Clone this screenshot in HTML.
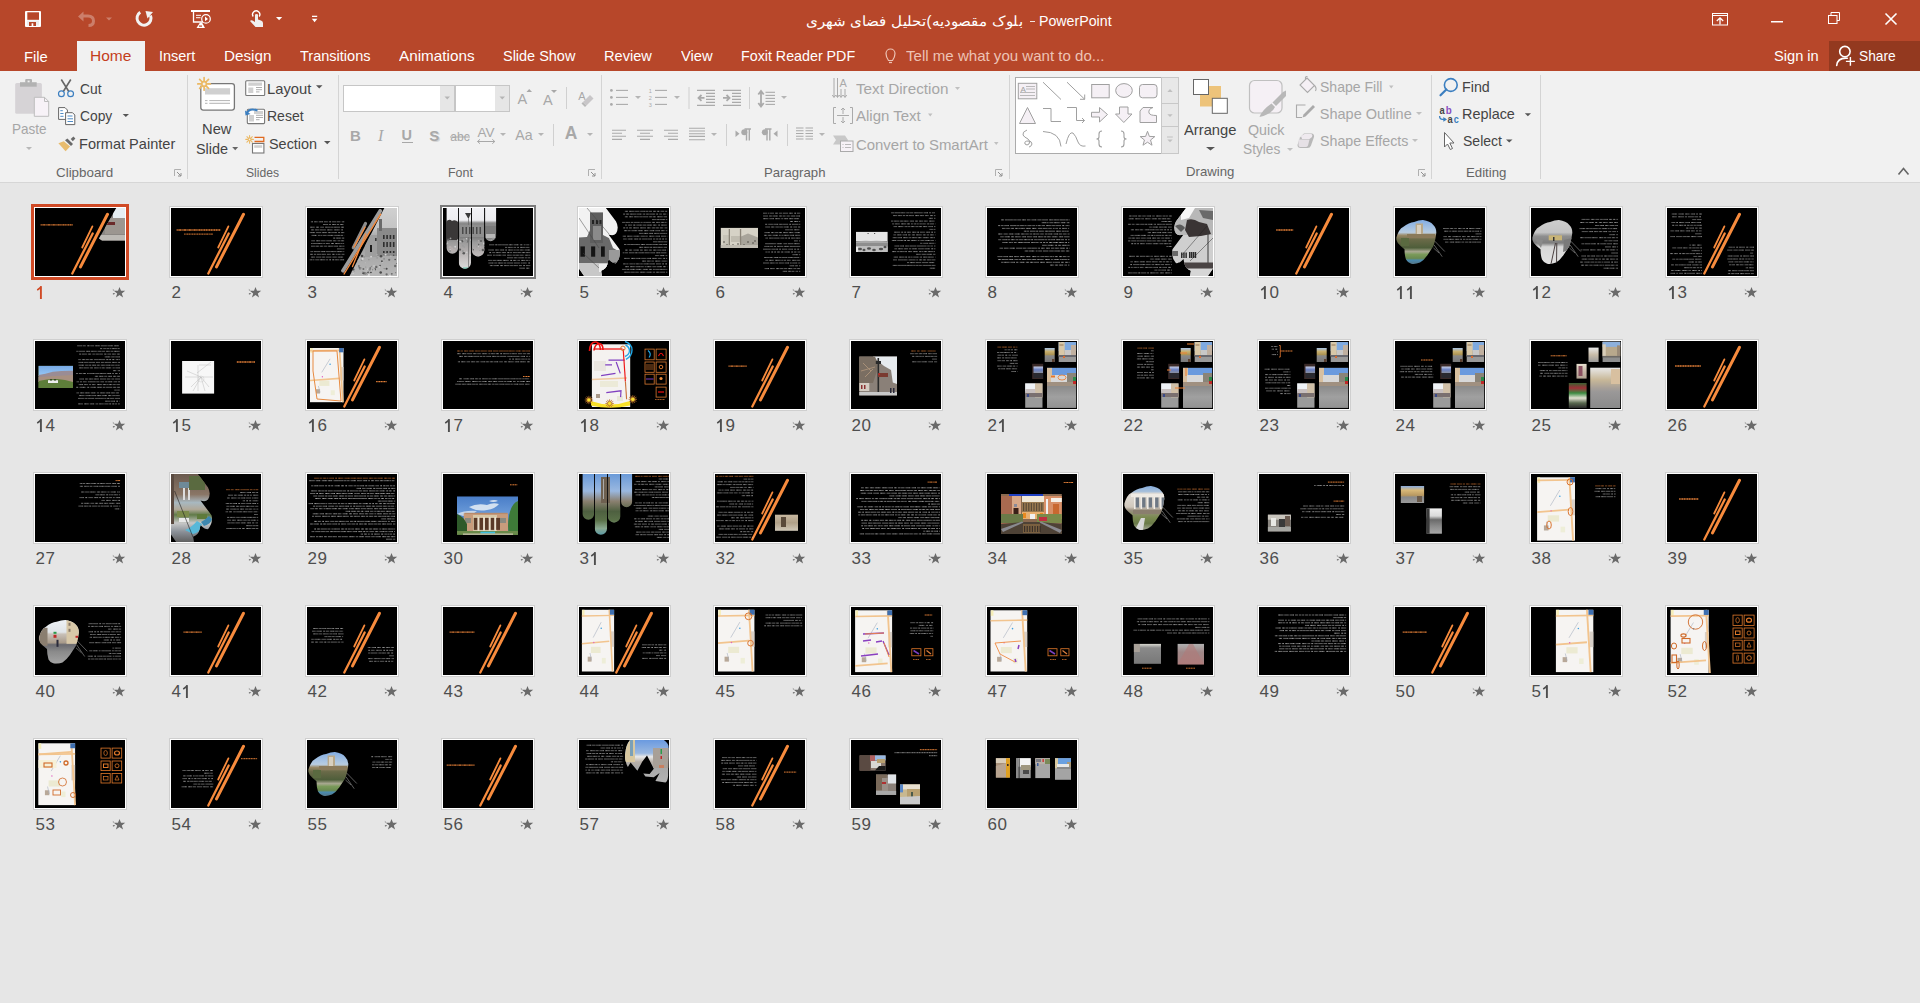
<!DOCTYPE html>
<html><head><meta charset="utf-8"><title>PowerPoint</title>
<style>
html,body{margin:0;padding:0}
body{width:1920px;height:1003px;overflow:hidden;position:relative;background:#E6E6E6;font-family:"Liberation Sans",sans-serif}
.abs{position:absolute}
.tx{position:absolute;white-space:pre;transform-origin:0 0;font-family:"Liberation Sans",sans-serif}
svg{position:absolute;overflow:visible}
</style></head><body>

<div class="abs" style="left:0;top:0;width:1920px;height:71px;background:#B7472A"></div>
<div class="abs" style="left:77px;top:41px;width:68px;height:30px;background:#F1F1F1"></div>
<div class="abs" style="left:1829px;top:41px;width:91px;height:30px;background:#93391F"></div>
<div class="abs" style="left:0;top:71px;width:1920px;height:111px;background:#F1F1F1"></div>
<div class="abs" style="left:0;top:182px;width:1920px;height:1px;background:#D6D6D6"></div>
<div class="abs" style="left:187px;top:75px;width:1px;height:104px;background:#D4D4D4"></div>
<div class="abs" style="left:338px;top:75px;width:1px;height:104px;background:#D4D4D4"></div>
<div class="abs" style="left:601px;top:75px;width:1px;height:104px;background:#D4D4D4"></div>
<div class="abs" style="left:1009px;top:75px;width:1px;height:104px;background:#D4D4D4"></div>
<div class="abs" style="left:1431px;top:75px;width:1px;height:104px;background:#D4D4D4"></div>
<div class="abs" style="left:1540px;top:75px;width:1px;height:104px;background:#D4D4D4"></div>
<div class="abs" style="left:343px;top:85px;width:110px;height:25px;border:1px solid #C6C6C6;background:#FFF"></div>
<div class="abs" style="left:440px;top:86px;width:14px;height:25px;background:#E6E6E6"></div>
<div class="abs" style="left:455px;top:85px;width:53px;height:25px;border:1px solid #C6C6C6;background:#FFF"></div>
<div class="abs" style="left:495px;top:86px;width:14px;height:25px;background:#E6E6E6"></div>

<svg style="left:0;top:0" width="1920" height="183" viewBox="0 0 1920 183"><g><rect x="25" y="11" width="16" height="16" rx="1" fill="#fff"/><rect x="27.3" y="12.3" width="11.7" height="7.5" fill="#B7472A"/><rect x="27" y="20.5" width="12" height="5" fill="#EDEDED"/><rect x="29" y="22" width="7" height="4" fill="#B7472A"/><rect x="31.6" y="23.3" width="1.7" height="2.7" fill="#fff"/><path d="M78 16.5 L83.5 11.5 L83.5 14.5 L88 14.5 Q95 14.5 95 21 Q95 27 88.5 27 L88.5 24 Q92 24 92 21 Q92 17.5 88 17.5 L83.5 17.5 L83.5 21.5 Z" fill="#fff" opacity="0.3"/><path d="M106 17.5 L112 17.5 L109.0 20.5 Z" fill="rgba(255,255,255,0.3)"/><path d="M140.2 12.3 A7 7 0 1 0 150.5 15.5" fill="none" stroke="#F2F2F2" stroke-width="3"/><path d="M145.5 11 L153 12 L147.5 18.5 Z" fill="#F2F2F2"/><rect x="191" y="10" width="19" height="2" fill="#fff"/><path d="M193.5 12 L193.5 22 L203 22" fill="none" stroke="#fff" stroke-width="1.3"/><path d="M196 15.3 H201 M196 17.7 H200.5" stroke="#fff" stroke-width="1"/><circle cx="206" cy="18.9" r="4.3" fill="none" stroke="#fff" stroke-width="1.2"/><path d="M205 16.5 L208 18.9 L205 21.3 Z" fill="#fff"/><path d="M200 22.5 L196.5 28 L205 28 L202 22.5 Z" fill="#fff"/><rect x="199" y="25.5" width="3" height="1.2" fill="#B7472A"/><path d="M253.2 16.5 A3.6 3.6 0 1 1 259.2 16.5" fill="none" stroke="#fff" stroke-width="1.4"/><path d="M255 14.5 Q256.6 13.5 258 14.5 L258 19.5 L261 20.5 Q263 21.2 263 23 L263 27 L255.5 27 L250 21 Q251 19.8 252.5 20.6 L255 22 Z" fill="#F0F0F0"/><path d="M276 17 L282.2 17 L279.1 20.2 Z" fill="#fff"/><rect x="312" y="15.7" width="5.2" height="1.3" fill="#fff"/><path d="M311.8 18.8 L317.4 18.8 L314.6 22.2 Z" fill="#fff"/><rect x="1712.5" y="13.5" width="15" height="11.5" fill="none" stroke="#fff" stroke-width="1"/><path d="M1713 15.5 H1727" stroke="#fff" stroke-width="1"/><path d="M1720 24.5 V17.8 M1716.8 21 L1720 17.8 L1723.2 21" fill="none" stroke="#fff" stroke-width="1.3"/><rect x="1771" y="21" width="12" height="1.5" fill="#fff"/><rect x="1828.5" y="15.5" width="8.5" height="8" fill="none" stroke="#fff" stroke-width="1"/><path d="M1831 15.5 V12.5 H1839.5 V20.5 H1837" fill="none" stroke="#fff" stroke-width="1"/><path d="M1885.5 13.5 L1896.5 24.5 M1896.5 13.5 L1885.5 24.5" stroke="#fff" stroke-width="1.6"/><circle cx="1844.9" cy="51.6" r="5.2" fill="none" stroke="#fff" stroke-width="1.6"/><path d="M1836.7 65.5 Q1837.5 57.5 1847.3 58.2" fill="none" stroke="#fff" stroke-width="1.6" stroke-linecap="round"/><path d="M1845.9 61.4 H1854.9 M1850.4 57.1 V65.7" stroke="#fff" stroke-width="1.4"/><path d="M888.5 60.5 Q886 57 886 53.5 A4.5 4.5 0 0 1 895 53.5 Q895 57 892.5 60.5 Z" fill="none" stroke="#EDC3B5" stroke-width="1.2"/><path d="M889 62.5 H892" stroke="#EDC3B5" stroke-width="1.3"/></g><rect x="15.2" y="83" width="26.7" height="30.7" rx="1.5" fill="#D6D3D6"/><rect x="20" y="82.2" width="16.7" height="4.5" fill="#B2B2B2"/><rect x="25.2" y="79" width="6.8" height="4" rx="1" fill="#B2B2B2"/><rect x="27.6" y="80.6" width="2" height="1.7" fill="#F1F1F1"/><path d="M34.3 97.3 H44.5 L48.7 101.5 V116.3 H34.3 Z" fill="#F7F2F7" stroke="#BDBDBD" stroke-width="1"/><path d="M44.5 97.3 V101.5 H48.7" fill="none" stroke="#BDBDBD" stroke-width="1"/><path d="M26 147 L32 147 L29.0 150 Z" fill="#B8B8B8"/><path d="M61.3 79.5 L68.8 91.5 M70.8 79.5 L63.3 91.5" stroke="#666" stroke-width="1.6"/><circle cx="61.4" cy="93.7" r="2.9" fill="none" stroke="#3C7FC0" stroke-width="1.2"/><circle cx="70.6" cy="93.7" r="2.9" fill="none" stroke="#3C7FC0" stroke-width="1.2"/><path d="M58.6 107.6 H65 L67.4 110 V119.4 H58.6 Z" fill="#fff" stroke="#666" stroke-width="1"/><path d="M60.3 110.7 H62.8 M60.3 113.5 H63.5 M60.3 116.3 H63.5" stroke="#3C7FC0" stroke-width="0.9"/><path d="M65.6 112.7 H72.5 L74.8 115 V124.6 H65.6 Z" fill="#fff" stroke="#666" stroke-width="1"/><path d="M67.5 116 H72.5 M67.5 118.8 H73 M67.5 121.5 H73" stroke="#3C7FC0" stroke-width="0.9"/><path d="M122.7 114 L129 114 L125.85 117 Z" fill="#555"/><path d="M58.4 143.3 L63.8 141.2 L70.1 146.6 L65.6 151.3 Z" fill="#E8BC6E"/><path d="M65 140.3 L67.4 138.5 L73 143.9 L71 146 Z" fill="#6A6A6A"/><path d="M70.7 139.1 L73.4 136.4 L75.4 138.5 L72.8 141.2 Z" fill="#6A6A6A"/><path d="M174.5 176.0 V169.5 H181.0" fill="none" stroke="#B0B0B0" stroke-width="1"/><path d="M177.0 172.0 L181.0 176.0 M181.0 173.0 V176.0 H178.0" fill="none" stroke="#909090" stroke-width="1"/><path d="M588.5 176.0 V169.5 H595.0" fill="none" stroke="#B0B0B0" stroke-width="1"/><path d="M591.0 172.0 L595.0 176.0 M595.0 173.0 V176.0 H592.0" fill="none" stroke="#909090" stroke-width="1"/><path d="M995.5 176.0 V169.5 H1002.0" fill="none" stroke="#B0B0B0" stroke-width="1"/><path d="M998.0 172.0 L1002.0 176.0 M1002.0 173.0 V176.0 H999.0" fill="none" stroke="#909090" stroke-width="1"/><path d="M1418.5 176.0 V169.5 H1425.0" fill="none" stroke="#B0B0B0" stroke-width="1"/><path d="M1421.0 172.0 L1425.0 176.0 M1425.0 173.0 V176.0 H1422.0" fill="none" stroke="#909090" stroke-width="1"/><rect x="200.8" y="83.6" width="33.6" height="26.5" rx="2.5" fill="#fff" stroke="#777" stroke-width="1.3"/><rect x="205" y="88.2" width="25.1" height="6.3" fill="#D0D0D0"/><path d="M205 100.6 H207.5 M209.3 100.6 H230 M205 103.3 H207.5 M209.3 103.3 H230" stroke="#A0A0A0" stroke-width="0.8"/><circle cx="204.1" cy="83.9" r="4" fill="#F1F1F1"/><path d="M206.40 83.90 L210.40 83.90 M205.73 85.53 L208.55 88.35 M204.10 86.20 L204.10 90.20 M202.47 85.53 L199.65 88.35 M201.80 83.90 L197.80 83.90 M202.47 82.27 L199.65 79.45 M204.10 81.60 L204.10 77.60 M205.73 82.27 L208.55 79.45" stroke="#EBB965" stroke-width="1.7" stroke-linecap="round"/><circle cx="204.1" cy="83.9" r="2.415" fill="none" stroke="#EBB965" stroke-width="1.36"/><path d="M232.2 147 L238.2 147 L235.2 150.2 Z" fill="#666"/><rect x="245.7" y="80.8" width="19" height="14.7" rx="1" fill="#fff" stroke="#777" stroke-width="1.1"/><rect x="248.3" y="82.5" width="13.7" height="3.3" fill="#D0D0D0"/><rect x="248.3" y="87.5" width="5" height="5.5" fill="#D0D0D0"/><path d="M256 87.5 H262 M256 89.7 H262 M256 91.9 H259.5" stroke="#999" stroke-width="0.8"/><path d="M316 85.3 L322.5 85.3 L319.25 88.5 Z" fill="#555"/><rect x="247.3" y="109.3" width="17.3" height="14.3" rx="1" fill="#fff" stroke="#777" stroke-width="1.1"/><rect x="249" y="115" width="5" height="6.5" fill="#D0D0D0"/><rect x="254" y="111" width="9" height="3" fill="#D0D0D0"/><path d="M256 115.3 H263 M256 117.5 H263 M256 119.7 H259.5" stroke="#999" stroke-width="0.8"/><path d="M246.5 114 Q249 107.5 257.5 110.5" fill="none" stroke="#3C7FC0" stroke-width="2"/><path d="M245 110.5 L245.5 115.5 L250.5 114 Z" fill="#3C7FC0"/><path d="M251.00 139.40 L253.40 139.40 M250.59 140.39 L252.29 142.09 M249.60 140.80 L249.60 143.20 M248.61 140.39 L246.91 142.09 M248.20 139.40 L245.80 139.40 M248.61 138.41 L246.91 136.71 M249.60 138.00 L249.60 135.60 M250.59 138.41 L252.29 136.71" stroke="#EBB965" stroke-width="1.1" stroke-linecap="round"/><circle cx="249.6" cy="139.4" r="1.47" fill="none" stroke="#EBB965" stroke-width="0.8800000000000001"/><path d="M254.5 137.3 H263.8 V141.5 H254.5" fill="none" stroke="#E06A20" stroke-width="1.3"/><rect x="252.5" y="143.5" width="11.4" height="9.5" fill="#fff" stroke="#777" stroke-width="1.1"/><rect x="254.2" y="145.2" width="8" height="2.6" fill="#D0D0D0"/><path d="M324 141 L330.5 141 L327.25 144.3 Z" fill="#555"/><text x="517.6" y="104" font-family="Liberation Sans" font-size="14.5" fill="#A8A8A8">A</text><path d="M526.5 92 L529.2 89 L532 92 Z" fill="#A8A8A8"/><text x="543" y="104.8" font-family="Liberation Sans" font-size="14.5" fill="#A8A8A8">A</text><path d="M551 90 L557 90 L554 93 Z" fill="#A8A8A8"/><rect x="566" y="87" width="1" height="22" fill="#D0D0D0"/><text x="578.3" y="100" font-family="Liberation Sans" font-size="11" fill="#A8A8A8">A</text><path d="M590 95 L593.5 98.5 L586.5 105.5 L583 102 Z" fill="#C8C6C8"/><path d="M583 102 L586.5 105.5 L585 107 L581.5 103.5 Z" fill="#B8B8B8"/><path d="M444.5 96.5 L450 96.5 L447.25 99.5 Z" fill="#B5B5B5"/><path d="M499.5 96.5 L505 96.5 L502.25 99.5 Z" fill="#B5B5B5"/><text x="350" y="141" font-family="Liberation Sans" font-weight="700" font-size="15" fill="#A8A8A8">B</text><text x="378" y="141" font-family="Liberation Serif" font-style="italic" font-size="16" fill="#A8A8A8">I</text><text x="401.5" y="139.6" font-family="Liberation Sans" font-weight="700" font-size="14.5" fill="#A8A8A8">U</text><rect x="402" y="142" width="11" height="1" fill="#A8A8A8"/><text x="430.5" y="141.5" font-family="Liberation Sans" font-weight="700" font-size="15" fill="#D6D6D6">S</text><text x="429.3" y="140.8" font-family="Liberation Sans" font-weight="700" font-size="15" fill="#A8A8A8">S</text><text x="450.3" y="141" font-family="Liberation Sans" font-size="13" fill="#A8A8A8" textLength="19.5" lengthAdjust="spacingAndGlyphs">abc</text><rect x="450" y="136.5" width="20" height="1" fill="#A8A8A8"/><text x="477.5" y="137" font-family="Liberation Sans" font-size="13" fill="#A8A8A8" textLength="17" lengthAdjust="spacingAndGlyphs">AV</text><path d="M477.5 141.5 H494.8 M480 139.3 L477.5 141.5 L480 143.7 M492.3 139.3 L494.8 141.5 L492.3 143.7" fill="none" stroke="#A8A8A8" stroke-width="1"/><path d="M500 133 L506 133 L503.0 136 Z" fill="#B5B5B5"/><text x="515.3" y="140" font-family="Liberation Sans" font-size="15" fill="#A8A8A8" textLength="17.3" lengthAdjust="spacingAndGlyphs">Aa</text><path d="M538 133 L544 133 L541.0 136 Z" fill="#B5B5B5"/><rect x="553" y="124" width="1" height="22" fill="#D0D0D0"/><text x="564.7" y="139" font-family="Liberation Sans" font-weight="700" font-size="17.5" fill="#A8A8A8">A</text><path d="M587 133 L593 133 L590.0 136 Z" fill="#B5B5B5"/><circle cx="611.4" cy="90.4" r="1.4" fill="#AAAAAA"/><path d="M616 90.4 H628" stroke="#AAAAAA" stroke-width="1.1"/><circle cx="611.4" cy="97.4" r="1.4" fill="#AAAAAA"/><path d="M616 97.4 H628" stroke="#AAAAAA" stroke-width="1.1"/><circle cx="611.4" cy="104.4" r="1.4" fill="#AAAAAA"/><path d="M616 104.4 H628" stroke="#AAAAAA" stroke-width="1.1"/><path d="M635 96 L641 96 L638.0 99 Z" fill="#B5B5B5"/><path d="M655 90.4 H667" stroke="#AAAAAA" stroke-width="1.1"/><path d="M655 97.4 H667" stroke="#AAAAAA" stroke-width="1.1"/><path d="M655 104.4 H667" stroke="#AAAAAA" stroke-width="1.1"/><text x="648.7" y="92.5" font-family="Liberation Sans" font-size="5.5" fill="#AAA">1</text><text x="648.7" y="99.5" font-family="Liberation Sans" font-size="5.5" fill="#AAA">2</text><text x="648.7" y="106.5" font-family="Liberation Sans" font-size="5.5" fill="#AAA">3</text><path d="M674 96 L680 96 L677.0 99 Z" fill="#B5B5B5"/><rect x="688.5" y="87" width="1" height="22" fill="#D0D0D0"/><path d="M697 90.4 H715 M697 105.4 H715 M706 93.4 H715 M706 96.4 H715 M706 99.4 H715 M706 102.4 H715" stroke="#AAAAAA" stroke-width="1.1"/><path d="M704.5 97.9 H699 M701.5 95 L698.5 97.9 L701.5 100.8" fill="none" stroke="#AAAAAA" stroke-width="1.8"/><path d="M723 90.4 H741 M723 105.4 H741 M732 93.4 H741 M732 96.4 H741 M732 99.4 H741 M732 102.4 H741" stroke="#AAAAAA" stroke-width="1.1"/><path d="M723 97.9 H729 M726.5 95 L729.5 97.9 L726.5 100.8" fill="none" stroke="#AAAAAA" stroke-width="1.8"/><rect x="749" y="87" width="1" height="22" fill="#D0D0D0"/><path d="M761 91.5 V106 M758.3 94.5 L761 91 L763.7 94.5 M758.3 103 L761 106.5 L763.7 103" fill="none" stroke="#AAAAAA" stroke-width="1.8"/><path d="M765.5 92.3 H775" stroke="#AAAAAA" stroke-width="1.1"/><path d="M765.5 95.4 H775" stroke="#AAAAAA" stroke-width="1.1"/><path d="M765.5 98.4 H775" stroke="#AAAAAA" stroke-width="1.1"/><path d="M765.5 101.4 H775" stroke="#AAAAAA" stroke-width="1.1"/><path d="M765.5 104.4 H775" stroke="#AAAAAA" stroke-width="1.1"/><path d="M781 96 L787 96 L784.0 99 Z" fill="#B5B5B5"/><path d="M612 130.2 H626 M612 133.2 H622 M612 136.2 H626 M612 139.4 H622" stroke="#AAAAAA" stroke-width="1.1"/><path d="M637 130.2 H653 M640 133.2 H650 M637 136.2 H653 M640 139.4 H650" stroke="#AAAAAA" stroke-width="1.1"/><path d="M664 130.2 H678 M668 133.2 H678 M664 136.2 H678 M668 139.4 H678" stroke="#AAAAAA" stroke-width="1.1"/><path d="M689 128.2 H705 M689 131 H705 M689 133.7 H705 M689 136.4 H705 M689 139.8 H705" stroke="#AAAAAA" stroke-width="1.1"/><path d="M711 133 L717 133 L714.0 136 Z" fill="#B5B5B5"/><rect x="726" y="124" width="1" height="22" fill="#D0D0D0"/><path d="M735.5 130.5 L739.5 133.8 L735.5 137 Z" fill="#AAAAAA"/><path d="M744.5 129 H751 M746.5 129 V140.5 M749.3 129 V140.5" stroke="#AAAAAA" stroke-width="1.4" fill="none"/><circle cx="744.3" cy="132.3" r="3" fill="#AAAAAA"/><path d="M765 129 H771.5 M767 129 V140.5 M769.8 129 V140.5" stroke="#AAAAAA" stroke-width="1.4" fill="none"/><circle cx="764.8" cy="132.3" r="3" fill="#AAAAAA"/><path d="M777.5 130.5 L773.5 133.8 L777.5 137 Z" fill="#AAAAAA"/><rect x="787" y="124" width="1" height="22" fill="#D0D0D0"/><path d="M796 128 H803.5 M805.5 128 H813" stroke="#AAAAAA" stroke-width="1.1"/><path d="M796 130.8 H803.5 M805.5 130.8 H813" stroke="#AAAAAA" stroke-width="1.1"/><path d="M796 133.5 H803.5 M805.5 133.5 H813" stroke="#AAAAAA" stroke-width="1.1"/><path d="M796 136.2 H803.5 M805.5 136.2 H813" stroke="#AAAAAA" stroke-width="1.1"/><path d="M796 139 H803.5 M805.5 139 H813" stroke="#AAAAAA" stroke-width="1.1"/><path d="M819 133 L825 133 L822.0 136 Z" fill="#B5B5B5"/><path d="M834 78 V97 M837.5 78 V97 M841 89 V97 M845 89 V97" stroke="#AAAAAA" stroke-width="1"/><path d="M832.3 95 L834 97.5 L835.7 95 M835.8 95 L837.5 97.5 L839.2 95 M839.3 95 L841 97.5 L842.7 95 M843.3 95 L845 97.5 L846.7 95" fill="none" stroke="#AAAAAA" stroke-width="1"/><text x="839.5" y="87" font-family="Liberation Sans" font-size="11" fill="#AAAAAA">A</text><path d="M955 87 L960 87 L957.5 90 Z" fill="#C0C0C0"/><path d="M836 107.5 H833.5 V123.5 H836 M850 107.5 H852.5 V123.5 H850" fill="none" stroke="#AAAAAA" stroke-width="1"/><path d="M843 108 V114 M841 110 L843 108 L845 110 M843 117 V123 M841 121 L843 123 L845 121 M837 115.5 H849" fill="none" stroke="#AAAAAA" stroke-width="1"/><path d="M928 113.5 L932.5 113.5 L930.25 116.5 Z" fill="#C0C0C0"/><path d="M833 135.5 H845 L848 140 L845 144.5 H833 L836 140 Z" fill="#C8C8C8"/><rect x="840.5" y="141" width="12.5" height="10.5" fill="#F7F2F7" stroke="#AAAAAA" stroke-width="1"/><path d="M842.5 144.5 H843.5 M845 144.5 H851 M842.5 147.5 H843.5 M845 147.5 H851" stroke="#AAAAAA" stroke-width="0.8"/><path d="M994 142 L998.5 142 L996.25 145 Z" fill="#C0C0C0"/><rect x="1015.5" y="77.5" width="146" height="76" fill="#fff" stroke="#ABABAB" stroke-width="1"/><rect x="1161.5" y="77.5" width="17" height="76" fill="#E8E8E8" stroke="#C8C8C8" stroke-width="1"/><path d="M1162 103.5 H1178 M1162 126.5 H1178" stroke="#C8C8C8" stroke-width="1"/><path d="M1167.3 92 L1170 89 L1172.7 92 Z" fill="#C0C0C0"/><path d="M1167.3 114.2 L1172.7 114.2 L1170.0 117 Z" fill="#C0C0C0"/><rect x="1167" y="136.5" width="5.8" height="1" fill="#C0C0C0"/><path d="M1167.3 139.5 L1172.7 139.5 L1170.0 142.3 Z" fill="#C0C0C0"/><rect x="1018.3" y="83.3" width="18.5" height="15.5" fill="#F5F0F5" stroke="#A0A0A0" stroke-width="1"/><text x="1020.5" y="91.5" font-family="Liberation Sans" font-size="8" fill="#A0A0A0">A</text><path d="M1026 86.5 H1035 M1026 89 H1035 M1020 92.5 H1035 M1020 95.5 H1035" stroke="#A0A0A0" stroke-width="0.7"/><path d="M1043 82.2 L1061 99.5" stroke="#A0A0A0" stroke-width="1"/><path d="M1067 82.2 L1084.7 99.3 M1084.7 99.3 L1084.7 94.5 M1084.7 99.3 L1080 99.3" stroke="#A0A0A0" stroke-width="1" fill="none"/><rect x="1091.7" y="84.5" width="17.5" height="13.3" fill="#F5F0F5" stroke="#A0A0A0" stroke-width="1"/><ellipse cx="1124" cy="90.5" rx="8.3" ry="6.9" fill="#F5F0F5" stroke="#A0A0A0" stroke-width="1"/><rect x="1139.5" y="84.5" width="17.5" height="13.3" rx="3" fill="#F5F0F5" stroke="#A0A0A0" stroke-width="1"/><path d="M1027.5 107.5 L1035.5 123.5 L1019.5 123.5 Z" fill="#F5F0F5" stroke="#A0A0A0" stroke-width="1"/><path d="M1043 108.5 H1051 V121.5 H1061" fill="none" stroke="#A0A0A0" stroke-width="1"/><path d="M1067 107.5 H1076.5 V120.5 H1084.5 M1082 118 L1084.5 120.5 L1082 123" fill="none" stroke="#A0A0A0" stroke-width="1"/><path d="M1091.5 112.3 H1099.5 V107.5 L1107.5 114.5 L1099.5 122 V117 H1091.5 Z" fill="#F5F0F5" stroke="#A0A0A0" stroke-width="1"/><path d="M1119.5 107 H1128 V114 H1132 L1123.8 122.5 L1115.5 114 H1119.5 Z" fill="#F5F0F5" stroke="#A0A0A0" stroke-width="1"/><path d="M1143 107.5 H1153 Q1148 109 1149 113 Q1150 115.5 1156.5 115.5 V122.5 H1140 V111 Z" fill="#F5F0F5" stroke="#A0A0A0" stroke-width="1"/><path d="M1027 130 Q1022 132 1023 135 Q1024 137 1028 139 Q1031 141 1029 144 Q1027 146 1025 144 Q1024 141 1028 141 Q1032 141 1032 144 Q1031 147 1029 147" fill="none" stroke="#A0A0A0" stroke-width="1"/><path d="M1043 131.5 Q1060 132 1061 146.5" fill="none" stroke="#A0A0A0" stroke-width="1"/><path d="M1066 144 Q1069 131 1073 133 Q1076 136 1078 142 Q1080 147 1085.5 146" fill="none" stroke="#A0A0A0" stroke-width="1"/><path d="M1102 131 Q1099 131 1099 134 V137 Q1099 139 1096.5 139 Q1099 139 1099 141 V144 Q1099 147 1102 147" fill="none" stroke="#A0A0A0" stroke-width="1.1"/><path d="M1121 131 Q1124 131 1124 134 V137 Q1124 139 1126.5 139 Q1124 139 1124 141 V144 Q1124 147 1121 147" fill="none" stroke="#A0A0A0" stroke-width="1.1"/><polygon points="1147.50,131.30 1149.38,136.41 1154.82,136.62 1150.54,139.99 1152.03,145.23 1147.50,142.20 1142.97,145.23 1144.46,139.99 1140.18,136.62 1145.62,136.41" fill="#F5F0F5" stroke="#A0A0A0" stroke-width="1"/><rect x="1200" y="86" width="21" height="20.5" fill="#EDC37A"/><rect x="1193.5" y="79.5" width="15" height="15" fill="#fff" stroke="#666" stroke-width="1"/><rect x="1212.3" y="98.3" width="15" height="15" fill="#fff" stroke="#666" stroke-width="1"/><path d="M1206 147 L1215 147 L1210.5 150.5 Z" fill="#555"/><rect x="1249.5" y="80.5" width="32.5" height="32.5" rx="5" fill="#F5F0F5" stroke="#C0C0C0" stroke-width="1.2"/><path d="M1286 90.5 L1286 96 L1276 106 L1272.5 102.5 L1283 92 Z" fill="#B8B8B8"/><path d="M1271.5 103.5 L1275 107 Q1272 114 1259.5 117 Q1262 110 1271.5 103.5 Z" fill="#B8B8B8"/><path d="M1287 148 L1293 148 L1290.0 151 Z" fill="#C0C0C0"/><path d="M1307 78 L1314.5 85.5 L1307.5 92.5 L1300 85 Z" fill="#F5F0F5" stroke="#AAAAAA" stroke-width="1.1"/><path d="M1305.5 79 Q1305 76 1307.5 76.5 M1314.5 85.5 Q1317 88 1315.5 91" fill="none" stroke="#AAAAAA" stroke-width="1.1"/><path d="M1389 85.5 L1393.5 85.5 L1391.25 88.5 Z" fill="#C0C0C0"/><path d="M1305.5 105 H1296.5 V117.5 H1302" fill="none" stroke="#AAAAAA" stroke-width="1.1"/><path d="M1313 105 L1315 107 L1305.5 116.5 L1302.5 117.5 L1303.5 114.5 Z" fill="#AAAAAA"/><path d="M1416 112 L1422 112 L1419.0 115 Z" fill="#C0C0C0"/><path d="M1300 137.5 L1304 133.5 H1312 Q1314.5 134 1314 137 L1311 145.5 Q1310 148 1307.5 148 H1300.5 Q1297.5 148 1297.5 145 Z" fill="#B8B8B8"/><path d="M1301 136 L1304.5 134 H1311.5 Q1313 135 1312 137 L1309.5 139 H1302 Z" fill="#EFEAEF"/><path d="M1298.5 139.5 H1309.5 L1308 145.5 Q1307.5 147 1305.5 147 H1300 Q1298.5 147 1298.5 145 Z" fill="#E6E1E6"/><path d="M1412 139 L1418 139 L1415.0 142 Z" fill="#C0C0C0"/><circle cx="1450.8" cy="85" r="6.4" fill="none" stroke="#3C7FC0" stroke-width="1.6"/><path d="M1446.3 89.5 L1440.5 95.3" stroke="#3C7FC0" stroke-width="2.2" stroke-linecap="round"/><text x="1439.5" y="113.9" font-family="Liberation Sans" font-weight="700" font-size="11" fill="#444" textLength="5.2" lengthAdjust="spacingAndGlyphs">a</text><text x="1445.8" y="113.9" font-family="Liberation Sans" font-weight="700" font-size="11" fill="#8A4FC0" textLength="6" lengthAdjust="spacingAndGlyphs">b</text><text x="1447.6" y="122.7" font-family="Liberation Sans" font-weight="700" font-size="11" fill="#444" textLength="5.2" lengthAdjust="spacingAndGlyphs">a</text><text x="1453.8" y="122.7" font-family="Liberation Sans" font-weight="700" font-size="11" fill="#3C7FC0" textLength="5" lengthAdjust="spacingAndGlyphs">c</text><path d="M1439.6 116 Q1439.6 119.3 1442.5 119.3 H1446" fill="none" stroke="#3C7FC0" stroke-width="1.3"/><path d="M1443.3 117 L1447 119.4 L1443.3 121.8 Z" fill="#3C7FC0"/><path d="M1524.8 113.2 L1531 113.2 L1527.9 116.2 Z" fill="#555"/><path d="M1444.5 132.5 V147 L1447.5 144 L1450.3 149.5 L1452.5 148.5 L1449.8 143 H1454 Z" fill="#fff" stroke="#666" stroke-width="1"/><path d="M1506 139.5 L1512.5 139.5 L1509.25 142.5 Z" fill="#555"/><path d="M1898.5 174.5 L1903.5 168.5 L1908.5 174.5" fill="none" stroke="#666" stroke-width="1.6"/></svg>
<div class="abs" style="left:31px;top:204px;width:92px;height:70px;border:3px solid #D04A26;background:#fff"></div>
<div class="abs" style="left:35px;top:208px;width:90px;height:68px;background:#000"></div>
<svg style="left:35px;top:208px" width="90" height="68" viewBox="0 0 90 68"><clipPath id="c1"><polygon points="81.3,0 90,0 90,32.5 67,32.5 64,30.5"/></clipPath><g clip-path="url(#c1)"><rect x="60" y="0" width="30" height="33" fill="#8C8884" /><rect x="78" y="0" width="12" height="10" fill="#E6EEF2" /><rect x="70" y="10" width="20" height="16" fill="#9C9690" /><rect x="72" y="14" width="8" height="3" fill="#6A2A2A" /><rect x="64" y="27" width="26" height="6" fill="#BDBAB5" /></g><path d="M5.6 16.8 H38" stroke="#F78B3D" stroke-width="1.3" stroke-dasharray="1.2 0.3 0.7 0.3 2 0.4" opacity="0.9"/><path d="M37.3 65.5 L57.7 25.4" stroke="#F78B3D" stroke-width="2.3" stroke-linecap="round"/><path d="M45.5 58.9 L72.5 6.3" stroke="#F78B3D" stroke-width="3.0" stroke-linecap="round"/><path d="M47.2 39.5 L57.4 18.4" stroke="#F78B3D" stroke-width="1.8" stroke-linecap="round"/></svg><svg style="left:113px;top:286px" width="14" height="14" viewBox="0 0 14 14"><path d="M6.5 0.9 L8 4.8 L12.2 4.8 L8.8 7.4 L10.1 11.6 L6.5 9 L2.9 11.6 L4.2 7.4 L0.8 4.8 L5 4.8 Z" fill="#6A6A6A"/><path d="M-0.1 2.8 L1.1 4.4 L-0.1 4.6 Z M-0.1 6.9 L2.3 7.3 L1 8.5 L-0.1 8.5 Z" fill="#7A7A7A"/></svg>
<div class="abs" style="left:169px;top:206px;width:92px;height:70px;border:1px solid #CFCFCF;background:#fff"></div>
<div class="abs" style="left:171px;top:208px;width:90px;height:68px;background:#000"></div>
<svg style="left:171px;top:208px" width="90" height="68" viewBox="0 0 90 68"><path d="M5.6 22 H49.4" stroke="#F78B3D" stroke-width="1.3" stroke-dasharray="1.2 0.3 0.7 0.3 2 0.4" opacity="0.9"/><path d="M13.1 26.1 H41.8" stroke="#F78B3D" stroke-width="1.0" stroke-dasharray="1.2 0.3 0.7 0.3 2 0.4" opacity="0.9"/><path d="M37.3 65.5 L57.7 25.4" stroke="#F78B3D" stroke-width="2.3" stroke-linecap="round"/><path d="M45.5 58.9 L72.5 6.3" stroke="#F78B3D" stroke-width="3.0" stroke-linecap="round"/><path d="M47.2 39.5 L57.4 18.4" stroke="#F78B3D" stroke-width="1.8" stroke-linecap="round"/></svg><svg style="left:249px;top:286px" width="14" height="14" viewBox="0 0 14 14"><path d="M6.5 0.9 L8 4.8 L12.2 4.8 L8.8 7.4 L10.1 11.6 L6.5 9 L2.9 11.6 L4.2 7.4 L0.8 4.8 L5 4.8 Z" fill="#6A6A6A"/><path d="M-0.1 2.8 L1.1 4.4 L-0.1 4.6 Z M-0.1 6.9 L2.3 7.3 L1 8.5 L-0.1 8.5 Z" fill="#7A7A7A"/></svg>
<div class="abs" style="left:305px;top:206px;width:92px;height:70px;border:1px solid #CFCFCF;background:#fff"></div>
<div class="abs" style="left:307px;top:208px;width:90px;height:68px;background:#000"></div>
<svg style="left:307px;top:208px" width="90" height="68" viewBox="0 0 90 68"><clipPath id="c3"><polygon points="77.3,0 90,0 90,68 42.6,68"/></clipPath><g clip-path="url(#c3)"><defs><linearGradient id="g3" x1="0" y1="0" x2="0" y2="1"><stop offset="0" stop-color="#D0D0D0"/><stop offset="0.3" stop-color="#C4C4C4"/><stop offset="0.5" stop-color="#9A9A9A"/><stop offset="0.68" stop-color="#A8A8A8"/><stop offset="1" stop-color="#B8B8B8"/></linearGradient></defs><rect x="40" y="0" width="50" height="68" fill="url(#g3)"/><rect x="70" y="20" width="20" height="28" fill="#8A8A8A" /><rect x="72" y="11" width="3" height="12" fill="#6A6A6A" /><rect x="58" y="27" width="12" height="22" fill="#9E9E9E" /><rect x="76.0" y="27" width="1.6" height="4" fill="#2E2E2E" /><rect x="79.3" y="27" width="1.6" height="4" fill="#2E2E2E" /><rect x="82.6" y="27" width="1.6" height="4" fill="#2E2E2E" /><rect x="85.9" y="27" width="1.6" height="4" fill="#2E2E2E" /><rect x="76.0" y="34" width="1.6" height="5" fill="#2E2E2E" /><rect x="79.3" y="34" width="1.6" height="5" fill="#2E2E2E" /><rect x="82.6" y="34" width="1.6" height="5" fill="#2E2E2E" /><rect x="85.9" y="34" width="1.6" height="5" fill="#2E2E2E" /><rect x="76.0" y="43" width="1.6" height="2" fill="#2E2E2E" /><rect x="79.3" y="43" width="1.6" height="2" fill="#2E2E2E" /><rect x="82.6" y="43" width="1.6" height="2" fill="#2E2E2E" /><rect x="85.9" y="43" width="1.6" height="2" fill="#2E2E2E" /><rect x="63" y="37" width="2" height="7" fill="#1E1E1E" /><rect x="68" y="30" width="1.6" height="3" fill="#3A3A3A" /><circle cx="51.9" cy="58.0" r="0.73" fill="#4A4A4A"/><circle cx="63.7" cy="58.8" r="0.95" fill="#B8B8B8"/><circle cx="53.0" cy="51.2" r="1.30" fill="#B8B8B8"/><circle cx="67.0" cy="58.1" r="0.76" fill="#D8D8D8"/><circle cx="51.6" cy="49.3" r="1.23" fill="#B8B8B8"/><circle cx="77.1" cy="60.8" r="0.46" fill="#4A4A4A"/><circle cx="42.1" cy="63.2" r="1.14" fill="#8A8A8A"/><circle cx="63.6" cy="61.8" r="1.19" fill="#B8B8B8"/><circle cx="59.7" cy="63.6" r="0.80" fill="#D8D8D8"/><circle cx="83.9" cy="48.1" r="0.52" fill="#D8D8D8"/><circle cx="52.9" cy="60.8" r="1.10" fill="#8A8A8A"/><circle cx="61.1" cy="64.3" r="0.92" fill="#4A4A4A"/><circle cx="69.3" cy="58.9" r="1.21" fill="#6A6A6A"/><circle cx="82.8" cy="67.8" r="1.00" fill="#D8D8D8"/><circle cx="74.9" cy="53.2" r="0.89" fill="#4A4A4A"/><circle cx="68.5" cy="61.7" r="0.59" fill="#4A4A4A"/><circle cx="53.4" cy="48.7" r="0.83" fill="#B8B8B8"/><circle cx="44.4" cy="63.6" r="0.77" fill="#D8D8D8"/><circle cx="41.0" cy="55.4" r="0.77" fill="#6A6A6A"/><circle cx="42.2" cy="59.5" r="0.44" fill="#4A4A4A"/><circle cx="56.5" cy="65.4" r="1.28" fill="#4A4A4A"/><circle cx="51.8" cy="46.8" r="0.41" fill="#6A6A6A"/><circle cx="70.0" cy="46.7" r="0.58" fill="#B8B8B8"/><circle cx="54.6" cy="51.8" r="1.02" fill="#8A8A8A"/><circle cx="55.7" cy="67.1" r="1.21" fill="#B8B8B8"/><circle cx="58.8" cy="65.1" r="0.75" fill="#4A4A4A"/><circle cx="74.0" cy="48.3" r="1.28" fill="#4A4A4A"/><circle cx="53.6" cy="60.0" r="1.04" fill="#8A8A8A"/><circle cx="61.9" cy="51.7" r="0.67" fill="#8A8A8A"/><circle cx="40.6" cy="55.1" r="0.92" fill="#6A6A6A"/><circle cx="58.8" cy="59.0" r="0.52" fill="#8A8A8A"/><circle cx="63.3" cy="60.9" r="0.72" fill="#8A8A8A"/><circle cx="76.9" cy="46.5" r="0.45" fill="#6A6A6A"/><circle cx="88.2" cy="51.5" r="0.81" fill="#4A4A4A"/><circle cx="70.1" cy="49.9" r="0.57" fill="#8A8A8A"/><circle cx="82.2" cy="51.8" r="1.11" fill="#6A6A6A"/><circle cx="78.6" cy="46.6" r="0.91" fill="#D8D8D8"/><circle cx="55.5" cy="50.9" r="1.12" fill="#D8D8D8"/><circle cx="56.4" cy="60.9" r="0.98" fill="#6A6A6A"/><circle cx="45.1" cy="53.1" r="0.70" fill="#D8D8D8"/><circle cx="61.9" cy="64.8" r="0.55" fill="#8A8A8A"/><circle cx="77.1" cy="50.8" r="0.91" fill="#8A8A8A"/><circle cx="51.3" cy="48.7" r="0.88" fill="#D8D8D8"/><circle cx="55.8" cy="64.4" r="0.92" fill="#8A8A8A"/><circle cx="57.0" cy="64.2" r="0.48" fill="#4A4A4A"/><circle cx="57.3" cy="48.9" r="0.66" fill="#8A8A8A"/><circle cx="63.2" cy="60.0" r="0.66" fill="#4A4A4A"/><circle cx="60.5" cy="66.3" r="0.54" fill="#6A6A6A"/><circle cx="63.9" cy="64.3" r="0.96" fill="#4A4A4A"/><circle cx="61.7" cy="66.9" r="1.23" fill="#D8D8D8"/><circle cx="41.6" cy="56.0" r="1.08" fill="#4A4A4A"/><circle cx="88.2" cy="58.0" r="1.20" fill="#6A6A6A"/><circle cx="82.9" cy="67.4" r="0.51" fill="#D8D8D8"/><circle cx="42.3" cy="65.9" r="1.02" fill="#D8D8D8"/><circle cx="84.8" cy="65.8" r="0.92" fill="#6A6A6A"/><circle cx="64.1" cy="48.7" r="0.85" fill="#D8D8D8"/><circle cx="73.1" cy="57.5" r="0.77" fill="#4A4A4A"/><circle cx="45.7" cy="48.8" r="1.27" fill="#4A4A4A"/><circle cx="63.9" cy="63.2" r="0.72" fill="#D8D8D8"/><circle cx="46.1" cy="65.5" r="0.51" fill="#D8D8D8"/><circle cx="79.6" cy="66.3" r="1.13" fill="#6A6A6A"/><circle cx="64.4" cy="58.6" r="0.76" fill="#8A8A8A"/><circle cx="52.4" cy="59.6" r="0.87" fill="#6A6A6A"/><circle cx="63.6" cy="63.1" r="0.40" fill="#6A6A6A"/><circle cx="78.8" cy="47.0" r="0.44" fill="#B8B8B8"/><circle cx="88.7" cy="64.8" r="0.48" fill="#4A4A4A"/><circle cx="64.5" cy="49.5" r="0.46" fill="#B8B8B8"/><circle cx="72.3" cy="58.9" r="0.72" fill="#D8D8D8"/><circle cx="89.4" cy="55.4" r="0.51" fill="#6A6A6A"/><circle cx="75.8" cy="54.4" r="0.47" fill="#D8D8D8"/><circle cx="42.1" cy="56.1" r="0.99" fill="#4A4A4A"/><circle cx="59.0" cy="63.6" r="0.96" fill="#B8B8B8"/><circle cx="42.7" cy="59.8" r="1.08" fill="#8A8A8A"/><circle cx="61.0" cy="61.3" r="0.81" fill="#D8D8D8"/><circle cx="50.9" cy="51.9" r="0.93" fill="#B8B8B8"/><circle cx="51.2" cy="48.9" r="0.43" fill="#8A8A8A"/><circle cx="58.7" cy="65.8" r="1.11" fill="#8A8A8A"/><circle cx="46.1" cy="61.2" r="1.25" fill="#4A4A4A"/><circle cx="79.6" cy="60.7" r="1.06" fill="#4A4A4A"/><circle cx="66.6" cy="63.9" r="1.04" fill="#B8B8B8"/><circle cx="47.2" cy="63.0" r="0.44" fill="#6A6A6A"/><circle cx="68.2" cy="60.5" r="0.74" fill="#6A6A6A"/><circle cx="57.1" cy="64.8" r="0.42" fill="#6A6A6A"/><circle cx="73.7" cy="64.4" r="1.26" fill="#4A4A4A"/><circle cx="55.0" cy="48.0" r="1.30" fill="#4A4A4A"/><circle cx="65.6" cy="61.7" r="0.50" fill="#6A6A6A"/><circle cx="86.7" cy="47.3" r="0.69" fill="#4A4A4A"/><circle cx="49.0" cy="47.7" r="1.30" fill="#D8D8D8"/><circle cx="62.7" cy="61.4" r="1.25" fill="#8A8A8A"/><circle cx="58.4" cy="54.7" r="0.72" fill="#B8B8B8"/></g><path d="M36 62.7 L73.2 2.9" stroke="#D0D0D0" stroke-width="3.8" stroke-linecap="round" opacity="0.75"/><path d="M46.3 39.8 L58.5 15.5" stroke="#C8C8C8" stroke-width="3.2" stroke-linecap="round" opacity="0.7"/><path d="M37.1 66 L73.6 6.2" stroke="#F78B3D" stroke-width="1.4" stroke-linecap="round"/><path d="M45.5 58.6 L58.8 25.8" stroke="#F78B3D" stroke-width="1.3" stroke-linecap="round"/><path d="M47 39.1 L58.1 19.1" stroke="#F78B3D" stroke-width="1.2" stroke-linecap="round"/><path d="M3.9 13.8 H6.0 M7.2 13.8 H10.8 M11.8 13.8 H16.1 M17.3 13.8 H20.9 M21.9 13.8 H24.3 M25.4 13.8 H29.3 M30.3 13.8 H33.6 M34.8 13.8 H37.3" stroke="#F2F2F2" stroke-width="0.8" stroke-dasharray="0.7 0.3 1.0 0.3" opacity="0.72"/><path d="M16.3 16.5 H21.1 M22.2 16.5 H23.9 M25.1 16.5 H29.2 M30.0 16.5 H31.7 M32.9 16.5 H36.5" stroke="#F2F2F2" stroke-width="0.8" stroke-dasharray="0.7 0.3 1.0 0.3" opacity="0.72"/><path d="M3.1 19.2 H7.8 M9.0 19.2 H12.3 M13.5 19.2 H17.0 M18.2 19.2 H23.7 M24.4 19.2 H26.5 M27.2 19.2 H33.1 M34.0 19.2 H37.3" stroke="#F2F2F2" stroke-width="0.8" stroke-dasharray="0.7 0.3 1.0 0.3" opacity="0.72"/><path d="M4.1 21.9 H7.3 M8.2 21.9 H12.3 M13.3 21.9 H18.9 M20.0 21.9 H25.7 M26.9 21.9 H32.8 M33.9 21.9 H36.1" stroke="#F2F2F2" stroke-width="0.8" stroke-dasharray="0.7 0.3 1.0 0.3" opacity="0.72"/><path d="M2.8 24.6 H8.4 M9.4 24.6 H14.1 M14.9 24.6 H20.1 M21.1 24.6 H23.9 M24.5 24.6 H29.9 M31.2 24.6 H33.1 M34.2 24.6 H37.3" stroke="#F2F2F2" stroke-width="0.8" stroke-dasharray="0.7 0.3 1.0 0.3" opacity="0.72"/><path d="M4.7 27.4 H9.7 M10.9 27.4 H12.6 M13.6 27.4 H15.3 M16.4 27.4 H19.4 M20.6 27.4 H26.5 M27.5 27.4 H33.5 M34.3 27.4 H36.1 M37.2 27.4 H37.3" stroke="#F2F2F2" stroke-width="0.8" stroke-dasharray="0.7 0.3 1.0 0.3" opacity="0.72"/><path d="M26.1 30.1 H28.3 M28.9 30.1 H34.3 M35.2 30.1 H37.3" stroke="#F2F2F2" stroke-width="0.8" stroke-dasharray="0.7 0.3 1.0 0.3" opacity="0.72"/><path d="M4.5 32.8 H8.0 M9.0 32.8 H13.4 M14.4 32.8 H18.4 M19.5 32.8 H25.2 M26.2 32.8 H29.6 M30.7 32.8 H33.3 M34.1 32.8 H37.3" stroke="#F2F2F2" stroke-width="0.8" stroke-dasharray="0.7 0.3 1.0 0.3" opacity="0.72"/><path d="M4.0 35.5 H5.5 M6.4 35.5 H10.6 M11.2 35.5 H15.4 M16.5 35.5 H18.2 M19.3 35.5 H22.9 M24.0 35.5 H27.0 M28.1 35.5 H33.0 M33.6 35.5 H35.4 M36.4 35.5 H37.3" stroke="#F2F2F2" stroke-width="0.8" stroke-dasharray="0.7 0.3 1.0 0.3" opacity="0.72"/><path d="M4.3 38.2 H8.4 M9.2 38.2 H12.4 M13.2 38.2 H16.4 M17.4 38.2 H20.2 M21.1 38.2 H26.1 M26.7 38.2 H30.8 M31.9 38.2 H34.8 M35.5 38.2 H37.3" stroke="#F2F2F2" stroke-width="0.8" stroke-dasharray="0.7 0.3 1.0 0.3" opacity="0.72"/><path d="M30.3 40.9 H34.7 M35.4 40.9 H37.3" stroke="#F2F2F2" stroke-width="0.8" stroke-dasharray="0.7 0.3 1.0 0.3" opacity="0.72"/><path d="M3.6 43.6 H6.2 M7.3 43.6 H13.1 M13.8 43.6 H18.6 M19.4 43.6 H23.5 M24.2 43.6 H29.3 M29.9 43.6 H35.7 M36.5 43.6 H37.3" stroke="#F2F2F2" stroke-width="0.8" stroke-dasharray="0.7 0.3 1.0 0.3" opacity="0.72"/><path d="M3.1 46.3 H6.2 M7.3 46.3 H9.2 M10.3 46.3 H14.4 M15.3 46.3 H19.1 M20.3 46.3 H23.9 M25.0 46.3 H27.8 M28.8 46.3 H30.4 M31.3 46.3 H33.7 M34.7 46.3 H37.3" stroke="#F2F2F2" stroke-width="0.8" stroke-dasharray="0.7 0.3 1.0 0.3" opacity="0.72"/><path d="M4.1 49.1 H8.1 M9.4 49.1 H14.1 M14.8 49.1 H18.3 M19.4 49.1 H24.3 M25.6 49.1 H29.5 M30.8 49.1 H36.1" stroke="#F2F2F2" stroke-width="0.8" stroke-dasharray="0.7 0.3 1.0 0.3" opacity="0.72"/><path d="M2.8 51.8 H4.9 M5.6 51.8 H7.3 M8.5 51.8 H12.3 M13.0 51.8 H18.5 M19.4 51.8 H21.1 M22.0 51.8 H24.1 M25.0 51.8 H27.6 M28.2 51.8 H32.1 M32.8 51.8 H37.3" stroke="#F2F2F2" stroke-width="0.8" stroke-dasharray="0.7 0.3 1.0 0.3" opacity="0.72"/></svg><svg style="left:385px;top:286px" width="14" height="14" viewBox="0 0 14 14"><path d="M6.5 0.9 L8 4.8 L12.2 4.8 L8.8 7.4 L10.1 11.6 L6.5 9 L2.9 11.6 L4.2 7.4 L0.8 4.8 L5 4.8 Z" fill="#6A6A6A"/><path d="M-0.1 2.8 L1.1 4.4 L-0.1 4.6 Z M-0.1 6.9 L2.3 7.3 L1 8.5 L-0.1 8.5 Z" fill="#7A7A7A"/></svg>
<div class="abs" style="left:440px;top:205px;width:92px;height:70px;border:2px solid #7A7A7A;background:#fff"></div>
<div class="abs" style="left:443px;top:208px;width:90px;height:68px;background:#000"></div>
<svg style="left:443px;top:208px" width="90" height="68" viewBox="0 0 90 68"><clipPath id="c4"><rect x="3.6" y="-6" width="11.5" height="51.7" rx="5.75"/><rect x="15.8" y="-6" width="12.2" height="66.8" rx="6.1"/><rect x="28.8" y="-6" width="12.499999999999996" height="54.7" rx="6.249999999999998"/><rect x="42" y="-6" width="11.100000000000001" height="39.2" rx="5.550000000000001"/></clipPath><g clip-path="url(#c4)"><defs><linearGradient id="g4" x1="0" y1="0" x2="0" y2="1"><stop offset="0" stop-color="#F2F2F6"/><stop offset="0.18" stop-color="#EDEDF0"/><stop offset="0.22" stop-color="#8A8A8A"/><stop offset="0.42" stop-color="#7A7A7A"/><stop offset="0.5" stop-color="#9A9A9A"/><stop offset="0.62" stop-color="#B0ACAC"/><stop offset="0.75" stop-color="#C8C4C4"/><stop offset="0.88" stop-color="#D8D8D8"/><stop offset="1" stop-color="#E8E8E8"/></linearGradient></defs><rect x="0" y="0" width="56" height="68" fill="url(#g4)"/><path d="M3 14 Q6 10 9 13 Q12 11 15 14 V32 H3 Z" fill="#3A3838"/><path d="M22 5 H28 L25.5 11 Z" fill="#3A3A3A"/><rect x="25" y="11" width="0.7" height="50" fill="#6A6A6A" /><rect x="17" y="17" width="24" height="12" fill="#8E8E8E" /><rect x="19.0" y="19" width="1.5" height="7" fill="#4A4A4A" /><rect x="22.5" y="19" width="1.5" height="7" fill="#4A4A4A" /><rect x="26.0" y="19" width="1.5" height="7" fill="#4A4A4A" /><rect x="29.5" y="19" width="1.5" height="7" fill="#4A4A4A" /><rect x="33.0" y="19" width="1.5" height="7" fill="#4A4A4A" /><rect x="36.5" y="19" width="1.5" height="7" fill="#4A4A4A" /><rect x="42" y="18" width="11" height="12" fill="#7A7A7A" /><rect x="43" y="26" width="9" height="4" fill="#B8B8B8" /><circle cx="14.8" cy="32.1" r="0.76" fill="#D0D0D0"/><circle cx="7.5" cy="30.4" r="0.89" fill="#9A9A9A"/><circle cx="43.0" cy="45.3" r="0.60" fill="#9A9A9A"/><circle cx="16.8" cy="33.5" r="0.50" fill="#D0D0D0"/><circle cx="50.1" cy="30.5" r="0.98" fill="#9A9A9A"/><circle cx="43.0" cy="33.9" r="0.68" fill="#9A9A9A"/><circle cx="7.3" cy="42.1" r="1.00" fill="#D0D0D0"/><circle cx="11.9" cy="39.5" r="0.48" fill="#9A9A9A"/><circle cx="3.4" cy="35.8" r="1.03" fill="#9A9A9A"/><circle cx="45.4" cy="40.2" r="0.77" fill="#9A9A9A"/><circle cx="24.6" cy="33.2" r="0.67" fill="#5A5A5A"/><circle cx="7.1" cy="39.3" r="1.30" fill="#B8B0B0"/><circle cx="38.0" cy="32.9" r="1.01" fill="#5A5A5A"/><circle cx="23.6" cy="34.1" r="0.97" fill="#9A9A9A"/><circle cx="12.2" cy="38.7" r="0.93" fill="#D0D0D0"/><circle cx="48.2" cy="32.0" r="0.46" fill="#D0D0D0"/><circle cx="16.9" cy="41.6" r="1.18" fill="#5A5A5A"/><circle cx="19.6" cy="33.6" r="0.81" fill="#5A5A5A"/><circle cx="20.9" cy="31.7" r="1.27" fill="#9A9A9A"/><circle cx="39.7" cy="49.2" r="0.42" fill="#9A9A9A"/><circle cx="19.1" cy="33.1" r="0.99" fill="#5A5A5A"/><circle cx="17.7" cy="33.8" r="0.80" fill="#D0D0D0"/><circle cx="15.5" cy="42.0" r="0.54" fill="#5A5A5A"/><circle cx="21.2" cy="39.1" r="0.73" fill="#9A9A9A"/><circle cx="52.9" cy="41.4" r="0.80" fill="#D0D0D0"/><circle cx="24.2" cy="34.2" r="0.45" fill="#5A5A5A"/><circle cx="39.9" cy="41.9" r="1.27" fill="#5A5A5A"/><circle cx="30.3" cy="41.7" r="0.69" fill="#5A5A5A"/><circle cx="9.1" cy="40.6" r="1.10" fill="#B8B0B0"/><circle cx="35.6" cy="34.0" r="0.58" fill="#B8B0B0"/><circle cx="23.5" cy="30.7" r="0.78" fill="#D0D0D0"/><circle cx="35.4" cy="38.6" r="0.59" fill="#D0D0D0"/><circle cx="4.6" cy="35.1" r="0.62" fill="#D0D0D0"/><circle cx="41.6" cy="38.3" r="0.64" fill="#9A9A9A"/><circle cx="5.6" cy="48.6" r="0.91" fill="#B8B0B0"/><circle cx="51.1" cy="43.1" r="1.18" fill="#5A5A5A"/><circle cx="27.7" cy="31.9" r="0.59" fill="#D0D0D0"/><circle cx="19.8" cy="43.1" r="1.12" fill="#9A9A9A"/><circle cx="43.7" cy="40.6" r="0.99" fill="#9A9A9A"/><circle cx="19.9" cy="37.8" r="0.85" fill="#9A9A9A"/><circle cx="51.1" cy="43.4" r="0.44" fill="#D0D0D0"/><circle cx="41.3" cy="35.4" r="1.17" fill="#D0D0D0"/><circle cx="37.4" cy="39.3" r="0.82" fill="#B8B0B0"/><circle cx="49.4" cy="34.4" r="0.40" fill="#D0D0D0"/><circle cx="3.7" cy="47.5" r="0.50" fill="#B8B0B0"/><circle cx="46.9" cy="41.0" r="1.19" fill="#D0D0D0"/><circle cx="11.1" cy="42.2" r="1.14" fill="#B8B0B0"/><circle cx="48.8" cy="38.8" r="0.47" fill="#5A5A5A"/><circle cx="27.4" cy="47.3" r="0.95" fill="#D0D0D0"/><circle cx="5.1" cy="31.6" r="1.19" fill="#5A5A5A"/><circle cx="17.8" cy="36.9" r="0.47" fill="#B8B0B0"/><circle cx="22.1" cy="45.7" r="0.68" fill="#D0D0D0"/><circle cx="40.9" cy="47.1" r="0.76" fill="#5A5A5A"/><circle cx="8.7" cy="42.4" r="1.20" fill="#B8B0B0"/><circle cx="23.8" cy="44.2" r="0.80" fill="#D0D0D0"/><circle cx="34.8" cy="48.6" r="0.83" fill="#5A5A5A"/><circle cx="42.9" cy="33.3" r="1.19" fill="#D0D0D0"/><circle cx="38.3" cy="36.5" r="1.17" fill="#9A9A9A"/><circle cx="30.1" cy="48.1" r="1.04" fill="#5A5A5A"/><circle cx="35.4" cy="32.4" r="0.50" fill="#B8B0B0"/><circle cx="29.3" cy="40.4" r="0.77" fill="#9A9A9A"/><circle cx="20.8" cy="45.3" r="1.29" fill="#5A5A5A"/><circle cx="36.8" cy="42.2" r="0.68" fill="#B8B0B0"/><circle cx="42.1" cy="41.4" r="1.24" fill="#B8B0B0"/><circle cx="33.6" cy="38.8" r="0.53" fill="#9A9A9A"/><circle cx="52.3" cy="36.8" r="0.79" fill="#D0D0D0"/><circle cx="36.8" cy="42.4" r="0.66" fill="#9A9A9A"/><circle cx="12.9" cy="45.9" r="1.01" fill="#5A5A5A"/><circle cx="6.9" cy="42.9" r="1.21" fill="#9A9A9A"/><circle cx="35.7" cy="36.5" r="0.67" fill="#5A5A5A"/><rect x="20" y="59.5" width="5" height="1.3" fill="#60C8B0" /></g><rect x="15.200000000000001" y="0" width="0.7" height="60.8" fill="#000"/><rect x="28.2" y="0" width="0.7" height="48.7" fill="#000"/><rect x="41.4" y="0" width="0.7" height="33.2" fill="#000"/><path d="M46.4 36.8 H51.2 M52.1 36.8 H54.0 M54.6 36.8 H58.6 M59.4 36.8 H65.3 M66.0 36.8 H69.8 M70.7 36.8 H75.7 M76.9 36.8 H79.5 M80.8 36.8 H82.4 M83.5 36.8 H86.1 M86.9 36.8 H87.2" stroke="#F2F2F2" stroke-width="0.8" stroke-dasharray="0.7 0.3 1.0 0.3" opacity="0.72"/><path d="M62.3 39.4 H64.2 M65.2 39.4 H69.7 M70.7 39.4 H73.0 M73.9 39.4 H75.8 M77.1 39.4 H82.4 M83.4 39.4 H86.3" stroke="#F2F2F2" stroke-width="0.8" stroke-dasharray="0.7 0.3 1.0 0.3" opacity="0.72"/><path d="M45.5 42.0 H50.9 M52.1 42.0 H55.9 M56.8 42.0 H61.0 M61.9 42.0 H64.1 M65.0 42.0 H70.1 M70.7 42.0 H72.5 M73.5 42.0 H76.3 M77.2 42.0 H80.8 M81.7 42.0 H87.2" stroke="#F2F2F2" stroke-width="0.8" stroke-dasharray="0.7 0.3 1.0 0.3" opacity="0.72"/><path d="M46.0 44.6 H48.4 M49.5 44.6 H52.2 M53.1 44.6 H57.9 M58.8 44.6 H62.8 M64.0 44.6 H66.0 M66.6 44.6 H69.1 M70.3 44.6 H74.5 M75.3 44.6 H78.3 M79.0 44.6 H82.6 M83.2 44.6 H87.2" stroke="#F2F2F2" stroke-width="0.8" stroke-dasharray="0.7 0.3 1.0 0.3" opacity="0.72"/><path d="M44.2 47.2 H49.0 M50.2 47.2 H51.8 M52.6 47.2 H58.5 M59.6 47.2 H63.0 M64.2 47.2 H68.5 M69.7 47.2 H72.5 M73.2 47.2 H76.7 M77.4 47.2 H80.6 M81.9 47.2 H84.9 M85.5 47.2 H87.2" stroke="#F2F2F2" stroke-width="0.8" stroke-dasharray="0.7 0.3 1.0 0.3" opacity="0.72"/><path d="M64.3 49.8 H70.2 M71.2 49.8 H74.7 M75.5 49.8 H81.1 M81.8 49.8 H83.6 M84.7 49.8 H87.2" stroke="#F2F2F2" stroke-width="0.8" stroke-dasharray="0.7 0.3 1.0 0.3" opacity="0.72"/><path d="M45.4 52.4 H49.3 M50.3 52.4 H53.3 M53.9 52.4 H59.2 M60.0 52.4 H65.9 M67.0 52.4 H69.4 M70.1 52.4 H73.6 M74.6 52.4 H77.0 M78.0 52.4 H82.4 M83.3 52.4 H85.7 M86.5 52.4 H87.2" stroke="#F2F2F2" stroke-width="0.8" stroke-dasharray="0.7 0.3 1.0 0.3" opacity="0.72"/><path d="M45.6 55.0 H50.6 M51.5 55.0 H54.2 M55.0 55.0 H60.5 M61.3 55.0 H63.4 M64.4 55.0 H70.2 M71.3 55.0 H76.7 M77.8 55.0 H79.5 M80.3 55.0 H83.8 M85.0 55.0 H87.2" stroke="#F2F2F2" stroke-width="0.8" stroke-dasharray="0.7 0.3 1.0 0.3" opacity="0.72"/><path d="M46.9 57.6 H49.7 M50.6 57.6 H56.2 M57.0 57.6 H60.4 M61.2 57.6 H66.3 M67.4 57.6 H70.5 M71.3 57.6 H75.1 M76.3 57.6 H79.0 M80.1 57.6 H82.4 M83.3 57.6 H87.2" stroke="#F2F2F2" stroke-width="0.8" stroke-dasharray="0.7 0.3 1.0 0.3" opacity="0.72"/><path d="M76.5 60.2 H81.9 M83.0 60.2 H86.6" stroke="#F2F2F2" stroke-width="0.8" stroke-dasharray="0.7 0.3 1.0 0.3" opacity="0.72"/></svg><svg style="left:521px;top:286px" width="14" height="14" viewBox="0 0 14 14"><path d="M6.5 0.9 L8 4.8 L12.2 4.8 L8.8 7.4 L10.1 11.6 L6.5 9 L2.9 11.6 L4.2 7.4 L0.8 4.8 L5 4.8 Z" fill="#6A6A6A"/><path d="M-0.1 2.8 L1.1 4.4 L-0.1 4.6 Z M-0.1 6.9 L2.3 7.3 L1 8.5 L-0.1 8.5 Z" fill="#7A7A7A"/></svg>
<div class="abs" style="left:577px;top:206px;width:92px;height:70px;border:1px solid #CFCFCF;background:#fff"></div>
<div class="abs" style="left:579px;top:208px;width:90px;height:68px;background:#000"></div>
<svg style="left:579px;top:208px" width="90" height="68" viewBox="0 0 90 68"><clipPath id="c5"><path d="M0 0 H26.9 L36.9 13.2 Q40.5 19.5 37 25.5 Q34.5 28.5 29.5 26.5 L40.5 41.3 Q42.5 48.5 37 55.3 Q33 55 29.5 50.9 L28.7 55.3 Q27.5 61 22.1 62.7 L23 68 H5.1 L0 60.5 Z"/></clipPath><g clip-path="url(#c5)"><rect x="0" y="0" width="42" height="68" fill="#F2F2F2" /><rect x="11" y="4.4" width="13" height="31" fill="#5E5E5E" /><rect x="13" y="12" width="2" height="4" fill="#222" /><rect x="17" y="12" width="2" height="4" fill="#222" /><rect x="20.5" y="12" width="2" height="4" fill="#222" /><rect x="14" y="18" width="8" height="14" fill="#8A8A8A" /><path d="M0 29.5 L8 29 L11 22 V35 H24 V27 L30 30 L34 40 L41 44 V56 L30 56 L0 56 Z" fill="#6A6A6A"/><rect x="1.4" y="38.4" width="4.5" height="10.3" fill="#141414" /><rect x="12.1" y="38.4" width="4.1" height="10.3" fill="#141414" /><rect x="22" y="38.4" width="3.8" height="10.3" fill="#141414" /><rect x="30" y="42" width="11" height="12" fill="#9A9A9A" /><rect x="0" y="55" width="42" height="13" fill="#C8C8C8" /><rect x="20" y="56" width="12" height="8" fill="#EDEDED" /><path d="M8 0 L30 26 M0 10 L20 40 M4 45 L20 60" stroke="#444" stroke-width="0.5"/></g><path d="M45.9 3.3 H49.0 M50.1 3.3 H55.4 M56.4 3.3 H60.3 M61.5 3.3 H66.5 M67.3 3.3 H69.0 M69.7 3.3 H72.9 M74.1 3.3 H77.3 M78.0 3.3 H80.6 M81.7 3.3 H85.0 M85.8 3.3 H88.2" stroke="#F2F2F2" stroke-width="0.8" stroke-dasharray="0.7 0.3 1.0 0.3" opacity="0.72"/><path d="M44.1 6.1 H45.9 M46.9 6.1 H50.4 M51.1 6.1 H57.0 M57.6 6.1 H62.6 M63.8 6.1 H66.1 M66.8 6.1 H69.7 M70.5 6.1 H75.9 M76.9 6.1 H79.3 M80.5 6.1 H82.9 M84.2 6.1 H87.4 M88.0 6.1 H88.2" stroke="#F2F2F2" stroke-width="0.8" stroke-dasharray="0.7 0.3 1.0 0.3" opacity="0.72"/><path d="M45.9 8.8 H48.8 M50.0 8.8 H54.2 M55.2 8.8 H59.9 M60.5 8.8 H63.6 M64.4 8.8 H69.0 M69.8 8.8 H73.4 M74.1 8.8 H76.8 M78.0 8.8 H83.8 M84.7 8.8 H88.0" stroke="#F2F2F2" stroke-width="0.8" stroke-dasharray="0.7 0.3 1.0 0.3" opacity="0.72"/><path d="M73.3 11.6 H77.4 M78.0 11.6 H79.8 M80.5 11.6 H86.3 M87.0 11.6 H88.2" stroke="#F2F2F2" stroke-width="0.8" stroke-dasharray="0.7 0.3 1.0 0.3" opacity="0.72"/><path d="M43.4 14.4 H46.5 M47.3 14.4 H51.2 M52.3 14.4 H54.3 M55.4 14.4 H60.5 M61.7 14.4 H63.4 M64.6 14.4 H66.5 M67.4 14.4 H71.6 M72.9 14.4 H75.9 M77.2 14.4 H81.1 M81.9 14.4 H84.9 M85.6 14.4 H87.4 M88.1 14.4 H88.2" stroke="#F2F2F2" stroke-width="0.8" stroke-dasharray="0.7 0.3 1.0 0.3" opacity="0.72"/><path d="M46.2 17.1 H47.9 M49.2 17.1 H53.1 M54.0 17.1 H56.6 M57.6 17.1 H62.8 M63.7 17.1 H67.1 M67.8 17.1 H73.4 M74.0 17.1 H77.7 M78.9 17.1 H81.0 M82.1 17.1 H87.9" stroke="#F2F2F2" stroke-width="0.8" stroke-dasharray="0.7 0.3 1.0 0.3" opacity="0.72"/><path d="M44.0 19.9 H45.9 M46.8 19.9 H49.0 M50.2 19.9 H53.0 M54.0 19.9 H60.0 M61.1 19.9 H67.0 M68.0 19.9 H71.7 M72.8 19.9 H76.4 M77.2 19.9 H80.5 M81.2 19.9 H84.4 M85.7 19.9 H88.2" stroke="#F2F2F2" stroke-width="0.8" stroke-dasharray="0.7 0.3 1.0 0.3" opacity="0.72"/><path d="M45.0 22.7 H48.0 M48.7 22.7 H51.4 M52.6 22.7 H58.0 M58.8 22.7 H63.9 M65.0 22.7 H69.6 M70.7 22.7 H75.6 M76.5 22.7 H81.1 M81.9 22.7 H85.6 M86.8 22.7 H88.2" stroke="#F2F2F2" stroke-width="0.8" stroke-dasharray="0.7 0.3 1.0 0.3" opacity="0.72"/><path d="M60.3 25.4 H64.4 M65.0 25.4 H69.0 M69.8 25.4 H74.3 M75.2 25.4 H80.4 M81.4 25.4 H86.5 M87.4 25.4 H88.2" stroke="#F2F2F2" stroke-width="0.8" stroke-dasharray="0.7 0.3 1.0 0.3" opacity="0.72"/><path d="M43.8 28.2 H46.9 M48.1 28.2 H53.5 M54.6 28.2 H60.5 M61.7 28.2 H65.6 M66.5 28.2 H68.8 M70.0 28.2 H75.7 M76.6 28.2 H81.2 M82.3 28.2 H87.1 M87.9 28.2 H88.2" stroke="#F2F2F2" stroke-width="0.8" stroke-dasharray="0.7 0.3 1.0 0.3" opacity="0.72"/><path d="M44.4 31.0 H47.8 M48.8 31.0 H53.8 M54.9 31.0 H59.6 M60.2 31.0 H62.4 M63.4 31.0 H67.8 M68.5 31.0 H73.1 M74.2 31.0 H75.9 M76.8 31.0 H79.3 M79.9 31.0 H82.0 M82.9 31.0 H85.2 M85.9 31.0 H87.6" stroke="#F2F2F2" stroke-width="0.8" stroke-dasharray="0.7 0.3 1.0 0.3" opacity="0.72"/><path d="M74.3 33.8 H78.4 M79.2 33.8 H84.8 M85.4 33.8 H88.2" stroke="#F2F2F2" stroke-width="0.8" stroke-dasharray="0.7 0.3 1.0 0.3" opacity="0.72"/><path d="M45.3 36.5 H47.3 M48.5 36.5 H51.7 M52.3 36.5 H56.6 M57.3 36.5 H61.2 M62.0 36.5 H66.2 M67.4 36.5 H72.6 M73.5 36.5 H78.7 M79.7 36.5 H82.9 M83.6 36.5 H87.8" stroke="#F2F2F2" stroke-width="0.8" stroke-dasharray="0.7 0.3 1.0 0.3" opacity="0.72"/><path d="M60.0 39.3 H64.2 M65.1 39.3 H70.6 M71.2 39.3 H73.2 M74.2 39.3 H78.5 M79.2 39.3 H83.5 M84.7 39.3 H87.9" stroke="#F2F2F2" stroke-width="0.8" stroke-dasharray="0.7 0.3 1.0 0.3" opacity="0.72"/><path d="M46.0 42.1 H48.8 M50.1 42.1 H53.3 M54.6 42.1 H60.2 M61.2 42.1 H63.9 M65.1 42.1 H68.9 M69.8 42.1 H72.7 M74.0 42.1 H77.7 M78.5 42.1 H82.2 M82.8 42.1 H87.1 M88.0 42.1 H88.2" stroke="#F2F2F2" stroke-width="0.8" stroke-dasharray="0.7 0.3 1.0 0.3" opacity="0.72"/><path d="M43.8 44.8 H45.4 M46.4 44.8 H49.1 M50.3 44.8 H55.4 M56.1 44.8 H58.8 M59.5 44.8 H65.5 M66.3 44.8 H70.5 M71.5 44.8 H75.9 M76.9 44.8 H81.7 M82.4 44.8 H87.3 M88.2 44.8 H88.2" stroke="#F2F2F2" stroke-width="0.8" stroke-dasharray="0.7 0.3 1.0 0.3" opacity="0.72"/><path d="M76.4 47.6 H79.9 M80.8 47.6 H85.6 M86.7 47.6 H88.2" stroke="#F2F2F2" stroke-width="0.8" stroke-dasharray="0.7 0.3 1.0 0.3" opacity="0.72"/><path d="M45.2 50.4 H50.8 M52.0 50.4 H56.0 M56.6 50.4 H61.6 M62.5 50.4 H66.6 M67.7 50.4 H72.0 M72.9 50.4 H78.5 M79.4 50.4 H82.7 M83.9 50.4 H86.3 M87.1 50.4 H88.2" stroke="#F2F2F2" stroke-width="0.8" stroke-dasharray="0.7 0.3 1.0 0.3" opacity="0.72"/><path d="M63.0 53.1 H67.1 M68.2 53.1 H71.8 M72.6 53.1 H74.9 M76.0 53.1 H81.4 M82.7 53.1 H86.7 M87.5 53.1 H88.2" stroke="#F2F2F2" stroke-width="0.8" stroke-dasharray="0.7 0.3 1.0 0.3" opacity="0.72"/><path d="M44.2 55.9 H46.9 M47.5 55.9 H49.3 M50.6 55.9 H53.6 M54.5 55.9 H56.3 M57.2 55.9 H60.8 M61.5 55.9 H63.6 M64.6 55.9 H69.8 M70.5 55.9 H76.0 M77.3 55.9 H82.0 M82.9 55.9 H85.2 M86.0 55.9 H88.2" stroke="#F2F2F2" stroke-width="0.8" stroke-dasharray="0.7 0.3 1.0 0.3" opacity="0.72"/><path d="M46.0 58.7 H50.0 M51.1 58.7 H55.9 M56.7 58.7 H60.8 M61.5 58.7 H64.8 M65.8 58.7 H67.4 M68.0 58.7 H72.6 M73.6 58.7 H76.7 M77.7 58.7 H83.3 M84.0 58.7 H86.9 M87.9 58.7 H88.2" stroke="#F2F2F2" stroke-width="0.8" stroke-dasharray="0.7 0.3 1.0 0.3" opacity="0.72"/><path d="M43.4 61.4 H47.4 M48.1 61.4 H49.9 M50.7 61.4 H55.9 M56.7 61.4 H62.6 M63.8 61.4 H69.2 M70.1 61.4 H73.3 M74.0 61.4 H75.6 M76.5 61.4 H80.5 M81.2 61.4 H86.5 M87.5 61.4 H88.2" stroke="#F2F2F2" stroke-width="0.8" stroke-dasharray="0.7 0.3 1.0 0.3" opacity="0.72"/><path d="M45.1 64.2 H51.0 M51.6 64.2 H55.5 M56.5 64.2 H59.7 M60.9 64.2 H66.7 M67.6 64.2 H72.7 M73.8 64.2 H75.7 M76.9 64.2 H80.6 M81.4 64.2 H86.0 M86.9 64.2 H88.2" stroke="#F2F2F2" stroke-width="0.8" stroke-dasharray="0.7 0.3 1.0 0.3" opacity="0.72"/></svg><svg style="left:657px;top:286px" width="14" height="14" viewBox="0 0 14 14"><path d="M6.5 0.9 L8 4.8 L12.2 4.8 L8.8 7.4 L10.1 11.6 L6.5 9 L2.9 11.6 L4.2 7.4 L0.8 4.8 L5 4.8 Z" fill="#6A6A6A"/><path d="M-0.1 2.8 L1.1 4.4 L-0.1 4.6 Z M-0.1 6.9 L2.3 7.3 L1 8.5 L-0.1 8.5 Z" fill="#7A7A7A"/></svg>
<div class="abs" style="left:713px;top:206px;width:92px;height:70px;border:1px solid #CFCFCF;background:#fff"></div>
<div class="abs" style="left:715px;top:208px;width:90px;height:68px;background:#000"></div>
<svg style="left:715px;top:208px" width="90" height="68" viewBox="0 0 90 68"><rect x="5.8" y="19.9" width="37.2" height="20.1" fill="#D6D2C6" /><path d="M26 40 V28.5 L33 25.5 L43 29.5 V40 Z" fill="#A8A49A"/><rect x="8" y="27" width="6" height="10" fill="#C8C4B8" /><rect x="16" y="28" width="9" height="6" fill="#C0BCB0" /><rect x="13.7" y="21" width="1.3" height="16" fill="#8A8478" /><rect x="24.9" y="21" width="1.3" height="16" fill="#8A8478" /><circle cx="9" cy="34" r="0.8" fill="#4A4640"/><circle cx="18" cy="37" r="0.8" fill="#4A4640"/><circle cx="23" cy="36" r="0.8" fill="#4A4640"/><circle cx="29" cy="37" r="0.8" fill="#4A4640"/><circle cx="33" cy="34" r="0.8" fill="#4A4640"/><circle cx="38" cy="35" r="0.8" fill="#4A4640"/><circle cx="40" cy="33" r="0.8" fill="#4A4640"/><circle cx="12" cy="37" r="0.8" fill="#4A4640"/><rect x="5.8" y="37" width="37.2" height="3" fill="#C0BCB2" /><path d="M48.3 5.2 H52.0 M52.8 5.2 H54.3 M55.4 5.2 H59.0 M60.1 5.2 H63.3 M64.4 5.2 H67.2 M68.3 5.2 H73.1 M74.0 5.2 H77.9 M79.0 5.2 H81.4 M82.3 5.2 H85.2" stroke="#F2F2F2" stroke-width="0.8" stroke-dasharray="0.7 0.3 1.0 0.3" opacity="0.72"/><path d="M48.4 8.0 H53.0 M54.2 8.0 H57.2 M57.8 8.0 H62.9 M64.1 8.0 H67.6 M68.3 8.0 H70.7 M71.7 8.0 H74.5 M75.8 8.0 H79.9 M80.7 8.0 H85.1" stroke="#F2F2F2" stroke-width="0.8" stroke-dasharray="0.7 0.3 1.0 0.3" opacity="0.72"/><path d="M48.0 10.7 H53.6 M54.6 10.7 H59.0 M60.0 10.7 H65.2 M66.5 10.7 H68.1 M68.9 10.7 H73.1 M74.0 10.7 H78.1 M78.8 10.7 H84.2 M85.2 10.7 H85.2" stroke="#F2F2F2" stroke-width="0.8" stroke-dasharray="0.7 0.3 1.0 0.3" opacity="0.72"/><path d="M75.0 13.5 H78.2 M79.0 13.5 H83.2 M84.4 13.5 H85.2" stroke="#F2F2F2" stroke-width="0.8" stroke-dasharray="0.7 0.3 1.0 0.3" opacity="0.72"/><path d="M50.2 16.3 H52.5 M53.5 16.3 H57.6 M58.6 16.3 H62.9 M63.8 16.3 H67.6 M68.4 16.3 H73.0 M73.9 16.3 H76.3 M77.3 16.3 H83.3 M83.9 16.3 H85.2" stroke="#F2F2F2" stroke-width="0.8" stroke-dasharray="0.7 0.3 1.0 0.3" opacity="0.72"/><path d="M50.5 19.0 H54.7 M55.9 19.0 H59.5 M60.6 19.0 H63.8 M64.5 19.0 H67.9 M68.7 19.0 H73.9 M75.1 19.0 H77.5 M78.6 19.0 H82.1 M83.2 19.0 H85.2" stroke="#F2F2F2" stroke-width="0.8" stroke-dasharray="0.7 0.3 1.0 0.3" opacity="0.72"/><path d="M70.4 21.8 H74.5 M75.4 21.8 H78.1 M79.0 21.8 H84.6" stroke="#F2F2F2" stroke-width="0.8" stroke-dasharray="0.7 0.3 1.0 0.3" opacity="0.72"/><path d="M49.6 24.6 H55.0 M56.0 24.6 H58.8 M59.7 24.6 H63.3 M64.0 24.6 H67.2 M68.1 24.6 H73.2 M74.0 24.6 H78.5 M79.7 24.6 H85.2" stroke="#F2F2F2" stroke-width="0.8" stroke-dasharray="0.7 0.3 1.0 0.3" opacity="0.72"/><path d="M49.0 27.3 H51.9 M52.8 27.3 H56.5 M57.7 27.3 H63.4 M64.2 27.3 H65.7 M66.6 27.3 H68.4 M69.0 27.3 H74.0 M74.7 27.3 H79.4 M80.2 27.3 H85.2" stroke="#F2F2F2" stroke-width="0.8" stroke-dasharray="0.7 0.3 1.0 0.3" opacity="0.72"/><path d="M50.6 30.1 H53.0 M54.2 30.1 H58.5 M59.4 30.1 H64.4 M65.6 30.1 H69.3 M70.2 30.1 H72.2 M73.0 30.1 H75.2 M76.2 30.1 H80.4 M81.1 30.1 H85.2" stroke="#F2F2F2" stroke-width="0.8" stroke-dasharray="0.7 0.3 1.0 0.3" opacity="0.72"/><path d="M79.3 32.9 H82.9 M84.1 32.9 H85.2" stroke="#F2F2F2" stroke-width="0.8" stroke-dasharray="0.7 0.3 1.0 0.3" opacity="0.72"/><path d="M50.4 35.7 H55.7 M56.3 35.7 H60.6 M61.8 35.7 H67.4 M68.6 35.7 H72.2 M73.3 35.7 H78.3 M79.0 35.7 H84.8" stroke="#F2F2F2" stroke-width="0.8" stroke-dasharray="0.7 0.3 1.0 0.3" opacity="0.72"/><path d="M49.5 38.4 H54.5 M55.4 38.4 H58.1 M59.2 38.4 H61.0 M62.2 38.4 H68.1 M68.9 38.4 H74.6 M75.3 38.4 H80.6 M81.4 38.4 H85.2" stroke="#F2F2F2" stroke-width="0.8" stroke-dasharray="0.7 0.3 1.0 0.3" opacity="0.72"/><path d="M48.0 41.2 H49.7 M50.3 41.2 H55.5 M56.6 41.2 H60.5 M61.1 41.2 H63.4 M64.2 41.2 H66.0 M67.3 41.2 H72.2 M73.5 41.2 H78.1 M79.0 41.2 H80.8 M81.9 41.2 H83.9 M84.9 41.2 H85.2" stroke="#F2F2F2" stroke-width="0.8" stroke-dasharray="0.7 0.3 1.0 0.3" opacity="0.72"/><path d="M50.6 44.0 H52.4 M53.4 44.0 H55.0 M56.0 44.0 H58.1 M58.9 44.0 H61.1 M62.1 44.0 H65.4 M66.1 44.0 H68.6 M69.6 44.0 H75.2 M76.1 44.0 H78.3 M79.2 44.0 H81.7 M82.7 44.0 H85.2" stroke="#F2F2F2" stroke-width="0.8" stroke-dasharray="0.7 0.3 1.0 0.3" opacity="0.72"/><path d="M77.6 46.7 H82.9 M83.9 46.7 H85.2" stroke="#F2F2F2" stroke-width="0.8" stroke-dasharray="0.7 0.3 1.0 0.3" opacity="0.72"/><path d="M49.2 49.5 H54.5 M55.2 49.5 H57.8 M58.8 49.5 H63.6 M64.4 49.5 H66.7 M67.4 49.5 H72.0 M72.7 49.5 H74.6 M75.2 49.5 H78.8 M79.4 49.5 H83.9 M84.8 49.5 H85.2" stroke="#F2F2F2" stroke-width="0.8" stroke-dasharray="0.7 0.3 1.0 0.3" opacity="0.72"/><path d="M50.6 52.3 H53.1 M54.0 52.3 H58.9 M60.0 52.3 H65.8 M66.5 52.3 H68.3 M69.3 52.3 H71.1 M72.3 52.3 H75.8 M77.1 52.3 H81.7 M82.4 52.3 H85.2" stroke="#F2F2F2" stroke-width="0.8" stroke-dasharray="0.7 0.3 1.0 0.3" opacity="0.72"/><path d="M48.3 55.0 H54.2 M55.1 55.0 H59.8 M60.6 55.0 H63.2 M64.3 55.0 H68.8 M69.7 55.0 H74.1 M74.9 55.0 H76.5 M77.5 55.0 H82.3 M83.5 55.0 H85.2" stroke="#F2F2F2" stroke-width="0.8" stroke-dasharray="0.7 0.3 1.0 0.3" opacity="0.72"/><path d="M74.7 57.8 H78.8 M79.8 57.8 H83.0 M84.0 57.8 H85.2" stroke="#F2F2F2" stroke-width="0.8" stroke-dasharray="0.7 0.3 1.0 0.3" opacity="0.72"/><path d="M49.7 60.6 H54.3 M55.2 60.6 H59.8 M61.0 60.6 H64.1 M64.7 60.6 H67.7 M68.7 60.6 H72.2 M73.0 60.6 H77.6 M78.6 60.6 H81.1 M81.8 60.6 H85.2" stroke="#F2F2F2" stroke-width="0.8" stroke-dasharray="0.7 0.3 1.0 0.3" opacity="0.72"/><path d="M67.8 63.3 H71.9 M72.9 63.3 H76.6 M77.3 63.3 H79.5 M80.7 63.3 H83.1 M84.0 63.3 H85.2" stroke="#F2F2F2" stroke-width="0.8" stroke-dasharray="0.7 0.3 1.0 0.3" opacity="0.72"/></svg><svg style="left:793px;top:286px" width="14" height="14" viewBox="0 0 14 14"><path d="M6.5 0.9 L8 4.8 L12.2 4.8 L8.8 7.4 L10.1 11.6 L6.5 9 L2.9 11.6 L4.2 7.4 L0.8 4.8 L5 4.8 Z" fill="#6A6A6A"/><path d="M-0.1 2.8 L1.1 4.4 L-0.1 4.6 Z M-0.1 6.9 L2.3 7.3 L1 8.5 L-0.1 8.5 Z" fill="#7A7A7A"/></svg>
<div class="abs" style="left:849px;top:206px;width:92px;height:70px;border:1px solid #CFCFCF;background:#fff"></div>
<div class="abs" style="left:851px;top:208px;width:90px;height:68px;background:#000"></div>
<svg style="left:851px;top:208px" width="90" height="68" viewBox="0 0 90 68"><rect x="5" y="23.9" width="31.6" height="20" fill="#E6E6E6" /><rect x="5" y="33" width="31.6" height="5.5" fill="#8E8E8E" /><path d="M5 34 Q12 32 20 33 Q28 32 36.6 34 V35 H5 Z" fill="#A8A8A8"/><rect x="5" y="38.5" width="31.6" height="5.4" fill="#BEBEBE" /><ellipse cx="9" cy="41" rx="2" ry="1.2" fill="#505050"/><ellipse cx="13" cy="42" rx="1.5" ry="1.2" fill="#505050"/><ellipse cx="18" cy="40.5" rx="2" ry="1.2" fill="#505050"/><ellipse cx="23" cy="42" rx="1.8" ry="1.2" fill="#505050"/><ellipse cx="30" cy="41" rx="2.2" ry="1.2" fill="#505050"/><ellipse cx="34" cy="39" rx="1.5" ry="1.2" fill="#505050"/><rect x="5" y="39" width="2" height="5" fill="#E8E8E8" /><rect x="16.5" y="25" width="1.2" height="1" fill="#555" /><rect x="23" y="25" width="1.2" height="1" fill="#555" /><path d="M40.4 4.8 H43.7 M44.3 4.8 H49.5 M50.2 4.8 H54.3 M55.5 4.8 H58.0 M58.6 4.8 H62.0 M62.8 4.8 H66.8 M67.4 4.8 H71.5 M72.7 4.8 H77.1 M78.1 4.8 H79.8 M80.9 4.8 H82.6 M83.3 4.8 H84.3" stroke="#F2F2F2" stroke-width="0.8" stroke-dasharray="0.7 0.3 1.0 0.3" opacity="0.72"/><path d="M42.2 7.6 H46.2 M47.2 7.6 H51.2 M52.3 7.6 H54.2 M55.2 7.6 H57.6 M58.3 7.6 H63.0 M64.0 7.6 H68.2 M69.2 7.6 H73.1 M74.2 7.6 H77.8 M79.1 7.6 H82.2 M83.0 7.6 H84.3" stroke="#F2F2F2" stroke-width="0.8" stroke-dasharray="0.7 0.3 1.0 0.3" opacity="0.72"/><path d="M77.9 10.3 H81.8 M83.0 10.3 H84.3" stroke="#F2F2F2" stroke-width="0.8" stroke-dasharray="0.7 0.3 1.0 0.3" opacity="0.72"/><path d="M40.3 13.1 H42.3 M43.2 13.1 H48.1 M48.8 13.1 H52.5 M53.1 13.1 H57.6 M58.8 13.1 H62.9 M64.1 13.1 H67.0 M68.1 13.1 H72.2 M73.2 13.1 H76.8 M78.0 13.1 H83.7" stroke="#F2F2F2" stroke-width="0.8" stroke-dasharray="0.7 0.3 1.0 0.3" opacity="0.72"/><path d="M41.4 15.9 H43.2 M44.2 15.9 H48.7 M50.0 15.9 H55.2 M56.0 15.9 H59.2 M60.3 15.9 H61.9 M62.8 15.9 H65.0 M65.7 15.9 H67.5 M68.6 15.9 H70.7 M71.5 15.9 H74.7 M75.9 15.9 H77.8 M78.7 15.9 H82.7 M83.9 15.9 H84.3" stroke="#F2F2F2" stroke-width="0.8" stroke-dasharray="0.7 0.3 1.0 0.3" opacity="0.72"/><path d="M42.7 18.6 H46.1 M47.0 18.6 H52.4 M53.7 18.6 H55.9 M56.6 18.6 H59.2 M59.9 18.6 H63.6 M64.6 18.6 H67.3 M67.9 18.6 H71.3 M72.1 18.6 H76.2 M77.5 18.6 H82.1 M83.0 18.6 H84.3" stroke="#F2F2F2" stroke-width="0.8" stroke-dasharray="0.7 0.3 1.0 0.3" opacity="0.72"/><path d="M78.6 21.4 H81.9 M82.7 21.4 H84.3" stroke="#F2F2F2" stroke-width="0.8" stroke-dasharray="0.7 0.3 1.0 0.3" opacity="0.72"/><path d="M43.1 24.2 H49.0 M49.9 24.2 H51.9 M52.9 24.2 H54.9 M55.9 24.2 H59.8 M61.0 24.2 H65.3 M66.0 24.2 H68.4 M69.3 24.2 H73.6 M74.9 24.2 H79.1 M80.0 24.2 H82.0 M83.0 24.2 H84.3" stroke="#F2F2F2" stroke-width="0.8" stroke-dasharray="0.7 0.3 1.0 0.3" opacity="0.72"/><path d="M42.6 26.9 H44.8 M45.9 26.9 H50.7 M51.7 26.9 H56.3 M57.2 26.9 H59.7 M60.9 26.9 H64.1 M65.1 26.9 H70.8 M71.9 26.9 H74.7 M75.8 26.9 H77.7 M78.9 26.9 H82.7 M83.9 26.9 H84.3" stroke="#F2F2F2" stroke-width="0.8" stroke-dasharray="0.7 0.3 1.0 0.3" opacity="0.72"/><path d="M41.8 29.7 H45.6 M46.6 29.7 H50.9 M52.0 29.7 H56.9 M57.7 29.7 H60.3 M61.1 29.7 H66.3 M67.0 29.7 H70.7 M71.8 29.7 H77.8 M78.9 29.7 H82.6 M83.3 29.7 H84.3" stroke="#F2F2F2" stroke-width="0.8" stroke-dasharray="0.7 0.3 1.0 0.3" opacity="0.72"/><path d="M40.9 32.5 H45.6 M46.5 32.5 H52.4 M53.0 32.5 H55.0 M55.9 32.5 H58.9 M59.9 32.5 H65.8 M66.8 32.5 H68.3 M69.6 32.5 H72.6 M73.7 32.5 H78.9 M79.6 32.5 H82.9 M84.0 32.5 H84.3" stroke="#F2F2F2" stroke-width="0.8" stroke-dasharray="0.7 0.3 1.0 0.3" opacity="0.72"/><path d="M69.4 35.3 H71.3 M72.5 35.3 H77.3 M78.2 35.3 H83.0 M83.7 35.3 H84.3" stroke="#F2F2F2" stroke-width="0.8" stroke-dasharray="0.7 0.3 1.0 0.3" opacity="0.72"/><path d="M43.6 38.0 H47.8 M48.7 38.0 H53.2 M54.2 38.0 H58.4 M59.3 38.0 H65.0 M65.7 38.0 H69.7 M70.3 38.0 H75.4 M76.5 38.0 H78.5 M79.6 38.0 H81.7 M83.0 38.0 H84.3" stroke="#F2F2F2" stroke-width="0.8" stroke-dasharray="0.7 0.3 1.0 0.3" opacity="0.72"/><path d="M43.6 40.8 H46.1 M47.0 40.8 H52.0 M52.8 40.8 H56.8 M57.9 40.8 H59.7 M60.8 40.8 H66.4 M67.4 40.8 H72.6 M73.6 40.8 H78.8 M80.0 40.8 H82.1 M82.8 40.8 H84.3" stroke="#F2F2F2" stroke-width="0.8" stroke-dasharray="0.7 0.3 1.0 0.3" opacity="0.72"/><path d="M41.0 43.6 H45.2 M46.4 43.6 H48.5 M49.2 43.6 H53.5 M54.2 43.6 H56.0 M57.1 43.6 H61.0 M61.9 43.6 H66.9 M68.1 43.6 H69.9 M70.6 43.6 H72.3 M73.0 43.6 H76.5 M77.1 43.6 H82.6 M83.3 43.6 H84.3" stroke="#F2F2F2" stroke-width="0.8" stroke-dasharray="0.7 0.3 1.0 0.3" opacity="0.72"/><path d="M65.2 46.3 H69.8 M70.7 46.3 H74.6 M75.6 46.3 H81.3 M82.4 46.3 H84.3" stroke="#F2F2F2" stroke-width="0.8" stroke-dasharray="0.7 0.3 1.0 0.3" opacity="0.72"/><path d="M42.8 49.1 H46.8 M48.1 49.1 H53.4 M54.1 49.1 H56.1 M57.0 49.1 H58.8 M59.6 49.1 H61.4 M62.5 49.1 H67.5 M68.8 49.1 H71.0 M72.1 49.1 H76.5 M77.2 49.1 H82.7 M84.0 49.1 H84.3" stroke="#F2F2F2" stroke-width="0.8" stroke-dasharray="0.7 0.3 1.0 0.3" opacity="0.72"/><path d="M42.3 51.9 H46.0 M47.3 51.9 H52.6 M53.3 51.9 H56.7 M57.7 51.9 H60.7 M61.4 51.9 H64.4 M65.5 51.9 H67.1 M68.0 51.9 H71.5 M72.1 51.9 H75.1 M76.2 51.9 H80.0 M80.6 51.9 H84.3" stroke="#F2F2F2" stroke-width="0.8" stroke-dasharray="0.7 0.3 1.0 0.3" opacity="0.72"/><path d="M56.3 54.6 H58.2 M59.0 54.6 H64.6 M65.3 54.6 H70.2 M71.4 54.6 H76.7 M77.8 54.6 H83.5" stroke="#F2F2F2" stroke-width="0.8" stroke-dasharray="0.7 0.3 1.0 0.3" opacity="0.72"/><path d="M41.8 57.4 H45.7 M46.6 57.4 H49.6 M50.4 57.4 H55.5 M56.2 57.4 H61.7 M62.5 57.4 H64.1 M64.7 57.4 H67.4 M68.4 57.4 H70.9 M71.7 57.4 H73.8 M74.4 57.4 H80.4 M81.3 57.4 H84.3" stroke="#F2F2F2" stroke-width="0.8" stroke-dasharray="0.7 0.3 1.0 0.3" opacity="0.72"/><path d="M78.8 60.2 H84.3" stroke="#F2F2F2" stroke-width="0.8" stroke-dasharray="0.7 0.3 1.0 0.3" opacity="0.72"/></svg><svg style="left:929px;top:286px" width="14" height="14" viewBox="0 0 14 14"><path d="M6.5 0.9 L8 4.8 L12.2 4.8 L8.8 7.4 L10.1 11.6 L6.5 9 L2.9 11.6 L4.2 7.4 L0.8 4.8 L5 4.8 Z" fill="#6A6A6A"/><path d="M-0.1 2.8 L1.1 4.4 L-0.1 4.6 Z M-0.1 6.9 L2.3 7.3 L1 8.5 L-0.1 8.5 Z" fill="#7A7A7A"/></svg>
<div class="abs" style="left:985px;top:206px;width:92px;height:70px;border:1px solid #CFCFCF;background:#fff"></div>
<div class="abs" style="left:987px;top:208px;width:90px;height:68px;background:#000"></div>
<svg style="left:987px;top:208px" width="90" height="68" viewBox="0 0 90 68"><path d="M14.1 11.9 H17.3 M18.0 11.9 H19.7 M20.4 11.9 H25.6 M26.5 11.9 H29.8 M30.5 11.9 H34.2 M35.0 11.9 H39.1 M40.3 11.9 H43.7 M44.6 11.9 H49.5 M50.6 11.9 H54.4 M55.4 11.9 H61.0 M62.1 11.9 H66.6 M67.2 11.9 H72.4 M73.3 11.9 H78.5 M79.2 11.9 H80.9 M81.7 11.9 H82.4" stroke="#F2F2F2" stroke-width="0.8" stroke-dasharray="0.7 0.3 1.0 0.3" opacity="0.8"/><path d="M54.8 14.7 H58.9 M59.6 14.7 H61.4 M62.6 14.7 H66.3 M67.1 14.7 H72.8 M73.8 14.7 H78.6 M79.8 14.7 H82.4" stroke="#F2F2F2" stroke-width="0.8" stroke-dasharray="0.7 0.3 1.0 0.3" opacity="0.8"/><path d="M11.2 17.6 H13.3 M14.4 17.6 H16.4 M17.5 17.6 H22.1 M23.4 17.6 H28.7 M29.6 17.6 H32.0 M32.7 17.6 H36.6 M37.6 17.6 H39.4 M40.6 17.6 H44.4 M45.5 17.6 H48.0 M48.8 17.6 H50.3 M51.2 17.6 H53.9 M54.7 17.6 H57.9 M59.1 17.6 H64.6 M65.4 17.6 H68.6 M69.4 17.6 H73.8 M75.1 17.6 H77.5 M78.7 17.6 H81.5 M82.1 17.6 H82.4" stroke="#F2F2F2" stroke-width="0.8" stroke-dasharray="0.7 0.3 1.0 0.3" opacity="0.8"/><path d="M15.3 20.4 H18.7 M19.5 20.4 H22.8 M23.8 20.4 H27.1 M28.1 20.4 H30.9 M31.6 20.4 H33.5 M34.2 20.4 H38.0 M38.9 20.4 H44.0 M45.0 20.4 H49.6 M50.9 20.4 H52.7 M53.3 20.4 H55.5 M56.3 20.4 H60.4 M61.5 20.4 H64.6 M65.9 20.4 H67.4 M68.6 20.4 H71.0 M72.2 20.4 H73.9 M75.2 20.4 H80.1 M81.4 20.4 H82.4" stroke="#F2F2F2" stroke-width="0.8" stroke-dasharray="0.7 0.3 1.0 0.3" opacity="0.8"/><path d="M36.9 23.2 H38.9 M39.6 23.2 H42.1 M43.3 23.2 H48.4 M49.2 23.2 H51.2 M52.3 23.2 H56.7 M57.9 23.2 H61.7 M62.3 23.2 H68.0 M69.0 23.2 H74.2 M75.1 23.2 H76.8 M77.5 23.2 H79.5 M80.2 23.2 H81.7" stroke="#F2F2F2" stroke-width="0.8" stroke-dasharray="0.7 0.3 1.0 0.3" opacity="0.8"/><path d="M11.0 26.0 H15.5 M16.7 26.0 H20.5 M21.8 26.0 H26.7 M27.7 26.0 H32.9 M33.9 26.0 H37.7 M38.5 26.0 H41.7 M42.7 26.0 H45.1 M45.9 26.0 H48.7 M49.4 26.0 H52.3 M53.5 26.0 H56.8 M57.9 26.0 H59.7 M60.6 26.0 H65.5 M66.7 26.0 H71.5 M72.3 26.0 H75.2 M76.4 26.0 H79.5 M80.7 26.0 H82.4" stroke="#F2F2F2" stroke-width="0.8" stroke-dasharray="0.7 0.3 1.0 0.3" opacity="0.8"/><path d="M13.5 28.8 H16.7 M17.7 28.8 H23.3 M24.1 28.8 H27.3 M28.2 28.8 H33.8 M34.8 28.8 H39.4 M40.3 28.8 H44.8 M45.8 28.8 H50.3 M51.1 28.8 H56.3 M57.2 28.8 H59.1 M59.8 28.8 H63.6 M64.8 28.8 H70.7 M71.9 28.8 H76.2 M77.4 28.8 H82.4" stroke="#F2F2F2" stroke-width="0.8" stroke-dasharray="0.7 0.3 1.0 0.3" opacity="0.8"/><path d="M11.5 31.7 H14.2 M15.5 31.7 H19.9 M20.6 31.7 H23.2 M24.0 31.7 H27.8 M28.7 31.7 H31.3 M32.4 31.7 H36.3 M37.0 31.7 H40.8 M41.4 31.7 H43.4 M44.1 31.7 H46.4 M47.4 31.7 H50.8 M51.4 31.7 H57.0 M57.6 31.7 H60.0 M60.8 31.7 H62.7 M63.6 31.7 H68.1 M68.9 31.7 H73.0 M73.7 31.7 H76.8 M78.1 31.7 H79.9 M81.0 31.7 H82.4" stroke="#F2F2F2" stroke-width="0.8" stroke-dasharray="0.7 0.3 1.0 0.3" opacity="0.8"/><path d="M15.5 34.5 H20.6 M21.9 34.5 H23.7 M24.5 34.5 H26.1 M27.3 34.5 H29.8 M30.9 34.5 H36.8 M37.4 34.5 H43.0 M44.2 34.5 H48.5 M49.4 34.5 H51.6 M52.8 34.5 H55.0 M56.1 34.5 H57.9 M58.8 34.5 H60.7 M62.0 34.5 H65.0 M65.7 34.5 H71.5 M72.1 34.5 H77.1 M77.9 34.5 H80.1 M81.2 34.5 H82.4" stroke="#F2F2F2" stroke-width="0.8" stroke-dasharray="0.7 0.3 1.0 0.3" opacity="0.8"/><path d="M55.4 37.3 H59.5 M60.7 37.3 H66.7 M67.9 37.3 H70.0 M70.9 37.3 H74.2 M74.9 37.3 H79.9 M80.5 37.3 H82.4" stroke="#F2F2F2" stroke-width="0.8" stroke-dasharray="0.7 0.3 1.0 0.3" opacity="0.8"/><path d="M12.7 40.2 H16.1 M17.3 40.2 H21.4 M22.7 40.2 H28.3 M29.4 40.2 H35.3 M36.3 40.2 H39.4 M40.6 40.2 H44.5 M45.3 40.2 H49.9 M50.8 40.2 H52.9 M54.1 40.2 H57.8 M59.1 40.2 H63.0 M64.3 40.2 H67.1 M67.8 40.2 H71.7 M72.8 40.2 H78.0 M79.1 40.2 H81.1 M82.0 40.2 H82.4" stroke="#F2F2F2" stroke-width="0.8" stroke-dasharray="0.7 0.3 1.0 0.3" opacity="0.8"/><path d="M37.8 43.0 H41.0 M41.7 43.0 H47.6 M48.8 43.0 H50.4 M51.5 43.0 H55.1 M56.3 43.0 H61.3 M62.5 43.0 H66.5 M67.5 43.0 H73.0 M73.8 43.0 H77.6 M78.9 43.0 H82.4" stroke="#F2F2F2" stroke-width="0.8" stroke-dasharray="0.7 0.3 1.0 0.3" opacity="0.8"/><path d="M10.6 48.6 H12.6 M13.4 48.6 H15.4 M16.5 48.6 H21.0 M21.9 48.6 H26.0 M27.2 48.6 H32.1 M33.0 48.6 H37.9 M38.9 48.6 H43.7 M45.0 48.6 H49.5 M50.5 48.6 H52.3 M53.6 48.6 H57.4 M58.3 48.6 H61.9 M62.7 48.6 H64.8 M65.6 48.6 H67.2 M68.1 48.6 H70.9 M72.0 48.6 H75.5 M76.3 48.6 H79.6 M80.6 48.6 H82.4" stroke="#F2F2F2" stroke-width="0.8" stroke-dasharray="0.7 0.3 1.0 0.3" opacity="0.8"/><path d="M11.1 51.5 H14.6 M15.3 51.5 H21.1 M21.8 51.5 H26.5 M27.6 51.5 H30.7 M31.7 51.5 H34.1 M35.1 51.5 H39.3 M40.4 51.5 H44.2 M44.8 51.5 H48.8 M49.8 51.5 H52.7 M53.4 51.5 H56.7 M58.0 51.5 H63.1 M64.4 51.5 H65.9 M66.8 51.5 H72.1 M72.9 51.5 H74.5 M75.1 51.5 H76.7 M77.4 51.5 H80.3 M81.1 51.5 H82.4" stroke="#F2F2F2" stroke-width="0.8" stroke-dasharray="0.7 0.3 1.0 0.3" opacity="0.8"/><path d="M14.4 54.3 H16.4 M17.1 54.3 H22.4 M23.6 54.3 H28.2 M29.2 54.3 H31.6 M32.8 54.3 H37.7 M38.9 54.3 H42.3 M43.0 54.3 H46.7 M47.4 54.3 H51.9 M53.0 54.3 H58.0 M59.1 54.3 H64.9 M65.8 54.3 H67.5 M68.4 54.3 H72.9 M74.1 54.3 H76.9 M78.1 54.3 H81.0 M81.7 54.3 H82.4" stroke="#F2F2F2" stroke-width="0.8" stroke-dasharray="0.7 0.3 1.0 0.3" opacity="0.8"/><path d="M63.0 57.1 H66.8 M67.9 57.1 H71.2 M71.9 57.1 H76.5 M77.6 57.1 H80.0 M81.1 57.1 H82.4" stroke="#F2F2F2" stroke-width="0.8" stroke-dasharray="0.7 0.3 1.0 0.3" opacity="0.8"/></svg><svg style="left:1065px;top:286px" width="14" height="14" viewBox="0 0 14 14"><path d="M6.5 0.9 L8 4.8 L12.2 4.8 L8.8 7.4 L10.1 11.6 L6.5 9 L2.9 11.6 L4.2 7.4 L0.8 4.8 L5 4.8 Z" fill="#6A6A6A"/><path d="M-0.1 2.8 L1.1 4.4 L-0.1 4.6 Z M-0.1 6.9 L2.3 7.3 L1 8.5 L-0.1 8.5 Z" fill="#7A7A7A"/></svg>
<div class="abs" style="left:1121px;top:206px;width:92px;height:70px;border:1px solid #CFCFCF;background:#fff"></div>
<div class="abs" style="left:1123px;top:208px;width:90px;height:68px;background:#000"></div>
<svg style="left:1123px;top:208px" width="90" height="68" viewBox="0 0 90 68"><clipPath id="c9"><path d="M90 0 H63.1 L53.1 13.2 Q49.5 19.5 53 25.5 Q55.5 28.5 60.5 26.5 L49.5 41.3 Q47.5 48.5 53 55.3 Q57 55 60.5 50.9 L61.3 55.3 Q62.5 61 67.9 62.7 L67 68 H84.9 L90 60.5 Z"/></clipPath><g clip-path="url(#c9)"><rect x="45" y="0" width="45" height="68" fill="#CFCFCF" /><rect x="45" y="0" width="45" height="27" fill="#B8B8B8" /><path d="M58 0 H72 L66 10 L58 12 Z" fill="#F6F6F6"/><path d="M64 12 Q70 10 76 14 L84 16 L88 26 L78 28 L66 29 L62 22 Z" fill="#3A3434"/><path d="M52 18 Q58 14 62 20 L58 24 Z" fill="#5A5A5A"/><path d="M76 2 L90 3 V12 L80 10 Z" fill="#6A6A6A"/><rect x="49" y="43" width="6" height="5" fill="#6A6A6A" /><rect x="58.0" y="44.5" width="1.5" height="5.5" fill="#2E2E2E" /><rect x="60.2" y="44.5" width="1.5" height="5.5" fill="#2E2E2E" /><rect x="62.4" y="44.5" width="1.5" height="5.5" fill="#2E2E2E" /><rect x="66.0" y="44" width="1.5" height="6" fill="#2A2A2A" /><rect x="67.9" y="44" width="1.5" height="6" fill="#2A2A2A" /><rect x="69.8" y="44" width="1.5" height="6" fill="#2A2A2A" /><rect x="71.7" y="44" width="1.5" height="6" fill="#2A2A2A" /><rect x="84.5" y="22" width="1" height="34" fill="#3A3A3A" /><rect x="55" y="54.5" width="35" height="6" fill="#4A4444" /><rect x="60" y="61" width="30" height="7" fill="#D6D6D6" /><path d="M59 47 L84 18 M67 53 L90 30" stroke="#222" stroke-width="0.45"/></g><path d="M6.1 8.0 H8.8 M9.5 8.0 H14.0 M14.9 8.0 H18.5 M19.5 8.0 H22.5 M23.7 8.0 H28.4 M29.5 8.0 H31.8 M33.0 8.0 H38.8 M39.7 8.0 H42.0 M42.6 8.0 H44.7 M45.9 8.0 H48.8" stroke="#F2F2F2" stroke-width="0.8" stroke-dasharray="0.7 0.3 1.0 0.3" opacity="0.72"/><path d="M5.8 10.8 H10.9 M12.1 10.8 H17.7 M18.5 10.8 H21.0 M22.1 10.8 H27.6 M28.8 10.8 H34.4 M35.2 10.8 H38.3 M38.9 10.8 H43.6 M44.2 10.8 H47.6 M48.8 10.8 H48.8" stroke="#F2F2F2" stroke-width="0.8" stroke-dasharray="0.7 0.3 1.0 0.3" opacity="0.72"/><path d="M38.6 13.5 H44.5 M45.1 13.5 H48.8" stroke="#F2F2F2" stroke-width="0.8" stroke-dasharray="0.7 0.3 1.0 0.3" opacity="0.72"/><path d="M5.2 16.3 H8.2 M9.4 16.3 H11.5 M12.8 16.3 H16.5 M17.5 16.3 H21.4 M22.2 16.3 H24.0 M24.7 16.3 H29.7 M30.8 16.3 H32.9 M34.2 16.3 H38.9 M39.5 16.3 H42.3 M43.3 16.3 H48.7" stroke="#F2F2F2" stroke-width="0.8" stroke-dasharray="0.7 0.3 1.0 0.3" opacity="0.72"/><path d="M26.5 19.1 H28.6 M29.7 19.1 H35.4 M36.2 19.1 H40.5 M41.1 19.1 H44.2 M45.3 19.1 H48.8" stroke="#F2F2F2" stroke-width="0.8" stroke-dasharray="0.7 0.3 1.0 0.3" opacity="0.72"/><path d="M7.9 21.8 H11.0 M12.2 21.8 H16.3 M17.2 21.8 H20.5 M21.8 21.8 H25.9 M26.5 21.8 H31.6 M32.5 21.8 H35.9 M36.7 21.8 H40.2 M41.0 21.8 H42.9 M43.9 21.8 H45.9 M47.0 21.8 H48.7" stroke="#F2F2F2" stroke-width="0.8" stroke-dasharray="0.7 0.3 1.0 0.3" opacity="0.72"/><path d="M24.8 24.6 H27.9 M29.0 24.6 H33.1 M33.7 24.6 H38.1 M38.8 24.6 H43.7 M44.7 24.6 H48.8" stroke="#F2F2F2" stroke-width="0.8" stroke-dasharray="0.7 0.3 1.0 0.3" opacity="0.72"/><path d="M7.7 27.4 H10.5 M11.6 27.4 H17.1 M17.7 27.4 H23.4 M24.6 27.4 H27.3 M28.0 27.4 H30.0 M30.7 27.4 H32.4 M33.4 27.4 H38.4 M39.2 27.4 H40.8 M41.9 27.4 H44.7 M45.7 27.4 H48.4" stroke="#F2F2F2" stroke-width="0.8" stroke-dasharray="0.7 0.3 1.0 0.3" opacity="0.72"/><path d="M5.6 30.1 H8.4 M9.1 30.1 H12.5 M13.2 30.1 H17.2 M18.4 30.1 H22.5 M23.7 30.1 H28.2 M29.0 30.1 H33.2 M34.2 30.1 H37.2 M38.5 30.1 H41.2 M41.9 30.1 H47.0 M48.2 30.1 H48.8" stroke="#F2F2F2" stroke-width="0.8" stroke-dasharray="0.7 0.3 1.0 0.3" opacity="0.72"/><path d="M5.2 32.9 H7.6 M8.5 32.9 H12.7 M13.7 32.9 H15.6 M16.5 32.9 H20.7 M21.5 32.9 H23.3 M24.4 32.9 H28.5 M29.5 32.9 H32.9 M33.8 32.9 H37.6 M38.7 32.9 H43.8 M45.0 32.9 H48.8" stroke="#F2F2F2" stroke-width="0.8" stroke-dasharray="0.7 0.3 1.0 0.3" opacity="0.72"/><path d="M8.0 35.7 H10.5 M11.2 35.7 H13.2 M14.1 35.7 H15.9 M17.1 35.7 H21.9 M22.9 35.7 H24.6 M25.3 35.7 H28.9 M29.8 35.7 H35.6 M36.6 35.7 H40.3 M41.1 35.7 H45.4 M46.1 35.7 H47.8 M48.7 35.7 H48.8" stroke="#F2F2F2" stroke-width="0.8" stroke-dasharray="0.7 0.3 1.0 0.3" opacity="0.72"/><path d="M43.6 38.5 H45.4 M46.1 38.5 H48.8" stroke="#F2F2F2" stroke-width="0.8" stroke-dasharray="0.7 0.3 1.0 0.3" opacity="0.72"/><path d="M6.1 48.3 H12.0 M13.1 48.3 H16.4 M17.3 48.3 H22.3 M23.2 48.3 H26.8 M27.6 48.3 H29.9 M31.1 48.3 H36.2 M37.0 48.3 H42.0 M42.9 48.3 H44.8 M46.0 48.3 H48.8" stroke="#F2F2F2" stroke-width="0.8" stroke-dasharray="0.7 0.3 1.0 0.3" opacity="0.72"/><path d="M27.5 51.1 H30.7 M31.8 51.1 H37.0 M37.9 51.1 H43.8 M44.9 51.1 H48.8" stroke="#F2F2F2" stroke-width="0.8" stroke-dasharray="0.7 0.3 1.0 0.3" opacity="0.72"/><path d="M7.6 53.8 H9.9 M11.0 53.8 H15.8 M16.8 53.8 H22.0 M23.2 53.8 H28.2 M29.2 53.8 H34.7 M35.9 53.8 H39.4 M40.3 53.8 H42.2 M43.1 53.8 H46.5 M47.6 53.8 H48.8" stroke="#F2F2F2" stroke-width="0.8" stroke-dasharray="0.7 0.3 1.0 0.3" opacity="0.72"/><path d="M7.0 56.6 H9.2 M10.4 56.6 H15.7 M16.6 56.6 H22.5 M23.4 56.6 H27.4 M28.7 56.6 H31.2 M32.0 56.6 H37.0 M37.7 56.6 H41.1 M42.2 56.6 H46.9 M47.9 56.6 H48.8" stroke="#F2F2F2" stroke-width="0.8" stroke-dasharray="0.7 0.3 1.0 0.3" opacity="0.72"/><path d="M5.0 59.4 H7.1 M7.8 59.4 H9.5 M10.7 59.4 H13.6 M14.6 59.4 H16.2 M17.3 59.4 H20.7 M21.9 59.4 H25.7 M26.4 59.4 H29.6 M30.5 59.4 H34.9 M36.1 59.4 H38.7 M39.6 59.4 H43.7 M45.0 59.4 H48.3" stroke="#F2F2F2" stroke-width="0.8" stroke-dasharray="0.7 0.3 1.0 0.3" opacity="0.72"/><path d="M31.6 62.1 H34.3 M35.5 62.1 H37.8 M38.5 62.1 H42.8 M44.0 62.1 H47.4 M48.1 62.1 H48.8" stroke="#F2F2F2" stroke-width="0.8" stroke-dasharray="0.7 0.3 1.0 0.3" opacity="0.72"/><path d="M5.2 64.9 H9.5 M10.4 64.9 H14.3 M15.0 64.9 H17.6 M18.4 64.9 H23.2 M24.2 64.9 H26.0 M27.0 64.9 H32.8 M33.4 64.9 H35.6 M36.9 64.9 H40.8 M42.0 64.9 H47.3 M48.2 64.9 H48.8" stroke="#F2F2F2" stroke-width="0.8" stroke-dasharray="0.7 0.3 1.0 0.3" opacity="0.72"/></svg><svg style="left:1201px;top:286px" width="14" height="14" viewBox="0 0 14 14"><path d="M6.5 0.9 L8 4.8 L12.2 4.8 L8.8 7.4 L10.1 11.6 L6.5 9 L2.9 11.6 L4.2 7.4 L0.8 4.8 L5 4.8 Z" fill="#6A6A6A"/><path d="M-0.1 2.8 L1.1 4.4 L-0.1 4.6 Z M-0.1 6.9 L2.3 7.3 L1 8.5 L-0.1 8.5 Z" fill="#7A7A7A"/></svg>
<div class="abs" style="left:1257px;top:206px;width:92px;height:70px;border:1px solid #CFCFCF;background:#fff"></div>
<div class="abs" style="left:1259px;top:208px;width:90px;height:68px;background:#000"></div>
<svg style="left:1259px;top:208px" width="90" height="68" viewBox="0 0 90 68"><path d="M17.2 22 H34.5" stroke="#F78B3D" stroke-width="1.3" stroke-dasharray="1.2 0.3 0.7 0.3 2 0.4" opacity="0.9"/><path d="M37.3 65.5 L57.7 25.4" stroke="#F78B3D" stroke-width="2.3" stroke-linecap="round"/><path d="M45.5 58.9 L72.5 6.3" stroke="#F78B3D" stroke-width="3.0" stroke-linecap="round"/><path d="M47.2 39.5 L57.4 18.4" stroke="#F78B3D" stroke-width="1.8" stroke-linecap="round"/></svg><svg style="left:1337px;top:286px" width="14" height="14" viewBox="0 0 14 14"><path d="M6.5 0.9 L8 4.8 L12.2 4.8 L8.8 7.4 L10.1 11.6 L6.5 9 L2.9 11.6 L4.2 7.4 L0.8 4.8 L5 4.8 Z" fill="#6A6A6A"/><path d="M-0.1 2.8 L1.1 4.4 L-0.1 4.6 Z M-0.1 6.9 L2.3 7.3 L1 8.5 L-0.1 8.5 Z" fill="#7A7A7A"/></svg>
<div class="abs" style="left:1393px;top:206px;width:92px;height:70px;border:1px solid #CFCFCF;background:#fff"></div>
<div class="abs" style="left:1395px;top:208px;width:90px;height:68px;background:#000"></div>
<svg style="left:1395px;top:208px" width="90" height="68" viewBox="0 0 90 68"><clipPath id="c11"><path d="M1.4 29.5 Q4 21 8.1 19.1 Q14 14.5 19.1 14 Q24 12 28 12.1 Q35 13 38.3 16.9 Q41.5 20 41.3 25 L40.5 30.2 Q39.5 35 38.3 38.3 L32.4 47.2 Q29 52 25 54.6 Q20 56.5 16.2 55.7 Q12 54 11 51.6 Q9.5 47 9.5 41.3 L5.9 38.3 Q2 35 1.4 31.7 Z"/></clipPath><g clip-path="url(#c11)"><defs><linearGradient id="c11g" x1="0" y1="0" x2="0" y2="1"><stop offset="0" stop-color="#7AA8E4"/><stop offset="0.3" stop-color="#B8CCE0"/><stop offset="0.36" stop-color="#9A8A68"/><stop offset="0.45" stop-color="#6A6A48"/><stop offset="0.62" stop-color="#4E5E3A"/><stop offset="0.7" stop-color="#A8A890"/><stop offset="0.76" stop-color="#7A9A5A"/><stop offset="0.84" stop-color="#6A8A50"/><stop offset="0.88" stop-color="#4A8AB0"/><stop offset="1" stop-color="#5A6A70"/></linearGradient></defs><rect x="0" y="10" width="46" height="48" fill="url(#c11g)"/><rect x="20.6" y="15.5" width="7.4" height="13.2" fill="#B8A88A" /><rect x="22" y="17" width="4" height="9" fill="#D8D0C0" /><rect x="12" y="26" width="28" height="4" fill="#8A7A5A" /><rect x="6" y="30" width="8" height="8" fill="#5A6A40" /></g><path d="M39.8 33.2 L49.8 43.5 M39.1 36.9 L47.2 48.7 M38.5 40 L44 45" stroke="#B0B0B0" stroke-width="0.7" opacity="0.75"/><path d="M48.3 20.5 H53.7 M54.8 20.5 H58.3 M59.5 20.5 H61.9 M63.1 20.5 H66.7 M67.7 20.5 H70.1 M71.0 20.5 H73.1 M74.1 20.5 H79.6 M80.7 20.5 H84.8 M85.7 20.5 H86.3" stroke="#F2F2F2" stroke-width="0.8" stroke-dasharray="0.7 0.3 1.0 0.3" opacity="0.72"/><path d="M49.0 23.2 H53.3 M54.5 23.2 H56.2 M56.9 23.2 H62.3 M63.3 23.2 H68.3 M69.2 23.2 H73.3 M74.1 23.2 H76.6 M77.4 23.2 H79.0 M79.6 23.2 H84.1 M84.9 23.2 H86.3" stroke="#F2F2F2" stroke-width="0.8" stroke-dasharray="0.7 0.3 1.0 0.3" opacity="0.72"/><path d="M80.7 25.9 H83.6 M84.4 25.9 H86.3" stroke="#F2F2F2" stroke-width="0.8" stroke-dasharray="0.7 0.3 1.0 0.3" opacity="0.72"/><path d="M48.6 28.6 H51.9 M53.1 28.6 H56.4 M57.6 28.6 H62.9 M63.5 28.6 H66.0 M67.2 28.6 H70.8 M72.1 28.6 H75.4 M76.1 28.6 H80.4 M81.5 28.6 H84.2 M84.9 28.6 H86.3" stroke="#F2F2F2" stroke-width="0.8" stroke-dasharray="0.7 0.3 1.0 0.3" opacity="0.72"/><path d="M48.6 31.3 H50.7 M51.4 31.3 H53.4 M54.0 31.3 H59.1 M59.9 31.3 H63.9 M64.8 31.3 H67.1 M68.3 31.3 H70.3 M71.4 31.3 H73.4 M74.3 31.3 H76.8 M77.6 31.3 H83.4 M84.6 31.3 H86.3" stroke="#F2F2F2" stroke-width="0.8" stroke-dasharray="0.7 0.3 1.0 0.3" opacity="0.72"/><path d="M50.3 34.1 H53.6 M54.8 34.1 H59.2 M59.9 34.1 H65.8 M66.6 34.1 H69.2 M70.4 34.1 H73.3 M74.1 34.1 H76.0 M76.6 34.1 H80.8 M81.5 34.1 H85.7" stroke="#F2F2F2" stroke-width="0.8" stroke-dasharray="0.7 0.3 1.0 0.3" opacity="0.72"/></svg><svg style="left:1473px;top:286px" width="14" height="14" viewBox="0 0 14 14"><path d="M6.5 0.9 L8 4.8 L12.2 4.8 L8.8 7.4 L10.1 11.6 L6.5 9 L2.9 11.6 L4.2 7.4 L0.8 4.8 L5 4.8 Z" fill="#6A6A6A"/><path d="M-0.1 2.8 L1.1 4.4 L-0.1 4.6 Z M-0.1 6.9 L2.3 7.3 L1 8.5 L-0.1 8.5 Z" fill="#7A7A7A"/></svg>
<div class="abs" style="left:1529px;top:206px;width:92px;height:70px;border:1px solid #CFCFCF;background:#fff"></div>
<div class="abs" style="left:1531px;top:208px;width:90px;height:68px;background:#000"></div>
<svg style="left:1531px;top:208px" width="90" height="68" viewBox="0 0 90 68"><clipPath id="c12"><path d="M1.4 29.5 Q4 21 8.1 19.1 Q14 14.5 19.1 14 Q24 12 28 12.1 Q35 13 38.3 16.9 Q41.5 20 41.3 25 L40.5 30.2 Q39.5 35 38.3 38.3 L32.4 47.2 Q29 52 25 54.6 Q20 56.5 16.2 55.7 Q12 54 11 51.6 Q9.5 47 9.5 41.3 L5.9 38.3 Q2 35 1.4 31.7 Z"/></clipPath><g clip-path="url(#c12)"><defs><linearGradient id="c12g" x1="0" y1="0" x2="0" y2="1"><stop offset="0" stop-color="#CFCFCF"/><stop offset="0.3" stop-color="#C4C4C4"/><stop offset="0.38" stop-color="#8E8E8E"/><stop offset="0.52" stop-color="#7E7E7E"/><stop offset="0.6" stop-color="#D8D8D8"/><stop offset="1" stop-color="#E2E2E2"/></linearGradient></defs><rect x="0" y="10" width="46" height="48" fill="url(#c12g)"/><rect x="17.7" y="27.3" width="13.3" height="5" fill="#C8B478" /><rect x="22" y="29" width="1.5" height="4" fill="#333" /><path d="M20 56 L24.5 35 M25.5 56 L25.8 35" stroke="#4A4040" stroke-width="1"/><path d="M3 30 L12 32 L10 40 Z" fill="#8A8A8A"/><path d="M33 32 L41 30 L38 42 L32 44 Z" fill="#7A7A7A"/></g><path d="M39.8 33.2 L49.8 43.5 M39.1 36.9 L47.2 48.7 M38.5 40 L44 45" stroke="#B0B0B0" stroke-width="0.7" opacity="0.75"/><path d="M50.7 11.4 H54.5 M55.4 11.4 H58.6 M59.9 11.4 H63.6 M64.6 11.4 H68.2 M69.4 11.4 H71.9 M72.5 11.4 H76.8 M78.1 11.4 H81.3 M82.1 11.4 H84.6 M85.6 11.4 H87.0" stroke="#F2F2F2" stroke-width="0.8" stroke-dasharray="0.7 0.3 1.0 0.3" opacity="0.72"/><path d="M49.0 14.5 H53.5 M54.7 14.5 H56.6 M57.8 14.5 H63.0 M64.1 14.5 H66.6 M67.9 14.5 H71.3 M72.2 14.5 H76.7 M77.9 14.5 H81.9 M83.1 14.5 H87.0" stroke="#F2F2F2" stroke-width="0.8" stroke-dasharray="0.7 0.3 1.0 0.3" opacity="0.72"/><path d="M64.3 17.5 H68.1 M68.8 17.5 H73.0 M74.1 17.5 H77.7 M78.7 17.5 H82.7 M83.7 17.5 H85.6 M86.3 17.5 H87.0" stroke="#F2F2F2" stroke-width="0.8" stroke-dasharray="0.7 0.3 1.0 0.3" opacity="0.72"/><path d="M48.6 20.6 H54.0 M54.8 20.6 H57.7 M58.5 20.6 H61.5 M62.4 20.6 H66.5 M67.6 20.6 H69.9 M70.8 20.6 H76.1 M76.8 20.6 H78.4 M79.5 20.6 H81.2 M81.9 20.6 H86.1" stroke="#F2F2F2" stroke-width="0.8" stroke-dasharray="0.7 0.3 1.0 0.3" opacity="0.72"/><path d="M50.8 23.6 H52.7 M53.4 23.6 H56.9 M57.8 23.6 H62.1 M63.2 23.6 H67.0 M67.8 23.6 H70.9 M71.8 23.6 H76.4 M77.6 23.6 H80.2 M81.5 23.6 H85.1 M86.1 23.6 H87.0" stroke="#F2F2F2" stroke-width="0.8" stroke-dasharray="0.7 0.3 1.0 0.3" opacity="0.72"/><path d="M78.5 26.7 H84.2 M85.5 26.7 H87.0" stroke="#F2F2F2" stroke-width="0.8" stroke-dasharray="0.7 0.3 1.0 0.3" opacity="0.72"/><path d="M49.0 29.7 H52.8 M53.6 29.7 H55.6 M56.4 29.7 H60.4 M61.1 29.7 H66.8 M68.0 29.7 H72.5 M73.3 29.7 H75.3 M76.5 29.7 H80.2 M81.2 29.7 H84.3 M85.4 29.7 H87.0" stroke="#F2F2F2" stroke-width="0.8" stroke-dasharray="0.7 0.3 1.0 0.3" opacity="0.72"/><path d="M73.6 32.8 H76.4 M77.6 32.8 H81.4 M82.5 32.8 H87.0" stroke="#F2F2F2" stroke-width="0.8" stroke-dasharray="0.7 0.3 1.0 0.3" opacity="0.72"/><path d="M50.6 35.8 H53.3 M54.3 35.8 H59.0 M59.6 35.8 H65.1 M66.0 35.8 H68.6 M69.5 35.8 H75.4 M76.4 35.8 H80.7 M82.0 35.8 H87.0" stroke="#F2F2F2" stroke-width="0.8" stroke-dasharray="0.7 0.3 1.0 0.3" opacity="0.72"/><path d="M74.3 38.9 H79.8 M81.0 38.9 H85.1 M85.9 38.9 H87.0" stroke="#F2F2F2" stroke-width="0.8" stroke-dasharray="0.7 0.3 1.0 0.3" opacity="0.72"/><path d="M49.7 41.9 H51.3 M52.4 41.9 H58.0 M59.1 41.9 H64.7 M65.9 41.9 H69.8 M71.0 41.9 H74.2 M74.9 41.9 H77.9 M78.8 41.9 H84.5 M85.6 41.9 H87.0" stroke="#F2F2F2" stroke-width="0.8" stroke-dasharray="0.7 0.3 1.0 0.3" opacity="0.72"/><path d="M80.5 45.0 H84.6 M85.3 45.0 H87.0" stroke="#F2F2F2" stroke-width="0.8" stroke-dasharray="0.7 0.3 1.0 0.3" opacity="0.72"/><path d="M50.5 48.0 H55.1 M56.2 48.0 H59.1 M59.8 48.0 H64.3 M65.4 48.0 H68.8 M69.6 48.0 H72.0 M73.0 48.0 H76.7 M77.4 48.0 H81.5 M82.5 48.0 H87.0" stroke="#F2F2F2" stroke-width="0.8" stroke-dasharray="0.7 0.3 1.0 0.3" opacity="0.72"/><path d="M50.8 51.1 H56.6 M57.5 51.1 H62.8 M63.9 51.1 H66.7 M67.7 51.1 H69.8 M71.1 51.1 H74.1 M75.0 51.1 H78.3 M79.2 51.1 H83.9 M84.8 51.1 H87.0" stroke="#F2F2F2" stroke-width="0.8" stroke-dasharray="0.7 0.3 1.0 0.3" opacity="0.72"/><path d="M49.1 54.1 H52.4 M53.5 54.1 H58.6 M59.6 54.1 H63.0 M63.7 54.1 H65.6 M66.6 54.1 H69.6 M70.7 54.1 H72.3 M73.4 54.1 H78.9 M80.0 54.1 H82.2 M83.2 54.1 H87.0" stroke="#F2F2F2" stroke-width="0.8" stroke-dasharray="0.7 0.3 1.0 0.3" opacity="0.72"/><path d="M50.0 57.2 H53.4 M54.2 57.2 H57.6 M58.6 57.2 H61.4 M62.6 57.2 H67.6 M68.6 57.2 H70.8 M71.6 57.2 H73.2 M74.3 57.2 H79.4 M80.2 57.2 H83.7 M84.7 57.2 H87.0" stroke="#F2F2F2" stroke-width="0.8" stroke-dasharray="0.7 0.3 1.0 0.3" opacity="0.72"/><path d="M72.7 60.2 H77.9 M78.6 60.2 H83.6 M84.8 60.2 H86.8" stroke="#F2F2F2" stroke-width="0.8" stroke-dasharray="0.7 0.3 1.0 0.3" opacity="0.72"/></svg><svg style="left:1609px;top:286px" width="14" height="14" viewBox="0 0 14 14"><path d="M6.5 0.9 L8 4.8 L12.2 4.8 L8.8 7.4 L10.1 11.6 L6.5 9 L2.9 11.6 L4.2 7.4 L0.8 4.8 L5 4.8 Z" fill="#6A6A6A"/><path d="M-0.1 2.8 L1.1 4.4 L-0.1 4.6 Z M-0.1 6.9 L2.3 7.3 L1 8.5 L-0.1 8.5 Z" fill="#7A7A7A"/></svg>
<div class="abs" style="left:1665px;top:206px;width:92px;height:70px;border:1px solid #CFCFCF;background:#fff"></div>
<div class="abs" style="left:1667px;top:208px;width:90px;height:68px;background:#000"></div>
<svg style="left:1667px;top:208px" width="90" height="68" viewBox="0 0 90 68"><path d="M37.3 65.5 L57.7 25.4" stroke="#F78B3D" stroke-width="2.3" stroke-linecap="round"/><path d="M45.5 58.9 L72.5 6.3" stroke="#F78B3D" stroke-width="3.0" stroke-linecap="round"/><path d="M47.2 39.5 L57.4 18.4" stroke="#F78B3D" stroke-width="1.8" stroke-linecap="round"/><path d="M4.8 6.0 H10.4 M11.6 6.0 H17.1 M18.1 6.0 H22.6 M23.8 6.0 H28.2 M29.0 6.0 H30.8 M32.0 6.0 H35.0" stroke="#F2F2F2" stroke-width="0.8" stroke-dasharray="0.7 0.3 1.0 0.3" opacity="0.72"/><path d="M5.2 8.8 H9.8 M11.1 8.8 H17.1 M18.3 8.8 H20.1 M21.3 8.8 H26.8 M27.6 8.8 H31.1 M32.0 8.8 H34.1" stroke="#F2F2F2" stroke-width="0.8" stroke-dasharray="0.7 0.3 1.0 0.3" opacity="0.72"/><path d="M25.5 11.6 H29.2 M30.4 11.6 H34.4" stroke="#F2F2F2" stroke-width="0.8" stroke-dasharray="0.7 0.3 1.0 0.3" opacity="0.72"/><path d="M4.6 14.5 H8.1 M8.9 14.5 H10.9 M12.1 14.5 H17.2 M18.5 14.5 H23.1 M24.1 14.5 H28.9 M29.6 14.5 H34.2" stroke="#F2F2F2" stroke-width="0.8" stroke-dasharray="0.7 0.3 1.0 0.3" opacity="0.72"/><path d="M5.1 17.3 H7.5 M8.5 17.3 H11.1 M12.0 17.3 H16.3 M17.1 17.3 H19.2 M20.2 17.3 H22.7 M23.5 17.3 H25.9 M26.7 17.3 H28.6 M29.6 17.3 H35.0" stroke="#F2F2F2" stroke-width="0.8" stroke-dasharray="0.7 0.3 1.0 0.3" opacity="0.72"/><path d="M19.1 20.1 H21.7 M22.6 20.1 H27.2 M28.2 20.1 H30.8 M31.9 20.1 H35.0" stroke="#F2F2F2" stroke-width="0.8" stroke-dasharray="0.7 0.3 1.0 0.3" opacity="0.72"/><path d="M3.6 22.9 H6.7 M7.8 22.9 H12.1 M13.1 22.9 H17.5 M18.8 22.9 H23.4 M24.2 22.9 H27.9 M29.1 22.9 H30.8 M31.9 22.9 H33.6 M34.6 22.9 H35.0" stroke="#F2F2F2" stroke-width="0.8" stroke-dasharray="0.7 0.3 1.0 0.3" opacity="0.72"/><path d="M28.4 25.8 H34.0 M34.7 25.8 H35.0" stroke="#F2F2F2" stroke-width="0.8" stroke-dasharray="0.7 0.3 1.0 0.3" opacity="0.72"/><path d="M3.5 28.6 H8.1 M9.4 28.6 H14.6 M15.7 28.6 H19.5 M20.2 28.6 H23.1 M24.0 28.6 H29.6 M30.6 28.6 H35.0" stroke="#F2F2F2" stroke-width="0.8" stroke-dasharray="0.7 0.3 1.0 0.3" opacity="0.72"/><path d="M22.6 37.1 H24.1 M25.0 37.1 H28.7 M30.0 37.1 H33.8 M34.7 37.1 H35.0" stroke="#F2F2F2" stroke-width="0.8" stroke-dasharray="0.7 0.3 1.0 0.3" opacity="0.72"/><path d="M5.5 39.9 H9.2 M10.5 39.9 H15.3 M16.1 39.9 H20.7 M21.8 39.9 H24.5 M25.5 39.9 H28.6 M29.4 39.9 H32.2 M32.9 39.9 H35.0" stroke="#F2F2F2" stroke-width="0.8" stroke-dasharray="0.7 0.3 1.0 0.3" opacity="0.72"/><path d="M24.8 42.7 H26.6 M27.2 42.7 H32.9 M33.9 42.7 H35.0" stroke="#F2F2F2" stroke-width="0.8" stroke-dasharray="0.7 0.3 1.0 0.3" opacity="0.72"/><path d="M3.0 45.6 H6.3 M6.9 45.6 H10.8 M12.1 45.6 H14.2 M14.9 45.6 H18.0 M18.7 45.6 H21.6 M22.6 45.6 H25.5 M26.3 45.6 H28.2 M29.2 45.6 H33.3 M34.3 45.6 H35.0" stroke="#F2F2F2" stroke-width="0.8" stroke-dasharray="0.7 0.3 1.0 0.3" opacity="0.72"/><path d="M26.6 48.4 H29.6 M30.8 48.4 H34.7" stroke="#F2F2F2" stroke-width="0.8" stroke-dasharray="0.7 0.3 1.0 0.3" opacity="0.72"/><path d="M5.5 51.2 H8.2 M9.4 51.2 H11.5 M12.5 51.2 H15.7 M16.5 51.2 H21.6 M22.4 51.2 H27.1 M28.2 51.2 H33.9 M34.8 51.2 H35.0" stroke="#F2F2F2" stroke-width="0.8" stroke-dasharray="0.7 0.3 1.0 0.3" opacity="0.72"/><path d="M21.7 54.0 H27.0 M28.2 54.0 H30.2 M30.9 54.0 H34.8" stroke="#F2F2F2" stroke-width="0.8" stroke-dasharray="0.7 0.3 1.0 0.3" opacity="0.72"/><path d="M4.2 56.9 H7.0 M8.3 56.9 H11.2 M11.8 56.9 H13.6 M14.2 56.9 H18.9 M19.6 56.9 H24.3 M25.5 56.9 H31.5 M32.7 56.9 H35.0" stroke="#F2F2F2" stroke-width="0.8" stroke-dasharray="0.7 0.3 1.0 0.3" opacity="0.72"/><path d="M17.1 59.7 H22.8 M23.4 59.7 H25.3 M26.2 59.7 H29.5 M30.3 59.7 H32.5 M33.2 59.7 H35.0" stroke="#F2F2F2" stroke-width="0.8" stroke-dasharray="0.7 0.3 1.0 0.3" opacity="0.72"/><path d="M4.2 62.5 H6.9 M7.7 62.5 H13.7 M14.9 62.5 H20.7 M21.6 62.5 H23.8 M25.0 62.5 H30.1 M31.0 62.5 H33.2 M34.2 62.5 H35.0" stroke="#F2F2F2" stroke-width="0.8" stroke-dasharray="0.7 0.3 1.0 0.3" opacity="0.72"/><path d="M3.6 65.3 H8.3 M9.5 65.3 H11.1 M12.4 65.3 H16.0 M17.0 65.3 H19.0 M19.6 65.3 H21.7 M22.4 65.3 H28.0 M29.0 65.3 H33.7 M34.4 65.3 H35.0" stroke="#F2F2F2" stroke-width="0.8" stroke-dasharray="0.7 0.3 1.0 0.3" opacity="0.72"/><path d="M61.7 39.2 H65.5 M66.4 39.2 H68.0 M69.1 39.2 H71.2 M72.2 39.2 H78.0 M79.1 39.2 H81.6 M82.7 39.2 H87.0" stroke="#F2F2F2" stroke-width="0.8" stroke-dasharray="0.7 0.3 1.0 0.3" opacity="0.72"/><path d="M60.4 42.1 H65.3 M66.6 42.1 H70.5 M71.6 42.1 H77.2 M78.3 42.1 H83.3 M84.1 42.1 H87.0" stroke="#F2F2F2" stroke-width="0.8" stroke-dasharray="0.7 0.3 1.0 0.3" opacity="0.72"/><path d="M83.4 45.1 H86.1" stroke="#F2F2F2" stroke-width="0.8" stroke-dasharray="0.7 0.3 1.0 0.3" opacity="0.72"/><path d="M60.8 48.0 H65.8 M66.5 48.0 H72.1 M73.1 48.0 H75.1 M76.1 48.0 H82.1 M82.9 48.0 H87.0" stroke="#F2F2F2" stroke-width="0.8" stroke-dasharray="0.7 0.3 1.0 0.3" opacity="0.72"/><path d="M60.5 51.0 H65.6 M66.2 51.0 H71.0 M71.9 51.0 H74.6 M75.2 51.0 H77.4 M78.5 51.0 H80.4 M81.4 51.0 H83.7 M84.6 51.0 H86.5" stroke="#F2F2F2" stroke-width="0.8" stroke-dasharray="0.7 0.3 1.0 0.3" opacity="0.72"/><path d="M61.5 53.9 H66.4 M67.6 53.9 H71.4 M72.3 53.9 H75.9 M76.7 53.9 H82.5 M83.4 53.9 H85.5 M86.6 53.9 H87.0" stroke="#F2F2F2" stroke-width="0.8" stroke-dasharray="0.7 0.3 1.0 0.3" opacity="0.72"/><path d="M62.4 56.8 H64.1 M64.7 56.8 H67.9 M69.1 56.8 H72.6 M73.3 56.8 H76.7 M77.7 56.8 H81.4 M82.1 56.8 H85.9 M86.7 56.8 H87.0" stroke="#F2F2F2" stroke-width="0.8" stroke-dasharray="0.7 0.3 1.0 0.3" opacity="0.72"/><path d="M78.8 59.8 H81.2 M82.1 59.8 H86.9" stroke="#F2F2F2" stroke-width="0.8" stroke-dasharray="0.7 0.3 1.0 0.3" opacity="0.72"/><path d="M61.0 62.7 H64.0 M65.2 62.7 H70.3 M71.5 62.7 H75.8 M76.5 62.7 H82.3 M83.3 62.7 H87.0" stroke="#F2F2F2" stroke-width="0.8" stroke-dasharray="0.7 0.3 1.0 0.3" opacity="0.72"/><path d="M60.9 65.6 H63.1 M63.8 65.6 H66.9 M67.6 65.6 H72.3 M73.0 65.6 H77.3 M78.3 65.6 H83.2 M84.3 65.6 H87.0" stroke="#F2F2F2" stroke-width="0.8" stroke-dasharray="0.7 0.3 1.0 0.3" opacity="0.72"/></svg><svg style="left:1745px;top:286px" width="14" height="14" viewBox="0 0 14 14"><path d="M6.5 0.9 L8 4.8 L12.2 4.8 L8.8 7.4 L10.1 11.6 L6.5 9 L2.9 11.6 L4.2 7.4 L0.8 4.8 L5 4.8 Z" fill="#6A6A6A"/><path d="M-0.1 2.8 L1.1 4.4 L-0.1 4.6 Z M-0.1 6.9 L2.3 7.3 L1 8.5 L-0.1 8.5 Z" fill="#7A7A7A"/></svg>
<div class="abs" style="left:33px;top:339px;width:92px;height:70px;border:1px solid #CFCFCF;background:#fff"></div>
<div class="abs" style="left:35px;top:341px;width:90px;height:68px;background:#000"></div>
<svg style="left:35px;top:341px" width="90" height="68" viewBox="0 0 90 68"><rect x="3.6" y="24.9" width="34.4" height="22.1" fill="#6A8A48" /><defs><linearGradient id="g14s" x1="0" y1="0" x2="0" y2="1"><stop offset="0" stop-color="#78AAE6"/><stop offset="1" stop-color="#98C8F4"/></linearGradient></defs><rect x="3.6" y="24.9" width="34.4" height="10" fill="url(#g14s)"/><path d="M3.6 34 Q10 33 17.9 30.8 Q28 29.5 38 29.7 V41 H3.6 Z" fill="#9A8C94"/><path d="M3.6 36 L20 35 L38 34 V41 H3.6 Z" fill="#A89080"/><path d="M3.6 40 Q14 37.5 22 38 Q30 38.5 38 41 V47 H3.6 Z" fill="#5E7E3A"/><rect x="13" y="39.2" width="10" height="2.8" fill="#EEEEEE" /><rect x="15" y="38" width="2" height="1.5" fill="#3A4A2A" /><rect x="19" y="38" width="2" height="1.5" fill="#3A4A2A" /><path d="M42.4 4.8 H47.3 M48.3 4.8 H50.9 M52.0 4.8 H54.8 M55.5 4.8 H59.0 M59.9 4.8 H65.4 M66.3 4.8 H71.8 M72.6 4.8 H78.0 M78.9 4.8 H84.0" stroke="#F2F2F2" stroke-width="0.8" stroke-dasharray="0.7 0.3 1.0 0.3" opacity="0.72"/><path d="M65.2 7.6 H67.4 M68.5 7.6 H71.3 M71.9 7.6 H73.7 M74.7 7.6 H76.3 M77.1 7.6 H82.5 M83.3 7.6 H84.8" stroke="#F2F2F2" stroke-width="0.8" stroke-dasharray="0.7 0.3 1.0 0.3" opacity="0.72"/><path d="M41.5 10.3 H43.4 M44.4 10.3 H49.9 M50.9 10.3 H55.3 M56.2 10.3 H61.5 M62.7 10.3 H66.4 M67.4 10.3 H70.1 M71.2 10.3 H74.9 M75.7 10.3 H78.3 M79.0 10.3 H84.8" stroke="#F2F2F2" stroke-width="0.8" stroke-dasharray="0.7 0.3 1.0 0.3" opacity="0.72"/><path d="M44.2 13.1 H46.4 M47.3 13.1 H51.9 M52.9 13.1 H56.3 M57.6 13.1 H59.8 M60.7 13.1 H63.6 M64.5 13.1 H67.9 M69.1 13.1 H71.7 M72.6 13.1 H76.1 M77.2 13.1 H80.9 M81.9 13.1 H84.8" stroke="#F2F2F2" stroke-width="0.8" stroke-dasharray="0.7 0.3 1.0 0.3" opacity="0.72"/><path d="M69.8 15.9 H75.6 M76.5 15.9 H79.5 M80.5 15.9 H84.8" stroke="#F2F2F2" stroke-width="0.8" stroke-dasharray="0.7 0.3 1.0 0.3" opacity="0.72"/><path d="M43.5 18.6 H45.9 M46.9 18.6 H50.5 M51.3 18.6 H54.6 M55.2 18.6 H58.1 M59.4 18.6 H63.5 M64.3 18.6 H70.0 M70.9 18.6 H73.5 M74.1 18.6 H76.3 M77.0 18.6 H79.6 M80.8 18.6 H83.5 M84.2 18.6 H84.8" stroke="#F2F2F2" stroke-width="0.8" stroke-dasharray="0.7 0.3 1.0 0.3" opacity="0.72"/><path d="M43.6 21.4 H48.5 M49.4 21.4 H53.4 M54.4 21.4 H60.1 M61.3 21.4 H65.1 M66.3 21.4 H69.4 M70.3 21.4 H76.1 M77.1 21.4 H82.1 M82.9 21.4 H84.8" stroke="#F2F2F2" stroke-width="0.8" stroke-dasharray="0.7 0.3 1.0 0.3" opacity="0.72"/><path d="M43.7 24.2 H49.4 M50.4 24.2 H53.4 M54.2 24.2 H56.1 M56.9 24.2 H61.5 M62.2 24.2 H64.9 M65.8 24.2 H69.7 M70.6 24.2 H75.6 M76.4 24.2 H79.6 M80.5 24.2 H82.5 M83.3 24.2 H84.8" stroke="#F2F2F2" stroke-width="0.8" stroke-dasharray="0.7 0.3 1.0 0.3" opacity="0.72"/><path d="M44.1 26.9 H48.6 M49.3 26.9 H53.8 M54.8 26.9 H57.9 M59.2 26.9 H63.6 M64.6 26.9 H66.3 M67.2 26.9 H69.9 M70.8 26.9 H76.5 M77.7 26.9 H79.5 M80.6 26.9 H84.8" stroke="#F2F2F2" stroke-width="0.8" stroke-dasharray="0.7 0.3 1.0 0.3" opacity="0.72"/><path d="M78.1 29.7 H81.5 M82.8 29.7 H84.8" stroke="#F2F2F2" stroke-width="0.8" stroke-dasharray="0.7 0.3 1.0 0.3" opacity="0.72"/><path d="M41.3 32.5 H43.1 M44.3 32.5 H47.2 M47.9 32.5 H51.1 M52.1 32.5 H53.6 M54.5 32.5 H59.6 M60.5 32.5 H64.4 M65.2 32.5 H71.1 M71.8 32.5 H76.4 M77.4 32.5 H79.0 M80.2 32.5 H82.8 M84.1 32.5 H84.8" stroke="#F2F2F2" stroke-width="0.8" stroke-dasharray="0.7 0.3 1.0 0.3" opacity="0.72"/><path d="M59.9 35.3 H63.1 M63.9 35.3 H68.7 M69.5 35.3 H72.1 M72.9 35.3 H77.0 M78.1 35.3 H81.0 M81.8 35.3 H84.8" stroke="#F2F2F2" stroke-width="0.8" stroke-dasharray="0.7 0.3 1.0 0.3" opacity="0.72"/><path d="M44.5 38.0 H48.9 M50.2 38.0 H53.2 M54.1 38.0 H58.3 M59.1 38.0 H64.0 M65.3 38.0 H71.2 M72.3 38.0 H75.5 M76.6 38.0 H79.2 M80.4 38.0 H84.8" stroke="#F2F2F2" stroke-width="0.8" stroke-dasharray="0.7 0.3 1.0 0.3" opacity="0.72"/><path d="M41.7 40.8 H44.1 M45.3 40.8 H47.1 M48.3 40.8 H51.8 M52.9 40.8 H54.6 M55.3 40.8 H60.5 M61.5 40.8 H64.3 M65.6 40.8 H69.1 M70.4 40.8 H72.2 M72.8 40.8 H77.6 M78.7 40.8 H82.2 M83.0 40.8 H84.8" stroke="#F2F2F2" stroke-width="0.8" stroke-dasharray="0.7 0.3 1.0 0.3" opacity="0.72"/><path d="M43.8 43.6 H48.4 M49.2 43.6 H53.1 M54.4 43.6 H56.1 M57.2 43.6 H60.7 M62.0 43.6 H67.2 M68.1 43.6 H71.0 M71.6 43.6 H73.4 M74.0 43.6 H76.9 M77.7 43.6 H80.5 M81.6 43.6 H84.8" stroke="#F2F2F2" stroke-width="0.8" stroke-dasharray="0.7 0.3 1.0 0.3" opacity="0.72"/><path d="M41.1 46.3 H43.5 M44.7 46.3 H50.7 M51.9 46.3 H54.4 M55.6 46.3 H60.9 M61.9 46.3 H67.2 M68.3 46.3 H70.6 M71.4 46.3 H76.8 M77.8 46.3 H80.8 M81.8 46.3 H84.8" stroke="#F2F2F2" stroke-width="0.8" stroke-dasharray="0.7 0.3 1.0 0.3" opacity="0.72"/><path d="M79.5 49.1 H81.7 M82.5 49.1 H84.8" stroke="#F2F2F2" stroke-width="0.8" stroke-dasharray="0.7 0.3 1.0 0.3" opacity="0.72"/><path d="M41.6 51.9 H44.1 M45.0 51.9 H49.2 M49.9 51.9 H54.9 M55.8 51.9 H60.7 M61.9 51.9 H63.7 M64.9 51.9 H70.1 M70.8 51.9 H75.0 M75.8 51.9 H79.7 M80.8 51.9 H84.0" stroke="#F2F2F2" stroke-width="0.8" stroke-dasharray="0.7 0.3 1.0 0.3" opacity="0.72"/><path d="M44.1 54.6 H49.5 M50.6 54.6 H55.8 M56.5 54.6 H61.3 M62.0 54.6 H66.0 M66.7 54.6 H72.3 M73.0 54.6 H76.6 M77.5 54.6 H80.8 M81.4 54.6 H84.8" stroke="#F2F2F2" stroke-width="0.8" stroke-dasharray="0.7 0.3 1.0 0.3" opacity="0.72"/><path d="M43.3 57.4 H48.9 M49.7 57.4 H52.4 M53.4 57.4 H59.2 M60.4 57.4 H64.7 M65.4 57.4 H68.9 M69.5 57.4 H71.3 M72.1 57.4 H74.7 M75.4 57.4 H79.2 M80.4 57.4 H84.8" stroke="#F2F2F2" stroke-width="0.8" stroke-dasharray="0.7 0.3 1.0 0.3" opacity="0.72"/><path d="M70.2 60.2 H75.1 M75.7 60.2 H80.0 M81.0 60.2 H83.3 M84.5 60.2 H84.8" stroke="#F2F2F2" stroke-width="0.8" stroke-dasharray="0.7 0.3 1.0 0.3" opacity="0.72"/><path d="M43.1 62.9 H48.0 M49.0 62.9 H53.9 M54.8 62.9 H59.5 M60.7 62.9 H63.2 M64.2 62.9 H68.7 M69.5 62.9 H73.3 M73.9 62.9 H76.1 M76.9 62.9 H78.9 M79.7 62.9 H82.1 M83.2 62.9 H84.8" stroke="#F2F2F2" stroke-width="0.8" stroke-dasharray="0.7 0.3 1.0 0.3" opacity="0.72"/></svg><svg style="left:113px;top:419px" width="14" height="14" viewBox="0 0 14 14"><path d="M6.5 0.9 L8 4.8 L12.2 4.8 L8.8 7.4 L10.1 11.6 L6.5 9 L2.9 11.6 L4.2 7.4 L0.8 4.8 L5 4.8 Z" fill="#6A6A6A"/><path d="M-0.1 2.8 L1.1 4.4 L-0.1 4.6 Z M-0.1 6.9 L2.3 7.3 L1 8.5 L-0.1 8.5 Z" fill="#7A7A7A"/></svg>
<div class="abs" style="left:169px;top:339px;width:92px;height:70px;border:1px solid #CFCFCF;background:#fff"></div>
<div class="abs" style="left:171px;top:341px;width:90px;height:68px;background:#000"></div>
<svg style="left:171px;top:341px" width="90" height="68" viewBox="0 0 90 68"><rect x="11.1" y="20" width="32" height="32.6" fill="#F7F7F7" /><path d="M28 24 L40 24 M26 32 L40 21 M14 36 L42 36 M20 46 L30 36 L38 46 M27 24 V50 M16 30 L30 36 M30 36 L22 50 M30 36 L34 50" stroke="#B8B8B8" stroke-width="0.45" fill="none"/><circle cx="30" cy="38" r="3" fill="none" stroke="#C8C8C8" stroke-width="0.4"/><path d="M65.8 21 H84" stroke="#F78B3D" stroke-width="1.3" stroke-dasharray="1.2 0.3 0.7 0.3 2 0.4" opacity="0.9"/></svg><svg style="left:249px;top:419px" width="14" height="14" viewBox="0 0 14 14"><path d="M6.5 0.9 L8 4.8 L12.2 4.8 L8.8 7.4 L10.1 11.6 L6.5 9 L2.9 11.6 L4.2 7.4 L0.8 4.8 L5 4.8 Z" fill="#6A6A6A"/><path d="M-0.1 2.8 L1.1 4.4 L-0.1 4.6 Z M-0.1 6.9 L2.3 7.3 L1 8.5 L-0.1 8.5 Z" fill="#7A7A7A"/></svg>
<div class="abs" style="left:305px;top:339px;width:92px;height:70px;border:1px solid #CFCFCF;background:#fff"></div>
<div class="abs" style="left:307px;top:341px;width:90px;height:68px;background:#000"></div>
<svg style="left:307px;top:341px" width="90" height="68" viewBox="0 0 90 68"><rect x="3" y="7" width="33.5" height="54.2" fill="#F6F4F2" /><rect x="3.335" y="7" width="2.345" height="4.878" fill="#F6EEB8" /><rect x="12.38" y="39.52" width="10.049999999999999" height="5.420000000000001" fill="#ECEAD2" /><rect x="23.77" y="49.276" width="4.02" height="4.878" fill="#EEEED8" /><rect x="9.03" y="48.192" width="4.02" height="4.336" fill="#B8A898" /><rect x="33.150000000000006" y="25.97" width="3.35" height="13.55" fill="#D8D0C8" /><path d="M32.48 7 L35.83 61.2" stroke="#F2C48E" stroke-width="1.68"/><path d="M3 39.52 L32.48 37.35" stroke="#F2C48E" stroke-width="1.68"/><path d="M3 9.71 L36.5 9.17" stroke="#F2C48E" stroke-width="1.51"/><path d="M23.099999999999998 17.840000000000003 L14.725 31.39 M13.049999999999999 51.444 L11.375 44.94" stroke="#A8B0C0" stroke-width="0.6"/><circle cx="23.10" cy="23.26" r="0.8" fill="#40A0E0"/><circle cx="15.39" cy="35.73" r="0.7" fill="#E060C0"/><rect x="32.144999999999996" y="7" width="4.355" height="4.336" fill="#3E6FB0" /><path d="M6 10 L30 10 L34 60 L10 58 L6 30 Z" fill="none" stroke="#E88A40" stroke-width="1"/><path d="M37.3 65.5 L57.7 25.4" stroke="#F78B3D" stroke-width="2.3" stroke-linecap="round"/><path d="M45.5 58.9 L72.5 6.3" stroke="#F78B3D" stroke-width="3.0" stroke-linecap="round"/><path d="M47.2 39.5 L57.4 18.4" stroke="#F78B3D" stroke-width="1.8" stroke-linecap="round"/><path d="M69.1 40.7 H79.6" stroke="#F78B3D" stroke-width="1.3" stroke-dasharray="1.2 0.3 0.7 0.3 2 0.4" opacity="0.9"/></svg><svg style="left:385px;top:419px" width="14" height="14" viewBox="0 0 14 14"><path d="M6.5 0.9 L8 4.8 L12.2 4.8 L8.8 7.4 L10.1 11.6 L6.5 9 L2.9 11.6 L4.2 7.4 L0.8 4.8 L5 4.8 Z" fill="#6A6A6A"/><path d="M-0.1 2.8 L1.1 4.4 L-0.1 4.6 Z M-0.1 6.9 L2.3 7.3 L1 8.5 L-0.1 8.5 Z" fill="#7A7A7A"/></svg>
<div class="abs" style="left:441px;top:339px;width:92px;height:70px;border:1px solid #CFCFCF;background:#fff"></div>
<div class="abs" style="left:443px;top:341px;width:90px;height:68px;background:#000"></div>
<svg style="left:443px;top:341px" width="90" height="68" viewBox="0 0 90 68"><path d="M14.0 10.0 H16.9 M17.7 10.0 H20.0 M21.1 10.0 H25.0 M25.8 10.0 H31.5 M32.2 10.0 H37.4 M38.3 10.0 H43.7 M44.8 10.0 H49.2 M50.3 10.0 H55.0 M55.7 10.0 H59.7 M60.4 10.0 H65.5 M66.2 10.0 H71.7 M72.7 10.0 H77.8 M78.8 10.0 H81.8 M82.5 10.0 H87.1" stroke="#F78B3D" stroke-width="0.8" stroke-dasharray="0.7 0.3 1.0 0.3" opacity="0.9"/><path d="M14.0 12.7 H17.8 M19.0 12.7 H23.4 M24.4 12.7 H29.0 M29.9 12.7 H33.6 M34.5 12.7 H37.9 M38.9 12.7 H44.5 M45.6 12.7 H47.3 M48.2 12.7 H52.3 M53.0 12.7 H56.3 M57.0 12.7 H59.4 M60.2 12.7 H66.0 M66.6 12.7 H68.4 M69.2 12.7 H74.1 M75.3 12.7 H79.2 M80.4 12.7 H83.0 M83.8 12.7 H86.9" stroke="#F2F2F2" stroke-width="0.8" stroke-dasharray="0.7 0.3 1.0 0.3" opacity="0.72"/><path d="M16.0 15.4 H20.0 M21.2 15.4 H24.2 M24.8 15.4 H30.8 M31.4 15.4 H36.3 M37.2 15.4 H38.9 M39.7 15.4 H42.3 M43.5 15.4 H48.2 M49.1 15.4 H53.4 M54.4 15.4 H56.5 M57.4 15.4 H63.2 M64.5 15.4 H69.7 M70.4 15.4 H76.4 M77.7 15.4 H82.2 M83.4 15.4 H85.2 M86.4 15.4 H87.1" stroke="#F2F2F2" stroke-width="0.8" stroke-dasharray="0.7 0.3 1.0 0.3" opacity="0.72"/><path d="M66.1 18.1 H67.8 M69.1 18.1 H71.0 M72.1 18.1 H77.4 M78.5 18.1 H81.8 M82.5 18.1 H84.3 M85.4 18.1 H87.1" stroke="#F2F2F2" stroke-width="0.8" stroke-dasharray="0.7 0.3 1.0 0.3" opacity="0.72"/><path d="M14.9 20.8 H17.1 M18.0 20.8 H22.7 M23.7 20.8 H26.9 M27.9 20.8 H31.9 M32.8 20.8 H36.3 M37.6 20.8 H42.5 M43.2 20.8 H46.2 M46.9 20.8 H50.0 M50.7 20.8 H55.5 M56.5 20.8 H59.9 M61.1 20.8 H64.1 M65.1 20.8 H70.8 M71.8 20.8 H76.1 M76.9 20.8 H82.9 M84.0 20.8 H86.9" stroke="#F2F2F2" stroke-width="0.8" stroke-dasharray="0.7 0.3 1.0 0.3" opacity="0.72"/><path d="M80 35.5 H87" stroke="#F78B3D" stroke-width="1" stroke-dasharray="1.2 0.3 0.7 0.3 2 0.4" opacity="0.9"/><path d="M16.0 37.8 H19.3 M20.6 37.8 H25.8 M26.8 37.8 H31.3 M32.2 37.8 H35.1 M35.8 37.8 H38.1 M39.2 37.8 H44.9 M45.6 37.8 H47.8 M48.7 37.8 H54.6 M55.4 37.8 H60.5 M61.3 37.8 H66.5 M67.5 37.8 H71.9 M72.5 37.8 H75.5 M76.4 37.8 H78.4 M79.5 37.8 H81.6 M82.3 37.8 H85.9 M86.9 37.8 H87.1" stroke="#F2F2F2" stroke-width="0.8" stroke-dasharray="0.7 0.3 1.0 0.3" opacity="0.72"/><path d="M14.0 40.5 H15.5 M16.3 40.5 H20.7 M21.9 40.5 H27.8 M29.0 40.5 H34.9 M35.6 40.5 H37.6 M38.7 40.5 H43.9 M45.1 40.5 H49.2 M50.0 40.5 H54.2 M55.5 40.5 H59.7 M60.7 40.5 H62.9 M63.7 40.5 H69.1 M70.3 40.5 H72.8 M74.0 40.5 H75.6 M76.7 40.5 H82.0 M83.0 40.5 H87.1" stroke="#F2F2F2" stroke-width="0.8" stroke-dasharray="0.7 0.3 1.0 0.3" opacity="0.72"/><path d="M12.5 43.2 H18.4 M19.2 43.2 H23.3 M23.9 43.2 H28.0 M28.6 43.2 H32.5 M33.3 43.2 H35.0 M35.9 43.2 H39.8 M40.5 43.2 H44.3 M45.1 43.2 H48.5 M49.4 43.2 H51.0 M51.6 43.2 H55.4 M56.5 43.2 H61.5 M62.4 43.2 H66.6 M67.6 43.2 H69.5 M70.7 43.2 H75.6 M76.4 43.2 H81.1 M82.2 43.2 H86.4" stroke="#F2F2F2" stroke-width="0.8" stroke-dasharray="0.7 0.3 1.0 0.3" opacity="0.72"/></svg><svg style="left:521px;top:419px" width="14" height="14" viewBox="0 0 14 14"><path d="M6.5 0.9 L8 4.8 L12.2 4.8 L8.8 7.4 L10.1 11.6 L6.5 9 L2.9 11.6 L4.2 7.4 L0.8 4.8 L5 4.8 Z" fill="#6A6A6A"/><path d="M-0.1 2.8 L1.1 4.4 L-0.1 4.6 Z M-0.1 6.9 L2.3 7.3 L1 8.5 L-0.1 8.5 Z" fill="#7A7A7A"/></svg>
<div class="abs" style="left:577px;top:339px;width:92px;height:70px;border:1px solid #CFCFCF;background:#fff"></div>
<div class="abs" style="left:579px;top:341px;width:90px;height:68px;background:#000"></div>
<svg style="left:579px;top:341px" width="90" height="68" viewBox="0 0 90 68"><rect x="12.9" y="3.3" width="38.3" height="62.7" fill="#F4F2F0" /><rect x="15" y="20" width="12" height="10" fill="#EAE6E0" /><rect x="21" y="40" width="18" height="6" fill="#ECEAD8" /><rect x="38" y="55" width="6" height="5" fill="#E8E8D8" /><rect x="17" y="53" width="4" height="4" fill="#A89888" /><path d="M12.9 38.5 L48 37" stroke="#F0C8A0" stroke-width="1.4"/><path d="M29.5 19.1 H45.7 M37.2 21 L41.3 32.4 M26.2 23.9 H33 M22.1 34.6 L36.5 32.4 M27.3 51.6 L42 49.8 L41.6 56.1" stroke="#8040C0" stroke-width="1.2" fill="none"/><path d="M44.2 8 L46.4 40.5" stroke="#F01818" stroke-width="1.2"/><path d="M46.4 40.5 L47.6 58.3" stroke="#C87038" stroke-width="1.1"/><path d="M14.7 8 H43.5" stroke="#F01818" stroke-width="1.3"/><path d="M10.5 10 Q11 0.5 17 1 Q21 1.5 21.5 9 M15 9.5 Q16 2.5 20.5 2.5 Q24 3 24 9" stroke="#F01010" stroke-width="1.6" fill="none"/><path d="M46 0.5 Q53 3 53 9 Q53 15 47 18.4 M46.5 4 Q50.5 6 50.5 10 Q50 14 46 15.5" stroke="#20A8E8" stroke-width="1.4" fill="none"/><circle cx="43.9" cy="7.3" r="2.2" fill="none" stroke="#D87830" stroke-width="1"/><path d="M12 60 Q31 67 51 60 L51 64.5 Q31 69 12 64.5 Z" fill="#F8E028"/><path d="M11.79 59.00 L14.10 59.00 M11.54 59.95 L13.54 61.10 M10.85 60.64 L12.00 62.64 M9.90 60.89 L9.90 63.20 M8.96 60.64 L7.80 62.64 M8.26 59.95 L6.26 61.10 M8.01 59.00 L5.70 59.00 M8.26 58.05 L6.26 56.90 M8.96 57.36 L7.80 55.36 M9.90 57.11 L9.90 54.80 M10.85 57.36 L12.00 55.36 M11.54 58.05 L13.54 56.90" stroke="#B8702A" stroke-width="0.8"/><circle cx="9.9" cy="59" r="2.1" fill="#F8E030" stroke="#B8702A" stroke-width="0.7"/><path d="M32.49 62.50 L34.80 62.50 M32.24 63.45 L34.24 64.60 M31.55 64.14 L32.70 66.14 M30.60 64.39 L30.60 66.70 M29.66 64.14 L28.50 66.14 M28.96 63.45 L26.96 64.60 M28.71 62.50 L26.40 62.50 M28.96 61.55 L26.96 60.40 M29.66 60.86 L28.50 58.86 M30.60 60.61 L30.60 58.30 M31.55 60.86 L32.70 58.86 M32.24 61.55 L34.24 60.40" stroke="#B8702A" stroke-width="0.8"/><circle cx="30.6" cy="62.5" r="2.1" fill="#F8E030" stroke="#B8702A" stroke-width="0.7"/><path d="M55.69 58.30 L58.00 58.30 M55.44 59.24 L57.44 60.40 M54.74 59.94 L55.90 61.94 M53.80 60.19 L53.80 62.50 M52.85 59.94 L51.70 61.94 M52.16 59.24 L50.16 60.40 M51.91 58.30 L49.60 58.30 M52.16 57.35 L50.16 56.20 M52.85 56.66 L51.70 54.66 M53.80 56.41 L53.80 54.10 M54.74 56.66 L55.90 54.66 M55.44 57.35 L57.44 56.20" stroke="#B8702A" stroke-width="0.8"/><circle cx="53.8" cy="58.3" r="2.1" fill="#F8E030" stroke="#B8702A" stroke-width="0.7"/><rect x="66" y="8.1" width="9.2" height="10.7" fill="none" stroke="#D87830" stroke-width="0.8"/><rect x="77.1" y="8.1" width="10" height="10.7" fill="none" stroke="#D87830" stroke-width="0.8"/><rect x="66" y="21" width="9.2" height="10.3" fill="none" stroke="#D87830" stroke-width="0.8"/><rect x="77.1" y="21" width="10" height="10.3" fill="none" stroke="#D87830" stroke-width="0.8"/><rect x="66" y="33.2" width="9.2" height="9.9" fill="none" stroke="#D87830" stroke-width="0.8"/><rect x="77.1" y="33.2" width="10" height="9.9" fill="none" stroke="#D87830" stroke-width="0.8"/><rect x="77.1" y="46.1" width="10" height="10" fill="none" stroke="#D87830" stroke-width="0.8"/><path d="M69 9.5 Q73 12.5 70 16.5" stroke="#20A8E8" stroke-width="1.1" fill="none"/><path d="M79.5 15 Q82 9.5 84.5 15" stroke="#F01010" stroke-width="1.1" fill="none"/><path d="M67 24 H74.5 M67 26 H74.5 M67 28 H74.5" stroke="#D87830" stroke-width="0.7"/><circle cx="82" cy="26" r="1.8" fill="none" stroke="#D87830" stroke-width="1"/><path d="M67 38 H74.5" stroke="#8040C0" stroke-width="1"/><circle cx="82" cy="37.5" r="1.6" fill="#F09040"/><path d="M79 51 H85" stroke="#F01010" stroke-width="1.2"/><path d="M76 58.5 H86" stroke="#F78B3D" stroke-width="0.7" stroke-dasharray="1.2 0.3 0.7 0.3 2 0.4" opacity="0.9"/></svg><svg style="left:657px;top:419px" width="14" height="14" viewBox="0 0 14 14"><path d="M6.5 0.9 L8 4.8 L12.2 4.8 L8.8 7.4 L10.1 11.6 L6.5 9 L2.9 11.6 L4.2 7.4 L0.8 4.8 L5 4.8 Z" fill="#6A6A6A"/><path d="M-0.1 2.8 L1.1 4.4 L-0.1 4.6 Z M-0.1 6.9 L2.3 7.3 L1 8.5 L-0.1 8.5 Z" fill="#7A7A7A"/></svg>
<div class="abs" style="left:713px;top:339px;width:92px;height:70px;border:1px solid #CFCFCF;background:#fff"></div>
<div class="abs" style="left:715px;top:341px;width:90px;height:68px;background:#000"></div>
<svg style="left:715px;top:341px" width="90" height="68" viewBox="0 0 90 68"><path d="M13.5 25.2 H31.7" stroke="#F78B3D" stroke-width="1.3" stroke-dasharray="1.2 0.3 0.7 0.3 2 0.4" opacity="0.9"/><path d="M37.3 65.5 L57.7 25.4" stroke="#F78B3D" stroke-width="2.3" stroke-linecap="round"/><path d="M45.5 58.9 L72.5 6.3" stroke="#F78B3D" stroke-width="3.0" stroke-linecap="round"/><path d="M47.2 39.5 L57.4 18.4" stroke="#F78B3D" stroke-width="1.8" stroke-linecap="round"/></svg><svg style="left:793px;top:419px" width="14" height="14" viewBox="0 0 14 14"><path d="M6.5 0.9 L8 4.8 L12.2 4.8 L8.8 7.4 L10.1 11.6 L6.5 9 L2.9 11.6 L4.2 7.4 L0.8 4.8 L5 4.8 Z" fill="#6A6A6A"/><path d="M-0.1 2.8 L1.1 4.4 L-0.1 4.6 Z M-0.1 6.9 L2.3 7.3 L1 8.5 L-0.1 8.5 Z" fill="#7A7A7A"/></svg>
<div class="abs" style="left:849px;top:339px;width:92px;height:70px;border:1px solid #CFCFCF;background:#fff"></div>
<div class="abs" style="left:851px;top:341px;width:90px;height:68px;background:#000"></div>
<svg style="left:851px;top:341px" width="90" height="68" viewBox="0 0 90 68"><rect x="8.3" y="15.6" width="37.7" height="38.8" fill="#8A8078" /><path d="M22 15.6 H46 V43 L41.8 41.5 L40 29 L33 25 L28 21 Z" fill="#E6EAEE"/><path d="M8.3 15.6 H24 Q27 22 26 30 L22 42 H8.3 Z" fill="#7A6E62"/><path d="M12 22 L20 30 M10 30 L24 26 M14 36 L22 28" stroke="#A89078" stroke-width="1"/><rect x="8.3" y="42" width="10" height="8" fill="#D4CCC2" /><rect x="10" y="44" width="1.5" height="4" fill="#8A3030" /><rect x="13" y="44" width="1.5" height="4" fill="#8A3030" /><rect x="26.5" y="17" width="1.6" height="37" fill="#2A2A2A" /><rect x="24.8" y="20" width="5.2" height="3" fill="#2A2A2A" /><rect x="27" y="32" width="10" height="4" fill="#7A3A30" /><rect x="27.5" y="32.5" width="1.5" height="1.5" fill="#D02020" /><rect x="8.3" y="51" width="37.7" height="3.4" fill="#C8C8C8" /><rect x="39" y="47" width="1.5" height="5" fill="#2A2A3A" /><rect x="42" y="47" width="1.5" height="5" fill="#2A2A3A" /><path d="M60.0 10.0 H64.9 M66.2 10.0 H68.8 M69.9 10.0 H75.4 M76.7 10.0 H80.7 M81.4 10.0 H84.8 M86.1 10.0 H86.1" stroke="#F78B3D" stroke-width="0.8" stroke-dasharray="0.7 0.3 1.0 0.3" opacity="0.9"/><path d="M59.4 12.7 H62.9 M63.7 12.7 H66.6 M67.8 12.7 H70.8 M71.7 12.7 H76.1 M77.2 12.7 H80.9 M81.6 12.7 H85.7" stroke="#F2F2F2" stroke-width="0.8" stroke-dasharray="0.7 0.3 1.0 0.3" opacity="0.72"/><path d="M61.2 15.4 H63.6 M64.7 15.4 H67.5 M68.5 15.4 H70.8 M71.5 15.4 H73.1 M74.2 15.4 H79.5 M80.3 15.4 H82.8 M83.5 15.4 H86.1" stroke="#F2F2F2" stroke-width="0.8" stroke-dasharray="0.7 0.3 1.0 0.3" opacity="0.72"/><path d="M81.4 18.1 H85.6" stroke="#F2F2F2" stroke-width="0.8" stroke-dasharray="0.7 0.3 1.0 0.3" opacity="0.72"/><path d="M61.1 20.8 H65.5 M66.5 20.8 H69.9 M70.6 20.8 H76.3 M77.5 20.8 H82.1 M83.4 20.8 H86.1" stroke="#F2F2F2" stroke-width="0.8" stroke-dasharray="0.7 0.3 1.0 0.3" opacity="0.72"/></svg><svg style="left:929px;top:419px" width="14" height="14" viewBox="0 0 14 14"><path d="M6.5 0.9 L8 4.8 L12.2 4.8 L8.8 7.4 L10.1 11.6 L6.5 9 L2.9 11.6 L4.2 7.4 L0.8 4.8 L5 4.8 Z" fill="#6A6A6A"/><path d="M-0.1 2.8 L1.1 4.4 L-0.1 4.6 Z M-0.1 6.9 L2.3 7.3 L1 8.5 L-0.1 8.5 Z" fill="#7A7A7A"/></svg>
<div class="abs" style="left:985px;top:339px;width:92px;height:70px;border:1px solid #CFCFCF;background:#fff"></div>
<div class="abs" style="left:987px;top:341px;width:90px;height:68px;background:#000"></div>
<svg style="left:987px;top:341px" width="90" height="68" viewBox="0 0 90 68"><defs><linearGradient id="p21a1" x1="0" y1="0" x2="0" y2="1"><stop offset="0" stop-color="#A8C4E8"/><stop offset="0.25" stop-color="#C8B070"/><stop offset="0.5" stop-color="#A89050"/><stop offset="0.55" stop-color="#8A8A8A"/><stop offset="1" stop-color="#7A7A7A"/></linearGradient></defs><rect x="57.7" y="7" width="10" height="14" fill="url(#p21a1)"/><rect x="65" y="18" width="2.5" height="3" fill="#5A4030" /><rect x="71.7" y="1.06" width="17.4" height="19.94" fill="#9A9A9A" /><rect x="71.7" y="1.06" width="17.4" height="9" fill="#7FAAE0" /><rect x="71.7" y="1.06" width="6" height="14" fill="#D8C8A8" /><rect x="72.5" y="3" width="4" height="2" fill="#B8A080" /><rect x="84" y="4" width="5" height="11" fill="#C0B0A0" /><rect x="78" y="9" width="6" height="5" fill="#C8C8C8" /><rect x="71.7" y="14" width="17.4" height="2" fill="#6A6A70" /><rect x="76" y="15" width="2" height="2" fill="#D86A30" /><rect x="45.2" y="22.8" width="11" height="15.2" fill="#3A2A28" /><defs><linearGradient id="p21c1" x1="0" y1="0" x2="0" y2="1"><stop offset="0" stop-color="#C8D0E8"/><stop offset="0.5" stop-color="#6A80C0"/><stop offset="1" stop-color="#8A90A0"/></linearGradient></defs><rect x="46.5" y="25.5" width="9.5" height="6.5" fill="url(#p21c1)"/><rect x="46.5" y="32" width="9.5" height="5" fill="#2A2A30" /><rect x="60" y="26.9" width="29.1" height="39.8" fill="#9A9A9A" /><rect x="60" y="26.9" width="29.1" height="10" fill="#6A9ADE" /><rect x="60" y="26.9" width="5" height="18" fill="#D8C0A0" /><rect x="64" y="34" width="22" height="7" fill="#D8D8D8" /><rect x="80" y="32" width="9" height="16" fill="#8A8478" /><rect x="60" y="41" width="29" height="4" fill="#A09080" /><ellipse cx="75" cy="36.5" rx="4" ry="2.5" fill="none" stroke="#E8782A" stroke-width="0.8"/><rect x="64" y="34.5" width="4" height="2" fill="#E8782A" /><rect x="86" y="36" width="3" height="4" fill="#2A8A4A" /><rect x="86" y="40" width="3" height="3" fill="#C02828" /><defs><linearGradient id="p21d1" x1="0" y1="0" x2="0" y2="1"><stop offset="0" stop-color="#8A8A8A"/><stop offset="0.5" stop-color="#A0A0A0"/><stop offset="1" stop-color="#929292"/></linearGradient></defs><rect x="60" y="45" width="29.1" height="21.7" fill="url(#p21d1)"/><rect x="38.2" y="42.4" width="17.3" height="24.3" fill="#9A9A9A" /><rect x="38.2" y="42.4" width="10" height="8" fill="#EEF2F6" /><rect x="48" y="42.4" width="7.5" height="14" fill="#D0C0A8" /><rect x="38.2" y="48" width="10" height="5" fill="#C8C0C0" /><rect x="38.2" y="52" width="17.3" height="4" fill="#7A7070" /><rect x="40" y="53" width="2" height="3" fill="#3A4A8A" /><path d="M10.6 6.1 H14.0 M14.8 6.1 H20.1 M21.3 6.1 H25.0 M26.3 6.1 H28.6 M29.5 6.1 H30.6" stroke="#F78B3D" stroke-width="0.8" stroke-dasharray="0.7 0.3 1.0 0.3" opacity="0.9"/><path d="M17.7 8.8 H19.5 M20.7 8.8 H23.2 M24.0 8.8 H25.7 M27.0 8.8 H30.6" stroke="#F2F2F2" stroke-width="0.8" stroke-dasharray="0.7 0.3 1.0 0.3" opacity="0.72"/><path d="M10.2 11.5 H11.9 M12.7 11.5 H16.5 M17.1 11.5 H22.9 M23.8 11.5 H26.0 M27.2 11.5 H29.2 M30.5 11.5 H30.6" stroke="#F2F2F2" stroke-width="0.8" stroke-dasharray="0.7 0.3 1.0 0.3" opacity="0.72"/><path d="M10.7 14.2 H14.4 M15.1 14.2 H16.8 M18.0 14.2 H20.5 M21.7 14.2 H24.1 M25.4 14.2 H30.6" stroke="#F2F2F2" stroke-width="0.8" stroke-dasharray="0.7 0.3 1.0 0.3" opacity="0.72"/><path d="M10.0 16.9 H14.1 M15.2 16.9 H17.3 M18.2 16.9 H23.4 M24.2 16.9 H29.8" stroke="#F2F2F2" stroke-width="0.8" stroke-dasharray="0.7 0.3 1.0 0.3" opacity="0.72"/><path d="M10.6 19.7 H13.7 M14.7 19.7 H17.9 M19.2 19.7 H22.4 M23.0 19.7 H25.0 M26.1 19.7 H30.6" stroke="#F2F2F2" stroke-width="0.8" stroke-dasharray="0.7 0.3 1.0 0.3" opacity="0.72"/><path d="M22.8 22.4 H26.9 M27.7 22.4 H30.6" stroke="#F2F2F2" stroke-width="0.8" stroke-dasharray="0.7 0.3 1.0 0.3" opacity="0.72"/><path d="M10.2 25.1 H14.5 M15.7 25.1 H18.7 M19.8 25.1 H25.5 M26.2 25.1 H28.5 M29.7 25.1 H30.6" stroke="#F2F2F2" stroke-width="0.8" stroke-dasharray="0.7 0.3 1.0 0.3" opacity="0.72"/><path d="M11.0 27.8 H12.7 M13.6 27.8 H18.1 M18.9 27.8 H24.5 M25.2 27.8 H30.1" stroke="#F2F2F2" stroke-width="0.8" stroke-dasharray="0.7 0.3 1.0 0.3" opacity="0.72"/><path d="M24.5 30.5 H29.0 M30.3 30.5 H30.6" stroke="#F2F2F2" stroke-width="0.8" stroke-dasharray="0.7 0.3 1.0 0.3" opacity="0.72"/></svg><svg style="left:1065px;top:419px" width="14" height="14" viewBox="0 0 14 14"><path d="M6.5 0.9 L8 4.8 L12.2 4.8 L8.8 7.4 L10.1 11.6 L6.5 9 L2.9 11.6 L4.2 7.4 L0.8 4.8 L5 4.8 Z" fill="#6A6A6A"/><path d="M-0.1 2.8 L1.1 4.4 L-0.1 4.6 Z M-0.1 6.9 L2.3 7.3 L1 8.5 L-0.1 8.5 Z" fill="#7A7A7A"/></svg>
<div class="abs" style="left:1121px;top:339px;width:92px;height:70px;border:1px solid #CFCFCF;background:#fff"></div>
<div class="abs" style="left:1123px;top:341px;width:90px;height:68px;background:#000"></div>
<svg style="left:1123px;top:341px" width="90" height="68" viewBox="0 0 90 68"><defs><linearGradient id="p21a2" x1="0" y1="0" x2="0" y2="1"><stop offset="0" stop-color="#A8C4E8"/><stop offset="0.25" stop-color="#C8B070"/><stop offset="0.5" stop-color="#A89050"/><stop offset="0.55" stop-color="#8A8A8A"/><stop offset="1" stop-color="#7A7A7A"/></linearGradient></defs><rect x="57.7" y="7" width="10" height="14" fill="url(#p21a2)"/><rect x="65" y="18" width="2.5" height="3" fill="#5A4030" /><rect x="71.7" y="1.06" width="17.4" height="19.94" fill="#9A9A9A" /><rect x="71.7" y="1.06" width="17.4" height="9" fill="#7FAAE0" /><rect x="71.7" y="1.06" width="6" height="14" fill="#D8C8A8" /><rect x="72.5" y="3" width="4" height="2" fill="#B8A080" /><rect x="84" y="4" width="5" height="11" fill="#C0B0A0" /><rect x="78" y="9" width="6" height="5" fill="#C8C8C8" /><rect x="71.7" y="14" width="17.4" height="2" fill="#6A6A70" /><rect x="76" y="15" width="2" height="2" fill="#D86A30" /><rect x="45.2" y="22.8" width="11" height="15.2" fill="#3A2A28" /><defs><linearGradient id="p21c2" x1="0" y1="0" x2="0" y2="1"><stop offset="0" stop-color="#C8D0E8"/><stop offset="0.5" stop-color="#6A80C0"/><stop offset="1" stop-color="#8A90A0"/></linearGradient></defs><rect x="46.5" y="25.5" width="9.5" height="6.5" fill="url(#p21c2)"/><rect x="46.5" y="32" width="9.5" height="5" fill="#2A2A30" /><rect x="60" y="26.9" width="29.1" height="39.8" fill="#9A9A9A" /><rect x="60" y="26.9" width="29.1" height="10" fill="#6A9ADE" /><rect x="60" y="26.9" width="5" height="18" fill="#D8C0A0" /><rect x="64" y="34" width="22" height="7" fill="#D8D8D8" /><rect x="80" y="32" width="9" height="16" fill="#8A8478" /><rect x="60" y="41" width="29" height="4" fill="#A09080" /><rect x="86" y="36" width="3" height="4" fill="#2A8A4A" /><rect x="86" y="40" width="3" height="3" fill="#C02828" /><defs><linearGradient id="p21d2" x1="0" y1="0" x2="0" y2="1"><stop offset="0" stop-color="#8A8A8A"/><stop offset="0.5" stop-color="#A0A0A0"/><stop offset="1" stop-color="#929292"/></linearGradient></defs><rect x="60" y="45" width="29.1" height="21.7" fill="url(#p21d2)"/><rect x="38.2" y="42.4" width="17.3" height="24.3" fill="#9A9A9A" /><rect x="38.2" y="42.4" width="10" height="8" fill="#EEF2F6" /><rect x="48" y="42.4" width="7.5" height="14" fill="#D0C0A8" /><rect x="38.2" y="48" width="10" height="5" fill="#C8C0C0" /><rect x="38.2" y="52" width="17.3" height="4" fill="#7A7070" /><rect x="40" y="53" width="2" height="3" fill="#3A4A8A" /><path d="M14.5 7.1 H18.8 M19.7 7.1 H24.4 M25.5 7.1 H30.8" stroke="#F78B3D" stroke-width="0.8" stroke-dasharray="0.7 0.3 1.0 0.3" opacity="0.9"/><path d="M28.3 9.8 H30.8" stroke="#F2F2F2" stroke-width="0.8" stroke-dasharray="0.7 0.3 1.0 0.3" opacity="0.72"/><path d="M14.1 12.5 H19.7 M20.8 12.5 H26.5 M27.6 12.5 H29.3 M30.5 12.5 H30.8" stroke="#F2F2F2" stroke-width="0.8" stroke-dasharray="0.7 0.3 1.0 0.3" opacity="0.72"/><path d="M14.6 15.2 H19.9 M21.0 15.2 H26.7 M27.8 15.2 H30.8" stroke="#F2F2F2" stroke-width="0.8" stroke-dasharray="0.7 0.3 1.0 0.3" opacity="0.72"/><path d="M13.9 17.9 H18.2 M19.0 17.9 H24.8 M25.6 17.9 H30.6" stroke="#F2F2F2" stroke-width="0.8" stroke-dasharray="0.7 0.3 1.0 0.3" opacity="0.72"/><path d="M22.9 20.7 H25.6 M26.4 20.7 H30.8" stroke="#F2F2F2" stroke-width="0.8" stroke-dasharray="0.7 0.3 1.0 0.3" opacity="0.72"/><path d="M14.4 23.4 H20.0 M20.9 23.4 H23.5 M24.3 23.4 H29.8 M30.6 23.4 H30.8" stroke="#F2F2F2" stroke-width="0.8" stroke-dasharray="0.7 0.3 1.0 0.3" opacity="0.72"/><path d="M14.1 26.1 H17.4 M18.0 26.1 H22.1 M23.1 26.1 H27.0 M28.1 26.1 H30.8" stroke="#F2F2F2" stroke-width="0.8" stroke-dasharray="0.7 0.3 1.0 0.3" opacity="0.72"/><path d="M28.2 28.8 H30.8" stroke="#F2F2F2" stroke-width="0.8" stroke-dasharray="0.7 0.3 1.0 0.3" opacity="0.72"/><path d="M14.3 31.5 H20.0 M21.3 31.5 H25.1 M26.0 31.5 H27.9 M29.1 31.5 H30.8" stroke="#F2F2F2" stroke-width="0.8" stroke-dasharray="0.7 0.3 1.0 0.3" opacity="0.72"/><path d="M14.4 34.2 H17.4 M18.2 34.2 H20.6 M21.2 34.2 H25.1 M26.3 34.2 H30.7" stroke="#F2F2F2" stroke-width="0.8" stroke-dasharray="0.7 0.3 1.0 0.3" opacity="0.72"/><path d="M13.9 36.9 H15.7 M16.5 36.9 H21.8 M23.0 36.9 H26.6 M27.8 36.9 H30.8" stroke="#F2F2F2" stroke-width="0.8" stroke-dasharray="0.7 0.3 1.0 0.3" opacity="0.72"/><path d="M64 3 L71 3 M64 12 L57 12 M48 29 L44 29 M62 47 L52 47 M63 27 L63 35" stroke="#F08030" stroke-width="1"/></svg><svg style="left:1201px;top:419px" width="14" height="14" viewBox="0 0 14 14"><path d="M6.5 0.9 L8 4.8 L12.2 4.8 L8.8 7.4 L10.1 11.6 L6.5 9 L2.9 11.6 L4.2 7.4 L0.8 4.8 L5 4.8 Z" fill="#6A6A6A"/><path d="M-0.1 2.8 L1.1 4.4 L-0.1 4.6 Z M-0.1 6.9 L2.3 7.3 L1 8.5 L-0.1 8.5 Z" fill="#7A7A7A"/></svg>
<div class="abs" style="left:1257px;top:339px;width:92px;height:70px;border:1px solid #CFCFCF;background:#fff"></div>
<div class="abs" style="left:1259px;top:341px;width:90px;height:68px;background:#000"></div>
<svg style="left:1259px;top:341px" width="90" height="68" viewBox="0 0 90 68"><defs><linearGradient id="p21a3" x1="0" y1="0" x2="0" y2="1"><stop offset="0" stop-color="#A8C4E8"/><stop offset="0.25" stop-color="#C8B070"/><stop offset="0.5" stop-color="#A89050"/><stop offset="0.55" stop-color="#8A8A8A"/><stop offset="1" stop-color="#7A7A7A"/></linearGradient></defs><rect x="57.7" y="7" width="10" height="14" fill="url(#p21a3)"/><rect x="65" y="18" width="2.5" height="3" fill="#5A4030" /><rect x="71.7" y="1.06" width="17.4" height="19.94" fill="#9A9A9A" /><rect x="71.7" y="1.06" width="17.4" height="9" fill="#7FAAE0" /><rect x="71.7" y="1.06" width="6" height="14" fill="#D8C8A8" /><rect x="72.5" y="3" width="4" height="2" fill="#B8A080" /><rect x="84" y="4" width="5" height="11" fill="#C0B0A0" /><rect x="78" y="9" width="6" height="5" fill="#C8C8C8" /><rect x="71.7" y="14" width="17.4" height="2" fill="#6A6A70" /><rect x="76" y="15" width="2" height="2" fill="#D86A30" /><rect x="45.2" y="22.8" width="11" height="15.2" fill="#3A2A28" /><defs><linearGradient id="p21c3" x1="0" y1="0" x2="0" y2="1"><stop offset="0" stop-color="#C8D0E8"/><stop offset="0.5" stop-color="#6A80C0"/><stop offset="1" stop-color="#8A90A0"/></linearGradient></defs><rect x="46.5" y="25.5" width="9.5" height="6.5" fill="url(#p21c3)"/><rect x="46.5" y="32" width="9.5" height="5" fill="#2A2A30" /><rect x="60" y="26.9" width="29.1" height="39.8" fill="#9A9A9A" /><rect x="60" y="26.9" width="29.1" height="10" fill="#6A9ADE" /><rect x="60" y="26.9" width="5" height="18" fill="#D8C0A0" /><rect x="64" y="34" width="22" height="7" fill="#D8D8D8" /><rect x="80" y="32" width="9" height="16" fill="#8A8478" /><rect x="60" y="41" width="29" height="4" fill="#A09080" /><rect x="86" y="36" width="3" height="4" fill="#2A8A4A" /><rect x="86" y="40" width="3" height="3" fill="#C02828" /><defs><linearGradient id="p21d3" x1="0" y1="0" x2="0" y2="1"><stop offset="0" stop-color="#8A8A8A"/><stop offset="0.5" stop-color="#A0A0A0"/><stop offset="1" stop-color="#929292"/></linearGradient></defs><rect x="60" y="45" width="29.1" height="21.7" fill="url(#p21d3)"/><rect x="38.2" y="42.4" width="17.3" height="24.3" fill="#9A9A9A" /><rect x="38.2" y="42.4" width="10" height="8" fill="#EEF2F6" /><rect x="48" y="42.4" width="7.5" height="14" fill="#D0C0A8" /><rect x="38.2" y="48" width="10" height="5" fill="#C8C0C0" /><rect x="38.2" y="52" width="17.3" height="4" fill="#7A7070" /><rect x="40" y="53" width="2" height="3" fill="#3A4A8A" /><path d="M12.4 5.5 H14.2 M15.2 5.5 H18.7" stroke="#F2F2F2" stroke-width="0.8" stroke-dasharray="0.7 0.3 1.0 0.3" opacity="0.72"/><path d="M12.8 8.2 H15.1 M16.0 8.2 H18.5" stroke="#F2F2F2" stroke-width="0.8" stroke-dasharray="0.7 0.3 1.0 0.3" opacity="0.72"/><path d="M18.2 10.9 H19.0" stroke="#F2F2F2" stroke-width="0.8" stroke-dasharray="0.7 0.3 1.0 0.3" opacity="0.72"/><path d="M12.8 13.6 H17.2 M18.1 13.6 H19.0" stroke="#F2F2F2" stroke-width="0.8" stroke-dasharray="0.7 0.3 1.0 0.3" opacity="0.72"/><path d="M20 4.5 H21.3 V16 H20 M21.3 10 H24" stroke="#E87A30" stroke-width="0.8" fill="none"/><path d="M24 10 H33.6" stroke="#F78B3D" stroke-width="1" stroke-dasharray="1.2 0.3 0.7 0.3 2 0.4" opacity="0.9"/><path d="M5.7 28.2 H10.9 M12.1 28.2 H18.1 M19.2 28.2 H24.8 M25.6 28.2 H30.6" stroke="#F2F2F2" stroke-width="0.8" stroke-dasharray="0.7 0.3 1.0 0.3" opacity="0.72"/><path d="M24.5 30.9 H29.5 M30.6 30.9 H31.5" stroke="#F2F2F2" stroke-width="0.8" stroke-dasharray="0.7 0.3 1.0 0.3" opacity="0.72"/><path d="M6.1 33.6 H9.5 M10.5 33.6 H12.1 M12.8 33.6 H17.8 M18.5 33.6 H24.5 M25.1 33.6 H29.6 M30.6 33.6 H31.5" stroke="#F2F2F2" stroke-width="0.8" stroke-dasharray="0.7 0.3 1.0 0.3" opacity="0.72"/><path d="M6.3 36.3 H8.0 M9.1 36.3 H15.0 M16.2 36.3 H18.2 M18.9 36.3 H23.3 M24.4 36.3 H26.2 M27.1 36.3 H31.5" stroke="#F2F2F2" stroke-width="0.8" stroke-dasharray="0.7 0.3 1.0 0.3" opacity="0.72"/><path d="M6.1 39.0 H9.2 M10.3 39.0 H14.1 M15.1 39.0 H18.1 M19.2 39.0 H23.9 M25.1 39.0 H27.4 M28.4 39.0 H31.0" stroke="#F2F2F2" stroke-width="0.8" stroke-dasharray="0.7 0.3 1.0 0.3" opacity="0.72"/><path d="M6.6 41.8 H11.8 M12.5 41.8 H16.8 M17.6 41.8 H21.4 M22.6 41.8 H26.0 M26.8 41.8 H28.4 M29.2 41.8 H31.5" stroke="#F2F2F2" stroke-width="0.8" stroke-dasharray="0.7 0.3 1.0 0.3" opacity="0.72"/><path d="M28.0 44.5 H31.5" stroke="#F2F2F2" stroke-width="0.8" stroke-dasharray="0.7 0.3 1.0 0.3" opacity="0.72"/><path d="M6.3 47.2 H9.7 M10.5 47.2 H14.5 M15.5 47.2 H21.4 M22.5 47.2 H28.5 M29.5 47.2 H31.5" stroke="#F2F2F2" stroke-width="0.8" stroke-dasharray="0.7 0.3 1.0 0.3" opacity="0.72"/><path d="M7.4 49.9 H13.2 M14.2 49.9 H16.8 M18.0 49.9 H24.0 M25.0 49.9 H30.7" stroke="#F2F2F2" stroke-width="0.8" stroke-dasharray="0.7 0.3 1.0 0.3" opacity="0.72"/><path d="M21.0 52.6 H24.3 M25.1 52.6 H27.7 M28.4 52.6 H31.5" stroke="#F2F2F2" stroke-width="0.8" stroke-dasharray="0.7 0.3 1.0 0.3" opacity="0.72"/></svg><svg style="left:1337px;top:419px" width="14" height="14" viewBox="0 0 14 14"><path d="M6.5 0.9 L8 4.8 L12.2 4.8 L8.8 7.4 L10.1 11.6 L6.5 9 L2.9 11.6 L4.2 7.4 L0.8 4.8 L5 4.8 Z" fill="#6A6A6A"/><path d="M-0.1 2.8 L1.1 4.4 L-0.1 4.6 Z M-0.1 6.9 L2.3 7.3 L1 8.5 L-0.1 8.5 Z" fill="#7A7A7A"/></svg>
<div class="abs" style="left:1393px;top:339px;width:92px;height:70px;border:1px solid #CFCFCF;background:#fff"></div>
<div class="abs" style="left:1395px;top:341px;width:90px;height:68px;background:#000"></div>
<svg style="left:1395px;top:341px" width="90" height="68" viewBox="0 0 90 68"><defs><linearGradient id="p21a4" x1="0" y1="0" x2="0" y2="1"><stop offset="0" stop-color="#A8C4E8"/><stop offset="0.25" stop-color="#C8B070"/><stop offset="0.5" stop-color="#A89050"/><stop offset="0.55" stop-color="#8A8A8A"/><stop offset="1" stop-color="#7A7A7A"/></linearGradient></defs><rect x="57.7" y="7" width="10" height="14" fill="url(#p21a4)"/><rect x="65" y="18" width="2.5" height="3" fill="#5A4030" /><rect x="71.7" y="1.06" width="17.4" height="19.94" fill="#9A9A9A" /><rect x="71.7" y="1.06" width="17.4" height="9" fill="#7FAAE0" /><rect x="71.7" y="1.06" width="6" height="14" fill="#D8C8A8" /><rect x="72.5" y="3" width="4" height="2" fill="#B8A080" /><rect x="84" y="4" width="5" height="11" fill="#C0B0A0" /><rect x="78" y="9" width="6" height="5" fill="#C8C8C8" /><rect x="71.7" y="14" width="17.4" height="2" fill="#6A6A70" /><rect x="76" y="15" width="2" height="2" fill="#D86A30" /><rect x="45.2" y="22.8" width="11" height="15.2" fill="#3A2A28" /><defs><linearGradient id="p21c4" x1="0" y1="0" x2="0" y2="1"><stop offset="0" stop-color="#C8D0E8"/><stop offset="0.5" stop-color="#6A80C0"/><stop offset="1" stop-color="#8A90A0"/></linearGradient></defs><rect x="46.5" y="25.5" width="9.5" height="6.5" fill="url(#p21c4)"/><rect x="46.5" y="32" width="9.5" height="5" fill="#2A2A30" /><rect x="60" y="26.9" width="29.1" height="39.8" fill="#9A9A9A" /><rect x="60" y="26.9" width="29.1" height="10" fill="#6A9ADE" /><rect x="60" y="26.9" width="5" height="18" fill="#D8C0A0" /><rect x="64" y="34" width="22" height="7" fill="#D8D8D8" /><rect x="80" y="32" width="9" height="16" fill="#8A8478" /><rect x="60" y="41" width="29" height="4" fill="#A09080" /><rect x="86" y="36" width="3" height="4" fill="#2A8A4A" /><rect x="86" y="40" width="3" height="3" fill="#C02828" /><defs><linearGradient id="p21d4" x1="0" y1="0" x2="0" y2="1"><stop offset="0" stop-color="#8A8A8A"/><stop offset="0.5" stop-color="#A0A0A0"/><stop offset="1" stop-color="#929292"/></linearGradient></defs><rect x="60" y="45" width="29.1" height="21.7" fill="url(#p21d4)"/><rect x="38.2" y="42.4" width="17.3" height="24.3" fill="#9A9A9A" /><rect x="38.2" y="42.4" width="10" height="8" fill="#EEF2F6" /><rect x="48" y="42.4" width="7.5" height="14" fill="#D0C0A8" /><rect x="38.2" y="48" width="10" height="5" fill="#C8C0C0" /><rect x="38.2" y="52" width="17.3" height="4" fill="#7A7070" /><rect x="40" y="53" width="2" height="3" fill="#3A4A8A" /><path d="M26 19 H38" stroke="#F78B3D" stroke-width="1" stroke-dasharray="1.2 0.3 0.7 0.3 2 0.4" opacity="0.9"/><path d="M5.5 25.3 H9.6 M10.4 25.3 H12.6 M13.3 25.3 H17.9 M19.0 25.3 H25.0 M26.2 25.3 H28.9 M30.2 25.3 H31.7 M32.7 25.3 H37.4" stroke="#F2F2F2" stroke-width="0.8" stroke-dasharray="0.7 0.3 1.0 0.3" opacity="0.72"/><path d="M6.5 28.0 H8.7 M9.7 28.0 H15.0 M16.1 28.0 H19.8 M21.1 28.0 H25.7 M26.5 28.0 H30.7 M31.8 28.0 H37.6" stroke="#F2F2F2" stroke-width="0.8" stroke-dasharray="0.7 0.3 1.0 0.3" opacity="0.72"/><path d="M4.8 30.7 H9.2 M9.9 30.7 H12.3 M13.2 30.7 H18.0 M18.8 30.7 H21.4 M22.4 30.7 H24.6 M25.8 30.7 H29.5 M30.3 30.7 H34.4 M35.2 30.7 H37.5" stroke="#F2F2F2" stroke-width="0.8" stroke-dasharray="0.7 0.3 1.0 0.3" opacity="0.72"/><path d="M19.9 33.4 H22.9 M23.6 33.4 H27.8 M29.0 33.4 H32.6 M33.4 33.4 H37.2 M38.0 33.4 H38.2" stroke="#F2F2F2" stroke-width="0.8" stroke-dasharray="0.7 0.3 1.0 0.3" opacity="0.72"/><path d="M6.2 36.1 H9.1 M10.1 36.1 H12.6 M13.3 36.1 H16.2 M16.9 36.1 H20.0 M20.8 36.1 H25.8 M26.9 36.1 H32.2 M33.0 36.1 H38.2" stroke="#F2F2F2" stroke-width="0.8" stroke-dasharray="0.7 0.3 1.0 0.3" opacity="0.72"/></svg><svg style="left:1473px;top:419px" width="14" height="14" viewBox="0 0 14 14"><path d="M6.5 0.9 L8 4.8 L12.2 4.8 L8.8 7.4 L10.1 11.6 L6.5 9 L2.9 11.6 L4.2 7.4 L0.8 4.8 L5 4.8 Z" fill="#6A6A6A"/><path d="M-0.1 2.8 L1.1 4.4 L-0.1 4.6 Z M-0.1 6.9 L2.3 7.3 L1 8.5 L-0.1 8.5 Z" fill="#7A7A7A"/></svg>
<div class="abs" style="left:1529px;top:339px;width:92px;height:70px;border:1px solid #CFCFCF;background:#fff"></div>
<div class="abs" style="left:1531px;top:341px;width:90px;height:68px;background:#000"></div>
<svg style="left:1531px;top:341px" width="90" height="68" viewBox="0 0 90 68"><defs><linearGradient id="p25a" x1="0" y1="0" x2="0" y2="1"><stop offset="0" stop-color="#E8E8E8"/><stop offset="0.5" stop-color="#C8BCA8"/><stop offset="1" stop-color="#9A9A9A"/></linearGradient></defs><rect x="57.5" y="6.6" width="10.1" height="14.4" fill="url(#p25a)"/><rect x="71.6" y="0.8" width="17.6" height="20.2" fill="#8E8E8E" /><rect x="71.6" y="0.8" width="17.6" height="14.139999999999999" fill="#B8A88C" /><rect x="71.6" y="0.8" width="17.6" height="5.05" fill="#8DB0DC" /><rect x="71.6" y="3.325" width="3.168" height="11.614999999999998" fill="#D8CDB8" /><rect x="86.032" y="4.335" width="3.168" height="10.605" fill="#9A8A78" /><rect x="71.6" y="14.94" width="17.6" height="1.6159999999999999" fill="#6E6A66" /><defs><linearGradient id="p25c" x1="0" y1="0" x2="0" y2="1"><stop offset="0" stop-color="#E8E0D0"/><stop offset="0.5" stop-color="#C8B8A8"/><stop offset="1" stop-color="#B0A090"/></linearGradient></defs><rect x="45.5" y="22.9" width="10.1" height="14.7" fill="url(#p25c)"/><rect x="47.5" y="25" width="4" height="10" fill="#8A5060" /><defs><linearGradient id="p25d" x1="0" y1="0" x2="0" y2="1"><stop offset="0" stop-color="#E8E8E8"/><stop offset="0.3" stop-color="#C8B898"/><stop offset="0.5" stop-color="#A8A098"/><stop offset="0.6" stop-color="#9A9898"/><stop offset="1" stop-color="#8A8A8A"/></linearGradient></defs><rect x="59.2" y="26.7" width="30" height="40.3" fill="url(#p25d)"/><rect x="80" y="28" width="9" height="15" fill="#D8C0A0" /><defs><linearGradient id="p25e" x1="0" y1="0" x2="0" y2="1"><stop offset="0" stop-color="#3A6030"/><stop offset="0.2" stop-color="#A03038"/><stop offset="0.4" stop-color="#3A8A40"/><stop offset="0.6" stop-color="#E0E0D0"/><stop offset="0.8" stop-color="#5A6A50"/><stop offset="1" stop-color="#2A2A2A"/></linearGradient></defs><rect x="37.8" y="42" width="17.8" height="25" fill="url(#p25e)"/><path d="M19.7 14.8 H35.6" stroke="#F78B3D" stroke-width="1" stroke-dasharray="1.2 0.3 0.7 0.3 2 0.4" opacity="0.9"/><path d="M7.3 21.5 H12.5 M13.2 21.5 H18.8 M19.7 21.5 H23.3 M24.5 21.5 H29.4 M30.0 21.5 H34.1 M34.7 21.5 H36.4" stroke="#F2F2F2" stroke-width="0.8" stroke-dasharray="0.7 0.3 1.0 0.3" opacity="0.72"/><path d="M7.3 24.2 H9.7 M11.0 24.2 H16.8 M17.6 24.2 H23.2 M24.2 24.2 H28.0 M29.0 24.2 H34.5 M35.6 24.2 H36.4" stroke="#F2F2F2" stroke-width="0.8" stroke-dasharray="0.7 0.3 1.0 0.3" opacity="0.72"/><path d="M27.6 26.9 H30.0 M30.7 26.9 H34.2 M34.9 26.9 H36.4" stroke="#F2F2F2" stroke-width="0.8" stroke-dasharray="0.7 0.3 1.0 0.3" opacity="0.72"/><path d="M8.8 29.6 H14.2 M14.8 29.6 H17.1 M18.3 29.6 H20.8 M21.7 29.6 H25.7 M26.6 29.6 H30.3 M31.3 29.6 H34.9 M35.6 29.6 H36.4" stroke="#F2F2F2" stroke-width="0.8" stroke-dasharray="0.7 0.3 1.0 0.3" opacity="0.72"/><path d="M9.0 32.3 H12.3 M13.5 32.3 H17.8 M18.7 32.3 H22.4 M23.1 32.3 H27.4 M28.3 32.3 H30.0 M30.7 32.3 H32.6 M33.7 32.3 H36.4" stroke="#F2F2F2" stroke-width="0.8" stroke-dasharray="0.7 0.3 1.0 0.3" opacity="0.72"/><path d="M8.6 35.1 H10.7 M12.0 35.1 H15.2 M15.9 35.1 H20.0 M21.0 35.1 H24.9 M25.8 35.1 H28.7 M29.6 35.1 H33.2 M34.3 35.1 H36.4" stroke="#F2F2F2" stroke-width="0.8" stroke-dasharray="0.7 0.3 1.0 0.3" opacity="0.72"/></svg><svg style="left:1609px;top:419px" width="14" height="14" viewBox="0 0 14 14"><path d="M6.5 0.9 L8 4.8 L12.2 4.8 L8.8 7.4 L10.1 11.6 L6.5 9 L2.9 11.6 L4.2 7.4 L0.8 4.8 L5 4.8 Z" fill="#6A6A6A"/><path d="M-0.1 2.8 L1.1 4.4 L-0.1 4.6 Z M-0.1 6.9 L2.3 7.3 L1 8.5 L-0.1 8.5 Z" fill="#7A7A7A"/></svg>
<div class="abs" style="left:1665px;top:339px;width:92px;height:70px;border:1px solid #CFCFCF;background:#fff"></div>
<div class="abs" style="left:1667px;top:341px;width:90px;height:68px;background:#000"></div>
<svg style="left:1667px;top:341px" width="90" height="68" viewBox="0 0 90 68"><path d="M8.1 25 H33.9" stroke="#F78B3D" stroke-width="1.3" stroke-dasharray="1.2 0.3 0.7 0.3 2 0.4" opacity="0.9"/><path d="M37.3 65.5 L57.7 25.4" stroke="#F78B3D" stroke-width="2.3" stroke-linecap="round"/><path d="M45.5 58.9 L72.5 6.3" stroke="#F78B3D" stroke-width="3.0" stroke-linecap="round"/><path d="M47.2 39.5 L57.4 18.4" stroke="#F78B3D" stroke-width="1.8" stroke-linecap="round"/></svg><svg style="left:1745px;top:419px" width="14" height="14" viewBox="0 0 14 14"><path d="M6.5 0.9 L8 4.8 L12.2 4.8 L8.8 7.4 L10.1 11.6 L6.5 9 L2.9 11.6 L4.2 7.4 L0.8 4.8 L5 4.8 Z" fill="#6A6A6A"/><path d="M-0.1 2.8 L1.1 4.4 L-0.1 4.6 Z M-0.1 6.9 L2.3 7.3 L1 8.5 L-0.1 8.5 Z" fill="#7A7A7A"/></svg>
<div class="abs" style="left:33px;top:472px;width:92px;height:70px;border:1px solid #CFCFCF;background:#fff"></div>
<div class="abs" style="left:35px;top:474px;width:90px;height:68px;background:#000"></div>
<svg style="left:35px;top:474px" width="90" height="68" viewBox="0 0 90 68"><path d="M80.6 6.6 H85.2" stroke="#F78B3D" stroke-width="1" stroke-dasharray="1.2 0.3 0.7 0.3 2 0.4" opacity="0.9"/><path d="M44.8 9.5 H47.5 M48.3 9.5 H50.1 M50.9 9.5 H54.8 M55.6 9.5 H60.9 M61.8 9.5 H64.4 M65.1 9.5 H70.3 M71.4 9.5 H75.8 M76.9 9.5 H81.1 M82.0 9.5 H85.2" stroke="#F2F2F2" stroke-width="0.8" stroke-dasharray="0.7 0.3 1.0 0.3" opacity="0.72"/><path d="M44.9 12.3 H48.0 M49.2 12.3 H54.3 M55.3 12.3 H57.4 M58.6 12.3 H62.9 M63.6 12.3 H68.8 M69.5 12.3 H75.4 M76.5 12.3 H82.1 M83.3 12.3 H85.0" stroke="#F2F2F2" stroke-width="0.8" stroke-dasharray="0.7 0.3 1.0 0.3" opacity="0.72"/><path d="M46.1 18.0 H49.7 M50.4 18.0 H54.3 M54.9 18.0 H60.8 M61.9 18.0 H65.4 M66.1 18.0 H71.6 M72.6 18.0 H74.4 M75.7 18.0 H81.1 M82.1 18.0 H83.6 M84.3 18.0 H85.2" stroke="#F2F2F2" stroke-width="0.8" stroke-dasharray="0.7 0.3 1.0 0.3" opacity="0.72"/><path d="M60.6 20.8 H64.4 M65.1 20.8 H70.1 M71.0 20.8 H72.9 M73.8 20.8 H75.5 M76.4 20.8 H78.4 M79.2 20.8 H83.2 M84.2 20.8 H85.2" stroke="#F2F2F2" stroke-width="0.8" stroke-dasharray="0.7 0.3 1.0 0.3" opacity="0.72"/><path d="M44.6 23.6 H48.8 M50.0 23.6 H52.5 M53.6 23.6 H57.6 M58.9 23.6 H63.4 M64.0 23.6 H65.8 M67.0 23.6 H69.8 M70.8 23.6 H72.8 M73.7 23.6 H77.1 M78.0 23.6 H79.5 M80.8 23.6 H85.2" stroke="#F2F2F2" stroke-width="0.8" stroke-dasharray="0.7 0.3 1.0 0.3" opacity="0.72"/><path d="M66.6 26.4 H69.8 M71.1 26.4 H75.9 M77.1 26.4 H82.3 M83.0 26.4 H85.2" stroke="#F2F2F2" stroke-width="0.8" stroke-dasharray="0.7 0.3 1.0 0.3" opacity="0.72"/><path d="M46.2 29.3 H48.0 M48.8 29.3 H54.6 M55.6 29.3 H59.2 M60.0 29.3 H63.1 M63.9 29.3 H68.4 M69.1 29.3 H73.0 M73.8 29.3 H79.7 M80.9 29.3 H85.2" stroke="#F2F2F2" stroke-width="0.8" stroke-dasharray="0.7 0.3 1.0 0.3" opacity="0.72"/><path d="M43.6 32.1 H48.4 M49.2 32.1 H53.3 M53.9 32.1 H56.4 M57.4 32.1 H61.6 M62.7 32.1 H65.3 M66.1 32.1 H67.8 M68.5 32.1 H74.0 M74.9 32.1 H77.3 M78.4 32.1 H83.2 M84.5 32.1 H85.2" stroke="#F2F2F2" stroke-width="0.8" stroke-dasharray="0.7 0.3 1.0 0.3" opacity="0.72"/><path d="M79.8 34.9 H84.0 M84.8 34.9 H85.2" stroke="#F2F2F2" stroke-width="0.8" stroke-dasharray="0.7 0.3 1.0 0.3" opacity="0.72"/></svg><svg style="left:113px;top:552px" width="14" height="14" viewBox="0 0 14 14"><path d="M6.5 0.9 L8 4.8 L12.2 4.8 L8.8 7.4 L10.1 11.6 L6.5 9 L2.9 11.6 L4.2 7.4 L0.8 4.8 L5 4.8 Z" fill="#6A6A6A"/><path d="M-0.1 2.8 L1.1 4.4 L-0.1 4.6 Z M-0.1 6.9 L2.3 7.3 L1 8.5 L-0.1 8.5 Z" fill="#7A7A7A"/></svg>
<div class="abs" style="left:169px;top:472px;width:92px;height:70px;border:1px solid #CFCFCF;background:#fff"></div>
<div class="abs" style="left:171px;top:474px;width:90px;height:68px;background:#000"></div>
<svg style="left:171px;top:474px" width="90" height="68" viewBox="0 0 90 68"><clipPath id="c28"><path d="M0 0 H26.9 L36.9 13.2 Q40.5 19.5 37 25.5 Q34.5 28.5 29.5 26.5 L40.5 41.3 Q42.5 48.5 37 55.3 Q33 55 29.5 50.9 L28.7 55.3 Q27.5 61 22.1 62.7 L23 68 H5.1 L0 60.5 Z"/></clipPath><g clip-path="url(#c28)"><defs><linearGradient id="g28" x1="0" y1="0" x2="0" y2="1"><stop offset="0" stop-color="#6A5A4E"/><stop offset="0.3" stop-color="#8A7666"/><stop offset="0.42" stop-color="#A8B8C0"/><stop offset="0.52" stop-color="#B0A898"/><stop offset="0.6" stop-color="#607A48"/><stop offset="0.72" stop-color="#C8C8C8"/><stop offset="0.85" stop-color="#8A9098"/><stop offset="1" stop-color="#606060"/></linearGradient></defs><rect x="0" y="0" width="42" height="68" fill="url(#g28)"/><rect x="8" y="8" width="12" height="6" fill="#6E8A98" /><rect x="12" y="14" width="2" height="12" fill="#DDD" /><rect x="17" y="14" width="2" height="12" fill="#DDD" /><rect x="18" y="2" width="16" height="14" fill="#5A6A40" /><rect x="0" y="0" width="3" height="50" fill="#5A4A40" /><rect x="6" y="37" width="12" height="6" fill="#7A8A4A" /><rect x="26" y="40" width="10" height="5" fill="#5E7A3A" /><rect x="8" y="44" width="10" height="4" fill="#E8E8E8" /><path d="M22 60 Q30 58 31 50 L26 47 Q20 54 14 56 Z" fill="#58B8D8"/><path d="M33 52 Q40 50 41 45 L38 42 Q34 46 30 48 Z" fill="#3E88B0"/><path d="M3.6 17 L22.1 63.4" stroke="#222" stroke-width="0.6"/></g><path d="M55.3 15.7 H59.2 M60.3 15.7 H62.8 M63.9 15.7 H68.8 M69.6 15.7 H71.7 M72.4 15.7 H78.2 M79.3 15.7 H81.7 M82.6 15.7 H84.4 M85.3 15.7 H87.2" stroke="#F78B3D" stroke-width="0.8" stroke-dasharray="0.7 0.3 1.0 0.3" opacity="0.9"/><path d="M69.1 18.5 H74.7 M75.7 18.5 H80.3 M81.3 18.5 H84.1 M84.8 18.5 H87.2" stroke="#F2F2F2" stroke-width="0.8" stroke-dasharray="0.7 0.3 1.0 0.3" opacity="0.72"/><path d="M57.2 21.2 H62.1 M63.2 21.2 H65.9 M66.8 21.2 H72.4 M73.2 21.2 H75.3 M76.2 21.2 H78.4 M79.3 21.2 H80.9 M82.1 21.2 H87.2" stroke="#F2F2F2" stroke-width="0.8" stroke-dasharray="0.7 0.3 1.0 0.3" opacity="0.72"/><path d="M56.2 24.0 H58.9 M60.1 24.0 H65.6 M66.7 24.0 H69.0 M69.7 24.0 H74.6 M75.4 24.0 H80.0 M80.9 24.0 H82.5 M83.2 24.0 H87.2" stroke="#F2F2F2" stroke-width="0.8" stroke-dasharray="0.7 0.3 1.0 0.3" opacity="0.72"/><path d="M71.8 26.8 H73.8 M75.0 26.8 H77.2 M78.1 26.8 H80.5 M81.7 26.8 H85.8 M86.5 26.8 H87.2" stroke="#F2F2F2" stroke-width="0.8" stroke-dasharray="0.7 0.3 1.0 0.3" opacity="0.72"/><path d="M54.8 29.5 H58.4 M59.2 29.5 H60.8 M61.7 29.5 H66.3 M67.1 29.5 H69.2 M70.4 29.5 H74.3 M75.5 29.5 H79.9 M80.8 29.5 H85.4 M86.0 29.5 H87.2" stroke="#F2F2F2" stroke-width="0.8" stroke-dasharray="0.7 0.3 1.0 0.3" opacity="0.72"/><path d="M55.6 32.3 H57.6 M58.7 32.3 H64.1 M65.1 32.3 H68.6 M69.3 32.3 H74.3 M75.0 32.3 H78.8 M79.5 32.3 H83.3 M84.5 32.3 H87.2" stroke="#F2F2F2" stroke-width="0.8" stroke-dasharray="0.7 0.3 1.0 0.3" opacity="0.72"/><path d="M55.1 35.1 H58.4 M59.5 35.1 H64.8 M65.5 35.1 H68.1 M69.0 35.1 H73.1 M74.4 35.1 H77.6 M78.2 35.1 H81.2 M82.5 35.1 H84.4 M85.6 35.1 H87.2" stroke="#F2F2F2" stroke-width="0.8" stroke-dasharray="0.7 0.3 1.0 0.3" opacity="0.72"/><path d="M54.7 37.8 H56.8 M57.9 37.8 H61.2 M62.5 37.8 H64.6 M65.5 37.8 H71.4 M72.1 37.8 H76.6 M77.4 37.8 H81.4 M82.7 37.8 H86.3 M87.1 37.8 H87.2" stroke="#F2F2F2" stroke-width="0.8" stroke-dasharray="0.7 0.3 1.0 0.3" opacity="0.72"/><path d="M83.3 40.6 H87.0" stroke="#F2F2F2" stroke-width="0.8" stroke-dasharray="0.7 0.3 1.0 0.3" opacity="0.72"/><path d="M56.2 43.4 H58.6 M59.2 43.4 H64.3 M65.5 43.4 H68.6 M69.6 43.4 H75.0 M75.6 43.4 H81.6 M82.3 43.4 H85.5 M86.1 43.4 H87.2" stroke="#F2F2F2" stroke-width="0.8" stroke-dasharray="0.7 0.3 1.0 0.3" opacity="0.72"/><path d="M56.5 46.2 H60.1 M61.1 46.2 H64.9 M66.0 46.2 H71.7 M72.5 46.2 H75.6 M76.6 46.2 H79.0 M79.7 46.2 H84.9 M85.8 46.2 H87.2" stroke="#F2F2F2" stroke-width="0.8" stroke-dasharray="0.7 0.3 1.0 0.3" opacity="0.72"/><path d="M56.5 48.9 H59.7 M60.4 48.9 H63.8 M64.6 48.9 H68.6 M69.8 48.9 H74.8 M75.9 48.9 H80.0 M81.2 48.9 H83.5 M84.7 48.9 H87.0" stroke="#F2F2F2" stroke-width="0.8" stroke-dasharray="0.7 0.3 1.0 0.3" opacity="0.72"/><path d="M75.1 51.7 H81.0 M81.6 51.7 H84.5 M85.2 51.7 H87.2" stroke="#F2F2F2" stroke-width="0.8" stroke-dasharray="0.7 0.3 1.0 0.3" opacity="0.72"/><path d="M55.5 54.5 H60.8 M61.5 54.5 H64.9 M65.6 54.5 H67.4 M68.1 54.5 H69.9 M71.1 54.5 H73.9 M75.0 54.5 H80.0 M80.7 54.5 H84.3 M85.3 54.5 H87.2" stroke="#F2F2F2" stroke-width="0.8" stroke-dasharray="0.7 0.3 1.0 0.3" opacity="0.72"/></svg><svg style="left:249px;top:552px" width="14" height="14" viewBox="0 0 14 14"><path d="M6.5 0.9 L8 4.8 L12.2 4.8 L8.8 7.4 L10.1 11.6 L6.5 9 L2.9 11.6 L4.2 7.4 L0.8 4.8 L5 4.8 Z" fill="#6A6A6A"/><path d="M-0.1 2.8 L1.1 4.4 L-0.1 4.6 Z M-0.1 6.9 L2.3 7.3 L1 8.5 L-0.1 8.5 Z" fill="#7A7A7A"/></svg>
<div class="abs" style="left:305px;top:472px;width:92px;height:70px;border:1px solid #CFCFCF;background:#fff"></div>
<div class="abs" style="left:307px;top:474px;width:90px;height:68px;background:#000"></div>
<svg style="left:307px;top:474px" width="90" height="68" viewBox="0 0 90 68"><path d="M7.4 4.2 H11.6 M12.7 4.2 H14.6 M15.8 4.2 H19.1 M19.7 4.2 H21.3 M22.5 4.2 H27.0 M28.1 4.2 H30.0 M31.0 4.2 H36.6 M37.6 4.2 H42.8 M43.6 4.2 H49.5 M50.2 4.2 H55.2 M56.3 4.2 H60.9 M61.9 4.2 H65.8 M66.7 4.2 H69.5 M70.6 4.2 H75.8 M77.0 4.2 H80.7 M81.4 4.2 H84.2 M85.0 4.2 H88.2" stroke="#F78B3D" stroke-width="0.8" stroke-dasharray="0.7 0.3 1.0 0.3" opacity="0.9"/><path d="M2.2 6.7 H7.6 M8.8 6.7 H13.6 M14.8 6.7 H20.2 M20.9 6.7 H25.5 M26.7 6.7 H30.7 M31.4 6.7 H35.7 M36.6 6.7 H39.4 M40.4 6.7 H42.6 M43.7 6.7 H49.0 M50.3 6.7 H54.7 M55.8 6.7 H60.3 M61.4 6.7 H63.0 M64.1 6.7 H67.4 M68.3 6.7 H72.2 M73.1 6.7 H76.0 M76.6 6.7 H82.0 M82.6 6.7 H84.3 M85.3 6.7 H87.4" stroke="#F2F2F2" stroke-width="0.8" stroke-dasharray="0.7 0.3 1.0 0.3" opacity="0.8"/><path d="M4.4 11.8 H6.1 M6.8 11.8 H11.7 M12.4 11.8 H17.1 M18.0 11.8 H19.8 M20.9 11.8 H23.5 M24.2 11.8 H26.5 M27.7 11.8 H33.0 M34.0 11.8 H37.2 M38.0 11.8 H40.4 M41.6 11.8 H45.5 M46.7 11.8 H49.3 M50.4 11.8 H51.9 M52.6 11.8 H57.3 M58.1 11.8 H60.6 M61.5 11.8 H67.4 M68.6 11.8 H72.0 M73.0 11.8 H75.2 M76.1 11.8 H78.1 M78.7 11.8 H82.1 M83.2 11.8 H84.9 M85.7 11.8 H87.8" stroke="#F2F2F2" stroke-width="0.8" stroke-dasharray="0.7 0.3 1.0 0.3" opacity="0.8"/><path d="M49.7 14.4 H54.1 M55.4 14.4 H58.4 M59.6 14.4 H65.2 M66.1 14.4 H68.6 M69.4 14.4 H75.0 M75.8 14.4 H80.2 M81.2 14.4 H83.5 M84.1 14.4 H88.2" stroke="#F2F2F2" stroke-width="0.8" stroke-dasharray="0.7 0.3 1.0 0.3" opacity="0.8"/><path d="M4.1 16.9 H10.0 M10.9 16.9 H13.8 M14.5 16.9 H17.4 M18.2 16.9 H20.2 M21.3 16.9 H25.5 M26.6 16.9 H28.6 M29.4 16.9 H35.1 M35.7 16.9 H38.8 M40.0 16.9 H42.5 M43.3 16.9 H47.7 M48.4 16.9 H51.4 M52.3 16.9 H55.2 M56.2 16.9 H61.0 M62.2 16.9 H68.1 M68.7 16.9 H71.4 M72.7 16.9 H77.8 M78.9 16.9 H81.4 M82.1 16.9 H84.8 M86.0 16.9 H88.2" stroke="#F2F2F2" stroke-width="0.8" stroke-dasharray="0.7 0.3 1.0 0.3" opacity="0.8"/><path d="M3.4 19.5 H8.2 M9.0 19.5 H11.0 M12.1 19.5 H16.8 M18.0 19.5 H22.8 M23.7 19.5 H28.1 M29.0 19.5 H34.6 M35.2 19.5 H39.9 M40.7 19.5 H46.3 M47.5 19.5 H49.8 M50.4 19.5 H52.9 M54.2 19.5 H59.2 M60.2 19.5 H62.7 M63.4 19.5 H66.9 M67.9 19.5 H72.2 M72.8 19.5 H78.1 M78.9 19.5 H83.6 M84.4 19.5 H87.3" stroke="#F2F2F2" stroke-width="0.8" stroke-dasharray="0.7 0.3 1.0 0.3" opacity="0.8"/><path d="M6.5 22.0 H10.2 M11.4 22.0 H16.7 M17.8 22.0 H20.4 M21.4 22.0 H25.0 M25.8 22.0 H30.8 M31.9 22.0 H37.4 M38.3 22.0 H40.5 M41.3 22.0 H46.1 M47.2 22.0 H51.6 M52.4 22.0 H56.5 M57.2 22.0 H59.1 M60.3 22.0 H62.3 M63.3 22.0 H66.1 M66.9 22.0 H71.9 M73.1 22.0 H76.0 M76.8 22.0 H80.3 M81.0 22.0 H86.8 M87.4 22.0 H88.2" stroke="#F2F2F2" stroke-width="0.8" stroke-dasharray="0.7 0.3 1.0 0.3" opacity="0.8"/><path d="M8.0 24.5 H13.9 M15.0 24.5 H19.7 M20.8 24.5 H25.9 M26.9 24.5 H31.4 M32.2 24.5 H34.2 M35.3 24.5 H40.1 M41.2 24.5 H45.6 M46.3 24.5 H50.7 M51.4 24.5 H56.8 M57.4 24.5 H60.1 M61.0 24.5 H66.4 M67.5 24.5 H69.6 M70.7 24.5 H73.1 M74.0 24.5 H77.1 M78.3 24.5 H80.7 M81.5 24.5 H84.3 M85.1 24.5 H87.5" stroke="#F2F2F2" stroke-width="0.8" stroke-dasharray="0.7 0.3 1.0 0.3" opacity="0.8"/><path d="M70.9 27.1 H74.7 M75.4 27.1 H80.3 M80.9 27.1 H85.9 M86.8 27.1 H88.2" stroke="#F2F2F2" stroke-width="0.8" stroke-dasharray="0.7 0.3 1.0 0.3" opacity="0.8"/><path d="M1.7 29.6 H6.2 M7.0 29.6 H12.9 M13.5 29.6 H17.6 M18.6 29.6 H20.2 M21.5 29.6 H25.3 M26.4 29.6 H30.2 M31.3 29.6 H33.2 M34.3 29.6 H37.3 M38.5 29.6 H40.2 M41.1 29.6 H45.4 M46.0 29.6 H51.2 M52.3 29.6 H54.7 M55.7 29.6 H61.4 M62.1 29.6 H63.9 M64.9 29.6 H67.0 M68.2 29.6 H70.8 M71.9 29.6 H74.9 M76.1 29.6 H79.1 M79.8 29.6 H81.7 M82.5 29.6 H87.7" stroke="#F2F2F2" stroke-width="0.8" stroke-dasharray="0.7 0.3 1.0 0.3" opacity="0.8"/><path d="M6.2 32.2 H8.4 M9.1 32.2 H10.7 M11.5 32.2 H14.7 M15.7 32.2 H20.2 M21.5 32.2 H27.3 M28.5 32.2 H31.2 M32.2 32.2 H37.2 M37.8 32.2 H42.4 M43.3 32.2 H45.0 M46.1 32.2 H48.6 M49.3 32.2 H54.5 M55.6 32.2 H57.8 M58.9 32.2 H64.5 M65.1 32.2 H68.5 M69.4 32.2 H74.7 M75.8 32.2 H79.6 M80.7 32.2 H82.9 M83.6 32.2 H87.0 M87.9 32.2 H88.2" stroke="#F2F2F2" stroke-width="0.8" stroke-dasharray="0.7 0.3 1.0 0.3" opacity="0.8"/><path d="M3.5 34.7 H7.2 M8.2 34.7 H11.0 M12.2 34.7 H15.7 M16.7 34.7 H18.4 M19.1 34.7 H24.0 M24.7 34.7 H30.0 M30.9 34.7 H34.5 M35.7 34.7 H40.8 M41.9 34.7 H43.5 M44.2 34.7 H47.3 M48.0 34.7 H53.2 M54.0 34.7 H55.6 M56.4 34.7 H59.3 M60.2 34.7 H65.9 M67.1 34.7 H71.0 M71.8 34.7 H74.9 M75.8 34.7 H80.6 M81.4 34.7 H87.4 M88.1 34.7 H88.2" stroke="#F2F2F2" stroke-width="0.8" stroke-dasharray="0.7 0.3 1.0 0.3" opacity="0.8"/><path d="M38.7 37.3 H43.2 M43.8 37.3 H49.5 M50.2 37.3 H53.3 M54.0 37.3 H56.6 M57.8 37.3 H62.3 M63.4 37.3 H66.3 M67.5 37.3 H69.3 M69.9 37.3 H73.6 M74.3 37.3 H78.2 M79.0 37.3 H84.5 M85.2 37.3 H87.8" stroke="#F2F2F2" stroke-width="0.8" stroke-dasharray="0.7 0.3 1.0 0.3" opacity="0.8"/><path d="M5.8 39.8 H11.7 M12.7 39.8 H16.9 M18.0 39.8 H20.9 M21.5 39.8 H24.8 M25.9 39.8 H30.6 M31.3 39.8 H34.4 M35.7 39.8 H40.8 M42.0 39.8 H45.1 M46.2 39.8 H51.0 M52.2 39.8 H57.2 M58.2 39.8 H61.4 M62.5 39.8 H66.4 M67.6 39.8 H69.1 M69.9 39.8 H75.0 M76.2 39.8 H81.2 M82.2 39.8 H84.7 M85.5 39.8 H88.2" stroke="#F2F2F2" stroke-width="0.8" stroke-dasharray="0.7 0.3 1.0 0.3" opacity="0.8"/><path d="M5.3 42.3 H7.1 M8.3 42.3 H13.9 M15.1 42.3 H20.8 M21.4 42.3 H23.1 M24.1 42.3 H29.1 M30.0 42.3 H35.3 M36.2 42.3 H41.9 M43.2 42.3 H46.4 M47.2 42.3 H53.1 M54.1 42.3 H58.2 M59.0 42.3 H60.8 M61.8 42.3 H65.8 M66.8 42.3 H69.8 M70.8 42.3 H73.8 M74.5 42.3 H79.5 M80.2 42.3 H82.9 M83.7 42.3 H88.2" stroke="#F2F2F2" stroke-width="0.8" stroke-dasharray="0.7 0.3 1.0 0.3" opacity="0.8"/><path d="M74.5 44.9 H78.7 M79.9 44.9 H84.8 M85.4 44.9 H87.6" stroke="#F2F2F2" stroke-width="0.8" stroke-dasharray="0.7 0.3 1.0 0.3" opacity="0.8"/><path d="M7.0 47.4 H10.5 M11.3 47.4 H14.1 M15.0 47.4 H17.3 M18.2 47.4 H22.2 M23.5 47.4 H27.3 M28.3 47.4 H31.3 M32.1 47.4 H37.9 M38.6 47.4 H42.0 M43.3 47.4 H46.3 M47.0 47.4 H49.0 M49.8 47.4 H52.7 M53.4 47.4 H57.0 M57.6 47.4 H63.1 M63.8 47.4 H69.7 M70.8 47.4 H74.6 M75.3 47.4 H80.1 M81.2 47.4 H82.8 M84.1 47.4 H88.2" stroke="#F2F2F2" stroke-width="0.8" stroke-dasharray="0.7 0.3 1.0 0.3" opacity="0.8"/><path d="M3.2 50.0 H6.0 M6.6 50.0 H12.1 M13.1 50.0 H15.1 M15.9 50.0 H19.5 M20.3 50.0 H24.4 M25.5 50.0 H30.3 M31.1 50.0 H32.9 M34.2 50.0 H39.2 M40.5 50.0 H43.7 M44.6 50.0 H48.2 M48.9 50.0 H51.2 M52.1 50.0 H56.3 M57.0 50.0 H60.3 M61.2 50.0 H66.4 M67.4 50.0 H70.5 M71.3 50.0 H74.1 M75.0 50.0 H79.5 M80.3 50.0 H85.0 M86.3 50.0 H88.2" stroke="#F2F2F2" stroke-width="0.8" stroke-dasharray="0.7 0.3 1.0 0.3" opacity="0.8"/><path d="M7.0 55.0 H9.1 M10.1 55.0 H13.6 M14.3 55.0 H19.6 M20.6 55.0 H23.3 M24.6 55.0 H26.5 M27.2 55.0 H33.0 M34.1 55.0 H37.2 M37.9 55.0 H40.4 M41.3 55.0 H43.8 M44.5 55.0 H47.1 M48.0 55.0 H52.9 M54.0 55.0 H57.1 M58.0 55.0 H61.0 M61.8 55.0 H65.2 M65.9 55.0 H71.4 M72.5 55.0 H74.2 M75.0 55.0 H80.3 M81.2 55.0 H86.6 M87.4 55.0 H88.2" stroke="#F2F2F2" stroke-width="0.8" stroke-dasharray="0.7 0.3 1.0 0.3" opacity="0.8"/><path d="M4.7 57.6 H7.3 M8.5 57.6 H12.7 M13.6 57.6 H17.6 M18.6 57.6 H22.0 M22.9 57.6 H26.7 M27.3 57.6 H32.8 M33.6 57.6 H39.4 M40.2 57.6 H44.7 M45.7 57.6 H49.9 M50.9 57.6 H55.3 M56.1 57.6 H58.6 M59.4 57.6 H61.3 M62.6 57.6 H66.6 M67.9 57.6 H71.4 M72.6 57.6 H77.7 M78.4 57.6 H80.7 M81.6 57.6 H86.0 M87.2 57.6 H88.2" stroke="#F2F2F2" stroke-width="0.8" stroke-dasharray="0.7 0.3 1.0 0.3" opacity="0.8"/><path d="M53.8 60.1 H56.1 M57.1 60.1 H60.4 M61.1 60.1 H62.6 M63.9 60.1 H66.0 M67.1 60.1 H72.9 M74.1 60.1 H76.5 M77.6 60.1 H79.7 M80.6 60.1 H82.4 M83.1 60.1 H84.8 M85.9 60.1 H87.9" stroke="#F2F2F2" stroke-width="0.8" stroke-dasharray="0.7 0.3 1.0 0.3" opacity="0.8"/><path d="M3.2 62.7 H8.0 M9.3 62.7 H11.5 M12.1 62.7 H16.0 M17.2 62.7 H20.1 M21.3 62.7 H25.4 M26.3 62.7 H30.0 M31.3 62.7 H34.3 M35.0 62.7 H36.6 M37.4 62.7 H40.9 M41.9 62.7 H47.8 M48.8 62.7 H50.7 M51.8 62.7 H57.2 M58.4 62.7 H63.3 M64.5 62.7 H67.5 M68.6 62.7 H74.0 M75.0 62.7 H79.4 M80.2 62.7 H83.5 M84.1 62.7 H88.2" stroke="#F2F2F2" stroke-width="0.8" stroke-dasharray="0.7 0.3 1.0 0.3" opacity="0.8"/><path d="M79.3 65.2 H85.2 M86.4 65.2 H88.2" stroke="#F2F2F2" stroke-width="0.8" stroke-dasharray="0.7 0.3 1.0 0.3" opacity="0.8"/></svg><svg style="left:385px;top:552px" width="14" height="14" viewBox="0 0 14 14"><path d="M6.5 0.9 L8 4.8 L12.2 4.8 L8.8 7.4 L10.1 11.6 L6.5 9 L2.9 11.6 L4.2 7.4 L0.8 4.8 L5 4.8 Z" fill="#6A6A6A"/><path d="M-0.1 2.8 L1.1 4.4 L-0.1 4.6 Z M-0.1 6.9 L2.3 7.3 L1 8.5 L-0.1 8.5 Z" fill="#7A7A7A"/></svg>
<div class="abs" style="left:441px;top:472px;width:92px;height:70px;border:1px solid #CFCFCF;background:#fff"></div>
<div class="abs" style="left:443px;top:474px;width:90px;height:68px;background:#000"></div>
<svg style="left:443px;top:474px" width="90" height="68" viewBox="0 0 90 68"><rect x="14" y="22.7" width="61" height="38.1" fill="#5086CC" /><defs><linearGradient id="g30s" x1="0" y1="0" x2="0" y2="1"><stop offset="0" stop-color="#4A7EC8"/><stop offset="1" stop-color="#6A9AD8"/></linearGradient></defs><rect x="14" y="22.7" width="61" height="17" fill="url(#g30s)"/><path d="M26 33 Q34 29 44 31 Q50 28 56 30 Q52 35 44 36 Q34 38 26 33 Z" fill="#E8EEF6" opacity="0.85"/><path d="M14 40 Q22 36 34 37 Q30 41 20 42 Z" fill="#DDE6F0" opacity="0.8"/><path d="M46 27 Q52 25 55 27 Q50 29 46 27 Z" fill="#F0F4F8" opacity="0.8"/><rect x="20.7" y="39.3" width="44.4" height="18" fill="#C89C7C" /><rect x="21.5" y="38.8" width="43" height="1.3" fill="#B88A6A" /><rect x="30" y="41" width="24" height="16" fill="#D8C8A8" /><rect x="30.8" y="43.9" width="3.8" height="12" fill="#5A3A28" /><rect x="36.4" y="43.9" width="3.8" height="12" fill="#5A3A28" /><rect x="42.0" y="43.9" width="3.8" height="12" fill="#5A3A28" /><rect x="47.599999999999994" y="43.9" width="3.8" height="12" fill="#5A3A28" /><rect x="53.2" y="43.9" width="3.8" height="12" fill="#5A3A28" /><rect x="34.6" y="43" width="1.6" height="14" fill="#E8E0D0" /><rect x="40.2" y="43" width="1.6" height="14" fill="#E8E0D0" /><rect x="45.8" y="43" width="1.6" height="14" fill="#E8E0D0" /><rect x="51.4" y="43" width="1.6" height="14" fill="#E8E0D0" /><rect x="22" y="44" width="6" height="5" fill="#8A8A80" /><rect x="57" y="44" width="6" height="5" fill="#8A8A80" /><path d="M14 40 Q20 42 24 50 L24 61 H14 Z" fill="#2E5A2A"/><path d="M75 27 Q68 30 66 42 Q64 52 66 61 H75 Z" fill="#3E7A38"/><rect x="14" y="57" width="61" height="3.8" fill="#6A8A4A" /><rect x="37.5" y="57.7" width="14.6" height="1.9" fill="#40C0E0" /><rect x="20" y="59.5" width="50" height="1.3" fill="#C8C0A8" /><path d="M67 10.8 H74.6" stroke="#F78B3D" stroke-width="1" stroke-dasharray="1.2 0.3 0.7 0.3 2 0.4" opacity="0.9"/></svg><svg style="left:521px;top:552px" width="14" height="14" viewBox="0 0 14 14"><path d="M6.5 0.9 L8 4.8 L12.2 4.8 L8.8 7.4 L10.1 11.6 L6.5 9 L2.9 11.6 L4.2 7.4 L0.8 4.8 L5 4.8 Z" fill="#6A6A6A"/><path d="M-0.1 2.8 L1.1 4.4 L-0.1 4.6 Z M-0.1 6.9 L2.3 7.3 L1 8.5 L-0.1 8.5 Z" fill="#7A7A7A"/></svg>
<div class="abs" style="left:577px;top:472px;width:92px;height:70px;border:1px solid #CFCFCF;background:#fff"></div>
<div class="abs" style="left:579px;top:474px;width:90px;height:68px;background:#000"></div>
<svg style="left:579px;top:474px" width="90" height="68" viewBox="0 0 90 68"><clipPath id="c31"><rect x="3.6" y="-6" width="11.5" height="51.7" rx="5.75"/><rect x="15.8" y="-6" width="12.2" height="66.8" rx="6.1"/><rect x="28.8" y="-6" width="12.499999999999996" height="54.7" rx="6.249999999999998"/><rect x="42" y="-6" width="11.100000000000001" height="39.2" rx="5.550000000000001"/></clipPath><g clip-path="url(#c31)"><defs><linearGradient id="g31" x1="0" y1="0" x2="0" y2="1"><stop offset="0" stop-color="#6A9AD8"/><stop offset="0.25" stop-color="#9AB8E0"/><stop offset="0.4" stop-color="#8A8070"/><stop offset="0.55" stop-color="#4E6040"/><stop offset="0.68" stop-color="#5A7048"/><stop offset="0.8" stop-color="#8AA890"/><stop offset="0.9" stop-color="#5A9AA8"/><stop offset="1" stop-color="#A0A8A8"/></linearGradient></defs><rect x="0" y="0" width="56" height="68" fill="url(#g31)"/><rect x="22" y="3" width="9" height="26" fill="#6E6050" /><rect x="24" y="5" width="1" height="20" fill="#AAA" /><rect x="28" y="5" width="1" height="20" fill="#AAA" /></g><rect x="15.200000000000001" y="0" width="0.7" height="60.8" fill="#000"/><rect x="28.2" y="0" width="0.7" height="48.7" fill="#000"/><rect x="41.4" y="0" width="0.7" height="33.2" fill="#000"/><path d="M56.1 2.3 H61.0 M61.7 2.3 H63.4 M64.7 2.3 H68.6 M69.7 2.3 H71.8 M73.1 2.3 H74.8 M75.4 2.3 H78.0 M79.1 2.3 H82.9 M83.7 2.3 H87.8 M88.5 2.3 H90.0" stroke="#F78B3D" stroke-width="0.8" stroke-dasharray="0.7 0.3 1.0 0.3" opacity="0.9"/><path d="M79.8 5.0 H82.8 M83.7 5.0 H89.5" stroke="#F2F2F2" stroke-width="0.8" stroke-dasharray="0.7 0.3 1.0 0.3" opacity="0.72"/><path d="M56.8 7.6 H60.9 M61.9 7.6 H67.7 M68.9 7.6 H72.0 M72.8 7.6 H78.0 M79.3 7.6 H80.9 M82.1 7.6 H87.5 M88.5 7.6 H90.0" stroke="#F2F2F2" stroke-width="0.8" stroke-dasharray="0.7 0.3 1.0 0.3" opacity="0.72"/><path d="M55.4 10.3 H57.7 M58.8 10.3 H61.3 M61.9 10.3 H64.9 M65.7 10.3 H69.0 M70.1 10.3 H75.3 M76.6 10.3 H82.5 M83.8 10.3 H88.9 M89.7 10.3 H90.0" stroke="#F2F2F2" stroke-width="0.8" stroke-dasharray="0.7 0.3 1.0 0.3" opacity="0.72"/><path d="M75.8 12.9 H77.8 M78.5 12.9 H84.1 M85.2 12.9 H89.8" stroke="#F2F2F2" stroke-width="0.8" stroke-dasharray="0.7 0.3 1.0 0.3" opacity="0.72"/><path d="M56.3 15.6 H61.9 M63.0 15.6 H68.9 M69.7 15.6 H73.2 M74.4 15.6 H77.9 M79.0 15.6 H83.0 M83.7 15.6 H85.7 M87.0 15.6 H89.0 M89.7 15.6 H90.0" stroke="#F2F2F2" stroke-width="0.8" stroke-dasharray="0.7 0.3 1.0 0.3" opacity="0.72"/><path d="M55.0 18.2 H58.7 M59.6 18.2 H64.7 M65.4 18.2 H68.6 M69.6 18.2 H74.0 M74.6 18.2 H76.6 M77.3 18.2 H82.1 M83.2 18.2 H89.1" stroke="#F2F2F2" stroke-width="0.8" stroke-dasharray="0.7 0.3 1.0 0.3" opacity="0.72"/><path d="M56.7 20.9 H61.7 M62.9 20.9 H66.0 M66.6 20.9 H69.8 M70.6 20.9 H72.9 M73.5 20.9 H75.6 M76.8 20.9 H78.5 M79.6 20.9 H82.0 M82.7 20.9 H87.9 M88.7 20.9 H90.0" stroke="#F2F2F2" stroke-width="0.8" stroke-dasharray="0.7 0.3 1.0 0.3" opacity="0.72"/><path d="M72.9 23.5 H75.5 M76.2 23.5 H80.5 M81.3 23.5 H86.5 M87.3 23.5 H90.0" stroke="#F2F2F2" stroke-width="0.8" stroke-dasharray="0.7 0.3 1.0 0.3" opacity="0.72"/><path d="M56.4 28.9 H58.8 M59.6 28.9 H62.8 M64.0 28.9 H65.7 M66.7 28.9 H71.5 M72.3 28.9 H74.9 M76.1 28.9 H78.5 M79.7 28.9 H82.6 M83.6 28.9 H89.3" stroke="#F2F2F2" stroke-width="0.8" stroke-dasharray="0.7 0.3 1.0 0.3" opacity="0.72"/><path d="M54.8 31.5 H56.4 M57.4 31.5 H62.6 M63.4 31.5 H67.3 M68.2 31.5 H72.9 M73.6 31.5 H75.3 M76.2 31.5 H80.9 M81.6 31.5 H84.6 M85.4 31.5 H90.0" stroke="#F2F2F2" stroke-width="0.8" stroke-dasharray="0.7 0.3 1.0 0.3" opacity="0.72"/><path d="M56.8 34.2 H62.7 M63.9 34.2 H68.5 M69.7 34.2 H73.3 M74.3 34.2 H78.8 M79.7 34.2 H81.5 M82.2 34.2 H87.3 M88.5 34.2 H90.0" stroke="#F2F2F2" stroke-width="0.8" stroke-dasharray="0.7 0.3 1.0 0.3" opacity="0.72"/><path d="M56.7 36.8 H59.4 M60.7 36.8 H63.3 M64.1 36.8 H69.6 M70.9 36.8 H73.5 M74.2 36.8 H78.5 M79.6 36.8 H85.0 M86.0 36.8 H90.0" stroke="#F2F2F2" stroke-width="0.8" stroke-dasharray="0.7 0.3 1.0 0.3" opacity="0.72"/><path d="M68.8 42.1 H74.6 M75.6 42.1 H79.5 M80.7 42.1 H83.5 M84.4 42.1 H89.0 M90.0 42.1 H90.0" stroke="#F2F2F2" stroke-width="0.8" stroke-dasharray="0.7 0.3 1.0 0.3" opacity="0.72"/><path d="M55.1 44.8 H57.7 M58.8 44.8 H60.5 M61.8 44.8 H66.3 M67.2 44.8 H73.1 M74.3 44.8 H76.0 M76.8 44.8 H80.5 M81.8 44.8 H84.0 M84.6 44.8 H87.5 M88.1 44.8 H90.0" stroke="#F2F2F2" stroke-width="0.8" stroke-dasharray="0.7 0.3 1.0 0.3" opacity="0.72"/><path d="M56.2 47.4 H58.3 M58.9 47.4 H64.0 M65.0 47.4 H68.6 M69.6 47.4 H74.1 M75.4 47.4 H80.6 M81.7 47.4 H84.7 M85.4 47.4 H87.3 M88.5 47.4 H90.0" stroke="#F2F2F2" stroke-width="0.8" stroke-dasharray="0.7 0.3 1.0 0.3" opacity="0.72"/><path d="M54.9 50.1 H57.8 M58.7 50.1 H62.1 M63.3 50.1 H67.9 M69.1 50.1 H70.8 M71.9 50.1 H75.4 M76.3 50.1 H81.5 M82.6 50.1 H88.2 M89.3 50.1 H90.0" stroke="#F2F2F2" stroke-width="0.8" stroke-dasharray="0.7 0.3 1.0 0.3" opacity="0.72"/><path d="M55.9 52.8 H60.9 M61.8 52.8 H63.9 M64.9 52.8 H70.4 M71.6 52.8 H73.6 M74.5 52.8 H77.0 M77.9 52.8 H83.7 M84.6 52.8 H87.5 M88.3 52.8 H90.0" stroke="#F2F2F2" stroke-width="0.8" stroke-dasharray="0.7 0.3 1.0 0.3" opacity="0.72"/><path d="M79.8 55.4 H84.2 M85.4 55.4 H90.0" stroke="#F2F2F2" stroke-width="0.8" stroke-dasharray="0.7 0.3 1.0 0.3" opacity="0.72"/><path d="M57.1 58.1 H62.4 M63.5 58.1 H66.4 M67.5 58.1 H71.0 M71.8 58.1 H75.5 M76.4 58.1 H81.9 M83.1 58.1 H86.8 M87.5 58.1 H90.0" stroke="#F2F2F2" stroke-width="0.8" stroke-dasharray="0.7 0.3 1.0 0.3" opacity="0.72"/><path d="M56.7 60.7 H59.7 M60.9 60.7 H63.7 M64.4 60.7 H67.3 M68.4 60.7 H73.7 M74.9 60.7 H79.5 M80.3 60.7 H84.1 M85.1 60.7 H87.4 M88.1 60.7 H90.0" stroke="#F2F2F2" stroke-width="0.8" stroke-dasharray="0.7 0.3 1.0 0.3" opacity="0.72"/><path d="M77.9 63.4 H83.2 M84.5 63.4 H87.2 M87.8 63.4 H90.0" stroke="#F2F2F2" stroke-width="0.8" stroke-dasharray="0.7 0.3 1.0 0.3" opacity="0.72"/></svg><svg style="left:657px;top:552px" width="14" height="14" viewBox="0 0 14 14"><path d="M6.5 0.9 L8 4.8 L12.2 4.8 L8.8 7.4 L10.1 11.6 L6.5 9 L2.9 11.6 L4.2 7.4 L0.8 4.8 L5 4.8 Z" fill="#6A6A6A"/><path d="M-0.1 2.8 L1.1 4.4 L-0.1 4.6 Z M-0.1 6.9 L2.3 7.3 L1 8.5 L-0.1 8.5 Z" fill="#7A7A7A"/></svg>
<div class="abs" style="left:713px;top:472px;width:92px;height:70px;border:1px solid #CFCFCF;background:#fff"></div>
<div class="abs" style="left:715px;top:474px;width:90px;height:68px;background:#000"></div>
<svg style="left:715px;top:474px" width="90" height="68" viewBox="0 0 90 68"><path d="M37.3 65.5 L57.7 25.4" stroke="#F78B3D" stroke-width="2.3" stroke-linecap="round"/><path d="M45.5 58.9 L72.5 6.3" stroke="#F78B3D" stroke-width="3.0" stroke-linecap="round"/><path d="M47.2 39.5 L57.4 18.4" stroke="#F78B3D" stroke-width="1.8" stroke-linecap="round"/><path d="M1.2 2.3 H3.4 M4.5 2.3 H7.0 M7.6 2.3 H9.3 M10.1 2.3 H13.1 M13.8 2.3 H18.4 M19.7 2.3 H23.3 M24.3 2.3 H28.2 M29.4 2.3 H33.3 M34.2 2.3 H38.3" stroke="#F78B3D" stroke-width="0.8" stroke-dasharray="0.7 0.3 1.0 0.3" opacity="0.9"/><path d="M28.7 5.1 H32.2 M33.0 5.1 H34.7 M35.6 5.1 H38.3" stroke="#F2F2F2" stroke-width="0.8" stroke-dasharray="0.7 0.3 1.0 0.3" opacity="0.72"/><path d="M2.7 7.8 H8.3 M9.3 7.8 H11.9 M12.8 7.8 H17.6 M18.5 7.8 H22.4 M23.6 7.8 H26.4 M27.4 7.8 H29.3 M29.9 7.8 H32.7 M33.5 7.8 H35.4 M36.4 7.8 H38.3" stroke="#F2F2F2" stroke-width="0.8" stroke-dasharray="0.7 0.3 1.0 0.3" opacity="0.72"/><path d="M1.9 10.6 H7.0 M7.6 10.6 H9.9 M10.6 10.6 H16.6 M17.8 10.6 H19.9 M20.6 10.6 H24.6 M25.3 10.6 H27.1 M28.1 10.6 H31.8 M32.8 10.6 H36.6 M37.4 10.6 H38.3" stroke="#F2F2F2" stroke-width="0.8" stroke-dasharray="0.7 0.3 1.0 0.3" opacity="0.72"/><path d="M15.4 13.4 H19.6 M20.6 13.4 H24.4 M25.2 13.4 H28.4 M29.5 13.4 H31.8 M33.0 13.4 H36.8 M37.9 13.4 H38.3" stroke="#F2F2F2" stroke-width="0.8" stroke-dasharray="0.7 0.3 1.0 0.3" opacity="0.72"/><path d="M3.6 16.1 H6.2 M6.8 16.1 H8.4 M9.7 16.1 H13.8 M15.1 16.1 H20.1 M21.0 16.1 H26.8 M28.1 16.1 H31.6 M32.3 16.1 H35.2 M35.9 16.1 H38.3" stroke="#F2F2F2" stroke-width="0.8" stroke-dasharray="0.7 0.3 1.0 0.3" opacity="0.72"/><path d="M1.9 18.9 H7.8 M8.5 18.9 H13.5 M14.5 18.9 H18.2 M19.4 18.9 H22.6 M23.8 18.9 H25.5 M26.7 18.9 H29.1 M29.7 18.9 H35.1 M36.2 18.9 H38.3" stroke="#F2F2F2" stroke-width="0.8" stroke-dasharray="0.7 0.3 1.0 0.3" opacity="0.72"/><path d="M26.8 21.7 H30.1 M30.9 21.7 H35.3 M36.0 21.7 H38.3" stroke="#F2F2F2" stroke-width="0.8" stroke-dasharray="0.7 0.3 1.0 0.3" opacity="0.72"/><path d="M2.0 27.2 H3.6 M4.5 27.2 H9.8 M10.4 27.2 H12.2 M13.1 27.2 H17.8 M18.5 27.2 H21.0 M22.1 27.2 H25.1 M26.2 27.2 H29.0 M29.8 27.2 H32.3 M33.5 27.2 H35.4 M36.7 27.2 H38.3" stroke="#F2F2F2" stroke-width="0.8" stroke-dasharray="0.7 0.3 1.0 0.3" opacity="0.72"/><path d="M14.5 30.0 H19.3 M20.2 30.0 H22.6 M23.8 30.0 H28.1 M29.0 30.0 H30.6 M31.6 30.0 H36.4 M37.2 30.0 H38.3" stroke="#F2F2F2" stroke-width="0.8" stroke-dasharray="0.7 0.3 1.0 0.3" opacity="0.72"/><path d="M1.2 32.8 H4.4 M5.4 32.8 H9.7 M10.7 32.8 H12.8 M13.6 32.8 H16.0 M16.7 32.8 H18.6 M19.5 32.8 H22.0 M23.2 32.8 H26.1 M27.4 32.8 H32.6 M33.3 32.8 H35.5 M36.5 32.8 H38.3" stroke="#F2F2F2" stroke-width="0.8" stroke-dasharray="0.7 0.3 1.0 0.3" opacity="0.72"/><path d="M3.6 38.3 H7.5 M8.6 38.3 H12.1 M12.9 38.3 H18.6 M19.4 38.3 H25.4 M26.4 38.3 H27.9 M28.9 38.3 H31.0 M32.2 38.3 H35.6 M36.2 38.3 H38.3" stroke="#F2F2F2" stroke-width="0.8" stroke-dasharray="0.7 0.3 1.0 0.3" opacity="0.72"/><path d="M2.2 41.1 H6.2 M6.9 41.1 H12.8 M13.6 41.1 H17.5 M18.4 41.1 H22.0 M22.6 41.1 H28.2 M29.1 41.1 H32.4 M33.6 41.1 H38.3" stroke="#F2F2F2" stroke-width="0.8" stroke-dasharray="0.7 0.3 1.0 0.3" opacity="0.72"/><path d="M16.0 43.8 H19.8 M21.0 43.8 H24.2 M25.0 43.8 H29.6 M30.2 43.8 H36.1 M36.8 43.8 H38.3" stroke="#F2F2F2" stroke-width="0.8" stroke-dasharray="0.7 0.3 1.0 0.3" opacity="0.72"/><path d="M1.4 46.6 H5.5 M6.3 46.6 H8.9 M10.1 46.6 H13.6 M14.5 46.6 H16.1 M16.8 46.6 H20.0 M20.9 46.6 H22.7 M23.7 46.6 H25.2 M26.5 46.6 H28.9 M30.0 46.6 H32.0 M33.2 46.6 H38.3" stroke="#F2F2F2" stroke-width="0.8" stroke-dasharray="0.7 0.3 1.0 0.3" opacity="0.72"/><path d="M2.4 52.1 H4.6 M5.8 52.1 H11.0 M12.1 52.1 H17.3 M18.3 52.1 H23.0 M23.7 52.1 H27.1 M28.0 52.1 H31.3 M32.0 52.1 H34.8 M35.5 52.1 H38.3" stroke="#F2F2F2" stroke-width="0.8" stroke-dasharray="0.7 0.3 1.0 0.3" opacity="0.72"/><path d="M3.9 54.9 H9.1 M9.8 54.9 H15.3 M16.1 54.9 H20.0 M21.2 54.9 H23.3 M24.3 54.9 H30.0 M30.9 54.9 H32.8 M34.1 54.9 H38.3" stroke="#F2F2F2" stroke-width="0.8" stroke-dasharray="0.7 0.3 1.0 0.3" opacity="0.72"/><path d="M25.0 57.7 H27.1 M27.8 57.7 H31.4 M32.2 57.7 H34.8 M35.9 57.7 H38.3" stroke="#F2F2F2" stroke-width="0.8" stroke-dasharray="0.7 0.3 1.0 0.3" opacity="0.72"/><path d="M3.7 60.4 H7.6 M8.7 60.4 H12.2 M12.9 60.4 H14.5 M15.3 60.4 H18.7 M19.3 60.4 H22.8 M23.7 60.4 H25.5 M26.6 60.4 H32.4 M33.5 60.4 H37.0 M38.2 60.4 H38.3" stroke="#F2F2F2" stroke-width="0.8" stroke-dasharray="0.7 0.3 1.0 0.3" opacity="0.72"/><path d="M1.1 63.2 H6.1 M7.4 63.2 H12.3 M13.1 63.2 H15.2 M16.2 63.2 H20.8 M21.6 63.2 H24.7 M25.4 63.2 H27.1 M27.8 63.2 H33.2 M33.8 63.2 H36.0 M36.9 63.2 H38.3" stroke="#F2F2F2" stroke-width="0.8" stroke-dasharray="0.7 0.3 1.0 0.3" opacity="0.72"/><defs><linearGradient id="g32" x1="0" y1="0" x2="0" y2="1"><stop offset="0" stop-color="#C8B8A0"/><stop offset="0.5" stop-color="#B0A088"/><stop offset="1" stop-color="#D0C8B8"/></linearGradient></defs><rect x="60" y="40.7" width="23" height="16.1" fill="url(#g32)"/><rect x="66" y="43" width="5" height="10" fill="#5A4A3A" /></svg><svg style="left:793px;top:552px" width="14" height="14" viewBox="0 0 14 14"><path d="M6.5 0.9 L8 4.8 L12.2 4.8 L8.8 7.4 L10.1 11.6 L6.5 9 L2.9 11.6 L4.2 7.4 L0.8 4.8 L5 4.8 Z" fill="#6A6A6A"/><path d="M-0.1 2.8 L1.1 4.4 L-0.1 4.6 Z M-0.1 6.9 L2.3 7.3 L1 8.5 L-0.1 8.5 Z" fill="#7A7A7A"/></svg>
<div class="abs" style="left:849px;top:472px;width:92px;height:70px;border:1px solid #CFCFCF;background:#fff"></div>
<div class="abs" style="left:851px;top:474px;width:90px;height:68px;background:#000"></div>
<svg style="left:851px;top:474px" width="90" height="68" viewBox="0 0 90 68"><path d="M76.6 8.1 H86.1" stroke="#F78B3D" stroke-width="1" stroke-dasharray="1.2 0.3 0.7 0.3 2 0.4" opacity="0.9"/><path d="M10.3 13.8 H12.9 M14.1 13.8 H17.7 M18.9 13.8 H22.8 M23.8 13.8 H29.7 M30.9 13.8 H36.7 M37.5 13.8 H42.1 M43.0 13.8 H45.8 M46.9 13.8 H48.7 M49.6 13.8 H53.4 M54.6 13.8 H59.5 M60.7 13.8 H65.2 M66.4 13.8 H69.2 M70.0 13.8 H74.9 M75.7 13.8 H81.1 M81.9 13.8 H87.4 M88.7 13.8 H89.0" stroke="#F2F2F2" stroke-width="0.8" stroke-dasharray="0.7 0.3 1.0 0.3" opacity="0.8"/><path d="M9.0 16.5 H13.4 M14.6 16.5 H18.4 M19.2 16.5 H22.3 M23.3 16.5 H27.3 M28.2 16.5 H32.8 M34.0 16.5 H37.2 M38.2 16.5 H42.8 M44.0 16.5 H45.8 M46.4 16.5 H51.6 M52.2 16.5 H55.5 M56.3 16.5 H61.7 M62.8 16.5 H66.1 M67.1 16.5 H72.1 M73.2 16.5 H76.7 M77.9 16.5 H81.6 M82.2 16.5 H85.4 M86.5 16.5 H89.0" stroke="#F2F2F2" stroke-width="0.8" stroke-dasharray="0.7 0.3 1.0 0.3" opacity="0.8"/><path d="M9.8 19.2 H15.5 M16.6 19.2 H21.3 M22.5 19.2 H27.8 M29.0 19.2 H34.6 M35.7 19.2 H39.4 M40.5 19.2 H46.0 M47.2 19.2 H50.0 M50.8 19.2 H56.6 M57.4 19.2 H61.1 M62.1 19.2 H67.0 M67.9 19.2 H72.8 M73.6 19.2 H79.4 M80.1 19.2 H86.0 M87.2 19.2 H89.0" stroke="#F2F2F2" stroke-width="0.8" stroke-dasharray="0.7 0.3 1.0 0.3" opacity="0.8"/><path d="M38.5 21.9 H43.4 M44.7 21.9 H49.9 M50.8 21.9 H56.0 M57.2 21.9 H62.6 M63.8 21.9 H67.9 M68.9 21.9 H74.2 M75.2 21.9 H80.0 M80.7 21.9 H82.6 M83.4 21.9 H87.6 M88.6 21.9 H89.0" stroke="#F2F2F2" stroke-width="0.8" stroke-dasharray="0.7 0.3 1.0 0.3" opacity="0.8"/><path d="M5.0 24.6 H6.9 M8.1 24.6 H13.1 M14.1 24.6 H20.1 M21.1 24.6 H22.7 M23.9 24.6 H27.3 M28.5 24.6 H33.7 M34.4 24.6 H36.1 M36.7 24.6 H41.7 M42.8 24.6 H45.4 M46.1 24.6 H49.2 M50.4 24.6 H55.2 M56.4 24.6 H62.3 M63.4 24.6 H68.6 M69.3 24.6 H70.8 M72.0 24.6 H76.3 M77.1 24.6 H79.2 M80.0 24.6 H83.0 M84.0 24.6 H87.5 M88.3 24.6 H89.0" stroke="#F2F2F2" stroke-width="0.8" stroke-dasharray="0.7 0.3 1.0 0.3" opacity="0.8"/><path d="M10.6 27.4 H12.5 M13.4 27.4 H15.5 M16.7 27.4 H20.6 M21.5 27.4 H25.9 M26.7 27.4 H28.3 M28.9 27.4 H32.0 M32.8 27.4 H35.4 M36.3 27.4 H41.5 M42.1 27.4 H45.6 M46.5 27.4 H49.3 M50.4 27.4 H52.9 M53.5 27.4 H55.7 M57.0 27.4 H60.1 M60.8 27.4 H66.6 M67.7 27.4 H73.5 M74.3 27.4 H79.5 M80.1 27.4 H82.7 M83.8 27.4 H87.6 M88.8 27.4 H89.0" stroke="#F2F2F2" stroke-width="0.8" stroke-dasharray="0.7 0.3 1.0 0.3" opacity="0.8"/><path d="M77.0 30.1 H79.3 M80.1 30.1 H85.5 M86.4 30.1 H89.0" stroke="#F2F2F2" stroke-width="0.8" stroke-dasharray="0.7 0.3 1.0 0.3" opacity="0.8"/><path d="M6.5 32.8 H12.1 M13.1 32.8 H15.7 M16.8 32.8 H22.5 M23.7 32.8 H27.2 M28.1 32.8 H30.0 M31.2 32.8 H33.4 M34.1 32.8 H35.8 M36.5 32.8 H39.7 M40.7 32.8 H42.9 M43.8 32.8 H48.8 M49.4 32.8 H51.5 M52.5 32.8 H58.1 M59.3 32.8 H63.4 M64.0 32.8 H69.5 M70.8 32.8 H76.3 M77.3 32.8 H80.5 M81.5 32.8 H86.6 M87.9 32.8 H89.0" stroke="#F2F2F2" stroke-width="0.8" stroke-dasharray="0.7 0.3 1.0 0.3" opacity="0.8"/><path d="M9.3 35.5 H13.3 M14.3 35.5 H17.0 M18.0 35.5 H23.6 M24.3 35.5 H27.0 M27.8 35.5 H33.2 M34.0 35.5 H39.2 M40.4 35.5 H45.9 M47.0 35.5 H49.4 M50.3 35.5 H55.5 M56.3 35.5 H60.5 M61.7 35.5 H67.4 M68.3 35.5 H70.3 M70.9 35.5 H73.9 M74.8 35.5 H77.6 M78.8 35.5 H83.2 M84.2 35.5 H89.0" stroke="#F2F2F2" stroke-width="0.8" stroke-dasharray="0.7 0.3 1.0 0.3" opacity="0.8"/><path d="M7.1 38.2 H10.1 M10.9 38.2 H13.0 M14.1 38.2 H19.7 M20.3 38.2 H25.0 M25.7 38.2 H29.0 M29.9 38.2 H35.4 M36.3 38.2 H40.1 M41.0 38.2 H43.6 M44.4 38.2 H46.2 M46.8 38.2 H50.7 M51.9 38.2 H56.4 M57.2 38.2 H63.1 M63.8 38.2 H67.2 M68.0 38.2 H70.3 M71.6 38.2 H76.3 M77.0 38.2 H79.3 M80.5 38.2 H83.7 M84.5 38.2 H87.3 M88.1 38.2 H89.0" stroke="#F2F2F2" stroke-width="0.8" stroke-dasharray="0.7 0.3 1.0 0.3" opacity="0.8"/><path d="M7.5 40.9 H9.2 M10.2 40.9 H14.3 M15.2 40.9 H20.6 M21.8 40.9 H26.3 M27.2 40.9 H29.4 M30.4 40.9 H33.2 M34.0 40.9 H37.9 M38.6 40.9 H43.0 M44.1 40.9 H45.7 M46.7 40.9 H49.1 M49.9 40.9 H54.7 M55.9 40.9 H58.8 M60.0 40.9 H63.0 M64.3 40.9 H66.6 M67.6 40.9 H69.5 M70.5 40.9 H75.3 M76.6 40.9 H81.5 M82.5 40.9 H85.8 M86.9 40.9 H89.0" stroke="#F2F2F2" stroke-width="0.8" stroke-dasharray="0.7 0.3 1.0 0.3" opacity="0.8"/><path d="M47.5 43.6 H50.7 M51.8 43.6 H55.0 M56.2 43.6 H61.6 M62.8 43.6 H68.4 M69.5 43.6 H73.3 M74.1 43.6 H78.4 M79.7 43.6 H82.8 M83.5 43.6 H88.4" stroke="#F2F2F2" stroke-width="0.8" stroke-dasharray="0.7 0.3 1.0 0.3" opacity="0.8"/><path d="M10.1 46.3 H12.2 M12.9 46.3 H16.8 M18.0 46.3 H20.6 M21.8 46.3 H23.5 M24.2 46.3 H28.2 M29.3 46.3 H33.1 M34.1 46.3 H37.3 M38.1 46.3 H42.0 M42.6 46.3 H45.0 M45.8 46.3 H50.3 M51.0 46.3 H53.6 M54.9 46.3 H59.3 M60.2 46.3 H65.2 M66.3 46.3 H71.5 M72.5 46.3 H76.8 M77.4 46.3 H80.9 M81.7 46.3 H84.4 M85.3 46.3 H89.0" stroke="#F2F2F2" stroke-width="0.8" stroke-dasharray="0.7 0.3 1.0 0.3" opacity="0.8"/><path d="M10.7 49.1 H13.7 M14.4 49.1 H16.0 M17.2 49.1 H21.2 M21.8 49.1 H25.7 M26.4 49.1 H30.1 M31.4 49.1 H37.3 M38.2 49.1 H43.2 M44.1 49.1 H46.0 M46.9 49.1 H52.0 M53.2 49.1 H57.9 M59.2 49.1 H62.4 M63.5 49.1 H68.7 M69.9 49.1 H75.4 M76.6 49.1 H79.6 M80.5 49.1 H84.7 M85.4 49.1 H88.3" stroke="#F2F2F2" stroke-width="0.8" stroke-dasharray="0.7 0.3 1.0 0.3" opacity="0.8"/><path d="M10.1 51.8 H12.4 M13.4 51.8 H16.3 M17.0 51.8 H22.1 M23.3 51.8 H25.8 M26.9 51.8 H28.8 M29.5 51.8 H31.8 M32.8 51.8 H36.9 M38.0 51.8 H42.5 M43.6 51.8 H49.1 M50.1 51.8 H52.6 M53.3 51.8 H58.7 M59.8 51.8 H64.2 M65.5 51.8 H70.6 M71.5 51.8 H73.9 M74.8 51.8 H80.4 M81.6 51.8 H83.1 M83.7 51.8 H87.2 M88.5 51.8 H89.0" stroke="#F2F2F2" stroke-width="0.8" stroke-dasharray="0.7 0.3 1.0 0.3" opacity="0.8"/><path d="M11.0 54.5 H13.4 M14.5 54.5 H18.0 M18.9 54.5 H24.7 M25.3 54.5 H29.0 M30.2 54.5 H34.8 M36.1 54.5 H38.8 M39.8 54.5 H45.7 M46.4 54.5 H49.8 M51.1 54.5 H53.3 M54.5 54.5 H59.3 M60.1 54.5 H66.1 M67.2 54.5 H69.3 M70.6 54.5 H76.1 M77.0 54.5 H78.7 M79.8 54.5 H83.9 M85.1 54.5 H86.9 M87.9 54.5 H89.0" stroke="#F2F2F2" stroke-width="0.8" stroke-dasharray="0.7 0.3 1.0 0.3" opacity="0.8"/><path d="M72.5 57.2 H74.2 M75.0 57.2 H79.2 M80.2 57.2 H82.0 M82.7 57.2 H87.2 M88.4 57.2 H89.0" stroke="#F2F2F2" stroke-width="0.8" stroke-dasharray="0.7 0.3 1.0 0.3" opacity="0.8"/><path d="M8.8 59.9 H13.4 M14.4 59.9 H18.7 M19.5 59.9 H23.3 M24.0 59.9 H27.6 M28.6 59.9 H34.4 M35.6 59.9 H39.6 M40.8 59.9 H46.7 M47.8 59.9 H52.6 M53.3 59.9 H57.8 M58.5 59.9 H61.9 M62.7 59.9 H66.5 M67.8 59.9 H70.1 M70.9 59.9 H74.8 M75.7 59.9 H81.6 M82.5 59.9 H86.7 M87.3 59.9 H89.0" stroke="#F2F2F2" stroke-width="0.8" stroke-dasharray="0.7 0.3 1.0 0.3" opacity="0.8"/></svg><svg style="left:929px;top:552px" width="14" height="14" viewBox="0 0 14 14"><path d="M6.5 0.9 L8 4.8 L12.2 4.8 L8.8 7.4 L10.1 11.6 L6.5 9 L2.9 11.6 L4.2 7.4 L0.8 4.8 L5 4.8 Z" fill="#6A6A6A"/><path d="M-0.1 2.8 L1.1 4.4 L-0.1 4.6 Z M-0.1 6.9 L2.3 7.3 L1 8.5 L-0.1 8.5 Z" fill="#7A7A7A"/></svg>
<div class="abs" style="left:985px;top:472px;width:92px;height:70px;border:1px solid #CFCFCF;background:#fff"></div>
<div class="abs" style="left:987px;top:474px;width:90px;height:68px;background:#000"></div>
<svg style="left:987px;top:474px" width="90" height="68" viewBox="0 0 90 68"><rect x="14" y="20" width="60.8" height="40" fill="#8A6A50" /><rect x="22" y="20" width="34" height="2.2" fill="#2040C0" /><rect x="14" y="22" width="11" height="28" fill="#A86A50" /><rect x="25" y="22" width="9" height="20" fill="#D8A888" /><rect x="26.5" y="34" width="5" height="7" fill="#3A2018" /><rect x="27" y="30" width="3" height="3" fill="#8A8A98" /><rect x="35" y="22" width="22" height="6" fill="#F0E8D8" /><rect x="35" y="28" width="22" height="10" fill="#9A7A50" /><rect x="36.0" y="29" width="1.2" height="8" fill="#5A4A38" /><rect x="38.6" y="29" width="1.2" height="8" fill="#5A4A38" /><rect x="41.2" y="29" width="1.2" height="8" fill="#5A4A38" /><rect x="43.8" y="29" width="1.2" height="8" fill="#5A4A38" /><rect x="46.4" y="29" width="1.2" height="8" fill="#5A4A38" /><rect x="49.0" y="29" width="1.2" height="8" fill="#5A4A38" /><rect x="51.6" y="29" width="1.2" height="8" fill="#5A4A38" /><rect x="54.2" y="29" width="1.2" height="8" fill="#5A4A38" /><rect x="35" y="38" width="22" height="7" fill="#E8B070" /><rect x="43" y="40" width="5" height="5" fill="#F0F0F0" /><rect x="36" y="39" width="3" height="5" fill="#E88A20" /><rect x="53" y="39" width="3" height="5" fill="#E88A20" /><rect x="57" y="22" width="17.8" height="23" fill="#D89068" /><rect x="59" y="25" width="2" height="20" fill="#F0F0F0" /><rect x="64" y="24" width="10.8" height="4" fill="#F4F0E8" /><rect x="66" y="30" width="6" height="12" fill="#C86830" /><rect x="14" y="40" width="22" height="9" fill="#6A7A48" /><rect x="50" y="40" width="24.8" height="9" fill="#7A8A4A" /><rect x="52" y="43" width="8" height="4" fill="#C03040" /><path d="M14 50 L36 48 H53 L74.8 50 V60 H14 Z" fill="#4E4236"/><rect x="36" y="50" width="17" height="9" fill="#7A6040" /><rect x="37.0" y="52" width="1.2" height="6" fill="#3A3028" /><rect x="39.6" y="52" width="1.2" height="6" fill="#3A3028" /><rect x="42.2" y="52" width="1.2" height="6" fill="#3A3028" /><rect x="44.8" y="52" width="1.2" height="6" fill="#3A3028" /><rect x="47.4" y="52" width="1.2" height="6" fill="#3A3028" /><rect x="50.0" y="52" width="1.2" height="6" fill="#3A3028" /><rect x="52.6" y="52" width="1.2" height="6" fill="#3A3028" /><path d="M14 55 L35 47.5 L36.5 48.5 L16 58 Z" fill="#8A8A90"/><path d="M74.8 56 L54 47.5 L52.5 48.5 L73 59 Z" fill="#8A8A90"/><path d="M76.7 8.5 H86.3" stroke="#F78B3D" stroke-width="1" stroke-dasharray="1.2 0.3 0.7 0.3 2 0.4" opacity="0.9"/></svg><svg style="left:1065px;top:552px" width="14" height="14" viewBox="0 0 14 14"><path d="M6.5 0.9 L8 4.8 L12.2 4.8 L8.8 7.4 L10.1 11.6 L6.5 9 L2.9 11.6 L4.2 7.4 L0.8 4.8 L5 4.8 Z" fill="#6A6A6A"/><path d="M-0.1 2.8 L1.1 4.4 L-0.1 4.6 Z M-0.1 6.9 L2.3 7.3 L1 8.5 L-0.1 8.5 Z" fill="#7A7A7A"/></svg>
<div class="abs" style="left:1121px;top:472px;width:92px;height:70px;border:1px solid #CFCFCF;background:#fff"></div>
<div class="abs" style="left:1123px;top:474px;width:90px;height:68px;background:#000"></div>
<svg style="left:1123px;top:474px" width="90" height="68" viewBox="0 0 90 68"><clipPath id="c35"><path d="M1.4 29.5 Q4 21 8.1 19.1 Q14 14.5 19.1 14 Q24 12 28 12.1 Q35 13 38.3 16.9 Q41.5 20 41.3 25 L40.5 30.2 Q39.5 35 38.3 38.3 L32.4 47.2 Q29 52 25 54.6 Q20 56.5 16.2 55.7 Q12 54 11 51.6 Q9.5 47 9.5 41.3 L5.9 38.3 Q2 35 1.4 31.7 Z"/></clipPath><g clip-path="url(#c35)"><defs><linearGradient id="c35g" x1="0" y1="0" x2="0" y2="1"><stop offset="0" stop-color="#7AA6DE"/><stop offset="0.16" stop-color="#A8C0DA"/><stop offset="0.2" stop-color="#E0DCD6"/><stop offset="0.48" stop-color="#D0C8BC"/><stop offset="0.55" stop-color="#9A9080"/><stop offset="0.7" stop-color="#7A8A50"/><stop offset="0.82" stop-color="#6A7A48"/><stop offset="1" stop-color="#B8B8B0"/></linearGradient></defs><rect x="0" y="10" width="46" height="48" fill="url(#c35g)"/><rect x="8" y="20" width="34" height="3" fill="#EEEAE4" /><rect x="12.0" y="23.5" width="4" height="10" fill="#6E7884" /><rect x="18.5" y="23.5" width="4" height="10" fill="#6E7884" /><rect x="25.0" y="23.5" width="4" height="10" fill="#6E7884" /><rect x="31.5" y="23.5" width="4" height="10" fill="#6E7884" /><rect x="38.0" y="23.5" width="4" height="10" fill="#6E7884" /><rect x="11.0" y="23" width="1.6" height="12" fill="#F0ECE6" /><rect x="17.5" y="23" width="1.6" height="12" fill="#F0ECE6" /><rect x="24.0" y="23" width="1.6" height="12" fill="#F0ECE6" /><rect x="30.5" y="23" width="1.6" height="12" fill="#F0ECE6" /><rect x="37.0" y="23" width="1.6" height="12" fill="#F0ECE6" /><rect x="43.5" y="23" width="1.6" height="12" fill="#F0ECE6" /><rect x="10" y="36" width="28" height="4" fill="#8A7E6E" /><path d="M12 56 L18 44 L22 44 L20 56 Z" fill="#D8D8D8"/></g><path d="M39.8 33.2 L49.8 43.5 M39.1 36.9 L47.2 48.7 M38.5 40 L44 45" stroke="#B0B0B0" stroke-width="0.7" opacity="0.75"/><path d="M54.5 15.1 H56.6 M57.4 15.1 H59.6 M60.5 15.1 H63.1 M63.8 15.1 H67.7 M68.9 15.1 H74.0 M75.0 15.1 H80.1 M81.4 15.1 H86.3" stroke="#F78B3D" stroke-width="0.8" stroke-dasharray="0.7 0.3 1.0 0.3" opacity="0.9"/><path d="M55.4 17.8 H59.2 M59.8 17.8 H63.6 M64.7 17.8 H67.7 M68.7 17.8 H70.3 M71.6 17.8 H73.4 M74.3 17.8 H78.3 M79.2 17.8 H82.4 M83.2 17.8 H86.3" stroke="#F2F2F2" stroke-width="0.8" stroke-dasharray="0.7 0.3 1.0 0.3" opacity="0.72"/><path d="M55.0 20.5 H59.8 M60.7 20.5 H65.9 M66.7 20.5 H71.0 M71.6 20.5 H76.6 M77.8 20.5 H81.3 M82.3 20.5 H84.0 M85.2 20.5 H86.3" stroke="#F2F2F2" stroke-width="0.8" stroke-dasharray="0.7 0.3 1.0 0.3" opacity="0.72"/><path d="M74.2 23.2 H77.4 M78.6 23.2 H82.1 M83.1 23.2 H85.8" stroke="#F2F2F2" stroke-width="0.8" stroke-dasharray="0.7 0.3 1.0 0.3" opacity="0.72"/><path d="M54.8 25.9 H59.8 M61.0 25.9 H62.6 M63.7 25.9 H65.6 M66.8 25.9 H69.1 M69.8 25.9 H75.3 M76.4 25.9 H77.9 M78.8 25.9 H84.1 M84.8 25.9 H86.3" stroke="#F2F2F2" stroke-width="0.8" stroke-dasharray="0.7 0.3 1.0 0.3" opacity="0.72"/><path d="M74.8 28.7 H79.9 M81.0 28.7 H86.2" stroke="#F2F2F2" stroke-width="0.8" stroke-dasharray="0.7 0.3 1.0 0.3" opacity="0.72"/><path d="M54.6 31.4 H58.4 M59.3 31.4 H62.9 M63.9 31.4 H68.5 M69.3 31.4 H73.3 M74.3 31.4 H79.6 M80.7 31.4 H86.3" stroke="#F2F2F2" stroke-width="0.8" stroke-dasharray="0.7 0.3 1.0 0.3" opacity="0.72"/><path d="M54.4 34.1 H57.9 M58.9 34.1 H62.5 M63.3 34.1 H69.0 M70.2 34.1 H74.7 M75.7 34.1 H81.5 M82.2 34.1 H86.3" stroke="#F2F2F2" stroke-width="0.8" stroke-dasharray="0.7 0.3 1.0 0.3" opacity="0.72"/><path d="M55.1 36.8 H58.5 M59.1 36.8 H62.2 M63.2 36.8 H64.8 M65.8 36.8 H71.4 M72.1 36.8 H75.0 M76.2 36.8 H80.0 M81.2 36.8 H85.9" stroke="#F2F2F2" stroke-width="0.8" stroke-dasharray="0.7 0.3 1.0 0.3" opacity="0.72"/><path d="M53.4 39.5 H57.4 M58.3 39.5 H63.6 M64.8 39.5 H67.3 M68.0 39.5 H72.8 M73.9 39.5 H78.9 M80.2 39.5 H83.7 M84.4 39.5 H86.3" stroke="#F2F2F2" stroke-width="0.8" stroke-dasharray="0.7 0.3 1.0 0.3" opacity="0.72"/><path d="M64.6 42.2 H68.7 M69.3 42.2 H73.5 M74.4 42.2 H77.8 M78.8 42.2 H81.3 M82.4 42.2 H85.6" stroke="#F2F2F2" stroke-width="0.8" stroke-dasharray="0.7 0.3 1.0 0.3" opacity="0.72"/><path d="M53.9 44.9 H55.7 M56.5 44.9 H62.4 M63.1 44.9 H66.4 M67.5 44.9 H71.2 M72.2 44.9 H77.5 M78.7 44.9 H82.1 M83.0 44.9 H84.5 M85.6 44.9 H86.3" stroke="#F2F2F2" stroke-width="0.8" stroke-dasharray="0.7 0.3 1.0 0.3" opacity="0.72"/><path d="M55.1 47.6 H59.9 M60.8 47.6 H62.8 M63.9 47.6 H65.8 M66.6 47.6 H69.4 M70.5 47.6 H74.7 M75.5 47.6 H78.5 M79.4 47.6 H84.6 M85.5 47.6 H86.3" stroke="#F2F2F2" stroke-width="0.8" stroke-dasharray="0.7 0.3 1.0 0.3" opacity="0.72"/></svg><svg style="left:1201px;top:552px" width="14" height="14" viewBox="0 0 14 14"><path d="M6.5 0.9 L8 4.8 L12.2 4.8 L8.8 7.4 L10.1 11.6 L6.5 9 L2.9 11.6 L4.2 7.4 L0.8 4.8 L5 4.8 Z" fill="#6A6A6A"/><path d="M-0.1 2.8 L1.1 4.4 L-0.1 4.6 Z M-0.1 6.9 L2.3 7.3 L1 8.5 L-0.1 8.5 Z" fill="#7A7A7A"/></svg>
<div class="abs" style="left:1257px;top:472px;width:92px;height:70px;border:1px solid #CFCFCF;background:#fff"></div>
<div class="abs" style="left:1259px;top:474px;width:90px;height:68px;background:#000"></div>
<svg style="left:1259px;top:474px" width="90" height="68" viewBox="0 0 90 68"><path d="M68.9 8.1 H85.2" stroke="#F78B3D" stroke-width="1" stroke-dasharray="1.2 0.3 0.7 0.3 2 0.4" opacity="0.9"/><path d="M55.1 11.5 H56.6 M57.8 11.5 H63.4 M64.2 11.5 H66.1 M67.0 11.5 H69.3 M70.1 11.5 H74.5 M75.4 11.5 H78.1 M78.7 11.5 H82.1 M83.0 11.5 H85.2" stroke="#F2F2F2" stroke-width="0.8" stroke-dasharray="0.7 0.3 1.0 0.3" opacity="0.72"/><path d="M74.6 27.1 H85.2" stroke="#F78B3D" stroke-width="1" stroke-dasharray="1.2 0.3 0.7 0.3 2 0.4" opacity="0.9"/><path d="M44.2 32.0 H49.1 M50.0 32.0 H55.5 M56.8 32.0 H61.6 M62.3 32.0 H64.5 M65.8 32.0 H70.0 M70.9 32.0 H75.0 M75.8 32.0 H77.5 M78.4 32.0 H80.2 M81.0 32.0 H85.2" stroke="#F2F2F2" stroke-width="0.8" stroke-dasharray="0.7 0.3 1.0 0.3" opacity="0.72"/><path d="M41.5 34.8 H47.4 M48.6 34.8 H52.7 M53.5 34.8 H58.7 M59.7 34.8 H62.2 M63.1 34.8 H65.5 M66.5 34.8 H70.2 M71.0 34.8 H72.6 M73.6 34.8 H77.7 M78.5 34.8 H81.5 M82.4 34.8 H84.6" stroke="#F2F2F2" stroke-width="0.8" stroke-dasharray="0.7 0.3 1.0 0.3" opacity="0.72"/><path d="M43.3 37.7 H45.7 M46.7 37.7 H51.7 M52.9 37.7 H55.5 M56.3 37.7 H61.1 M61.8 37.7 H67.2 M67.8 37.7 H72.2 M73.0 37.7 H75.5 M76.3 37.7 H81.5 M82.2 37.7 H85.2" stroke="#F2F2F2" stroke-width="0.8" stroke-dasharray="0.7 0.3 1.0 0.3" opacity="0.72"/><path d="M77.1 40.5 H82.1 M83.2 40.5 H85.2" stroke="#F2F2F2" stroke-width="0.8" stroke-dasharray="0.7 0.3 1.0 0.3" opacity="0.72"/><path d="M42.3 43.3 H44.3 M45.6 43.3 H48.9 M50.0 43.3 H55.4 M56.0 43.3 H61.5 M62.3 43.3 H66.9 M67.9 43.3 H71.1 M71.9 43.3 H74.8 M76.0 43.3 H79.0 M79.8 43.3 H84.6" stroke="#F2F2F2" stroke-width="0.8" stroke-dasharray="0.7 0.3 1.0 0.3" opacity="0.72"/><rect x="8.9" y="40.7" width="23" height="16.7" fill="#8A8680" /><rect x="8.9" y="40.7" width="23" height="5" fill="#C8C4BC" /><rect x="12" y="44" width="5" height="8" fill="#E8E8E4" /><rect x="20" y="45" width="6" height="9" fill="#3A3A3A" /><rect x="26" y="42" width="5" height="10" fill="#6A5A50" /><rect x="8.9" y="53" width="23" height="4.4" fill="#A8A8A4" /></svg><svg style="left:1337px;top:552px" width="14" height="14" viewBox="0 0 14 14"><path d="M6.5 0.9 L8 4.8 L12.2 4.8 L8.8 7.4 L10.1 11.6 L6.5 9 L2.9 11.6 L4.2 7.4 L0.8 4.8 L5 4.8 Z" fill="#6A6A6A"/><path d="M-0.1 2.8 L1.1 4.4 L-0.1 4.6 Z M-0.1 6.9 L2.3 7.3 L1 8.5 L-0.1 8.5 Z" fill="#7A7A7A"/></svg>
<div class="abs" style="left:1393px;top:472px;width:92px;height:70px;border:1px solid #CFCFCF;background:#fff"></div>
<div class="abs" style="left:1395px;top:474px;width:90px;height:68px;background:#000"></div>
<svg style="left:1395px;top:474px" width="90" height="68" viewBox="0 0 90 68"><defs><linearGradient id="g37a" x1="0" y1="0" x2="0" y2="1"><stop offset="0" stop-color="#88AADD"/><stop offset="0.25" stop-color="#D8B878"/><stop offset="0.55" stop-color="#B89860"/><stop offset="0.65" stop-color="#8A8A8A"/><stop offset="1" stop-color="#9A9A9A"/></linearGradient></defs><rect x="5.8" y="12" width="23.3" height="17" fill="url(#g37a)"/><rect x="22" y="22" width="5" height="6" fill="#6A5A4A" /><defs><linearGradient id="g37b" x1="0" y1="0" x2="0" y2="1"><stop offset="0" stop-color="#F0F0F0"/><stop offset="0.3" stop-color="#DADADA"/><stop offset="0.45" stop-color="#6A6A6A"/><stop offset="0.7" stop-color="#8A8A8A"/><stop offset="1" stop-color="#A8A8A8"/></linearGradient></defs><rect x="31.6" y="34.4" width="15.3" height="25.3" fill="url(#g37b)"/><rect x="31.6" y="34.4" width="3" height="25.3" fill="#3A3A3A" /><path d="M55.6 10.0 H61.3 M62.3 10.0 H67.2 M68.2 10.0 H69.9 M71.2 10.0 H74.7 M75.8 10.0 H81.7 M82.7 10.0 H85.3" stroke="#F78B3D" stroke-width="0.8" stroke-dasharray="0.7 0.3 1.0 0.3" opacity="0.9"/><path d="M54.7 12.7 H58.1 M58.8 12.7 H63.9 M65.1 12.7 H66.8 M67.7 12.7 H71.7 M72.9 12.7 H77.3 M78.2 12.7 H82.4 M83.2 12.7 H85.3" stroke="#F2F2F2" stroke-width="0.8" stroke-dasharray="0.7 0.3 1.0 0.3" opacity="0.72"/><path d="M55.1 15.4 H59.4 M60.3 15.4 H62.1 M62.7 15.4 H66.5 M67.4 15.4 H72.0 M72.8 15.4 H75.7 M76.7 15.4 H81.9 M82.5 15.4 H84.1" stroke="#F2F2F2" stroke-width="0.8" stroke-dasharray="0.7 0.3 1.0 0.3" opacity="0.72"/><path d="M69.8 18.1 H74.5 M75.4 18.1 H81.0 M82.1 18.1 H84.8" stroke="#F2F2F2" stroke-width="0.8" stroke-dasharray="0.7 0.3 1.0 0.3" opacity="0.72"/><path d="M55.9 20.8 H58.3 M59.4 20.8 H61.1 M62.0 20.8 H66.0 M66.6 20.8 H71.0 M71.7 20.8 H76.1 M76.9 20.8 H78.6 M79.9 20.8 H81.7 M82.4 20.8 H85.3" stroke="#F2F2F2" stroke-width="0.8" stroke-dasharray="0.7 0.3 1.0 0.3" opacity="0.72"/><path d="M55.8 23.6 H59.4 M60.4 23.6 H64.3 M65.1 23.6 H67.6 M68.7 23.6 H72.1 M73.1 23.6 H78.7 M79.3 23.6 H82.1 M83.0 23.6 H84.8" stroke="#F2F2F2" stroke-width="0.8" stroke-dasharray="0.7 0.3 1.0 0.3" opacity="0.72"/><path d="M56.1 26.3 H59.0 M59.7 26.3 H65.6 M66.2 26.3 H71.4 M72.5 26.3 H78.0 M79.1 26.3 H82.2 M83.2 26.3 H85.3" stroke="#F2F2F2" stroke-width="0.8" stroke-dasharray="0.7 0.3 1.0 0.3" opacity="0.72"/><path d="M67.9 29.0 H72.6 M73.8 29.0 H78.2 M79.5 29.0 H83.6 M84.8 29.0 H85.3" stroke="#F2F2F2" stroke-width="0.8" stroke-dasharray="0.7 0.3 1.0 0.3" opacity="0.72"/></svg><svg style="left:1473px;top:552px" width="14" height="14" viewBox="0 0 14 14"><path d="M6.5 0.9 L8 4.8 L12.2 4.8 L8.8 7.4 L10.1 11.6 L6.5 9 L2.9 11.6 L4.2 7.4 L0.8 4.8 L5 4.8 Z" fill="#6A6A6A"/><path d="M-0.1 2.8 L1.1 4.4 L-0.1 4.6 Z M-0.1 6.9 L2.3 7.3 L1 8.5 L-0.1 8.5 Z" fill="#7A7A7A"/></svg>
<div class="abs" style="left:1529px;top:472px;width:92px;height:70px;border:1px solid #CFCFCF;background:#fff"></div>
<div class="abs" style="left:1531px;top:474px;width:90px;height:68px;background:#000"></div>
<svg style="left:1531px;top:474px" width="90" height="68" viewBox="0 0 90 68"><rect x="6.1" y="3.3" width="37.9" height="63.3" fill="#F6F4F2" /><rect x="6.478999999999999" y="3.3" width="2.653" height="5.696999999999999" fill="#F6EEB8" /><rect x="16.712" y="41.279999999999994" width="11.37" height="6.33" fill="#ECEAD2" /><rect x="29.598" y="52.674" width="4.548" height="5.696999999999999" fill="#EEEED8" /><rect x="12.921999999999999" y="51.407999999999994" width="4.548" height="5.064" fill="#B8A898" /><rect x="40.21" y="25.455" width="3.79" height="15.825" fill="#D8D0C8" /><path d="M38.31 3.3 L42.10 66.6" stroke="#F2C48E" stroke-width="1.90"/><path d="M6.1 38.11 L38.31 35.58" stroke="#F2C48E" stroke-width="1.90"/><path d="M6.1 6.46 L44.0 5.83" stroke="#F2C48E" stroke-width="1.71"/><path d="M28.839999999999996 15.96 L19.365 31.785 M17.47 55.20599999999999 L15.575 47.60999999999999" stroke="#A8B0C0" stroke-width="0.6"/><circle cx="28.84" cy="22.29" r="0.8" fill="#40A0E0"/><circle cx="20.12" cy="36.85" r="0.7" fill="#E060C0"/><rect x="39.073" y="3.3" width="4.927" height="5.064" fill="#3E6FB0" /><circle cx="39" cy="8" r="3" fill="none" stroke="#D86A20" stroke-width="0.9"/><ellipse cx="39.5" cy="37.5" rx="2.3" ry="4" fill="none" stroke="#D86A20" stroke-width="0.9"/><ellipse cx="18" cy="51" rx="2.3" ry="4" fill="none" stroke="#D86A20" stroke-width="0.9"/><path d="M64.4 11.9 H69.3 M69.9 11.9 H73.1 M74.0 11.9 H75.7 M76.8 11.9 H80.9 M81.8 11.9 H84.5" stroke="#F78B3D" stroke-width="0.8" stroke-dasharray="0.7 0.3 1.0 0.3" opacity="0.9"/><path d="M64.6 14.6 H70.5 M71.7 14.6 H75.0 M76.2 14.6 H78.1 M79.0 14.6 H82.5 M83.3 14.6 H84.5" stroke="#F2F2F2" stroke-width="0.8" stroke-dasharray="0.7 0.3 1.0 0.3" opacity="0.72"/><path d="M63.6 17.3 H68.9 M70.2 17.3 H74.0 M74.7 17.3 H76.7 M77.3 17.3 H79.4 M80.3 17.3 H82.4 M83.2 17.3 H84.5" stroke="#F2F2F2" stroke-width="0.8" stroke-dasharray="0.7 0.3 1.0 0.3" opacity="0.72"/><path d="M71.8 20.0 H74.6 M75.4 20.0 H78.9 M79.9 20.0 H82.2 M83.0 20.0 H84.5" stroke="#F2F2F2" stroke-width="0.8" stroke-dasharray="0.7 0.3 1.0 0.3" opacity="0.72"/><path d="M64.7 22.7 H69.5 M70.1 22.7 H75.5 M76.4 22.7 H82.1 M83.2 22.7 H84.5" stroke="#F2F2F2" stroke-width="0.8" stroke-dasharray="0.7 0.3 1.0 0.3" opacity="0.72"/></svg><svg style="left:1609px;top:552px" width="14" height="14" viewBox="0 0 14 14"><path d="M6.5 0.9 L8 4.8 L12.2 4.8 L8.8 7.4 L10.1 11.6 L6.5 9 L2.9 11.6 L4.2 7.4 L0.8 4.8 L5 4.8 Z" fill="#6A6A6A"/><path d="M-0.1 2.8 L1.1 4.4 L-0.1 4.6 Z M-0.1 6.9 L2.3 7.3 L1 8.5 L-0.1 8.5 Z" fill="#7A7A7A"/></svg>
<div class="abs" style="left:1665px;top:472px;width:92px;height:70px;border:1px solid #CFCFCF;background:#fff"></div>
<div class="abs" style="left:1667px;top:474px;width:90px;height:68px;background:#000"></div>
<svg style="left:1667px;top:474px" width="90" height="68" viewBox="0 0 90 68"><path d="M12.1 25 H31.7" stroke="#F78B3D" stroke-width="1.3" stroke-dasharray="1.2 0.3 0.7 0.3 2 0.4" opacity="0.9"/><path d="M37.3 65.5 L57.7 25.4" stroke="#F78B3D" stroke-width="2.3" stroke-linecap="round"/><path d="M45.5 58.9 L72.5 6.3" stroke="#F78B3D" stroke-width="3.0" stroke-linecap="round"/><path d="M47.2 39.5 L57.4 18.4" stroke="#F78B3D" stroke-width="1.8" stroke-linecap="round"/></svg><svg style="left:1745px;top:552px" width="14" height="14" viewBox="0 0 14 14"><path d="M6.5 0.9 L8 4.8 L12.2 4.8 L8.8 7.4 L10.1 11.6 L6.5 9 L2.9 11.6 L4.2 7.4 L0.8 4.8 L5 4.8 Z" fill="#6A6A6A"/><path d="M-0.1 2.8 L1.1 4.4 L-0.1 4.6 Z M-0.1 6.9 L2.3 7.3 L1 8.5 L-0.1 8.5 Z" fill="#7A7A7A"/></svg>
<div class="abs" style="left:33px;top:605px;width:92px;height:70px;border:1px solid #CFCFCF;background:#fff"></div>
<div class="abs" style="left:35px;top:607px;width:90px;height:68px;background:#000"></div>
<svg style="left:35px;top:607px" width="90" height="68" viewBox="0 0 90 68"><g transform="translate(2.5 0.8)"><clipPath id="c40"><path d="M1.4 29.5 Q4 21 8.1 19.1 Q14 14.5 19.1 14 Q24 12 28 12.1 Q35 13 38.3 16.9 Q41.5 20 41.3 25 L40.5 30.2 Q39.5 35 38.3 38.3 L32.4 47.2 Q29 52 25 54.6 Q20 56.5 16.2 55.7 Q12 54 11 51.6 Q9.5 47 9.5 41.3 L5.9 38.3 Q2 35 1.4 31.7 Z"/></clipPath><g clip-path="url(#c40)"><defs><linearGradient id="c40g" x1="0" y1="0" x2="0" y2="1"><stop offset="0" stop-color="#F0F4F8"/><stop offset="0.3" stop-color="#E0E4E8"/><stop offset="0.34" stop-color="#C8C0B8"/><stop offset="0.52" stop-color="#A89A8A"/><stop offset="0.56" stop-color="#6A6A70"/><stop offset="0.7" stop-color="#8A8A8A"/><stop offset="1" stop-color="#A8A8A8"/></linearGradient></defs><rect x="0" y="10" width="46" height="48" fill="url(#c40g)"/><rect x="29" y="12" width="14" height="24" fill="#D8C8A8" /><rect x="31" y="15" width="2" height="3" fill="#8A7A6A" /><rect x="31" y="21" width="2" height="3" fill="#8A7A6A" /><rect x="2" y="20" width="8" height="18" fill="#8A7E70" /><rect x="16" y="24" width="3" height="2" fill="#2A9A4A" /><rect x="16" y="27" width="3" height="3" fill="#C02828" /><rect x="38" y="28" width="3" height="2" fill="#C02828" /><rect x="19" y="32" width="2" height="7" fill="#2A2A3A" /></g><path d="M39.8 33.2 L49.8 43.5 M39.1 36.9 L47.2 48.7 M38.5 40 L44 45" stroke="#B0B0B0" stroke-width="0.7" opacity="0.75"/></g><path d="M53.7 16.7 H57.6 M58.4 16.7 H62.8 M63.9 16.7 H66.3 M67.5 16.7 H70.2 M71.3 16.7 H76.5 M77.5 16.7 H82.3 M82.9 16.7 H85.3" stroke="#F2F2F2" stroke-width="0.8" stroke-dasharray="0.7 0.3 1.0 0.3" opacity="0.72"/><path d="M53.0 19.4 H54.7 M55.9 19.4 H58.8 M59.6 19.4 H62.5 M63.7 19.4 H68.3 M69.2 19.4 H75.1 M76.0 19.4 H77.7 M78.9 19.4 H83.7 M84.5 19.4 H86.1" stroke="#F2F2F2" stroke-width="0.8" stroke-dasharray="0.7 0.3 1.0 0.3" opacity="0.72"/><path d="M73.2 22.1 H76.7 M78.0 22.1 H83.6 M84.3 22.1 H86.1" stroke="#F2F2F2" stroke-width="0.8" stroke-dasharray="0.7 0.3 1.0 0.3" opacity="0.72"/><path d="M53.7 24.8 H58.0 M59.0 24.8 H60.9 M61.9 24.8 H63.9 M65.1 24.8 H68.7 M69.3 24.8 H75.2 M76.5 24.8 H79.5 M80.7 24.8 H83.5 M84.5 24.8 H86.1" stroke="#F2F2F2" stroke-width="0.8" stroke-dasharray="0.7 0.3 1.0 0.3" opacity="0.72"/><path d="M55.1 27.5 H56.8 M57.5 27.5 H60.7 M61.9 27.5 H66.6 M67.3 27.5 H72.1 M72.8 27.5 H74.4 M75.3 27.5 H80.9 M82.2 27.5 H85.7" stroke="#F2F2F2" stroke-width="0.8" stroke-dasharray="0.7 0.3 1.0 0.3" opacity="0.72"/><path d="M54.8 30.3 H57.0 M58.2 30.3 H62.8 M63.5 30.3 H66.5 M67.7 30.3 H69.4 M70.1 30.3 H75.3 M76.0 30.3 H79.4 M80.3 30.3 H84.0 M84.8 30.3 H86.1" stroke="#F2F2F2" stroke-width="0.8" stroke-dasharray="0.7 0.3 1.0 0.3" opacity="0.72"/><path d="M68.8 33.0 H74.0 M75.0 33.0 H77.3 M78.4 33.0 H80.0 M80.9 33.0 H85.3" stroke="#F2F2F2" stroke-width="0.8" stroke-dasharray="0.7 0.3 1.0 0.3" opacity="0.72"/><path d="M54.4 35.7 H59.2 M60.1 35.7 H65.7 M66.7 35.7 H70.8 M71.6 35.7 H76.3 M77.3 35.7 H81.1 M81.9 35.7 H86.1" stroke="#F2F2F2" stroke-width="0.8" stroke-dasharray="0.7 0.3 1.0 0.3" opacity="0.72"/><path d="M77.6 41.1 H79.2 M80.2 41.1 H85.9" stroke="#F2F2F2" stroke-width="0.8" stroke-dasharray="0.7 0.3 1.0 0.3" opacity="0.72"/><path d="M54.5 43.8 H57.1 M57.8 43.8 H62.8 M63.8 43.8 H65.4 M66.6 43.8 H69.7 M70.4 43.8 H76.0 M76.9 43.8 H78.6 M79.7 43.8 H82.5 M83.5 43.8 H86.1" stroke="#F2F2F2" stroke-width="0.8" stroke-dasharray="0.7 0.3 1.0 0.3" opacity="0.72"/><path d="M73.9 46.5 H76.5 M77.5 46.5 H80.7 M81.7 46.5 H86.1" stroke="#F2F2F2" stroke-width="0.8" stroke-dasharray="0.7 0.3 1.0 0.3" opacity="0.72"/><path d="M52.8 49.2 H58.0 M59.0 49.2 H61.4 M62.5 49.2 H66.9 M67.6 49.2 H70.9 M71.5 49.2 H76.5 M77.8 49.2 H79.3 M80.4 49.2 H85.9" stroke="#F2F2F2" stroke-width="0.8" stroke-dasharray="0.7 0.3 1.0 0.3" opacity="0.72"/><path d="M53.3 52.0 H55.4 M56.4 52.0 H59.4 M60.4 52.0 H63.5 M64.3 52.0 H68.4 M69.1 52.0 H71.2 M72.3 52.0 H77.1 M77.8 52.0 H79.6 M80.5 52.0 H82.4 M83.6 52.0 H86.1" stroke="#F2F2F2" stroke-width="0.8" stroke-dasharray="0.7 0.3 1.0 0.3" opacity="0.72"/></svg><svg style="left:113px;top:685px" width="14" height="14" viewBox="0 0 14 14"><path d="M6.5 0.9 L8 4.8 L12.2 4.8 L8.8 7.4 L10.1 11.6 L6.5 9 L2.9 11.6 L4.2 7.4 L0.8 4.8 L5 4.8 Z" fill="#6A6A6A"/><path d="M-0.1 2.8 L1.1 4.4 L-0.1 4.6 Z M-0.1 6.9 L2.3 7.3 L1 8.5 L-0.1 8.5 Z" fill="#7A7A7A"/></svg>
<div class="abs" style="left:169px;top:605px;width:92px;height:70px;border:1px solid #CFCFCF;background:#fff"></div>
<div class="abs" style="left:171px;top:607px;width:90px;height:68px;background:#000"></div>
<svg style="left:171px;top:607px" width="90" height="68" viewBox="0 0 90 68"><path d="M12.5 25.2 H30.7" stroke="#F78B3D" stroke-width="1.3" stroke-dasharray="1.2 0.3 0.7 0.3 2 0.4" opacity="0.9"/><path d="M37.3 65.5 L57.7 25.4" stroke="#F78B3D" stroke-width="2.3" stroke-linecap="round"/><path d="M45.5 58.9 L72.5 6.3" stroke="#F78B3D" stroke-width="3.0" stroke-linecap="round"/><path d="M47.2 39.5 L57.4 18.4" stroke="#F78B3D" stroke-width="1.8" stroke-linecap="round"/></svg><svg style="left:249px;top:685px" width="14" height="14" viewBox="0 0 14 14"><path d="M6.5 0.9 L8 4.8 L12.2 4.8 L8.8 7.4 L10.1 11.6 L6.5 9 L2.9 11.6 L4.2 7.4 L0.8 4.8 L5 4.8 Z" fill="#6A6A6A"/><path d="M-0.1 2.8 L1.1 4.4 L-0.1 4.6 Z M-0.1 6.9 L2.3 7.3 L1 8.5 L-0.1 8.5 Z" fill="#7A7A7A"/></svg>
<div class="abs" style="left:305px;top:605px;width:92px;height:70px;border:1px solid #CFCFCF;background:#fff"></div>
<div class="abs" style="left:307px;top:607px;width:90px;height:68px;background:#000"></div>
<svg style="left:307px;top:607px" width="90" height="68" viewBox="0 0 90 68"><path d="M37.3 65.5 L57.7 25.4" stroke="#F78B3D" stroke-width="2.3" stroke-linecap="round"/><path d="M45.5 58.9 L72.5 6.3" stroke="#F78B3D" stroke-width="3.0" stroke-linecap="round"/><path d="M47.2 39.5 L57.4 18.4" stroke="#F78B3D" stroke-width="1.8" stroke-linecap="round"/><path d="M6.1 21.5 H11.0 M11.7 21.5 H13.9 M14.5 21.5 H19.4 M20.3 21.5 H24.5 M25.1 21.5 H27.0 M27.8 21.5 H32.0 M33.0 21.5 H36.4" stroke="#F2F2F2" stroke-width="0.8" stroke-dasharray="0.7 0.3 1.0 0.3" opacity="0.72"/><path d="M5.3 24.2 H8.8 M9.6 24.2 H15.0 M16.2 24.2 H18.4 M19.3 24.2 H22.0 M22.8 24.2 H27.7 M28.4 24.2 H31.6 M32.5 24.2 H35.5 M36.3 24.2 H36.4" stroke="#F2F2F2" stroke-width="0.8" stroke-dasharray="0.7 0.3 1.0 0.3" opacity="0.72"/><path d="M6.1 26.9 H11.7 M12.4 26.9 H15.2 M16.2 26.9 H21.7 M22.6 26.9 H25.0 M25.6 26.9 H30.1 M31.2 26.9 H36.4" stroke="#F2F2F2" stroke-width="0.8" stroke-dasharray="0.7 0.3 1.0 0.3" opacity="0.72"/><path d="M17.6 29.6 H20.4 M21.4 29.6 H24.5 M25.4 29.6 H27.8 M28.6 29.6 H34.3 M35.4 29.6 H36.4" stroke="#F2F2F2" stroke-width="0.8" stroke-dasharray="0.7 0.3 1.0 0.3" opacity="0.72"/><path d="M4.5 32.3 H6.7 M7.6 32.3 H13.6 M14.6 32.3 H18.6 M19.7 32.3 H25.0 M26.1 32.3 H28.7 M29.3 32.3 H32.2 M33.0 32.3 H35.4" stroke="#F2F2F2" stroke-width="0.8" stroke-dasharray="0.7 0.3 1.0 0.3" opacity="0.72"/><path d="M4.1 35.1 H7.0 M8.1 35.1 H11.4 M12.6 35.1 H16.2 M17.0 35.1 H19.6 M20.6 35.1 H23.3 M24.3 35.1 H29.8 M30.7 35.1 H33.2 M34.5 35.1 H36.4" stroke="#F2F2F2" stroke-width="0.8" stroke-dasharray="0.7 0.3 1.0 0.3" opacity="0.72"/><path d="M60.8 40.5 H63.5 M64.7 40.5 H69.2 M70.0 40.5 H73.9 M75.0 40.5 H78.4 M79.1 40.5 H83.0 M83.8 40.5 H86.8" stroke="#F2F2F2" stroke-width="0.8" stroke-dasharray="0.7 0.3 1.0 0.3" opacity="0.72"/><path d="M61.1 43.3 H63.4 M64.4 43.3 H67.7 M68.9 43.3 H71.8 M72.4 43.3 H75.0 M76.0 43.3 H78.4 M79.0 43.3 H81.2 M81.8 43.3 H86.5" stroke="#F2F2F2" stroke-width="0.8" stroke-dasharray="0.7 0.3 1.0 0.3" opacity="0.72"/><path d="M61.4 46.0 H63.4 M64.3 46.0 H70.3 M71.6 46.0 H74.5 M75.2 46.0 H79.2 M80.0 46.0 H82.9 M84.1 46.0 H86.4" stroke="#F2F2F2" stroke-width="0.8" stroke-dasharray="0.7 0.3 1.0 0.3" opacity="0.72"/><path d="M82.4 48.8 H86.6" stroke="#F2F2F2" stroke-width="0.8" stroke-dasharray="0.7 0.3 1.0 0.3" opacity="0.72"/><path d="M61.1 51.6 H65.8 M66.8 51.6 H69.8 M70.4 51.6 H73.8 M74.6 51.6 H78.2 M78.9 51.6 H83.5 M84.7 51.6 H86.8" stroke="#F2F2F2" stroke-width="0.8" stroke-dasharray="0.7 0.3 1.0 0.3" opacity="0.72"/><path d="M62.1 54.3 H66.1 M67.2 54.3 H69.8 M70.6 54.3 H72.2 M73.4 54.3 H77.2 M78.0 54.3 H80.2 M80.9 54.3 H83.3 M84.4 54.3 H86.2" stroke="#F2F2F2" stroke-width="0.8" stroke-dasharray="0.7 0.3 1.0 0.3" opacity="0.72"/></svg><svg style="left:385px;top:685px" width="14" height="14" viewBox="0 0 14 14"><path d="M6.5 0.9 L8 4.8 L12.2 4.8 L8.8 7.4 L10.1 11.6 L6.5 9 L2.9 11.6 L4.2 7.4 L0.8 4.8 L5 4.8 Z" fill="#6A6A6A"/><path d="M-0.1 2.8 L1.1 4.4 L-0.1 4.6 Z M-0.1 6.9 L2.3 7.3 L1 8.5 L-0.1 8.5 Z" fill="#7A7A7A"/></svg>
<div class="abs" style="left:441px;top:605px;width:92px;height:70px;border:1px solid #CFCFCF;background:#fff"></div>
<div class="abs" style="left:443px;top:607px;width:90px;height:68px;background:#000"></div>
<svg style="left:443px;top:607px" width="90" height="68" viewBox="0 0 90 68"><path d="M6.6 25.2 H31.5" stroke="#F78B3D" stroke-width="1.3" stroke-dasharray="1.2 0.3 0.7 0.3 2 0.4" opacity="0.9"/><path d="M37.3 65.5 L57.7 25.4" stroke="#F78B3D" stroke-width="2.3" stroke-linecap="round"/><path d="M45.5 58.9 L72.5 6.3" stroke="#F78B3D" stroke-width="3.0" stroke-linecap="round"/><path d="M47.2 39.5 L57.4 18.4" stroke="#F78B3D" stroke-width="1.8" stroke-linecap="round"/></svg><svg style="left:521px;top:685px" width="14" height="14" viewBox="0 0 14 14"><path d="M6.5 0.9 L8 4.8 L12.2 4.8 L8.8 7.4 L10.1 11.6 L6.5 9 L2.9 11.6 L4.2 7.4 L0.8 4.8 L5 4.8 Z" fill="#6A6A6A"/><path d="M-0.1 2.8 L1.1 4.4 L-0.1 4.6 Z M-0.1 6.9 L2.3 7.3 L1 8.5 L-0.1 8.5 Z" fill="#7A7A7A"/></svg>
<div class="abs" style="left:577px;top:605px;width:92px;height:70px;border:1px solid #CFCFCF;background:#fff"></div>
<div class="abs" style="left:579px;top:607px;width:90px;height:68px;background:#000"></div>
<svg style="left:579px;top:607px" width="90" height="68" viewBox="0 0 90 68"><rect x="2.9" y="2.8" width="32.2" height="61.7" fill="#F6F4F2" /><rect x="3.222" y="2.8" width="2.2540000000000004" height="5.553" fill="#F6EEB8" /><rect x="11.916000000000002" y="39.82" width="9.66" height="6.170000000000001" fill="#ECEAD2" /><rect x="22.864" y="50.926" width="3.8640000000000003" height="5.553" fill="#EEEED8" /><rect x="8.696" y="49.692" width="3.8640000000000003" height="4.936" fill="#B8A898" /><rect x="31.880000000000003" y="24.395" width="3.2200000000000006" height="15.425" fill="#D8D0C8" /><path d="M30.27 2.8 L33.49 64.5" stroke="#F2C48E" stroke-width="1.61"/><path d="M2.9 36.73 L30.27 34.27" stroke="#F2C48E" stroke-width="1.61"/><path d="M2.9 8.97 L35.1 8.35" stroke="#F2C48E" stroke-width="1.45"/><path d="M22.22 15.14 L14.17 30.565 M12.56 53.394 L10.950000000000001 45.989999999999995" stroke="#A8B0C0" stroke-width="0.6"/><circle cx="22.22" cy="21.31" r="0.8" fill="#40A0E0"/><circle cx="14.81" cy="35.50" r="0.7" fill="#E060C0"/><rect x="30.914" y="2.8" width="4.186000000000001" height="4.936" fill="#3E6FB0" /><path d="M37.3 65.5 L57.7 25.4" stroke="#F78B3D" stroke-width="2.3" stroke-linecap="round"/><path d="M45.5 58.9 L72.5 6.3" stroke="#F78B3D" stroke-width="3.0" stroke-linecap="round"/><path d="M47.2 39.5 L57.4 18.4" stroke="#F78B3D" stroke-width="1.8" stroke-linecap="round"/><path d="M63.3 37.8 H67.9 M68.6 37.8 H71.8 M72.6 37.8 H75.1 M76.1 37.8 H78.1 M79.2 37.8 H83.8 M84.6 37.8 H87.2" stroke="#F2F2F2" stroke-width="0.8" stroke-dasharray="0.7 0.3 1.0 0.3" opacity="0.72"/><path d="M62.8 40.5 H67.3 M68.1 40.5 H71.2 M72.0 40.5 H74.2 M75.1 40.5 H79.3 M80.1 40.5 H83.0 M84.2 40.5 H87.2" stroke="#F2F2F2" stroke-width="0.8" stroke-dasharray="0.7 0.3 1.0 0.3" opacity="0.72"/><path d="M80.0 43.2 H83.6 M84.9 43.2 H87.2" stroke="#F2F2F2" stroke-width="0.8" stroke-dasharray="0.7 0.3 1.0 0.3" opacity="0.72"/><path d="M63.8 45.9 H65.5 M66.6 45.9 H71.8 M72.7 45.9 H74.3 M75.4 45.9 H80.3 M81.3 45.9 H84.3 M85.5 45.9 H87.2" stroke="#F2F2F2" stroke-width="0.8" stroke-dasharray="0.7 0.3 1.0 0.3" opacity="0.72"/><path d="M77.3 48.6 H81.0 M82.3 48.6 H87.1" stroke="#F2F2F2" stroke-width="0.8" stroke-dasharray="0.7 0.3 1.0 0.3" opacity="0.72"/><path d="M63.1 51.4 H68.9 M70.1 51.4 H72.8 M73.4 51.4 H78.9 M79.9 51.4 H84.1 M85.1 51.4 H87.2" stroke="#F2F2F2" stroke-width="0.8" stroke-dasharray="0.7 0.3 1.0 0.3" opacity="0.72"/></svg><svg style="left:657px;top:685px" width="14" height="14" viewBox="0 0 14 14"><path d="M6.5 0.9 L8 4.8 L12.2 4.8 L8.8 7.4 L10.1 11.6 L6.5 9 L2.9 11.6 L4.2 7.4 L0.8 4.8 L5 4.8 Z" fill="#6A6A6A"/><path d="M-0.1 2.8 L1.1 4.4 L-0.1 4.6 Z M-0.1 6.9 L2.3 7.3 L1 8.5 L-0.1 8.5 Z" fill="#7A7A7A"/></svg>
<div class="abs" style="left:713px;top:605px;width:92px;height:70px;border:1px solid #CFCFCF;background:#fff"></div>
<div class="abs" style="left:715px;top:607px;width:90px;height:68px;background:#000"></div>
<svg style="left:715px;top:607px" width="90" height="68" viewBox="0 0 90 68"><rect x="3" y="2.8" width="36.4" height="61.7" fill="#F6F4F2" /><rect x="3.364" y="2.8" width="2.548" height="5.553" fill="#F6EEB8" /><rect x="13.192" y="39.82" width="10.92" height="6.170000000000001" fill="#ECEAD2" /><rect x="25.567999999999998" y="50.926" width="4.367999999999999" height="5.553" fill="#EEEED8" /><rect x="9.552" y="49.692" width="4.367999999999999" height="4.936" fill="#B8A898" /><rect x="35.76" y="24.395" width="3.64" height="15.425" fill="#D8D0C8" /><path d="M33.94 2.8 L37.58 64.5" stroke="#F2C48E" stroke-width="1.82"/><path d="M3 36.12 L33.94 33.65" stroke="#F2C48E" stroke-width="1.82"/><path d="M3 8.97 L39.4 8.35" stroke="#F2C48E" stroke-width="1.64"/><path d="M24.84 15.14 L15.739999999999998 30.565 M13.92 53.394 L12.1 45.989999999999995" stroke="#A8B0C0" stroke-width="0.6"/><circle cx="24.84" cy="21.31" r="0.8" fill="#40A0E0"/><circle cx="16.47" cy="35.50" r="0.7" fill="#E060C0"/><rect x="34.668" y="2.8" width="4.732" height="4.936" fill="#3E6FB0" /><circle cx="33.5" cy="9.3" r="3.4" fill="none" stroke="#D86A20" stroke-width="0.9"/><circle cx="35.5" cy="36.2" r="2.8" fill="none" stroke="#D86A20" stroke-width="0.9"/><path d="M50.7 8.0 H53.3 M54.2 8.0 H55.8 M56.7 8.0 H58.7 M59.9 8.0 H65.7 M66.9 8.0 H71.3 M72.5 8.0 H74.3 M75.1 8.0 H80.7 M81.4 8.0 H87.2" stroke="#F2F2F2" stroke-width="0.8" stroke-dasharray="0.7 0.3 1.0 0.3" opacity="0.72"/><path d="M50.7 10.7 H54.9 M55.6 10.7 H57.4 M58.0 10.7 H60.9 M61.8 10.7 H66.5 M67.4 10.7 H70.7 M71.3 10.7 H74.3 M75.5 10.7 H80.1 M81.4 10.7 H85.3 M86.2 10.7 H87.2" stroke="#F2F2F2" stroke-width="0.8" stroke-dasharray="0.7 0.3 1.0 0.3" opacity="0.72"/><path d="M68.6 13.4 H72.7 M73.4 13.4 H79.0 M80.2 13.4 H83.3 M84.3 13.4 H85.9 M86.9 13.4 H87.2" stroke="#F2F2F2" stroke-width="0.8" stroke-dasharray="0.7 0.3 1.0 0.3" opacity="0.72"/><path d="M50.7 16.1 H56.0 M56.7 16.1 H60.2 M60.9 16.1 H64.1 M65.3 16.1 H69.6 M70.2 16.1 H75.6 M76.6 16.1 H80.5 M81.3 16.1 H84.1 M84.8 16.1 H87.2" stroke="#F2F2F2" stroke-width="0.8" stroke-dasharray="0.7 0.3 1.0 0.3" opacity="0.72"/><path d="M49.1 18.8 H51.0 M52.1 18.8 H56.2 M57.0 18.8 H59.8 M60.7 18.8 H63.7 M64.9 18.8 H69.3 M70.3 18.8 H74.8 M75.7 18.8 H77.9 M78.5 18.8 H84.4 M85.6 18.8 H87.2" stroke="#F2F2F2" stroke-width="0.8" stroke-dasharray="0.7 0.3 1.0 0.3" opacity="0.72"/></svg><svg style="left:793px;top:685px" width="14" height="14" viewBox="0 0 14 14"><path d="M6.5 0.9 L8 4.8 L12.2 4.8 L8.8 7.4 L10.1 11.6 L6.5 9 L2.9 11.6 L4.2 7.4 L0.8 4.8 L5 4.8 Z" fill="#6A6A6A"/><path d="M-0.1 2.8 L1.1 4.4 L-0.1 4.6 Z M-0.1 6.9 L2.3 7.3 L1 8.5 L-0.1 8.5 Z" fill="#7A7A7A"/></svg>
<div class="abs" style="left:849px;top:605px;width:92px;height:70px;border:1px solid #CFCFCF;background:#fff"></div>
<div class="abs" style="left:851px;top:607px;width:90px;height:68px;background:#000"></div>
<svg style="left:851px;top:607px" width="90" height="68" viewBox="0 0 90 68"><rect x="4.1" y="3.3" width="37" height="61.8" fill="#F6F4F2" /><rect x="4.47" y="3.3" width="2.5900000000000003" height="5.561999999999999" fill="#F6EEB8" /><rect x="14.46" y="40.379999999999995" width="11.1" height="6.18" fill="#ECEAD2" /><rect x="27.04" y="51.504" width="4.4399999999999995" height="5.561999999999999" fill="#EEEED8" /><rect x="10.76" y="50.267999999999994" width="4.4399999999999995" height="4.944" fill="#B8A898" /><rect x="37.400000000000006" y="24.93" width="3.7" height="15.45" fill="#D8D0C8" /><path d="M36.66 3.3 L40.36 65.1" stroke="#F2C48E" stroke-width="1.85"/><path d="M4.1 58.92 L36.66 56.45" stroke="#F2C48E" stroke-width="1.85"/><path d="M4.1 9.48 L41.1 8.86" stroke="#F2C48E" stroke-width="1.67"/><path d="M26.299999999999997 15.66 L17.049999999999997 31.11 M15.2 53.97599999999999 L13.35 46.559999999999995" stroke="#A8B0C0" stroke-width="0.6"/><circle cx="26.30" cy="21.84" r="0.8" fill="#40A0E0"/><circle cx="17.79" cy="36.05" r="0.7" fill="#E060C0"/><rect x="36.29" y="3.3" width="4.8100000000000005" height="4.944" fill="#3E6FB0" /><path d="M12 27 L33 26 M12 34 L20 33 M25 35 L31 34 M10 49 L27 47 M32 34 L38 48" stroke="#8A40C0" stroke-width="1.3"/><path d="M14 27 L33 26 M33 36 L38 50" stroke="#F08A40" stroke-width="0.9"/><path d="M73.7 8 H81.3" stroke="#F78B3D" stroke-width="1" stroke-dasharray="1.2 0.3 0.7 0.3 2 0.4" opacity="0.9"/><path d="M59.5 15.7 H63.6 M64.8 15.7 H67.3 M68.3 15.7 H72.4 M73.7 15.7 H75.3 M76.0 15.7 H78.9 M80.1 15.7 H82.3" stroke="#F2F2F2" stroke-width="0.8" stroke-dasharray="0.7 0.3 1.0 0.3" opacity="0.72"/><path d="M67.8 18.4 H73.6 M74.9 18.4 H76.8 M78.1 18.4 H81.7" stroke="#F2F2F2" stroke-width="0.8" stroke-dasharray="0.7 0.3 1.0 0.3" opacity="0.72"/><path d="M59.3 21.1 H61.2 M62.3 21.1 H66.2 M66.9 21.1 H69.4 M70.4 21.1 H75.4 M76.2 21.1 H78.2 M79.0 21.1 H80.8 M81.7 21.1 H82.3" stroke="#F2F2F2" stroke-width="0.8" stroke-dasharray="0.7 0.3 1.0 0.3" opacity="0.72"/><path d="M59.6 23.8 H64.6 M65.4 23.8 H67.4 M68.2 23.8 H72.4 M73.5 23.8 H78.0 M78.7 23.8 H81.5 M82.1 23.8 H82.3" stroke="#F2F2F2" stroke-width="0.8" stroke-dasharray="0.7 0.3 1.0 0.3" opacity="0.72"/><path d="M58.8 26.5 H62.8 M63.8 26.5 H66.1 M67.1 26.5 H68.9 M69.6 26.5 H74.9 M75.6 26.5 H77.2 M78.3 26.5 H80.6 M81.4 26.5 H82.3" stroke="#F2F2F2" stroke-width="0.8" stroke-dasharray="0.7 0.3 1.0 0.3" opacity="0.72"/><path d="M79.6 29.3 H82.0" stroke="#F2F2F2" stroke-width="0.8" stroke-dasharray="0.7 0.3 1.0 0.3" opacity="0.72"/><rect x="60.8" y="41.7" width="9.1" height="7.1" fill="none" stroke="#E0782A" stroke-width="0.8"/><rect x="73.7" y="41.7" width="8.2" height="7.1" fill="none" stroke="#E0782A" stroke-width="0.8"/><path d="M62.5 43.5 L68 47" stroke="#7A40C0" stroke-width="1.5"/><path d="M75.5 43.5 L80 47" stroke="#E08040" stroke-width="1.2"/><path d="M62 52.6 H68" stroke="#F78B3D" stroke-width="0.8" stroke-dasharray="1.2 0.3 0.7 0.3 2 0.4" opacity="0.9"/><path d="M75 52.6 H80" stroke="#F78B3D" stroke-width="0.8" stroke-dasharray="1.2 0.3 0.7 0.3 2 0.4" opacity="0.9"/></svg><svg style="left:929px;top:685px" width="14" height="14" viewBox="0 0 14 14"><path d="M6.5 0.9 L8 4.8 L12.2 4.8 L8.8 7.4 L10.1 11.6 L6.5 9 L2.9 11.6 L4.2 7.4 L0.8 4.8 L5 4.8 Z" fill="#6A6A6A"/><path d="M-0.1 2.8 L1.1 4.4 L-0.1 4.6 Z M-0.1 6.9 L2.3 7.3 L1 8.5 L-0.1 8.5 Z" fill="#7A7A7A"/></svg>
<div class="abs" style="left:985px;top:605px;width:92px;height:70px;border:1px solid #CFCFCF;background:#fff"></div>
<div class="abs" style="left:987px;top:607px;width:90px;height:68px;background:#000"></div>
<svg style="left:987px;top:607px" width="90" height="68" viewBox="0 0 90 68"><rect x="3.5" y="3.3" width="36.7" height="61.2" fill="#F6F4F2" /><rect x="3.867" y="3.3" width="2.5690000000000004" height="5.508" fill="#F6EEB8" /><rect x="13.776000000000002" y="40.019999999999996" width="11.01" height="6.120000000000001" fill="#ECEAD2" /><rect x="26.254" y="51.036" width="4.404" height="5.508" fill="#EEEED8" /><rect x="10.106" y="49.812" width="4.404" height="4.896" fill="#B8A898" /><rect x="36.53" y="24.72" width="3.6700000000000004" height="15.3" fill="#D8D0C8" /><path d="M35.06 3.3 L38.73 64.5" stroke="#F2C48E" stroke-width="1.84"/><path d="M3.5 13.70 L40.2 13.09" stroke="#F2C48E" stroke-width="1.65"/><path d="M25.52 15.540000000000003 L16.345 30.840000000000003 M14.51 53.483999999999995 L12.675 46.13999999999999" stroke="#A8B0C0" stroke-width="0.6"/><circle cx="25.52" cy="21.66" r="0.8" fill="#40A0E0"/><circle cx="17.08" cy="35.74" r="0.7" fill="#E060C0"/><rect x="35.429" y="3.3" width="4.771000000000001" height="4.896" fill="#3E6FB0" /><path d="M8 36 L34 34 M8 36 L13 47 L28 55" stroke="#F08A40" stroke-width="0.9" fill="none"/><path d="M32 38 L31 42 M28 52 L29 55" stroke="#8A40C0" stroke-width="1.5"/><rect x="61" y="41.7" width="9" height="7.1" fill="none" stroke="#E0782A" stroke-width="0.8"/><rect x="73.8" y="41.7" width="8.2" height="7.1" fill="none" stroke="#E0782A" stroke-width="0.8"/><path d="M62.5 43.5 L68 47" stroke="#7A40C0" stroke-width="1.5"/><path d="M75.5 43.5 L80 47" stroke="#E08040" stroke-width="1.2"/><path d="M63 52.6 H69" stroke="#F78B3D" stroke-width="0.8" stroke-dasharray="1.2 0.3 0.7 0.3 2 0.4" opacity="0.9"/><path d="M75 52.6 H80" stroke="#F78B3D" stroke-width="0.8" stroke-dasharray="1.2 0.3 0.7 0.3 2 0.4" opacity="0.9"/></svg><svg style="left:1065px;top:685px" width="14" height="14" viewBox="0 0 14 14"><path d="M6.5 0.9 L8 4.8 L12.2 4.8 L8.8 7.4 L10.1 11.6 L6.5 9 L2.9 11.6 L4.2 7.4 L0.8 4.8 L5 4.8 Z" fill="#6A6A6A"/><path d="M-0.1 2.8 L1.1 4.4 L-0.1 4.6 Z M-0.1 6.9 L2.3 7.3 L1 8.5 L-0.1 8.5 Z" fill="#7A7A7A"/></svg>
<div class="abs" style="left:1121px;top:605px;width:92px;height:70px;border:1px solid #CFCFCF;background:#fff"></div>
<div class="abs" style="left:1123px;top:607px;width:90px;height:68px;background:#000"></div>
<svg style="left:1123px;top:607px" width="90" height="68" viewBox="0 0 90 68"><path d="M14.7 11.9 H18.7 M19.6 11.9 H24.7 M25.7 11.9 H30.4 M31.3 11.9 H33.5 M34.6 11.9 H39.1 M40.0 11.9 H42.5 M43.7 11.9 H47.7 M48.6 11.9 H52.2 M52.9 11.9 H56.3 M57.0 11.9 H61.5 M62.8 11.9 H64.5 M65.5 11.9 H71.2 M72.3 11.9 H74.2 M75.0 11.9 H77.7 M78.3 11.9 H83.8 M85.0 11.9 H86.3" stroke="#F2F2F2" stroke-width="0.8" stroke-dasharray="0.7 0.3 1.0 0.3" opacity="0.72"/><path d="M13.9 14.7 H16.3 M17.5 14.7 H22.8 M23.8 14.7 H25.4 M26.1 14.7 H30.2 M31.2 14.7 H35.8 M37.0 14.7 H39.5 M40.8 14.7 H44.4 M45.5 14.7 H50.5 M51.2 14.7 H52.7 M53.6 14.7 H56.9 M57.8 14.7 H62.9 M64.1 14.7 H68.5 M69.4 14.7 H73.6 M74.3 14.7 H77.5 M78.4 14.7 H84.1 M84.8 14.7 H86.3" stroke="#F2F2F2" stroke-width="0.8" stroke-dasharray="0.7 0.3 1.0 0.3" opacity="0.72"/><path d="M15.2 17.6 H17.4 M18.7 17.6 H23.1 M24.3 17.6 H28.9 M29.9 17.6 H33.9 M35.1 17.6 H39.2 M40.4 17.6 H45.1 M45.7 17.6 H49.2 M50.0 17.6 H54.4 M55.0 17.6 H59.9 M60.9 17.6 H63.9 M65.2 17.6 H69.6 M70.8 17.6 H74.3 M75.5 17.6 H79.0 M80.2 17.6 H85.8" stroke="#F2F2F2" stroke-width="0.8" stroke-dasharray="0.7 0.3 1.0 0.3" opacity="0.72"/><path d="M72.1 20.4 H77.4 M78.7 20.4 H82.9 M83.7 20.4 H86.3" stroke="#F2F2F2" stroke-width="0.8" stroke-dasharray="0.7 0.3 1.0 0.3" opacity="0.72"/><path d="M10.6 23.2 H14.0 M14.8 23.2 H16.4 M17.2 23.2 H23.1 M24.2 23.2 H26.0 M26.8 23.2 H32.5 M33.4 23.2 H38.3 M39.4 23.2 H41.2 M42.4 23.2 H47.7 M48.9 23.2 H50.9 M51.7 23.2 H54.6 M55.8 23.2 H59.8 M61.1 23.2 H66.1 M66.8 23.2 H70.9 M71.6 23.2 H76.8 M77.4 23.2 H80.1 M81.2 23.2 H86.3" stroke="#F2F2F2" stroke-width="0.8" stroke-dasharray="0.7 0.3 1.0 0.3" opacity="0.72"/><path d="M44.3 26.0 H49.2 M50.2 26.0 H54.0 M55.0 26.0 H57.9 M58.8 26.0 H61.7 M62.5 26.0 H68.4 M69.1 26.0 H73.5 M74.4 26.0 H78.5 M79.2 26.0 H80.9 M81.7 26.0 H83.7 M84.9 26.0 H86.3" stroke="#F2F2F2" stroke-width="0.8" stroke-dasharray="0.7 0.3 1.0 0.3" opacity="0.72"/><defs><linearGradient id="g48a" x1="0" y1="0" x2="0" y2="1"><stop offset="0" stop-color="#D8D8D0"/><stop offset="0.2" stop-color="#8A8A8A"/><stop offset="1" stop-color="#787878"/></linearGradient></defs><rect x="10.9" y="36.9" width="27.1" height="19.9" fill="url(#g48a)"/><rect x="10.9" y="37" width="6" height="8" fill="#A8A098" /><defs><linearGradient id="g48b" x1="0" y1="0" x2="0" y2="1"><stop offset="0" stop-color="#B0B0B0"/><stop offset="0.4" stop-color="#A08888"/><stop offset="1" stop-color="#A88080"/></linearGradient></defs><rect x="54.6" y="36.9" width="26.4" height="20.5" fill="url(#g48b)"/><path d="M54.6 57.4 L66 37 H70 L81 57.4 Z" fill="#B07A78" opacity="0.6"/><path d="M19 61.2 H29" stroke="#F78B3D" stroke-width="0.9" stroke-dasharray="1.2 0.3 0.7 0.3 2 0.4" opacity="0.9"/><path d="M63 61.2 H72" stroke="#F78B3D" stroke-width="0.9" stroke-dasharray="1.2 0.3 0.7 0.3 2 0.4" opacity="0.9"/></svg><svg style="left:1201px;top:685px" width="14" height="14" viewBox="0 0 14 14"><path d="M6.5 0.9 L8 4.8 L12.2 4.8 L8.8 7.4 L10.1 11.6 L6.5 9 L2.9 11.6 L4.2 7.4 L0.8 4.8 L5 4.8 Z" fill="#6A6A6A"/><path d="M-0.1 2.8 L1.1 4.4 L-0.1 4.6 Z M-0.1 6.9 L2.3 7.3 L1 8.5 L-0.1 8.5 Z" fill="#7A7A7A"/></svg>
<div class="abs" style="left:1257px;top:605px;width:92px;height:70px;border:1px solid #CFCFCF;background:#fff"></div>
<div class="abs" style="left:1259px;top:607px;width:90px;height:68px;background:#000"></div>
<svg style="left:1259px;top:607px" width="90" height="68" viewBox="0 0 90 68"><path d="M19.0 8.0 H24.7 M25.5 8.0 H29.5 M30.7 8.0 H35.2 M36.3 8.0 H39.1 M40.0 8.0 H41.7 M42.7 8.0 H45.2 M46.4 8.0 H49.2 M50.1 8.0 H51.7 M52.8 8.0 H54.7 M55.8 8.0 H58.8 M59.7 8.0 H64.1 M65.4 8.0 H69.6 M70.3 8.0 H73.6 M74.6 8.0 H78.9 M79.9 8.0 H85.5 M86.5 8.0 H87.1" stroke="#F2F2F2" stroke-width="0.8" stroke-dasharray="0.7 0.3 1.0 0.3" opacity="0.82"/><path d="M74.5 10.6 H77.5 M78.5 10.6 H84.3 M85.3 10.6 H87.1" stroke="#F2F2F2" stroke-width="0.8" stroke-dasharray="0.7 0.3 1.0 0.3" opacity="0.82"/><path d="M19.4 13.2 H25.0 M26.1 13.2 H27.7 M29.0 13.2 H30.5 M31.8 13.2 H37.1 M38.4 13.2 H41.2 M41.9 13.2 H46.5 M47.6 13.2 H49.4 M50.6 13.2 H55.9 M56.8 13.2 H61.7 M62.5 13.2 H66.2 M67.0 13.2 H70.0 M70.7 13.2 H75.4 M76.4 13.2 H79.9 M80.6 13.2 H85.1 M85.8 13.2 H87.1" stroke="#F2F2F2" stroke-width="0.8" stroke-dasharray="0.7 0.3 1.0 0.3" opacity="0.82"/><path d="M19.0 15.8 H23.0 M23.6 15.8 H25.9 M26.8 15.8 H28.8 M30.0 15.8 H32.0 M33.0 15.8 H37.9 M39.2 15.8 H41.1 M42.2 15.8 H45.3 M46.4 15.8 H51.0 M51.9 15.8 H54.0 M55.1 15.8 H60.0 M61.0 15.8 H66.3 M67.0 15.8 H71.5 M72.5 15.8 H75.1 M75.8 15.8 H80.0 M80.8 15.8 H84.2 M85.5 15.8 H87.1" stroke="#F2F2F2" stroke-width="0.8" stroke-dasharray="0.7 0.3 1.0 0.3" opacity="0.82"/><path d="M46.0 18.4 H47.6 M48.2 18.4 H50.1 M51.0 18.4 H56.9 M58.1 18.4 H62.2 M63.4 18.4 H68.2 M69.4 18.4 H72.0 M72.7 18.4 H75.2 M76.4 18.4 H81.9 M82.9 18.4 H85.1 M85.9 18.4 H87.1" stroke="#F2F2F2" stroke-width="0.8" stroke-dasharray="0.7 0.3 1.0 0.3" opacity="0.82"/><path d="M16.6 21.0 H21.9 M23.0 21.0 H25.9 M26.7 21.0 H29.2 M29.9 21.0 H31.5 M32.2 21.0 H37.9 M38.8 21.0 H44.7 M45.6 21.0 H48.4 M49.2 21.0 H52.8 M53.8 21.0 H56.6 M57.7 21.0 H59.3 M60.4 21.0 H62.8 M63.5 21.0 H68.7 M69.8 21.0 H72.3 M73.0 21.0 H77.7 M79.0 21.0 H80.9 M82.2 21.0 H87.1" stroke="#F2F2F2" stroke-width="0.8" stroke-dasharray="0.7 0.3 1.0 0.3" opacity="0.82"/><path d="M20.7 23.6 H25.3 M26.2 23.6 H28.9 M30.2 23.6 H32.3 M33.1 23.6 H37.1 M38.4 23.6 H40.2 M40.8 23.6 H42.7 M43.5 23.6 H46.5 M47.4 23.6 H50.5 M51.2 23.6 H55.2 M56.0 23.6 H58.8 M59.4 23.6 H61.2 M62.2 23.6 H65.5 M66.6 23.6 H72.2 M73.3 23.6 H75.4 M76.5 23.6 H80.9 M82.0 23.6 H83.6 M84.4 23.6 H87.1" stroke="#F2F2F2" stroke-width="0.8" stroke-dasharray="0.7 0.3 1.0 0.3" opacity="0.82"/><path d="M75.0 26.2 H80.8 M82.0 26.2 H84.5 M85.1 26.2 H87.1" stroke="#F2F2F2" stroke-width="0.8" stroke-dasharray="0.7 0.3 1.0 0.3" opacity="0.82"/><path d="M15.9 28.8 H18.6 M19.7 28.8 H22.9 M23.6 28.8 H27.8 M28.8 28.8 H30.4 M31.1 28.8 H34.0 M34.9 28.8 H38.5 M39.5 28.8 H41.9 M42.7 28.8 H44.8 M45.4 28.8 H49.7 M50.4 28.8 H55.2 M56.2 28.8 H58.4 M59.2 28.8 H64.9 M65.6 28.8 H70.2 M71.2 28.8 H75.5 M76.8 28.8 H80.5 M81.3 28.8 H86.9" stroke="#F2F2F2" stroke-width="0.8" stroke-dasharray="0.7 0.3 1.0 0.3" opacity="0.82"/><path d="M19.9 31.4 H23.2 M24.5 31.4 H28.8 M29.7 31.4 H35.7 M36.5 31.4 H42.2 M43.0 31.4 H47.9 M48.6 31.4 H50.5 M51.8 31.4 H57.1 M58.0 31.4 H60.5 M61.6 31.4 H66.2 M66.8 31.4 H71.8 M72.9 31.4 H76.1 M76.7 31.4 H78.2 M79.1 31.4 H82.0 M82.7 31.4 H87.1" stroke="#F2F2F2" stroke-width="0.8" stroke-dasharray="0.7 0.3 1.0 0.3" opacity="0.82"/><path d="M52.6 34.0 H54.9 M55.6 34.0 H61.4 M62.2 34.0 H65.0 M65.8 34.0 H69.7 M70.4 34.0 H72.0 M73.0 34.0 H78.9 M80.1 34.0 H85.0 M86.1 34.0 H87.1" stroke="#F2F2F2" stroke-width="0.8" stroke-dasharray="0.7 0.3 1.0 0.3" opacity="0.82"/><path d="M19.1 36.6 H22.2 M23.1 36.6 H25.0 M26.1 36.6 H30.0 M30.7 36.6 H35.8 M36.7 36.6 H41.8 M43.1 36.6 H47.7 M48.6 36.6 H51.1 M51.9 36.6 H54.4 M55.6 36.6 H58.5 M59.5 36.6 H63.5 M64.6 36.6 H68.1 M69.2 36.6 H74.2 M75.2 36.6 H77.7 M78.6 36.6 H80.5 M81.7 36.6 H87.0" stroke="#F2F2F2" stroke-width="0.8" stroke-dasharray="0.7 0.3 1.0 0.3" opacity="0.82"/><path d="M20.3 39.2 H22.5 M23.5 39.2 H25.5 M26.5 39.2 H31.2 M32.5 39.2 H37.0 M37.9 39.2 H41.5 M42.7 39.2 H47.4 M48.4 39.2 H51.0 M52.1 39.2 H53.7 M54.8 39.2 H60.5 M61.7 39.2 H64.7 M65.9 39.2 H69.5 M70.7 39.2 H74.1 M75.1 39.2 H81.1 M81.9 39.2 H85.2 M86.1 39.2 H87.1" stroke="#F2F2F2" stroke-width="0.8" stroke-dasharray="0.7 0.3 1.0 0.3" opacity="0.82"/><path d="M20.4 41.8 H25.3 M26.5 41.8 H29.4 M30.4 41.8 H32.1 M33.2 41.8 H38.9 M39.9 41.8 H43.0 M43.7 41.8 H46.7 M47.6 41.8 H50.2 M51.0 41.8 H54.8 M55.5 41.8 H58.8 M59.5 41.8 H64.8 M66.1 41.8 H68.2 M69.2 41.8 H73.8 M74.8 41.8 H80.6 M81.3 41.8 H85.6 M86.4 41.8 H87.1" stroke="#F2F2F2" stroke-width="0.8" stroke-dasharray="0.7 0.3 1.0 0.3" opacity="0.82"/><path d="M15.8 44.4 H17.8 M18.9 44.4 H22.9 M23.6 44.4 H26.6 M27.3 44.4 H29.0 M30.1 44.4 H35.4 M36.3 44.4 H39.0 M40.3 44.4 H45.2 M45.9 44.4 H47.5 M48.5 44.4 H51.1 M52.1 44.4 H54.2 M55.4 44.4 H58.8 M59.8 44.4 H65.7 M67.0 44.4 H69.8 M70.4 44.4 H76.0 M76.7 44.4 H80.0 M81.0 44.4 H84.4 M85.4 44.4 H87.1" stroke="#F2F2F2" stroke-width="0.8" stroke-dasharray="0.7 0.3 1.0 0.3" opacity="0.82"/></svg><svg style="left:1337px;top:685px" width="14" height="14" viewBox="0 0 14 14"><path d="M6.5 0.9 L8 4.8 L12.2 4.8 L8.8 7.4 L10.1 11.6 L6.5 9 L2.9 11.6 L4.2 7.4 L0.8 4.8 L5 4.8 Z" fill="#6A6A6A"/><path d="M-0.1 2.8 L1.1 4.4 L-0.1 4.6 Z M-0.1 6.9 L2.3 7.3 L1 8.5 L-0.1 8.5 Z" fill="#7A7A7A"/></svg>
<div class="abs" style="left:1393px;top:605px;width:92px;height:70px;border:1px solid #CFCFCF;background:#fff"></div>
<div class="abs" style="left:1395px;top:607px;width:90px;height:68px;background:#000"></div>
<svg style="left:1395px;top:607px" width="90" height="68" viewBox="0 0 90 68"><path d="M7.7 25.2 H31.6" stroke="#F78B3D" stroke-width="1.3" stroke-dasharray="1.2 0.3 0.7 0.3 2 0.4" opacity="0.9"/><path d="M37.3 65.5 L57.7 25.4" stroke="#F78B3D" stroke-width="2.3" stroke-linecap="round"/><path d="M45.5 58.9 L72.5 6.3" stroke="#F78B3D" stroke-width="3.0" stroke-linecap="round"/><path d="M47.2 39.5 L57.4 18.4" stroke="#F78B3D" stroke-width="1.8" stroke-linecap="round"/></svg><svg style="left:1473px;top:685px" width="14" height="14" viewBox="0 0 14 14"><path d="M6.5 0.9 L8 4.8 L12.2 4.8 L8.8 7.4 L10.1 11.6 L6.5 9 L2.9 11.6 L4.2 7.4 L0.8 4.8 L5 4.8 Z" fill="#6A6A6A"/><path d="M-0.1 2.8 L1.1 4.4 L-0.1 4.6 Z M-0.1 6.9 L2.3 7.3 L1 8.5 L-0.1 8.5 Z" fill="#7A7A7A"/></svg>
<div class="abs" style="left:1529px;top:605px;width:92px;height:70px;border:1px solid #CFCFCF;background:#fff"></div>
<div class="abs" style="left:1531px;top:607px;width:90px;height:68px;background:#000"></div>
<svg style="left:1531px;top:607px" width="90" height="68" viewBox="0 0 90 68"><rect x="24.9" y="2.8" width="37.4" height="62.3" fill="#F6F4F2" /><rect x="25.273999999999997" y="2.8" width="2.6180000000000003" height="5.606999999999999" fill="#F6EEB8" /><rect x="35.372" y="40.17999999999999" width="11.219999999999999" height="6.23" fill="#ECEAD2" /><rect x="48.087999999999994" y="51.394" width="4.4879999999999995" height="5.606999999999999" fill="#EEEED8" /><rect x="31.631999999999998" y="50.147999999999996" width="4.4879999999999995" height="4.984" fill="#B8A898" /><rect x="58.559999999999995" y="24.604999999999997" width="3.74" height="15.575" fill="#D8D0C8" /><path d="M55.94 2.8 L59.68 65.1" stroke="#F2C48E" stroke-width="1.87"/><path d="M24.9 37.69 L55.94 35.20" stroke="#F2C48E" stroke-width="1.87"/><path d="M24.9 9.03 L62.3 8.41" stroke="#F2C48E" stroke-width="1.68"/><path d="M47.339999999999996 15.260000000000002 L37.989999999999995 30.835 M36.12 53.88599999999999 L34.25 46.40999999999999" stroke="#A8B0C0" stroke-width="0.6"/><circle cx="47.34" cy="21.49" r="0.8" fill="#40A0E0"/><circle cx="38.74" cy="35.82" r="0.7" fill="#E060C0"/><rect x="57.437999999999995" y="2.8" width="4.862" height="4.984" fill="#3E6FB0" /></svg><svg style="left:1609px;top:685px" width="14" height="14" viewBox="0 0 14 14"><path d="M6.5 0.9 L8 4.8 L12.2 4.8 L8.8 7.4 L10.1 11.6 L6.5 9 L2.9 11.6 L4.2 7.4 L0.8 4.8 L5 4.8 Z" fill="#6A6A6A"/><path d="M-0.1 2.8 L1.1 4.4 L-0.1 4.6 Z M-0.1 6.9 L2.3 7.3 L1 8.5 L-0.1 8.5 Z" fill="#7A7A7A"/></svg>
<div class="abs" style="left:1665px;top:605px;width:92px;height:70px;border:1px solid #CFCFCF;background:#fff"></div>
<div class="abs" style="left:1667px;top:607px;width:90px;height:68px;background:#000"></div>
<svg style="left:1667px;top:607px" width="90" height="68" viewBox="0 0 90 68"><rect x="3.6" y="2.9" width="38.1" height="63.1" fill="#F6F4F2" /><rect x="3.981" y="2.9" width="2.6670000000000003" height="5.679" fill="#F6EEB8" /><rect x="14.268" y="40.76" width="11.43" height="6.3100000000000005" fill="#ECEAD2" /><rect x="27.222" y="52.118" width="4.572" height="5.679" fill="#EEEED8" /><rect x="10.458" y="50.856" width="4.572" height="5.048" fill="#B8A898" /><rect x="37.89" y="24.985" width="3.8100000000000005" height="15.775" fill="#D8D0C8" /><path d="M39.03 2.9 L42.84 66.0" stroke="#F2C48E" stroke-width="1.91"/><path d="M3.6 55.90 L39.03 53.38" stroke="#F2C48E" stroke-width="1.91"/><path d="M3.6 9.21 L41.7 8.58" stroke="#F2C48E" stroke-width="1.71"/><path d="M26.46 15.520000000000001 L16.935 31.294999999999998 M15.03 54.641999999999996 L13.125 47.07" stroke="#A8B0C0" stroke-width="0.6"/><circle cx="26.46" cy="21.83" r="0.8" fill="#40A0E0"/><circle cx="17.70" cy="36.34" r="0.7" fill="#E060C0"/><rect x="36.747" y="2.9" width="4.953" height="5.048" fill="#3E6FB0" /><circle cx="28.5" cy="15" r="7.2" fill="none" stroke="#D06A28" stroke-width="0.9"/><rect x="15" y="31.5" width="8" height="4.5" fill="none" stroke="#D06A28" stroke-width="1.1"/><ellipse cx="16.5" cy="28.5" rx="2.6" ry="1.6" fill="none" stroke="#D06A28" stroke-width="1.1"/><rect x="5" y="48" width="4.5" height="7.5" fill="none" stroke="#D06A28" stroke-width="1.1"/><ellipse cx="7" cy="39" rx="2.6" ry="3" fill="none" stroke="#D06A28" stroke-width="1"/><ellipse cx="37.5" cy="39" rx="2" ry="4.5" fill="none" stroke="#D06A28" stroke-width="1"/><ellipse cx="11" cy="58" rx="1.2" ry="4" fill="none" stroke="#D06A28" stroke-width="1"/><rect x="66" y="8.1" width="9.2" height="10.3" fill="none" stroke="#E0782A" stroke-width="0.8"/><rect x="77.1" y="8.1" width="10" height="10.3" fill="none" stroke="#E0782A" stroke-width="0.8"/><rect x="66" y="21" width="9.2" height="10" fill="none" stroke="#E0782A" stroke-width="0.8"/><rect x="77.1" y="21" width="10" height="10" fill="none" stroke="#E0782A" stroke-width="0.8"/><rect x="66" y="33.2" width="9.2" height="9.9" fill="none" stroke="#E0782A" stroke-width="0.8"/><rect x="77.1" y="33.2" width="10" height="9.9" fill="none" stroke="#E0782A" stroke-width="0.8"/><rect x="66" y="46.1" width="9.2" height="10" fill="none" stroke="#E0782A" stroke-width="0.8"/><rect x="77.1" y="46.1" width="10" height="10" fill="none" stroke="#E0782A" stroke-width="0.8"/><ellipse cx="70.6" cy="13.2" rx="1.8" ry="2.6" fill="none" stroke="#E0782A" stroke-width="0.7"/><ellipse cx="82" cy="13.2" rx="2.5" ry="2" fill="none" stroke="#E0782A" stroke-width="1.2"/><rect x="68.5" y="24" width="4.5" height="3.5" fill="none" stroke="#E0782A" stroke-width="1"/><circle cx="82" cy="26" r="2" fill="none" stroke="#E0782A" stroke-width="0.8"/><rect x="68.5" y="36" width="4.5" height="3.5" fill="none" stroke="#E0782A" stroke-width="0.7"/><path d="M82 35.5 L84 40 H80 Z" fill="none" stroke="#E0782A" stroke-width="0.7"/><ellipse cx="70.6" cy="51" rx="0.9" ry="3.2" fill="none" stroke="#E0782A" stroke-width="0.7"/><circle cx="82" cy="51" r="2.3" fill="none" stroke="#E0782A" stroke-width="0.9"/></svg><svg style="left:1745px;top:685px" width="14" height="14" viewBox="0 0 14 14"><path d="M6.5 0.9 L8 4.8 L12.2 4.8 L8.8 7.4 L10.1 11.6 L6.5 9 L2.9 11.6 L4.2 7.4 L0.8 4.8 L5 4.8 Z" fill="#6A6A6A"/><path d="M-0.1 2.8 L1.1 4.4 L-0.1 4.6 Z M-0.1 6.9 L2.3 7.3 L1 8.5 L-0.1 8.5 Z" fill="#7A7A7A"/></svg>
<div class="abs" style="left:33px;top:738px;width:92px;height:70px;border:1px solid #CFCFCF;background:#fff"></div>
<div class="abs" style="left:35px;top:740px;width:90px;height:68px;background:#000"></div>
<svg style="left:35px;top:740px" width="90" height="68" viewBox="0 0 90 68"><rect x="3.3" y="3.3" width="36.8" height="61.8" fill="#F6F4F2" /><rect x="3.6679999999999997" y="3.3" width="2.576" height="5.561999999999999" fill="#F6EEB8" /><rect x="13.604" y="40.379999999999995" width="11.04" height="6.18" fill="#ECEAD2" /><rect x="26.116" y="51.504" width="4.4159999999999995" height="5.561999999999999" fill="#EEEED8" /><rect x="9.924" y="50.267999999999994" width="4.4159999999999995" height="4.944" fill="#B8A898" /><rect x="36.419999999999995" y="24.93" width="3.6799999999999997" height="15.45" fill="#D8D0C8" /><path d="M36.42 3.3 L40.10 65.1" stroke="#F2C48E" stroke-width="1.84"/><path d="M3.3 14.42 L36.42 11.95" stroke="#F2C48E" stroke-width="1.84"/><path d="M3.3 14.42 L40.099999999999994 13.81" stroke="#F2C48E" stroke-width="1.66"/><path d="M25.38 15.66 L16.18 31.11 M14.34 53.97599999999999 L12.5 46.559999999999995" stroke="#A8B0C0" stroke-width="0.6"/><circle cx="25.38" cy="21.84" r="0.8" fill="#40A0E0"/><circle cx="16.92" cy="36.05" r="0.7" fill="#E060C0"/><rect x="35.315999999999995" y="3.3" width="4.784" height="4.944" fill="#3E6FB0" /><rect x="3.5" y="20" width="18" height="8" fill="#F6F0D8" /><rect x="9" y="23" width="8" height="4" fill="none" stroke="#D06A28" stroke-width="1.1"/><circle cx="31" cy="23" r="2" fill="none" stroke="#D06A28" stroke-width="1.3"/><circle cx="27.5" cy="42" r="4" fill="none" stroke="#D06A28" stroke-width="0.8"/><rect x="18" y="50" width="7.5" height="5" fill="none" stroke="#D06A28" stroke-width="0.9"/><circle cx="38" cy="55" r="2.5" fill="none" stroke="#D06A28" stroke-width="0.9"/><rect x="66" y="8.1" width="9.2" height="10" fill="none" stroke="#E0782A" stroke-width="0.8"/><rect x="77.1" y="8.1" width="9.6" height="10" fill="none" stroke="#E0782A" stroke-width="0.8"/><rect x="66" y="21" width="9.2" height="9.6" fill="none" stroke="#E0782A" stroke-width="0.8"/><rect x="77.1" y="21" width="9.6" height="9.6" fill="none" stroke="#E0782A" stroke-width="0.8"/><rect x="66" y="33.4" width="9.2" height="9.6" fill="none" stroke="#E0782A" stroke-width="0.8"/><rect x="77.1" y="33.4" width="9.6" height="9.6" fill="none" stroke="#E0782A" stroke-width="0.8"/><ellipse cx="70.6" cy="13" rx="1.8" ry="2.5" fill="none" stroke="#E0782A" stroke-width="0.7"/><ellipse cx="82" cy="13" rx="2.5" ry="2" fill="none" stroke="#E0782A" stroke-width="1.2"/><rect x="68.5" y="24" width="4.5" height="3.5" fill="none" stroke="#E0782A" stroke-width="1"/><circle cx="82" cy="25.8" r="2" fill="none" stroke="#E0782A" stroke-width="0.8"/><rect x="68.5" y="36.5" width="4.5" height="3.5" fill="none" stroke="#E0782A" stroke-width="0.7"/><path d="M82 35.5 L84 40 H80 Z" fill="none" stroke="#E0782A" stroke-width="0.7"/></svg><svg style="left:113px;top:818px" width="14" height="14" viewBox="0 0 14 14"><path d="M6.5 0.9 L8 4.8 L12.2 4.8 L8.8 7.4 L10.1 11.6 L6.5 9 L2.9 11.6 L4.2 7.4 L0.8 4.8 L5 4.8 Z" fill="#6A6A6A"/><path d="M-0.1 2.8 L1.1 4.4 L-0.1 4.6 Z M-0.1 6.9 L2.3 7.3 L1 8.5 L-0.1 8.5 Z" fill="#7A7A7A"/></svg>
<div class="abs" style="left:169px;top:738px;width:92px;height:70px;border:1px solid #CFCFCF;background:#fff"></div>
<div class="abs" style="left:171px;top:740px;width:90px;height:68px;background:#000"></div>
<svg style="left:171px;top:740px" width="90" height="68" viewBox="0 0 90 68"><path d="M37.3 65.5 L57.7 25.4" stroke="#F78B3D" stroke-width="2.3" stroke-linecap="round"/><path d="M45.5 58.9 L72.5 6.3" stroke="#F78B3D" stroke-width="3.0" stroke-linecap="round"/><path d="M47.2 39.5 L57.4 18.4" stroke="#F78B3D" stroke-width="1.8" stroke-linecap="round"/><path d="M70 18.7 H86.3" stroke="#F78B3D" stroke-width="1" stroke-dasharray="1.2 0.3 0.7 0.3 2 0.4" opacity="0.9"/><path d="M11.6 30.5 H14.5 M15.7 30.5 H19.4 M20.1 30.5 H23.1 M24.2 30.5 H29.7 M31.0 30.5 H33.4 M34.2 30.5 H37.9 M39.0 30.5 H42.2" stroke="#F2F2F2" stroke-width="0.8" stroke-dasharray="0.7 0.3 1.0 0.3" opacity="0.72"/><path d="M33.0 33.2 H38.7 M39.5 33.2 H41.6" stroke="#F2F2F2" stroke-width="0.8" stroke-dasharray="0.7 0.3 1.0 0.3" opacity="0.72"/><path d="M12.1 35.9 H14.8 M15.7 35.9 H21.3 M22.2 35.9 H23.7 M24.5 35.9 H27.0 M27.6 35.9 H33.2 M34.3 35.9 H36.4 M37.2 35.9 H42.2" stroke="#F2F2F2" stroke-width="0.8" stroke-dasharray="0.7 0.3 1.0 0.3" opacity="0.72"/><path d="M11.6 38.6 H15.7 M17.0 38.6 H19.6 M20.6 38.6 H22.2 M23.1 38.6 H25.7 M26.5 38.6 H29.8 M30.7 38.6 H36.2 M37.1 38.6 H38.7 M39.9 38.6 H42.2" stroke="#F2F2F2" stroke-width="0.8" stroke-dasharray="0.7 0.3 1.0 0.3" opacity="0.72"/><path d="M12.0 41.3 H15.1 M16.2 41.3 H18.1 M18.7 41.3 H22.5 M23.3 41.3 H26.9 M27.6 41.3 H33.4 M34.4 41.3 H37.4 M38.2 41.3 H41.0 M42.1 41.3 H42.2" stroke="#F2F2F2" stroke-width="0.8" stroke-dasharray="0.7 0.3 1.0 0.3" opacity="0.72"/><path d="M22.6 44.1 H25.8 M26.7 44.1 H28.8 M29.7 44.1 H33.4 M34.6 44.1 H38.7 M39.3 44.1 H42.2" stroke="#F2F2F2" stroke-width="0.8" stroke-dasharray="0.7 0.3 1.0 0.3" opacity="0.72"/><path d="M10.7 46.8 H16.0 M17.0 46.8 H21.4 M22.3 46.8 H25.1 M26.3 46.8 H31.2 M32.2 46.8 H37.9 M39.1 46.8 H42.2" stroke="#F2F2F2" stroke-width="0.8" stroke-dasharray="0.7 0.3 1.0 0.3" opacity="0.72"/></svg><svg style="left:249px;top:818px" width="14" height="14" viewBox="0 0 14 14"><path d="M6.5 0.9 L8 4.8 L12.2 4.8 L8.8 7.4 L10.1 11.6 L6.5 9 L2.9 11.6 L4.2 7.4 L0.8 4.8 L5 4.8 Z" fill="#6A6A6A"/><path d="M-0.1 2.8 L1.1 4.4 L-0.1 4.6 Z M-0.1 6.9 L2.3 7.3 L1 8.5 L-0.1 8.5 Z" fill="#7A7A7A"/></svg>
<div class="abs" style="left:305px;top:738px;width:92px;height:70px;border:1px solid #CFCFCF;background:#fff"></div>
<div class="abs" style="left:307px;top:740px;width:90px;height:68px;background:#000"></div>
<svg style="left:307px;top:740px" width="90" height="68" viewBox="0 0 90 68"><clipPath id="c55"><path d="M1.4 29.5 Q4 21 8.1 19.1 Q14 14.5 19.1 14 Q24 12 28 12.1 Q35 13 38.3 16.9 Q41.5 20 41.3 25 L40.5 30.2 Q39.5 35 38.3 38.3 L32.4 47.2 Q29 52 25 54.6 Q20 56.5 16.2 55.7 Q12 54 11 51.6 Q9.5 47 9.5 41.3 L5.9 38.3 Q2 35 1.4 31.7 Z"/></clipPath><g clip-path="url(#c55)"><defs><linearGradient id="c55g" x1="0" y1="0" x2="0" y2="1"><stop offset="0" stop-color="#7AA8E4"/><stop offset="0.3" stop-color="#B8CCE0"/><stop offset="0.36" stop-color="#9A8A68"/><stop offset="0.45" stop-color="#6A6A48"/><stop offset="0.62" stop-color="#4E5E3A"/><stop offset="0.7" stop-color="#A8A890"/><stop offset="0.76" stop-color="#7A9A5A"/><stop offset="0.84" stop-color="#6A8A50"/><stop offset="0.88" stop-color="#4A8AB0"/><stop offset="1" stop-color="#5A6A70"/></linearGradient></defs><rect x="0" y="10" width="46" height="48" fill="url(#c55g)"/><rect x="20.6" y="15.5" width="7.4" height="13.2" fill="#B8A88A" /><rect x="22" y="17" width="4" height="9" fill="#D8D0C0" /><rect x="12" y="26" width="28" height="4" fill="#8A7A5A" /><rect x="6" y="30" width="8" height="8" fill="#5A6A40" /></g><path d="M39.8 33.2 L49.8 43.5 M39.1 36.9 L47.2 48.7 M38.5 40 L44 45" stroke="#B0B0B0" stroke-width="0.7" opacity="0.75"/><path d="M64.0 16.7 H66.4 M67.7 16.7 H70.6 M71.2 16.7 H73.5 M74.2 16.7 H79.8 M81.1 16.7 H85.1" stroke="#F2F2F2" stroke-width="0.8" stroke-dasharray="0.7 0.3 1.0 0.3" opacity="0.72"/><path d="M78.5 19.4 H81.5 M82.7 19.4 H85.1" stroke="#F2F2F2" stroke-width="0.8" stroke-dasharray="0.7 0.3 1.0 0.3" opacity="0.72"/><path d="M65.6 22.1 H68.3 M69.5 22.1 H73.4 M74.0 22.1 H77.6 M78.3 22.1 H81.5 M82.2 22.1 H85.1" stroke="#F2F2F2" stroke-width="0.8" stroke-dasharray="0.7 0.3 1.0 0.3" opacity="0.72"/><path d="M65.3 24.8 H67.7 M68.4 24.8 H71.4 M72.0 24.8 H77.3 M78.1 24.8 H81.1 M82.1 24.8 H84.7" stroke="#F2F2F2" stroke-width="0.8" stroke-dasharray="0.7 0.3 1.0 0.3" opacity="0.72"/><path d="M65.4 27.5 H68.3 M69.0 27.5 H71.5 M72.5 27.5 H77.7 M78.8 27.5 H84.0 M85.1 27.5 H85.1" stroke="#F2F2F2" stroke-width="0.8" stroke-dasharray="0.7 0.3 1.0 0.3" opacity="0.72"/></svg><svg style="left:385px;top:818px" width="14" height="14" viewBox="0 0 14 14"><path d="M6.5 0.9 L8 4.8 L12.2 4.8 L8.8 7.4 L10.1 11.6 L6.5 9 L2.9 11.6 L4.2 7.4 L0.8 4.8 L5 4.8 Z" fill="#6A6A6A"/><path d="M-0.1 2.8 L1.1 4.4 L-0.1 4.6 Z M-0.1 6.9 L2.3 7.3 L1 8.5 L-0.1 8.5 Z" fill="#7A7A7A"/></svg>
<div class="abs" style="left:441px;top:738px;width:92px;height:70px;border:1px solid #CFCFCF;background:#fff"></div>
<div class="abs" style="left:443px;top:740px;width:90px;height:68px;background:#000"></div>
<svg style="left:443px;top:740px" width="90" height="68" viewBox="0 0 90 68"><path d="M3.7 25.2 H31.5" stroke="#F78B3D" stroke-width="1.3" stroke-dasharray="1.2 0.3 0.7 0.3 2 0.4" opacity="0.9"/><path d="M37.3 65.5 L57.7 25.4" stroke="#F78B3D" stroke-width="2.3" stroke-linecap="round"/><path d="M45.5 58.9 L72.5 6.3" stroke="#F78B3D" stroke-width="3.0" stroke-linecap="round"/><path d="M47.2 39.5 L57.4 18.4" stroke="#F78B3D" stroke-width="1.8" stroke-linecap="round"/></svg><svg style="left:521px;top:818px" width="14" height="14" viewBox="0 0 14 14"><path d="M6.5 0.9 L8 4.8 L12.2 4.8 L8.8 7.4 L10.1 11.6 L6.5 9 L2.9 11.6 L4.2 7.4 L0.8 4.8 L5 4.8 Z" fill="#6A6A6A"/><path d="M-0.1 2.8 L1.1 4.4 L-0.1 4.6 Z M-0.1 6.9 L2.3 7.3 L1 8.5 L-0.1 8.5 Z" fill="#7A7A7A"/></svg>
<div class="abs" style="left:577px;top:738px;width:92px;height:70px;border:1px solid #CFCFCF;background:#fff"></div>
<div class="abs" style="left:579px;top:740px;width:90px;height:68px;background:#000"></div>
<svg style="left:579px;top:740px" width="90" height="68" viewBox="0 0 90 68"><clipPath id="c57"><path d="M51 0 H84.9 Q90 4 89.6 7.6 L89.1 36.1 Q88.5 42 86.5 42.5 L76.4 40.9 L80.6 33 L74.8 37.2 L66.4 36.6 L64.3 33.5 L70.6 34 L74.8 28.7 L68 15.5 L63.2 21.8 L58.4 30.8 L51.6 22.4 L48.9 27.1 Q45 20 46.3 12.9 Q47 5 51 0 Z"/></clipPath><g clip-path="url(#c57)"><defs><linearGradient id="g57" x1="0" y1="0" x2="0" y2="1"><stop offset="0" stop-color="#6A9AE0"/><stop offset="0.3" stop-color="#9AB8E0"/><stop offset="0.38" stop-color="#E8E8E8"/><stop offset="0.5" stop-color="#B8B0A8"/><stop offset="0.62" stop-color="#A8A8A8"/><stop offset="1" stop-color="#B4B4B4"/></linearGradient></defs><rect x="44" y="0" width="46" height="44" fill="url(#g57)"/><rect x="45" y="0" width="11" height="22" fill="#D8C8A0" /><rect x="51" y="0" width="3" height="16" fill="#7AA0B8" /><rect x="74" y="8" width="16" height="20" fill="#A8A098" /><rect x="81.5" y="9" width="1.5" height="5" fill="#2A9A4A" /><rect x="81.5" y="16" width="1.5" height="3" fill="#C02828" /><rect x="80" y="25" width="5" height="3" fill="#C88060" /></g><path d="M7.7 5.2 H12.0 M12.7 5.2 H15.7 M16.6 5.2 H22.5 M23.4 5.2 H28.7 M29.5 5.2 H34.9 M35.7 5.2 H41.3 M42.1 5.2 H44.1" stroke="#F2F2F2" stroke-width="0.8" stroke-dasharray="0.7 0.3 1.0 0.3" opacity="0.72"/><path d="M21.7 8.0 H25.6 M26.8 8.0 H31.1 M32.1 8.0 H34.2 M35.2 8.0 H37.4 M38.4 8.0 H41.8 M43.0 8.0 H44.1" stroke="#F2F2F2" stroke-width="0.8" stroke-dasharray="0.7 0.3 1.0 0.3" opacity="0.72"/><path d="M7.3 10.7 H9.8 M11.1 10.7 H16.4 M17.3 10.7 H19.8 M20.7 10.7 H25.0 M26.0 10.7 H31.7 M32.3 10.7 H35.4 M36.3 10.7 H38.0 M39.0 10.7 H43.0 M43.8 10.7 H44.1" stroke="#F2F2F2" stroke-width="0.8" stroke-dasharray="0.7 0.3 1.0 0.3" opacity="0.72"/><path d="M7.7 13.5 H11.9 M12.7 13.5 H16.3 M17.0 13.5 H18.8 M19.9 13.5 H22.6 M23.3 13.5 H26.0 M26.9 13.5 H29.0 M30.1 13.5 H34.9 M36.2 13.5 H37.8 M38.7 13.5 H43.2" stroke="#F2F2F2" stroke-width="0.8" stroke-dasharray="0.7 0.3 1.0 0.3" opacity="0.72"/><path d="M8.1 16.3 H13.5 M14.1 16.3 H18.1 M18.7 16.3 H20.9 M22.0 16.3 H25.5 M26.8 16.3 H32.5 M33.4 16.3 H37.3 M38.2 16.3 H40.4 M41.3 16.3 H44.1" stroke="#F2F2F2" stroke-width="0.8" stroke-dasharray="0.7 0.3 1.0 0.3" opacity="0.72"/><path d="M6.4 19.0 H8.5 M9.2 19.0 H15.1 M15.9 19.0 H18.0 M19.2 19.0 H24.1 M25.3 19.0 H30.7 M31.4 19.0 H35.5 M36.5 19.0 H39.2 M40.3 19.0 H43.4" stroke="#F2F2F2" stroke-width="0.8" stroke-dasharray="0.7 0.3 1.0 0.3" opacity="0.72"/><path d="M31.9 21.8 H34.3 M35.4 21.8 H38.5 M39.4 21.8 H42.8 M43.8 21.8 H44.1" stroke="#F2F2F2" stroke-width="0.8" stroke-dasharray="0.7 0.3 1.0 0.3" opacity="0.72"/><path d="M7.3 24.6 H9.3 M10.0 24.6 H15.3 M15.9 24.6 H18.6 M19.6 24.6 H21.1 M22.1 24.6 H27.6 M28.7 24.6 H33.4 M34.5 24.6 H38.8 M39.4 24.6 H41.1 M42.2 24.6 H44.1" stroke="#F2F2F2" stroke-width="0.8" stroke-dasharray="0.7 0.3 1.0 0.3" opacity="0.72"/><path d="M6.6 27.3 H9.2 M9.8 27.3 H13.8 M14.4 27.3 H18.9 M19.7 27.3 H24.3 M25.4 27.3 H31.2 M32.2 27.3 H35.8 M36.5 27.3 H39.2 M39.8 27.3 H44.1" stroke="#F2F2F2" stroke-width="0.8" stroke-dasharray="0.7 0.3 1.0 0.3" opacity="0.72"/><path d="M6.6 30.1 H8.1 M9.1 30.1 H11.4 M12.5 30.1 H14.6 M15.7 30.1 H20.8 M21.8 30.1 H25.7 M26.6 30.1 H31.3 M32.2 30.1 H37.6 M38.3 30.1 H40.4 M41.4 30.1 H43.7" stroke="#F2F2F2" stroke-width="0.8" stroke-dasharray="0.7 0.3 1.0 0.3" opacity="0.72"/><path d="M6.9 32.9 H12.8 M13.5 32.9 H16.2 M17.0 32.9 H20.1 M21.1 32.9 H25.0 M25.8 32.9 H31.4 M32.1 32.9 H35.1 M36.3 32.9 H41.1 M42.2 32.9 H44.1" stroke="#F2F2F2" stroke-width="0.8" stroke-dasharray="0.7 0.3 1.0 0.3" opacity="0.72"/></svg><svg style="left:657px;top:818px" width="14" height="14" viewBox="0 0 14 14"><path d="M6.5 0.9 L8 4.8 L12.2 4.8 L8.8 7.4 L10.1 11.6 L6.5 9 L2.9 11.6 L4.2 7.4 L0.8 4.8 L5 4.8 Z" fill="#6A6A6A"/><path d="M-0.1 2.8 L1.1 4.4 L-0.1 4.6 Z M-0.1 6.9 L2.3 7.3 L1 8.5 L-0.1 8.5 Z" fill="#7A7A7A"/></svg>
<div class="abs" style="left:713px;top:738px;width:92px;height:70px;border:1px solid #CFCFCF;background:#fff"></div>
<div class="abs" style="left:715px;top:740px;width:90px;height:68px;background:#000"></div>
<svg style="left:715px;top:740px" width="90" height="68" viewBox="0 0 90 68"><path d="M37.3 65.5 L57.7 25.4" stroke="#F78B3D" stroke-width="2.3" stroke-linecap="round"/><path d="M45.5 58.9 L72.5 6.3" stroke="#F78B3D" stroke-width="3.0" stroke-linecap="round"/><path d="M47.2 39.5 L57.4 18.4" stroke="#F78B3D" stroke-width="1.8" stroke-linecap="round"/><path d="M69 32.1 H81.5" stroke="#F78B3D" stroke-width="1" stroke-dasharray="1.2 0.3 0.7 0.3 2 0.4" opacity="0.9"/><path d="M7.3 17.6 H12.2 M13.4 17.6 H15.8 M16.6 17.6 H19.9 M21.2 17.6 H26.3 M27.1 17.6 H30.6 M31.6 17.6 H34.4 M35.4 17.6 H37.0 M37.7 17.6 H41.3" stroke="#F2F2F2" stroke-width="0.8" stroke-dasharray="0.7 0.3 1.0 0.3" opacity="0.72"/><path d="M6.0 20.4 H10.5 M11.1 20.4 H16.1 M17.3 20.4 H20.1 M20.9 20.4 H23.7 M24.4 20.4 H28.6 M29.4 20.4 H34.0 M34.6 20.4 H37.0 M37.7 20.4 H39.8 M41.0 20.4 H41.3" stroke="#F2F2F2" stroke-width="0.8" stroke-dasharray="0.7 0.3 1.0 0.3" opacity="0.72"/><path d="M6.0 23.1 H7.9 M8.8 23.1 H13.4 M14.2 23.1 H19.9 M21.2 23.1 H25.3 M26.0 23.1 H28.7 M29.6 23.1 H32.0 M32.8 23.1 H37.1 M37.7 23.1 H41.3" stroke="#F2F2F2" stroke-width="0.8" stroke-dasharray="0.7 0.3 1.0 0.3" opacity="0.72"/><path d="M23.3 25.9 H27.9 M28.8 25.9 H33.5 M34.2 25.9 H40.0 M41.2 25.9 H41.3" stroke="#F2F2F2" stroke-width="0.8" stroke-dasharray="0.7 0.3 1.0 0.3" opacity="0.72"/><path d="M7.8 28.7 H9.6 M10.3 28.7 H12.1 M13.4 28.7 H17.1 M18.1 28.7 H22.8 M23.6 28.7 H27.3 M28.4 28.7 H32.6 M33.4 28.7 H35.2 M36.4 28.7 H41.3" stroke="#F2F2F2" stroke-width="0.8" stroke-dasharray="0.7 0.3 1.0 0.3" opacity="0.72"/><path d="M7.5 31.4 H9.9 M10.7 31.4 H16.0 M16.8 31.4 H21.7 M22.8 31.4 H26.5 M27.3 31.4 H33.2 M34.2 31.4 H39.1 M39.8 31.4 H41.3" stroke="#F2F2F2" stroke-width="0.8" stroke-dasharray="0.7 0.3 1.0 0.3" opacity="0.72"/><path d="M6.9 34.2 H10.2 M11.4 34.2 H15.2 M16.2 34.2 H19.4 M20.0 34.2 H23.9 M24.9 34.2 H29.7 M30.6 34.2 H35.7 M36.9 34.2 H38.7 M39.4 34.2 H41.3" stroke="#F2F2F2" stroke-width="0.8" stroke-dasharray="0.7 0.3 1.0 0.3" opacity="0.72"/><path d="M21.9 37.0 H26.0 M27.2 37.0 H32.1 M33.4 37.0 H36.6 M37.3 37.0 H41.3" stroke="#F2F2F2" stroke-width="0.8" stroke-dasharray="0.7 0.3 1.0 0.3" opacity="0.72"/><path d="M6.4 39.7 H10.7 M11.6 39.7 H15.6 M16.8 39.7 H22.7 M23.8 39.7 H27.8 M28.4 39.7 H31.2 M32.2 39.7 H34.3 M35.5 39.7 H39.0 M39.6 39.7 H41.3" stroke="#F2F2F2" stroke-width="0.8" stroke-dasharray="0.7 0.3 1.0 0.3" opacity="0.72"/><path d="M7.1 42.5 H9.1 M10.0 42.5 H15.9 M16.5 42.5 H18.6 M19.4 42.5 H22.8 M23.5 42.5 H28.3 M29.1 42.5 H34.3 M35.2 42.5 H38.4 M39.6 42.5 H41.3" stroke="#F2F2F2" stroke-width="0.8" stroke-dasharray="0.7 0.3 1.0 0.3" opacity="0.72"/><path d="M17.9 45.3 H20.1 M21.0 45.3 H26.8 M27.9 45.3 H33.9 M34.9 45.3 H38.7 M40.0 45.3 H41.3" stroke="#F2F2F2" stroke-width="0.8" stroke-dasharray="0.7 0.3 1.0 0.3" opacity="0.72"/></svg><svg style="left:793px;top:818px" width="14" height="14" viewBox="0 0 14 14"><path d="M6.5 0.9 L8 4.8 L12.2 4.8 L8.8 7.4 L10.1 11.6 L6.5 9 L2.9 11.6 L4.2 7.4 L0.8 4.8 L5 4.8 Z" fill="#6A6A6A"/><path d="M-0.1 2.8 L1.1 4.4 L-0.1 4.6 Z M-0.1 6.9 L2.3 7.3 L1 8.5 L-0.1 8.5 Z" fill="#7A7A7A"/></svg>
<div class="abs" style="left:849px;top:738px;width:92px;height:70px;border:1px solid #CFCFCF;background:#fff"></div>
<div class="abs" style="left:851px;top:740px;width:90px;height:68px;background:#000"></div>
<svg style="left:851px;top:740px" width="90" height="68" viewBox="0 0 90 68"><rect x="8.6" y="15.4" width="26" height="15.2" fill="#8A7A70" /><rect x="8.6" y="15.4" width="11" height="15.2" fill="#5A4A42" /><rect x="19" y="15.4" width="5" height="6" fill="#B06060" /><rect x="24" y="15.4" width="10.6" height="5" fill="#98B8E0" /><rect x="20" y="21" width="10" height="7" fill="#D8D8D4" /><rect x="26" y="19" width="8" height="4" fill="#B8A070" /><path d="M28 26 H34.6 V30.6 H24 Z" fill="#1A1A1A"/><rect x="25" y="34.5" width="20.1" height="20.4" fill="#8A8078" /><rect x="37" y="34.5" width="8.1" height="9" fill="#E0E4E8" /><path d="M25 34.5 H36 L34 50 H25 Z" fill="#7A6A5A"/><rect x="31" y="38" width="6" height="14" fill="#9A9088" /><rect x="31" y="42" width="4" height="2" fill="#B03030" /><rect x="25" y="51" width="20.1" height="3.9" fill="#A8A8A8" /><rect x="49" y="44.4" width="20" height="19.8" fill="#C8B890" /><rect x="49" y="44.4" width="3" height="8" fill="#5A88C8" /><rect x="52" y="44.4" width="17" height="5" fill="#E8E0D0" /><rect x="56" y="49" width="13" height="8" fill="#B8A070" /><rect x="60" y="52" width="2" height="5" fill="#4A5A4A" /><path d="M49 57 L69 56 V64.2 H49 Z" fill="#CACACA"/><path d="M68.9 9.7 H86.2" stroke="#F78B3D" stroke-width="1" stroke-dasharray="1.2 0.3 0.7 0.3 2 0.4" opacity="0.9"/><path d="M43.5 12.7 H86.2" stroke="#EEE" stroke-width="0.9" stroke-dasharray="1.2 0.3 0.7 0.3 2 0.4" opacity="0.6"/><path d="M78 15.7 H86.2" stroke="#EEE" stroke-width="0.9" stroke-dasharray="1.2 0.3 0.7 0.3 2 0.4" opacity="0.6"/></svg><svg style="left:929px;top:818px" width="14" height="14" viewBox="0 0 14 14"><path d="M6.5 0.9 L8 4.8 L12.2 4.8 L8.8 7.4 L10.1 11.6 L6.5 9 L2.9 11.6 L4.2 7.4 L0.8 4.8 L5 4.8 Z" fill="#6A6A6A"/><path d="M-0.1 2.8 L1.1 4.4 L-0.1 4.6 Z M-0.1 6.9 L2.3 7.3 L1 8.5 L-0.1 8.5 Z" fill="#7A7A7A"/></svg>
<div class="abs" style="left:985px;top:738px;width:92px;height:70px;border:1px solid #CFCFCF;background:#fff"></div>
<div class="abs" style="left:987px;top:740px;width:90px;height:68px;background:#000"></div>
<svg style="left:987px;top:740px" width="90" height="68" viewBox="0 0 90 68"><rect x="8.9" y="18.2" width="14" height="19.4" fill="#A89078" /><rect x="8.9" y="18.2" width="14" height="4.8" fill="#D8CCB8" /><path d="M8.9 26 L19 23 V37.6 H8.9 Z" fill="#B8A490"/><rect x="19" y="18.2" width="3.9" height="19.4" fill="#E0A020" /><rect x="20" y="24" width="1.6" height="2" fill="#3A2A20" /><rect x="29.1" y="18.2" width="14.6" height="19.9" fill="#9A9A9A" /><rect x="31" y="18.2" width="12.7" height="8.5" fill="#F4F4F4" /><rect x="29.1" y="18.2" width="2" height="19.9" fill="#8A8A8A" /><rect x="31.5" y="18.2" width="1.2" height="19.9" fill="#3A3A3A" /><rect x="34" y="25" width="9.7" height="5" fill="#A09880" /><rect x="36" y="30" width="6" height="4" fill="#4A4A4A" /><rect x="48.3" y="18.2" width="14.7" height="19.9" fill="#A6A6A6" /><rect x="48.3" y="18.2" width="14.7" height="6" fill="#B8B0A8" /><rect x="49" y="19" width="5" height="3" fill="#7A7A80" /><rect x="55.5" y="19" width="1.3" height="3" fill="#D02828" /><rect x="58" y="19" width="5" height="5" fill="#7A8A5A" /><rect x="50" y="23" width="1.5" height="3" fill="#3A5A9A" /><rect x="68" y="18.2" width="16" height="21.6" fill="#A4A4A4" /><rect x="68" y="18.2" width="16" height="6" fill="#6AA0E0" /><rect x="68" y="18.2" width="3" height="10" fill="#D8C8A0" /><rect x="80" y="22" width="4" height="6" fill="#A89878" /><rect x="70" y="24" width="12" height="3" fill="#E8E8E8" /><rect x="70" y="27" width="14" height="2" fill="#8A8A8A" /></svg><svg style="left:1065px;top:818px" width="14" height="14" viewBox="0 0 14 14"><path d="M6.5 0.9 L8 4.8 L12.2 4.8 L8.8 7.4 L10.1 11.6 L6.5 9 L2.9 11.6 L4.2 7.4 L0.8 4.8 L5 4.8 Z" fill="#6A6A6A"/><path d="M-0.1 2.8 L1.1 4.4 L-0.1 4.6 Z M-0.1 6.9 L2.3 7.3 L1 8.5 L-0.1 8.5 Z" fill="#7A7A7A"/></svg>

<span class="tx" style="left:24.01px;top:48.80px;font-size:15px;line-height:15px;color:#FFFFFF;transform:scaleX(0.9856);">File</span>
<span class="tx" style="left:89.67px;top:48.30px;font-size:15px;line-height:15px;color:#C43E1C;transform:scaleX(1.0344);">Home</span>
<span class="tx" style="left:159.04px;top:48.30px;font-size:15px;line-height:15px;color:#FFFFFF;transform:scaleX(0.9639);">Insert</span>
<span class="tx" style="left:223.99px;top:48.30px;font-size:15px;line-height:15px;color:#FFFFFF;transform:scaleX(1.0143);">Design</span>
<span class="tx" style="left:300.00px;top:48.30px;font-size:15px;line-height:15px;color:#FFFFFF;transform:scaleX(0.9682);">Transitions</span>
<span class="tx" style="left:399.00px;top:48.30px;font-size:15px;line-height:15px;color:#FFFFFF;transform:scaleX(1.0176);">Animations</span>
<span class="tx" style="left:503.20px;top:48.30px;font-size:15px;line-height:15px;color:#FFFFFF;transform:scaleX(0.9639);">Slide Show</span>
<span class="tx" style="left:604.03px;top:48.30px;font-size:15px;line-height:15px;color:#FFFFFF;transform:scaleX(0.9721);">Review</span>
<span class="tx" style="left:681.20px;top:48.30px;font-size:15px;line-height:15px;color:#FFFFFF;transform:scaleX(0.9812);">View</span>
<span class="tx" style="left:741.05px;top:48.30px;font-size:15px;line-height:15px;color:#FFFFFF;transform:scaleX(0.9506);">Foxit Reader PDF</span>
<span class="tx" style="left:905.80px;top:48.30px;font-size:15px;line-height:15px;color:#EDC3B5;transform:scaleX(1.0039);">Tell me what you want to do...</span>
<span class="tx" style="left:1774.40px;top:48.30px;font-size:15px;line-height:15px;color:#FFFFFF;transform:scaleX(0.9754);">Sign in</span>
<span class="tx" style="left:1859.40px;top:48.30px;font-size:15px;line-height:15px;color:#FFFFFF;transform:scaleX(0.9147);">Share</span>
<span class="tx" style="left:1038.69px;top:13.85px;font-size:14px;line-height:14px;color:#FFFFFF;transform:scaleX(1.0141);">PowerPoint</span>
<span class="tx" style="left:11.57px;top:122.33px;font-size:14.5px;line-height:14.5px;color:#A6A6A6;transform:scaleX(0.9302);">Paste</span>
<span class="tx" style="left:80.20px;top:81.73px;font-size:14.5px;line-height:14.5px;color:#444444;transform:scaleX(0.9540);">Cut</span>
<span class="tx" style="left:80.20px;top:109.13px;font-size:14.5px;line-height:14.5px;color:#444444;transform:scaleX(0.9538);">Copy</span>
<span class="tx" style="left:79.40px;top:137.23px;font-size:14.5px;line-height:14.5px;color:#444444;transform:scaleX(1.0035);">Format Painter</span>
<span class="tx" style="left:55.50px;top:165.50px;font-size:13px;line-height:13px;color:#666666;transform:scaleX(1.0286);">Clipboard</span>
<span class="tx" style="left:201.68px;top:122.33px;font-size:14.5px;line-height:14.5px;color:#444444;transform:scaleX(1.0163);">New</span>
<span class="tx" style="left:195.50px;top:142.13px;font-size:14.5px;line-height:14.5px;color:#444444;transform:scaleX(0.9945);">Slide</span>
<span class="tx" style="left:267.38px;top:81.73px;font-size:14.5px;line-height:14.5px;color:#444444;transform:scaleX(1.0163);">Layout</span>
<span class="tx" style="left:267.43px;top:109.43px;font-size:14.5px;line-height:14.5px;color:#444444;transform:scaleX(0.9661);">Reset</span>
<span class="tx" style="left:268.60px;top:137.33px;font-size:14.5px;line-height:14.5px;color:#444444;transform:scaleX(0.9938);">Section</span>
<span class="tx" style="left:246.00px;top:165.50px;font-size:13px;line-height:13px;color:#666666;transform:scaleX(0.9330);">Slides</span>
<span class="tx" style="left:447.54px;top:165.90px;font-size:13px;line-height:13px;color:#666666;transform:scaleX(0.9567);">Font</span>
<span class="tx" style="left:856.20px;top:81.73px;font-size:14.5px;line-height:14.5px;color:#A6A6A6;transform:scaleX(1.0516);">Text Direction</span>
<span class="tx" style="left:856.00px;top:109.43px;font-size:14.5px;line-height:14.5px;color:#A6A6A6;transform:scaleX(1.0344);">Align Text</span>
<span class="tx" style="left:856.20px;top:137.73px;font-size:14.5px;line-height:14.5px;color:#A6A6A6;transform:scaleX(1.0289);">Convert to SmartArt</span>
<span class="tx" style="left:764.49px;top:165.80px;font-size:13px;line-height:13px;color:#666666;transform:scaleX(1.0121);">Paragraph</span>
<span class="tx" style="left:1184.20px;top:122.73px;font-size:14.5px;line-height:14.5px;color:#444444;transform:scaleX(1.0171);">Arrange</span>
<span class="tx" style="left:1248.20px;top:122.73px;font-size:14.5px;line-height:14.5px;color:#A6A6A6;transform:scaleX(0.9838);">Quick</span>
<span class="tx" style="left:1242.90px;top:142.33px;font-size:14.5px;line-height:14.5px;color:#A6A6A6;transform:scaleX(0.9456);">Styles</span>
<span class="tx" style="left:1319.80px;top:80.43px;font-size:14.5px;line-height:14.5px;color:#A6A6A6;transform:scaleX(0.9680);">Shape Fill</span>
<span class="tx" style="left:1319.80px;top:107.13px;font-size:14.5px;line-height:14.5px;color:#A6A6A6;">Shape Outline</span>
<span class="tx" style="left:1319.80px;top:134.23px;font-size:14.5px;line-height:14.5px;color:#A6A6A6;transform:scaleX(0.9826);">Shape Effects</span>
<span class="tx" style="left:1186.49px;top:165.30px;font-size:13px;line-height:13px;color:#666666;transform:scaleX(1.0139);">Drawing</span>
<span class="tx" style="left:1461.72px;top:80.43px;font-size:14.5px;line-height:14.5px;color:#444444;transform:scaleX(0.9837);">Find</span>
<span class="tx" style="left:1461.71px;top:107.43px;font-size:14.5px;line-height:14.5px;color:#444444;transform:scaleX(0.9936);">Replace</span>
<span class="tx" style="left:1462.70px;top:134.33px;font-size:14.5px;line-height:14.5px;color:#444444;transform:scaleX(0.9659);">Select</span>
<span class="tx" style="left:1465.58px;top:165.50px;font-size:13px;line-height:13px;color:#666666;transform:scaleX(1.0177);">Editing</span>
<span class="tx" style="left:171.60px;top:284.41px;font-size:17px;line-height:17px;color:#4E4E4E;">2</span>
<span class="tx" style="left:307.60px;top:284.41px;font-size:17px;line-height:17px;color:#4E4E4E;">3</span>
<span class="tx" style="left:443.60px;top:284.41px;font-size:17px;line-height:17px;color:#4E4E4E;">4</span>
<span class="tx" style="left:579.60px;top:284.41px;font-size:17px;line-height:17px;color:#4E4E4E;">5</span>
<span class="tx" style="left:715.60px;top:284.41px;font-size:17px;line-height:17px;color:#4E4E4E;">6</span>
<span class="tx" style="left:851.60px;top:284.41px;font-size:17px;line-height:17px;color:#4E4E4E;">7</span>
<span class="tx" style="left:987.60px;top:284.41px;font-size:17px;line-height:17px;color:#4E4E4E;">8</span>
<span class="tx" style="left:1123.60px;top:284.41px;font-size:17px;line-height:17px;color:#4E4E4E;">9</span>
<span class="tx" style="left:1269.60px;top:284.41px;font-size:17px;line-height:17px;color:#4E4E4E;">0</span>
<span class="tx" style="left:1541.60px;top:284.41px;font-size:17px;line-height:17px;color:#4E4E4E;">2</span>
<span class="tx" style="left:1677.60px;top:284.41px;font-size:17px;line-height:17px;color:#4E4E4E;">3</span>
<span class="tx" style="left:45.60px;top:417.41px;font-size:17px;line-height:17px;color:#4E4E4E;">4</span>
<span class="tx" style="left:181.60px;top:417.41px;font-size:17px;line-height:17px;color:#4E4E4E;">5</span>
<span class="tx" style="left:317.60px;top:417.41px;font-size:17px;line-height:17px;color:#4E4E4E;">6</span>
<span class="tx" style="left:453.60px;top:417.41px;font-size:17px;line-height:17px;color:#4E4E4E;">7</span>
<span class="tx" style="left:589.60px;top:417.41px;font-size:17px;line-height:17px;color:#4E4E4E;">8</span>
<span class="tx" style="left:725.60px;top:417.41px;font-size:17px;line-height:17px;color:#4E4E4E;">9</span>
<span class="tx" style="left:851.60px;top:417.41px;font-size:17px;line-height:17px;color:#4E4E4E;">2</span>
<span class="tx" style="left:861.60px;top:417.41px;font-size:17px;line-height:17px;color:#4E4E4E;">0</span>
<span class="tx" style="left:987.60px;top:417.41px;font-size:17px;line-height:17px;color:#4E4E4E;">2</span>
<span class="tx" style="left:1123.60px;top:417.41px;font-size:17px;line-height:17px;color:#4E4E4E;">2</span>
<span class="tx" style="left:1133.60px;top:417.41px;font-size:17px;line-height:17px;color:#4E4E4E;">2</span>
<span class="tx" style="left:1259.60px;top:417.41px;font-size:17px;line-height:17px;color:#4E4E4E;">2</span>
<span class="tx" style="left:1269.60px;top:417.41px;font-size:17px;line-height:17px;color:#4E4E4E;">3</span>
<span class="tx" style="left:1395.60px;top:417.41px;font-size:17px;line-height:17px;color:#4E4E4E;">2</span>
<span class="tx" style="left:1405.60px;top:417.41px;font-size:17px;line-height:17px;color:#4E4E4E;">4</span>
<span class="tx" style="left:1531.60px;top:417.41px;font-size:17px;line-height:17px;color:#4E4E4E;">2</span>
<span class="tx" style="left:1541.60px;top:417.41px;font-size:17px;line-height:17px;color:#4E4E4E;">5</span>
<span class="tx" style="left:1667.60px;top:417.41px;font-size:17px;line-height:17px;color:#4E4E4E;">2</span>
<span class="tx" style="left:1677.60px;top:417.41px;font-size:17px;line-height:17px;color:#4E4E4E;">6</span>
<span class="tx" style="left:35.60px;top:550.41px;font-size:17px;line-height:17px;color:#4E4E4E;">2</span>
<span class="tx" style="left:45.60px;top:550.41px;font-size:17px;line-height:17px;color:#4E4E4E;">7</span>
<span class="tx" style="left:171.60px;top:550.41px;font-size:17px;line-height:17px;color:#4E4E4E;">2</span>
<span class="tx" style="left:181.60px;top:550.41px;font-size:17px;line-height:17px;color:#4E4E4E;">8</span>
<span class="tx" style="left:307.60px;top:550.41px;font-size:17px;line-height:17px;color:#4E4E4E;">2</span>
<span class="tx" style="left:317.60px;top:550.41px;font-size:17px;line-height:17px;color:#4E4E4E;">9</span>
<span class="tx" style="left:443.60px;top:550.41px;font-size:17px;line-height:17px;color:#4E4E4E;">3</span>
<span class="tx" style="left:453.60px;top:550.41px;font-size:17px;line-height:17px;color:#4E4E4E;">0</span>
<span class="tx" style="left:579.60px;top:550.41px;font-size:17px;line-height:17px;color:#4E4E4E;">3</span>
<span class="tx" style="left:715.60px;top:550.41px;font-size:17px;line-height:17px;color:#4E4E4E;">3</span>
<span class="tx" style="left:725.60px;top:550.41px;font-size:17px;line-height:17px;color:#4E4E4E;">2</span>
<span class="tx" style="left:851.60px;top:550.41px;font-size:17px;line-height:17px;color:#4E4E4E;">3</span>
<span class="tx" style="left:861.60px;top:550.41px;font-size:17px;line-height:17px;color:#4E4E4E;">3</span>
<span class="tx" style="left:987.60px;top:550.41px;font-size:17px;line-height:17px;color:#4E4E4E;">3</span>
<span class="tx" style="left:997.60px;top:550.41px;font-size:17px;line-height:17px;color:#4E4E4E;">4</span>
<span class="tx" style="left:1123.60px;top:550.41px;font-size:17px;line-height:17px;color:#4E4E4E;">3</span>
<span class="tx" style="left:1133.60px;top:550.41px;font-size:17px;line-height:17px;color:#4E4E4E;">5</span>
<span class="tx" style="left:1259.60px;top:550.41px;font-size:17px;line-height:17px;color:#4E4E4E;">3</span>
<span class="tx" style="left:1269.60px;top:550.41px;font-size:17px;line-height:17px;color:#4E4E4E;">6</span>
<span class="tx" style="left:1395.60px;top:550.41px;font-size:17px;line-height:17px;color:#4E4E4E;">3</span>
<span class="tx" style="left:1405.60px;top:550.41px;font-size:17px;line-height:17px;color:#4E4E4E;">7</span>
<span class="tx" style="left:1531.60px;top:550.41px;font-size:17px;line-height:17px;color:#4E4E4E;">3</span>
<span class="tx" style="left:1541.60px;top:550.41px;font-size:17px;line-height:17px;color:#4E4E4E;">8</span>
<span class="tx" style="left:1667.60px;top:550.41px;font-size:17px;line-height:17px;color:#4E4E4E;">3</span>
<span class="tx" style="left:1677.60px;top:550.41px;font-size:17px;line-height:17px;color:#4E4E4E;">9</span>
<span class="tx" style="left:35.60px;top:683.41px;font-size:17px;line-height:17px;color:#4E4E4E;">4</span>
<span class="tx" style="left:45.60px;top:683.41px;font-size:17px;line-height:17px;color:#4E4E4E;">0</span>
<span class="tx" style="left:171.60px;top:683.41px;font-size:17px;line-height:17px;color:#4E4E4E;">4</span>
<span class="tx" style="left:307.60px;top:683.41px;font-size:17px;line-height:17px;color:#4E4E4E;">4</span>
<span class="tx" style="left:317.60px;top:683.41px;font-size:17px;line-height:17px;color:#4E4E4E;">2</span>
<span class="tx" style="left:443.60px;top:683.41px;font-size:17px;line-height:17px;color:#4E4E4E;">4</span>
<span class="tx" style="left:453.60px;top:683.41px;font-size:17px;line-height:17px;color:#4E4E4E;">3</span>
<span class="tx" style="left:579.60px;top:683.41px;font-size:17px;line-height:17px;color:#4E4E4E;">4</span>
<span class="tx" style="left:589.60px;top:683.41px;font-size:17px;line-height:17px;color:#4E4E4E;">4</span>
<span class="tx" style="left:715.60px;top:683.41px;font-size:17px;line-height:17px;color:#4E4E4E;">4</span>
<span class="tx" style="left:725.60px;top:683.41px;font-size:17px;line-height:17px;color:#4E4E4E;">5</span>
<span class="tx" style="left:851.60px;top:683.41px;font-size:17px;line-height:17px;color:#4E4E4E;">4</span>
<span class="tx" style="left:861.60px;top:683.41px;font-size:17px;line-height:17px;color:#4E4E4E;">6</span>
<span class="tx" style="left:987.60px;top:683.41px;font-size:17px;line-height:17px;color:#4E4E4E;">4</span>
<span class="tx" style="left:997.60px;top:683.41px;font-size:17px;line-height:17px;color:#4E4E4E;">7</span>
<span class="tx" style="left:1123.60px;top:683.41px;font-size:17px;line-height:17px;color:#4E4E4E;">4</span>
<span class="tx" style="left:1133.60px;top:683.41px;font-size:17px;line-height:17px;color:#4E4E4E;">8</span>
<span class="tx" style="left:1259.60px;top:683.41px;font-size:17px;line-height:17px;color:#4E4E4E;">4</span>
<span class="tx" style="left:1269.60px;top:683.41px;font-size:17px;line-height:17px;color:#4E4E4E;">9</span>
<span class="tx" style="left:1395.60px;top:683.41px;font-size:17px;line-height:17px;color:#4E4E4E;">5</span>
<span class="tx" style="left:1405.60px;top:683.41px;font-size:17px;line-height:17px;color:#4E4E4E;">0</span>
<span class="tx" style="left:1531.60px;top:683.41px;font-size:17px;line-height:17px;color:#4E4E4E;">5</span>
<span class="tx" style="left:1667.60px;top:683.41px;font-size:17px;line-height:17px;color:#4E4E4E;">5</span>
<span class="tx" style="left:1677.60px;top:683.41px;font-size:17px;line-height:17px;color:#4E4E4E;">2</span>
<span class="tx" style="left:35.60px;top:816.41px;font-size:17px;line-height:17px;color:#4E4E4E;">5</span>
<span class="tx" style="left:45.60px;top:816.41px;font-size:17px;line-height:17px;color:#4E4E4E;">3</span>
<span class="tx" style="left:171.60px;top:816.41px;font-size:17px;line-height:17px;color:#4E4E4E;">5</span>
<span class="tx" style="left:181.60px;top:816.41px;font-size:17px;line-height:17px;color:#4E4E4E;">4</span>
<span class="tx" style="left:307.60px;top:816.41px;font-size:17px;line-height:17px;color:#4E4E4E;">5</span>
<span class="tx" style="left:317.60px;top:816.41px;font-size:17px;line-height:17px;color:#4E4E4E;">5</span>
<span class="tx" style="left:443.60px;top:816.41px;font-size:17px;line-height:17px;color:#4E4E4E;">5</span>
<span class="tx" style="left:453.60px;top:816.41px;font-size:17px;line-height:17px;color:#4E4E4E;">6</span>
<span class="tx" style="left:579.60px;top:816.41px;font-size:17px;line-height:17px;color:#4E4E4E;">5</span>
<span class="tx" style="left:589.60px;top:816.41px;font-size:17px;line-height:17px;color:#4E4E4E;">7</span>
<span class="tx" style="left:715.60px;top:816.41px;font-size:17px;line-height:17px;color:#4E4E4E;">5</span>
<span class="tx" style="left:725.60px;top:816.41px;font-size:17px;line-height:17px;color:#4E4E4E;">8</span>
<span class="tx" style="left:851.60px;top:816.41px;font-size:17px;line-height:17px;color:#4E4E4E;">5</span>
<span class="tx" style="left:861.60px;top:816.41px;font-size:17px;line-height:17px;color:#4E4E4E;">9</span>
<span class="tx" style="left:987.60px;top:816.41px;font-size:17px;line-height:17px;color:#4E4E4E;">6</span>
<span class="tx" style="left:997.60px;top:816.41px;font-size:17px;line-height:17px;color:#4E4E4E;">0</span>
<span class="tx" dir="rtl" style="left:806px;top:13.8px;font-size:14px;line-height:14px;color:#fff;transform:scaleX(1.078)">بلوک مقصودیه)تحلیل فضای شهری</span><div class="abs" style="left:1030.3px;top:21.3px;width:4.3px;height:1.1px;background:#F4E4DE"></div>
<svg style="left:35px;top:284px" width="10" height="16" viewBox="0 0 10 16"><rect x="4.95" y="2.1" width="1.9" height="12.9" fill="#D04A26"/><path d="M2.8 5.6 L5.3 3.7" stroke="#D04A26" stroke-width="1.75" stroke-linecap="round"/></svg><svg style="left:1259px;top:284px" width="10" height="16" viewBox="0 0 10 16"><rect x="4.95" y="2.1" width="1.9" height="12.9" fill="#4E4E4E"/><path d="M2.8 5.6 L5.3 3.7" stroke="#4E4E4E" stroke-width="1.75" stroke-linecap="round"/></svg><svg style="left:1395px;top:284px" width="10" height="16" viewBox="0 0 10 16"><rect x="4.95" y="2.1" width="1.9" height="12.9" fill="#4E4E4E"/><path d="M2.8 5.6 L5.3 3.7" stroke="#4E4E4E" stroke-width="1.75" stroke-linecap="round"/></svg><svg style="left:1405px;top:284px" width="10" height="16" viewBox="0 0 10 16"><rect x="4.95" y="2.1" width="1.9" height="12.9" fill="#4E4E4E"/><path d="M2.8 5.6 L5.3 3.7" stroke="#4E4E4E" stroke-width="1.75" stroke-linecap="round"/></svg><svg style="left:1531px;top:284px" width="10" height="16" viewBox="0 0 10 16"><rect x="4.95" y="2.1" width="1.9" height="12.9" fill="#4E4E4E"/><path d="M2.8 5.6 L5.3 3.7" stroke="#4E4E4E" stroke-width="1.75" stroke-linecap="round"/></svg><svg style="left:1667px;top:284px" width="10" height="16" viewBox="0 0 10 16"><rect x="4.95" y="2.1" width="1.9" height="12.9" fill="#4E4E4E"/><path d="M2.8 5.6 L5.3 3.7" stroke="#4E4E4E" stroke-width="1.75" stroke-linecap="round"/></svg><svg style="left:35px;top:417px" width="10" height="16" viewBox="0 0 10 16"><rect x="4.95" y="2.1" width="1.9" height="12.9" fill="#4E4E4E"/><path d="M2.8 5.6 L5.3 3.7" stroke="#4E4E4E" stroke-width="1.75" stroke-linecap="round"/></svg><svg style="left:171px;top:417px" width="10" height="16" viewBox="0 0 10 16"><rect x="4.95" y="2.1" width="1.9" height="12.9" fill="#4E4E4E"/><path d="M2.8 5.6 L5.3 3.7" stroke="#4E4E4E" stroke-width="1.75" stroke-linecap="round"/></svg><svg style="left:307px;top:417px" width="10" height="16" viewBox="0 0 10 16"><rect x="4.95" y="2.1" width="1.9" height="12.9" fill="#4E4E4E"/><path d="M2.8 5.6 L5.3 3.7" stroke="#4E4E4E" stroke-width="1.75" stroke-linecap="round"/></svg><svg style="left:443px;top:417px" width="10" height="16" viewBox="0 0 10 16"><rect x="4.95" y="2.1" width="1.9" height="12.9" fill="#4E4E4E"/><path d="M2.8 5.6 L5.3 3.7" stroke="#4E4E4E" stroke-width="1.75" stroke-linecap="round"/></svg><svg style="left:579px;top:417px" width="10" height="16" viewBox="0 0 10 16"><rect x="4.95" y="2.1" width="1.9" height="12.9" fill="#4E4E4E"/><path d="M2.8 5.6 L5.3 3.7" stroke="#4E4E4E" stroke-width="1.75" stroke-linecap="round"/></svg><svg style="left:715px;top:417px" width="10" height="16" viewBox="0 0 10 16"><rect x="4.95" y="2.1" width="1.9" height="12.9" fill="#4E4E4E"/><path d="M2.8 5.6 L5.3 3.7" stroke="#4E4E4E" stroke-width="1.75" stroke-linecap="round"/></svg><svg style="left:997px;top:417px" width="10" height="16" viewBox="0 0 10 16"><rect x="4.95" y="2.1" width="1.9" height="12.9" fill="#4E4E4E"/><path d="M2.8 5.6 L5.3 3.7" stroke="#4E4E4E" stroke-width="1.75" stroke-linecap="round"/></svg><svg style="left:589px;top:550px" width="10" height="16" viewBox="0 0 10 16"><rect x="4.95" y="2.1" width="1.9" height="12.9" fill="#4E4E4E"/><path d="M2.8 5.6 L5.3 3.7" stroke="#4E4E4E" stroke-width="1.75" stroke-linecap="round"/></svg><svg style="left:181px;top:683px" width="10" height="16" viewBox="0 0 10 16"><rect x="4.95" y="2.1" width="1.9" height="12.9" fill="#4E4E4E"/><path d="M2.8 5.6 L5.3 3.7" stroke="#4E4E4E" stroke-width="1.75" stroke-linecap="round"/></svg><svg style="left:1541px;top:683px" width="10" height="16" viewBox="0 0 10 16"><rect x="4.95" y="2.1" width="1.9" height="12.9" fill="#4E4E4E"/><path d="M2.8 5.6 L5.3 3.7" stroke="#4E4E4E" stroke-width="1.75" stroke-linecap="round"/></svg>
</body></html>
